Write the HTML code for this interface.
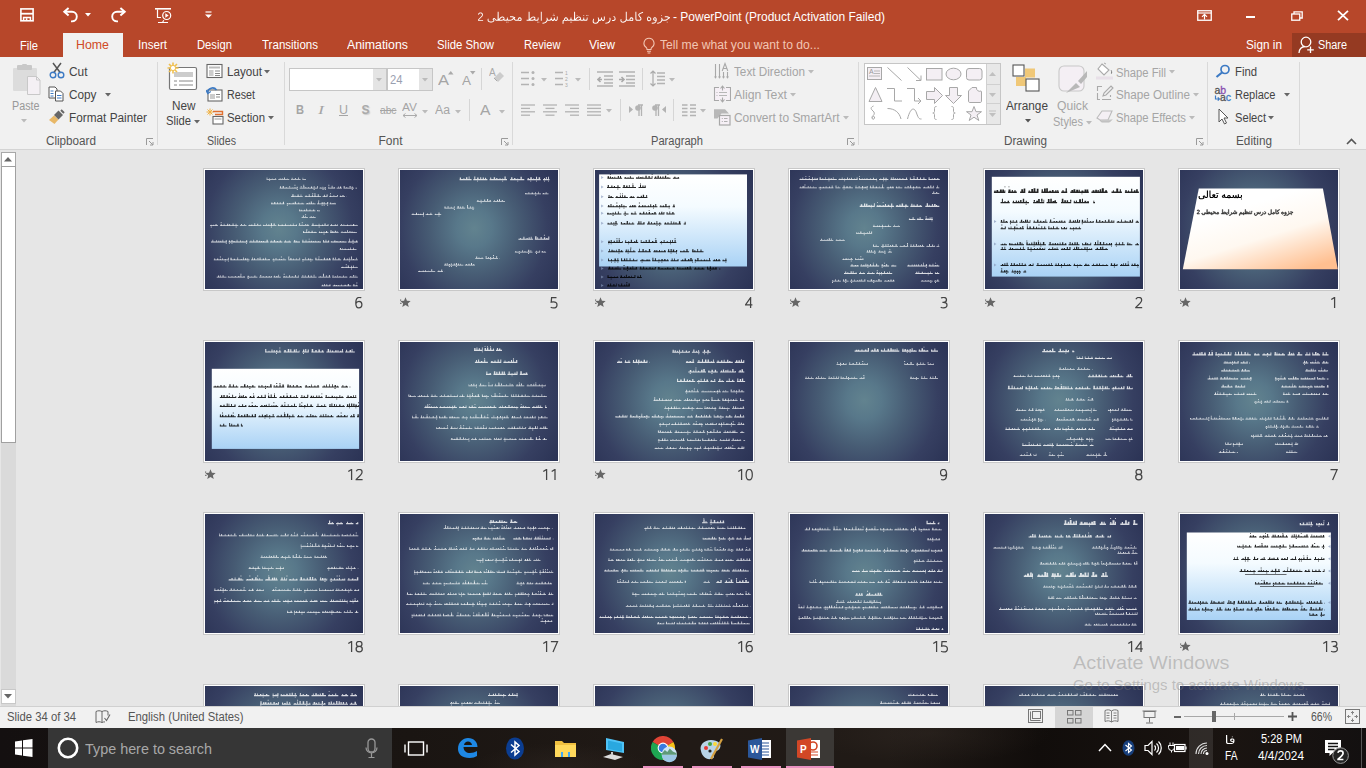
<!DOCTYPE html>
<html><head><meta charset="utf-8"><style>
html,body{margin:0;padding:0;width:1366px;height:768px;overflow:hidden;background:#e6e6e6;font-family:"Liberation Sans", sans-serif;position:relative}
svg{display:block}
</style></head><body>
<div style="position:absolute;left:0px;top:0px;width:1366px;height:57px;background:#b7472a"></div>
<div style="position:absolute;left:1292px;top:33px;width:74px;height:24px;background:#953a22"></div>
<div style="position:absolute;left:63px;top:33px;width:60px;height:24px;background:#f1f1f1"></div>
<svg style="position:absolute;left:19px;top:7px;" width="17" height="17" viewBox="0 0 17 17"><rect x="1.9" y="1.9" width="12.2" height="11.9" fill="none" stroke="#fff" stroke-width="1.6"/><path d="M1.9 6.7h12.2" stroke="#fff" stroke-width="1.8"/><path d="M4.6 14v-3.6h6.8V14" fill="none" stroke="#fff" stroke-width="1.5"/><rect x="6.8" y="11.2" width="1.6" height="2.8" fill="#fff"/></svg>
<svg style="position:absolute;left:62px;top:7px;" width="18" height="16" viewBox="0 0 18 16"><path d="M3 4.8h7a4.8 4.8 0 0 1 0 9.6H9" fill="none" stroke="#fff" stroke-width="1.9"/><path d="M6.6 1.1L2.3 4.8 6.6 8.5" fill="none" stroke="#fff" stroke-width="2"/></svg>
<svg style="position:absolute;left:85px;top:13px;" width="7" height="5" viewBox="0 0 7 5"><path d="M0 0h6L3 3.5z" fill="#fff"/></svg>
<svg style="position:absolute;left:109px;top:7px;" width="18" height="16" viewBox="0 0 18 16"><path d="M15 4.8H8a4.8 4.8 0 0 0 0 9.6H9" fill="none" stroke="#fff" stroke-width="1.9"/><path d="M11.4 1.1L15.7 4.8 11.4 8.5" fill="none" stroke="#fff" stroke-width="2"/></svg>
<svg style="position:absolute;left:155px;top:8px;" width="18" height="16" viewBox="0 0 18 16"><path d="M0 0.8h16" stroke="#fff" stroke-width="1.6"/><path d="M2.5 1.5v8h3.5" fill="none" stroke="#fff" stroke-width="1.2"/><circle cx="11.7" cy="7.5" r="4" fill="none" stroke="#fff" stroke-width="1.2"/><path d="M10.3 5.3l3.4 2.2-3.4 2.2z" fill="#fff"/><path d="M3 14.5h10M7.6 14.3l1.2-2" stroke="#fff" stroke-width="1.1"/></svg>
<svg style="position:absolute;left:205px;top:11px;" width="8" height="8" viewBox="0 0 8 8"><path d="M0.5 1h6" stroke="#fff" stroke-width="1.2"/><path d="M0 3.5h7L3.5 7z" fill="#fff"/></svg>
<svg style="position:absolute;left:0;top:0" width="700" height="30"><path transform="translate(478 11.8) scale(0.9481 1)" d="M199.12 10 199.12 10.75 200 10.75 200 10zM98.38 10 98.38 10.75 99.25 10.75 99.25 10zM97 10 97 10.75 97.75 10.75 97.75 10zM63.75 10 63.75 10.75 64.62 10.75 64.62 10zM62.38 10 62.38 10.75 63.12 10.75 63.12 10zM31.25 10 31.25 10.75 32.12 10.75 32.12 10zM29.88 10 29.88 10.75 30.62 10.75 30.62 10zM139.50 5.88 138.62 5.88 138.88 8 138.38 9.25 137.62 10 136.50 10.62 134.38 11 134.38 12 137.25 11.38 138.25 10.88 139.25 9.88 139.88 7.88 139.75 6.38zM187.12 5.38 186 5.38 185.50 5.62 184.75 6.62 184.75 7.62 185.12 8.38 186.50 9 187.25 9 187.25 9.50 186.38 10.38 185.62 10.75 183.25 11 183.25 12 185.75 11.75 186.88 11.25 187.75 10.50 188.50 8.88 188.50 7.12 188.12 6.12zM185.88 6.75 186.38 6.38 187 6.50 187.38 6.88 187.50 7.88 186.25 7.88 185.75 7.25zM179.12 5 178.38 6.12 178.25 7 178.38 8.25 178.75 8.88 179.88 9.38 180.62 9.38 182.25 8.75 182.88 7.38 182.62 6.38 181.62 5.38 180.62 4.88 179.75 4.75zM179.88 5.75 180.38 5.75 181.25 6.25 181.88 7.12 181.62 8 180.75 8.50 179.62 8.25 179.25 7.62 179.38 6.25zM133.75 4.75 132.75 4.75 132.75 7.38 132.12 8.12 131.38 7.88 130.75 6.75 130.75 5.62 129.75 5.62 129.62 7.12 129 8 128.38 8 127.75 7.38 127.25 5.62 126.25 5.62 126.75 7.50 126.62 8.88 126.12 9.88 124.75 10.88 123 10.88 122.12 10.25 122 8.62 122.50 7 121.62 7 121 8.62 121 10.12 121.25 10.88 122.25 11.75 124.25 12 125.62 11.62 126.38 11.12 127.25 10.12 127.75 8.88 128.12 9.12 129.50 9 130.25 8 131 9 132.50 9.12 133.38 8.38 133.75 7.50zM84.12 4.75 83.12 4.75 83.12 6.88 82.75 7.88 82.38 8.12 81.88 8 81.25 7.38 81 5.62 80 5.62 80 6.88 79.25 8 78.50 8 78 7.50 77.75 6.88 77.75 5.62 76.75 5.62 76.75 7 75.88 8 74 7.88 73.50 7.25 73.25 6 72.25 5.88 72.50 8 72 9.25 71.25 10 70.12 10.62 68 11 68 12 69.75 11.75 71.62 11 72.75 10 73.38 8.62 73.88 9 76.12 9 77.38 8.25 78.38 9.12 79.38 9.12 80 8.88 80.50 8 81.25 9 82.75 9.12 83.75 8.25 84 7.62zM202.50 5.38 199.75 4.50 197 4.38 197 5.38 199 5.38 201 5.88 198.88 7.50 197.50 8 195.25 8 194.62 7.50 194.25 6 193.25 5.88 193.50 8 193 9.25 192.25 10 191.12 10.62 189 11 189 12 190.75 11.75 192.62 11 193.75 10 194.38 8.62 194.88 9 197.38 9 198.88 8.62 201.62 6.62 202.38 6.38zM143.62 4.12 142.50 4.12 143.88 5.75 144.12 7.25 143.50 8 142.88 8.25 141.38 8.12 141.50 9.12 143 9.25 143.88 9 144.75 8.38 145.12 7.62 145 5.88zM193.12 3.50 193.12 4.25 193.88 4.25 193.88 3.50zM80.38 3.50 80.38 4.25 81.12 4.25 81.12 3.50zM78.88 3.50 78.88 4.25 79.75 4.25 79.75 3.50zM115.50 3.25 115.50 4 116.38 4 116.38 3.25zM114.12 3.25 114.12 4 114.88 4 114.88 3.25zM111.12 3.25 111.12 4 112 4 112 3.25zM104.12 3.25 104.12 4 104.88 4 104.88 3.25zM79.62 2 79.62 2.75 80.38 2.75 80.38 2zM1.25 1 0.38 1.75 0 2.75 1 2.88 1.12 2.38 1.75 1.75 3 1.50 4 2.12 4.25 3.12 3.75 4.25 0.38 7.50 0 8.12 0 9 5.38 9 5.38 8.25 1.12 8.12 1.50 7.38 4.75 4.38 5.25 3 4.88 1.62 4.12 1 3.38 0.75 2 0.75zM166 0 166 7.50 166.38 8.38 167.25 9 170.88 9 171.50 8.75 172.25 7.88 172.38 6.38 172 5.62 170.25 3.62 170 3 171 2.25 174.12 1 174.12 0 170.38 1.50 169.12 2.38 169.12 3.75 171.38 6.62 171.25 7.50 170.62 8 167.62 8 167.12 7.62 167 0zM150.25 7.88 150.25 9.25 150.62 10 151.50 10.62 153.25 10.88 155.50 10.12 156.62 8.75 157.25 9 159.75 9 160.25 8.75 161.12 9.25 163 9.12 163.75 8.38 163.88 7 163.25 5.88 162.38 5.50 161.38 5.50 160.75 5.75 160.12 6.38 159.88 7.50 159.50 7.88 157.38 7.88 156.88 7.12 156.88 0 155.88 0 155.88 7.62 155.50 8.62 154 9.75 152.38 9.88 151.75 9.62 151.12 8.62 151.50 7.38 150.50 7.38zM161.38 6.62 162.38 6.62 162.75 7 162.88 7.62 162.50 8.25 161.62 8.38 160.75 7.88 160.88 7.25zM115.62 5.62 114.75 5.62 114.62 7.38 114 8 112.75 8 112.25 7.62 112 6.88 112 5.62 111.12 5.62 111.12 6.88 110.62 7.88 109 8 108.50 7.62 108.62 6.12 107.88 5.12 106.75 4.75 106 4.75 104.62 5.25 103.75 5.88 102.50 7.38 102.38 0 101.38 0 101.25 8 99 7.88 98.50 6.88 98.50 5.62 97.62 5.62 97.62 6.88 97.12 7.88 95.50 8 95 7.62 94.50 6.38 93.88 5.75 92.75 5.38 92.12 5.50 91 6.50 90.75 7.88 90 8.12 89.25 9 89.12 11.88 90.25 11.88 90.25 9.38 91 8.75 92.12 9.25 93.50 9.25 94.38 8.75 95 9 97.25 9 97.88 8.62 98.88 9 105.75 9 107.62 8.38 108.62 9 110.75 9 111.38 8.62 112.38 9 114.38 9 115.12 8.62 115.50 8zM92.62 6.50 93.38 6.62 93.75 7.12 93.75 7.75 93.25 8.38 92.50 8.38 91.75 7.88 91.88 7.12zM107.62 6.38 107.62 6.88 106.12 7.88 103.38 7.88 104.75 6.38 105.88 5.75 107 5.75zM66.25 0 66.25 9 67.25 9 67.25 0zM53.38 0 53.38 7.88 51.25 8 51.25 9 57.75 9 59.38 8.38 60.62 9 62.62 9 63.38 8.62 63.88 7.62 63.88 5.62 63 5.62 63 6.88 62.50 7.88 61 8 60.38 7.62 60.50 6 60.25 5.50 59.62 5 58.62 4.75 57.38 4.88 56.38 5.38 54.50 7.25 54.38 0zM59.50 6.25 59.50 6.88 58.38 7.75 57.50 8 55.25 7.88 56.38 6.62 57.75 5.75 58.88 5.75zM10.12 8.75 10.38 9.38 11.38 10.25 12.88 10.62 14.50 10.62 16 10.25 17.25 9.25 17.25 8.25 16.50 7.50 17 7 18.88 9 25.12 9 26.75 8.38 28 9 30.12 9 30.75 8.62 31.75 9 34.12 9 36.12 8.38 37.62 7.12 38.25 8.12 39.50 9 41.88 9 42.38 8.75 43.25 9.25 44.75 9.25 45.75 8.62 46 8 46 7 45.38 5.88 44.50 5.50 43.50 5.50 42.88 5.75 42.25 6.38 42 7.50 41.62 7.88 39.88 8 39.25 7.62 38.50 6.62 39.25 6.25 39.25 5.38 36.50 4.50 33.75 4.38 33.75 5.38 35.75 5.38 37.75 5.88 34.88 7.88 31.88 7.88 31.38 6.88 31.38 5.62 30.50 5.62 30.50 6.88 30.25 7.62 29.75 8 28.38 8 27.88 7.62 28 6.12 27.25 5.12 26.12 4.75 25.38 4.75 24 5.25 23.12 5.88 21.88 7.38 21.75 0 20.75 0 20.62 8 19.12 8 17.88 6.38 17.38 6.12 16.50 6.12 15.50 7.12 15.50 7.88 16.38 8.75 15.62 9.38 14.62 9.62 12.62 9.62 11.88 9.38 11.12 8.62 11.12 7.50 11.38 6.88 10.38 7 10.12 7.62zM43.50 6.62 44.50 6.62 44.88 7 45 7.62 44.62 8.25 43.75 8.38 42.88 7.88 43 7.25zM27 6.38 27 6.88 25.50 7.88 22.75 7.88 24.12 6.38 25.25 5.75 26.38 5.75z" fill="#fff" fill-rule="evenodd"/></svg>
<span id="t0" style="position:absolute;left:673px;top:10.64px;font-size:12px;line-height:12px;color:#ffffff;white-space:nowrap;">- PowerPoint (Product Activation Failed)</span>
<svg style="position:absolute;left:1197px;top:10px;" width="15" height="11" viewBox="0 0 15 11"><rect x="0.75" y="0.75" width="13.5" height="9.5" fill="none" stroke="#fff" stroke-width="1.3"/><path d="M0.75 3h13.5" stroke="#fff" stroke-width="1.2"/><path d="M7.5 9.5V4.5M5 6.8l2.5-2.5 2.5 2.5" fill="none" stroke="#fff" stroke-width="1.2"/></svg>
<div style="position:absolute;left:1246px;top:16px;width:9px;height:2px;background:#fff"></div>
<svg style="position:absolute;left:1291px;top:11px;" width="12" height="10" viewBox="0 0 12 10"><rect x="0.75" y="3" width="8" height="6.2" fill="none" stroke="#fff" stroke-width="1.3"/><path d="M3 3V0.8h8.2v6.2H9" fill="none" stroke="#fff" stroke-width="1.3"/></svg>
<svg style="position:absolute;left:1337px;top:10px;" width="12" height="11" viewBox="0 0 12 11"><path d="M1 0.8l10 9.4M11 0.8l-10 9.4" stroke="#fff" stroke-width="1.8"/></svg>
<span id="t1" style="position:absolute;left:20px;top:40.34px;font-size:12px;line-height:12px;color:#ffffff;white-space:nowrap;transform:scaleX(0.9305);transform-origin:0 0;">File</span>
<span id="t2" style="position:absolute;left:76px;top:39.34px;font-size:12px;line-height:12px;color:#d04a26;white-space:nowrap;transform:scaleX(1.0307);transform-origin:0 0;">Home</span>
<span id="t3" style="position:absolute;left:138px;top:39.34px;font-size:12px;line-height:12px;color:#ffffff;white-space:nowrap;transform:scaleX(0.9662);transform-origin:0 0;">Insert</span>
<span id="t4" style="position:absolute;left:196.5px;top:39.34px;font-size:12px;line-height:12px;color:#ffffff;white-space:nowrap;transform:scaleX(0.9368);transform-origin:0 0;">Design</span>
<span id="t5" style="position:absolute;left:261.5px;top:39.34px;font-size:12px;line-height:12px;color:#ffffff;white-space:nowrap;transform:scaleX(0.9614);transform-origin:0 0;">Transitions</span>
<span id="t6" style="position:absolute;left:347px;top:39.34px;font-size:12px;line-height:12px;color:#ffffff;white-space:nowrap;transform:scaleX(1.0274);transform-origin:0 0;">Animations</span>
<span id="t7" style="position:absolute;left:436.5px;top:39.34px;font-size:12px;line-height:12px;color:#ffffff;white-space:nowrap;transform:scaleX(0.9493);transform-origin:0 0;">Slide Show</span>
<span id="t8" style="position:absolute;left:523.5px;top:39.34px;font-size:12px;line-height:12px;color:#ffffff;white-space:nowrap;transform:scaleX(0.9274);transform-origin:0 0;">Review</span>
<span id="t9" style="position:absolute;left:588.5px;top:39.34px;font-size:12px;line-height:12px;color:#ffffff;white-space:nowrap;transform:scaleX(1.0079);transform-origin:0 0;">View</span>
<svg style="position:absolute;left:642px;top:37px;" width="14" height="17" viewBox="0 0 14 17"><path d="M7 1.2a5 5 0 0 0-3 9c.8.7 1 1.4 1 2.3h4c0-.9.2-1.6 1-2.3a5 5 0 0 0-3-9z" fill="none" stroke="#f3c7b5" stroke-width="1.1"/><path d="M5 14.3h4M5.6 16h2.8" stroke="#f3c7b5" stroke-width="1.1"/></svg>
<span id="t10" style="position:absolute;left:660px;top:39.34px;font-size:12px;line-height:12px;color:#f2c6b4;white-space:nowrap;transform:scaleX(1.0121);transform-origin:0 0;">Tell me what you want to do...</span>
<span id="t11" style="position:absolute;left:1246px;top:39.34px;font-size:12px;line-height:12px;color:#ffffff;white-space:nowrap;transform:scaleX(0.9808);transform-origin:0 0;">Sign in</span>
<svg style="position:absolute;left:1298px;top:36px;" width="17" height="18" viewBox="0 0 17 18"><circle cx="8" cy="6" r="4.8" fill="none" stroke="#fff" stroke-width="1.3"/><path d="M1 17c0-4 2.8-6.5 6-6.5" fill="none" stroke="#fff" stroke-width="1.3"/><path d="M12.5 10.5v6.5M9.2 13.8h6.6" stroke="#fff" stroke-width="1.3"/></svg>
<span id="t12" style="position:absolute;left:1318px;top:39.34px;font-size:12px;line-height:12px;color:#ffffff;white-space:nowrap;transform:scaleX(0.9054);transform-origin:0 0;">Share</span>
<div style="position:absolute;left:0px;top:57px;width:1366px;height:92px;background:#f1f1f1"></div>
<div style="position:absolute;left:0px;top:149px;width:1366px;height:1px;background:#d4d4d4"></div>
<div style="position:absolute;left:157px;top:62px;width:1px;height:83px;background:#d9d9d9"></div>
<div style="position:absolute;left:284px;top:62px;width:1px;height:83px;background:#d9d9d9"></div>
<div style="position:absolute;left:512px;top:62px;width:1px;height:83px;background:#d9d9d9"></div>
<div style="position:absolute;left:858px;top:62px;width:1px;height:83px;background:#d9d9d9"></div>
<div style="position:absolute;left:1207px;top:62px;width:1px;height:83px;background:#d9d9d9"></div>
<div style="position:absolute;left:1299px;top:62px;width:1px;height:83px;background:#d9d9d9"></div>
<span id="t13" style="position:absolute;left:46px;top:134.54px;font-size:12px;line-height:12px;color:#555;white-space:nowrap;transform:scaleX(0.9732);transform-origin:0 0;">Clipboard</span>
<span id="t14" style="position:absolute;left:206.5px;top:134.54px;font-size:12px;line-height:12px;color:#555;white-space:nowrap;transform:scaleX(0.8872);transform-origin:0 0;">Slides</span>
<span id="t15" style="position:absolute;left:378.5px;top:134.54px;font-size:12px;line-height:12px;color:#555;white-space:nowrap;">Font</span>
<span id="t16" style="position:absolute;left:651px;top:134.54px;font-size:12px;line-height:12px;color:#555;white-space:nowrap;transform:scaleX(0.9278);transform-origin:0 0;">Paragraph</span>
<span id="t17" style="position:absolute;left:1003.5px;top:134.54px;font-size:12px;line-height:12px;color:#555;white-space:nowrap;transform:scaleX(0.9769);transform-origin:0 0;">Drawing</span>
<span id="t18" style="position:absolute;left:1235.5px;top:134.54px;font-size:12px;line-height:12px;color:#555;white-space:nowrap;transform:scaleX(0.9808);transform-origin:0 0;">Editing</span>
<svg style="position:absolute;left:146px;top:138px;" width="8" height="8" viewBox="0 0 8 8"><path d="M0.5 7V0.5H7" fill="none" stroke="#9a9a9a" stroke-width="1"/><path d="M3 3l4 4M7 4v3H4" fill="none" stroke="#9a9a9a" stroke-width="1"/></svg>
<svg style="position:absolute;left:501px;top:138px;" width="8" height="8" viewBox="0 0 8 8"><path d="M0.5 7V0.5H7" fill="none" stroke="#9a9a9a" stroke-width="1"/><path d="M3 3l4 4M7 4v3H4" fill="none" stroke="#9a9a9a" stroke-width="1"/></svg>
<svg style="position:absolute;left:847px;top:138px;" width="8" height="8" viewBox="0 0 8 8"><path d="M0.5 7V0.5H7" fill="none" stroke="#9a9a9a" stroke-width="1"/><path d="M3 3l4 4M7 4v3H4" fill="none" stroke="#9a9a9a" stroke-width="1"/></svg>
<svg style="position:absolute;left:1196px;top:138px;" width="8" height="8" viewBox="0 0 8 8"><path d="M0.5 7V0.5H7" fill="none" stroke="#9a9a9a" stroke-width="1"/><path d="M3 3l4 4M7 4v3H4" fill="none" stroke="#9a9a9a" stroke-width="1"/></svg>
<svg style="position:absolute;left:1346px;top:138px;" width="11" height="7" viewBox="0 0 11 7"><path d="M1 6l4.5-4.5L10 6" fill="none" stroke="#555" stroke-width="1.6"/></svg>
<svg style="position:absolute;left:12px;top:64px;" width="31" height="32" viewBox="0 0 31 32"><rect x="1" y="4" width="24" height="23" rx="1" fill="#dcdcdc"/><rect x="5" y="1" width="15" height="5" rx="1" fill="#c8c8c8"/><rect x="10" y="0" width="5" height="3" rx="1" fill="#c8c8c8"/><path d="M15.5 12.5h9l3.5 3.5v14.5h-12.5z" fill="#f4f0f4" stroke="#c8c8c8" stroke-width="1"/><path d="M24.5 12.5v3.5h3.5" fill="none" stroke="#c8c8c8"/></svg>
<span id="t19" style="position:absolute;left:11.5px;top:100.34px;font-size:12px;line-height:12px;color:#999;white-space:nowrap;transform:scaleX(0.8961);transform-origin:0 0;">Paste</span>
<svg style="position:absolute;left:21px;top:119px;" width="7" height="4" viewBox="0 0 7 4"><path d="M0 0h6L3 3.5z" fill="#bbb"/></svg>
<svg style="position:absolute;left:49px;top:62px;" width="16" height="17" viewBox="0 0 16 17"><path d="M4 1l7.5 10M12 1L4.5 11" stroke="#555" stroke-width="1.5"/><circle cx="4" cy="13" r="2.8" fill="none" stroke="#3c7ac4" stroke-width="1.4"/><circle cx="12" cy="13" r="2.8" fill="none" stroke="#3c7ac4" stroke-width="1.4"/></svg>
<span id="t20" style="position:absolute;left:68.5px;top:66.24px;font-size:12px;line-height:12px;color:#444444;white-space:nowrap;transform:scaleX(0.9900);transform-origin:0 0;">Cut</span>
<svg style="position:absolute;left:48px;top:86px;" width="17" height="16" viewBox="0 0 17 16"><path d="M1 1h6l2 2v9H1z" fill="#fff" stroke="#555" stroke-width="1"/><path d="M7.5 5h5l2.5 2.5V15H7.5z" fill="#fff" stroke="#555" stroke-width="1"/><path d="M2.5 5h3M2.5 7.5h3M2.5 10h3" stroke="#3c7ac4"/><path d="M9 9.5h4.5M9 12h4.5" stroke="#3c7ac4"/></svg>
<span id="t21" style="position:absolute;left:68.5px;top:89.34px;font-size:12px;line-height:12px;color:#444444;white-space:nowrap;transform:scaleX(0.9816);transform-origin:0 0;">Copy</span>
<svg style="position:absolute;left:105px;top:93px;" width="7" height="4" viewBox="0 0 7 4"><path d="M0 0h6L3 3.5z" fill="#666"/></svg>
<svg style="position:absolute;left:48px;top:109px;" width="18" height="16" viewBox="0 0 18 16"><path d="M1 11l5-4.5 4.5 4-4 4.5z" fill="#e8b868"/><path d="M6 6l4.5-4.5 4.5 4.5-4.5 4.5z" fill="#666"/><path d="M13 1l3 3" stroke="#666" stroke-width="2"/></svg>
<span id="t22" style="position:absolute;left:68.5px;top:111.64px;font-size:12px;line-height:12px;color:#444444;white-space:nowrap;transform:scaleX(0.9829);transform-origin:0 0;">Format Painter</span>
<svg style="position:absolute;left:166px;top:62px;" width="33" height="29" viewBox="0 0 33 29"><rect x="3.5" y="5.5" width="27" height="22" rx="1.5" fill="#fff" stroke="#777" stroke-width="1.2"/><rect x="8" y="10" width="19" height="5" fill="#ccc"/><path d="M8 19h3M13 19h14M8 23h3M13 23h14" stroke="#888" stroke-width="1"/><g stroke="#f0c050" stroke-width="1.6"><path d="M7 0.5v11M1.5 6h11M3 2l8 8M11 2l-8 8"/></g><circle cx="7" cy="6" r="2.6" fill="#fff" stroke="#f0c050" stroke-width="1"/></svg>
<span id="t23" style="position:absolute;left:171.5px;top:100.24px;font-size:12px;line-height:12px;color:#444444;white-space:nowrap;transform:scaleX(0.9785);transform-origin:0 0;">New</span>
<span id="t24" style="position:absolute;left:166px;top:115.34px;font-size:12px;line-height:12px;color:#444444;white-space:nowrap;transform:scaleX(0.9368);transform-origin:0 0;">Slide</span>
<svg style="position:absolute;left:194px;top:120px;" width="7" height="4" viewBox="0 0 7 4"><path d="M0 0h6L3 3.5z" fill="#666"/></svg>
<svg style="position:absolute;left:206px;top:63px;" width="17" height="16" viewBox="0 0 17 16"><rect x="1" y="1.5" width="15" height="13" fill="#fff" stroke="#666" stroke-width="1.1"/><rect x="3" y="3.5" width="11" height="2" fill="#bbb"/><rect x="3" y="7" width="4.5" height="6" fill="#ccc"/><path d="M9 8h5M9 10.5h5M9 12.5h5" stroke="#888"/></svg>
<span id="t25" style="position:absolute;left:226.5px;top:66.24px;font-size:12px;line-height:12px;color:#444444;white-space:nowrap;transform:scaleX(0.9714);transform-origin:0 0;">Layout</span>
<svg style="position:absolute;left:264px;top:70px;" width="7" height="4" viewBox="0 0 7 4"><path d="M0 0h6L3 3.5z" fill="#666"/></svg>
<svg style="position:absolute;left:206px;top:86px;" width="17" height="16" viewBox="0 0 17 16"><rect x="2" y="4" width="14" height="11" fill="#fff" stroke="#666" stroke-width="1.1"/><rect x="4" y="8" width="5" height="5" fill="#ccc"/><path d="M10 8.5h4M10 11h4" stroke="#888"/><path d="M1.5 6.5a5 5 0 0 1 9-2.5" fill="none" stroke="#3c7ac4" stroke-width="1.6"/><path d="M0 4l1.8 3.5 3-2" fill="none" stroke="#3c7ac4" stroke-width="1.4"/></svg>
<span id="t26" style="position:absolute;left:226.5px;top:89.34px;font-size:12px;line-height:12px;color:#444444;white-space:nowrap;transform:scaleX(0.8929);transform-origin:0 0;">Reset</span>
<svg style="position:absolute;left:206px;top:108px;" width="18" height="17" viewBox="0 0 18 17"><g stroke="#f0b040" stroke-width="1"><path d="M4 0.5v7M0.5 4h7M1.5 1.5l5 5M6.5 1.5l-5 5"/></g><path d="M7 3.5h9.5v3H9" fill="none" stroke="#e07030" stroke-width="1.4"/><rect x="7" y="8.5" width="10" height="7.5" fill="#fff" stroke="#666" stroke-width="1.1"/><path d="M8.5 11h7" stroke="#aaa" stroke-width="1.2"/></svg>
<span id="t27" style="position:absolute;left:226.5px;top:111.64px;font-size:12px;line-height:12px;color:#444444;white-space:nowrap;transform:scaleX(0.9493);transform-origin:0 0;">Section</span>
<svg style="position:absolute;left:268px;top:116px;" width="7" height="4" viewBox="0 0 7 4"><path d="M0 0h6L3 3.5z" fill="#666"/></svg>
<div style="position:absolute;left:289px;top:68px;width:98px;height:23px;background:#fff;border:1px solid #c6c6c6;box-sizing:border-box"></div>
<div style="position:absolute;left:373px;top:69px;width:13px;height:21px;background:#e4e4e4"></div>
<svg style="position:absolute;left:376px;top:78px;" width="7" height="4" viewBox="0 0 7 4"><path d="M0 0h6L3 3.5z" fill="#bbb"/></svg>
<div style="position:absolute;left:387px;top:68px;width:46px;height:23px;background:#fff;border:1px solid #c6c6c6;box-sizing:border-box"></div>
<div style="position:absolute;left:419px;top:69px;width:13px;height:21px;background:#e4e4e4"></div>
<svg style="position:absolute;left:422px;top:78px;" width="7" height="4" viewBox="0 0 7 4"><path d="M0 0h6L3 3.5z" fill="#bbb"/></svg>
<span id="t28" style="position:absolute;left:390px;top:74.04px;font-size:12px;line-height:12px;color:#9aa0b0;white-space:nowrap;transform:scaleX(0.9357);transform-origin:0 0;">24</span>
<span id="t29" style="position:absolute;left:438px;top:72.30px;font-size:15px;line-height:15px;color:#a5a5a5;white-space:nowrap;transform:scaleX(1.0983);transform-origin:0 0;">A</span>
<svg style="position:absolute;left:448px;top:71px;" width="6" height="4" viewBox="0 0 6 4"><path d="M0 3.5h5.5L2.75 0z" fill="#aaa"/></svg>
<span id="t30" style="position:absolute;left:462px;top:74.84px;font-size:12px;line-height:12px;color:#a5a5a5;white-space:nowrap;transform:scaleX(1.1228);transform-origin:0 0;">A</span>
<svg style="position:absolute;left:470px;top:71px;" width="6" height="4" viewBox="0 0 6 4"><path d="M0 0h5.5L2.75 3.5z" fill="#aaa"/></svg>
<div style="position:absolute;left:481px;top:68px;width:1px;height:22px;background:#d6d6d6"></div>
<svg style="position:absolute;left:489px;top:67px;" width="17" height="16" viewBox="0 0 17 16"><text x="0" y="9" font-size="10" fill="#aaa" font-family="Liberation Sans">A</text><path d="M5 11l6-6 4 4-6 6z" fill="#ccc"/><path d="M5 11l3 3" stroke="#aaa"/></svg>
<span id="t31" style="position:absolute;left:295.5px;top:103.84px;font-size:12px;line-height:12px;color:#a5a5a5;white-space:nowrap;transform:scaleX(0.9225);transform-origin:0 0;font-weight:bold">B</span>
<span id="t32" style="position:absolute;left:317.5px;top:103.84px;font-size:12px;line-height:12px;color:#a5a5a5;white-space:nowrap;transform:scaleX(1.5000);transform-origin:0 0;font-style:italic;font-family:Liberation Serif">I</span>
<span id="t33" style="position:absolute;left:339px;top:103.84px;font-size:12px;line-height:12px;color:#a5a5a5;white-space:nowrap;transform:scaleX(1.0378);transform-origin:0 0;text-decoration:underline">U</span>
<span id="t34" style="position:absolute;left:361.5px;top:103.84px;font-size:12px;line-height:12px;color:#aaa;white-space:nowrap;font-weight:bold;text-shadow:1px 1px 1px #ccc">S</span>
<span id="t35" style="position:absolute;left:379.5px;top:104.69px;font-size:11px;line-height:11px;color:#a5a5a5;white-space:nowrap;transform:scaleX(0.9296);transform-origin:0 0;text-decoration:line-through">abc</span>
<span id="t36" style="position:absolute;left:402px;top:101.69px;font-size:11px;line-height:11px;color:#a5a5a5;white-space:nowrap;transform:scaleX(1.0823);transform-origin:0 0;">AV</span>
<svg style="position:absolute;left:402px;top:113px;" width="16" height="5" viewBox="0 0 16 5"><path d="M1 2.5h14M3.5 0.5l-2.5 2 2.5 2M12.5 0.5l2.5 2-2.5 2" fill="none" stroke="#aaa" stroke-width="1"/></svg>
<svg style="position:absolute;left:422px;top:110px;" width="7" height="4" viewBox="0 0 7 4"><path d="M0 0h6L3 3.5z" fill="#bbb"/></svg>
<span id="t37" style="position:absolute;left:435px;top:103.84px;font-size:12px;line-height:12px;color:#a5a5a5;white-space:nowrap;transform:scaleX(1.0213);transform-origin:0 0;">Aa</span>
<svg style="position:absolute;left:455px;top:110px;" width="7" height="4" viewBox="0 0 7 4"><path d="M0 0h6L3 3.5z" fill="#bbb"/></svg>
<div style="position:absolute;left:469px;top:99px;width:1px;height:22px;background:#d6d6d6"></div>
<span id="t38" style="position:absolute;left:480px;top:102.30px;font-size:15px;line-height:15px;color:#a5a5a5;white-space:nowrap;transform:scaleX(1.0484);transform-origin:0 0;">A</span>
<svg style="position:absolute;left:499px;top:110px;" width="7" height="4" viewBox="0 0 7 4"><path d="M0 0h6L3 3.5z" fill="#bbb"/></svg>
<svg style="position:absolute;left:521px;top:70px;" width="14" height="17" viewBox="0 0 14 17"><path d="M0 2.5h8M0 8.5h8M0 14.5h8" stroke="#b3b3b3" stroke-width="1.3"/><circle cx="12" cy="2.5" r="1.5" fill="#b3b3b3"/><circle cx="12" cy="8.5" r="1.5" fill="#b3b3b3"/><circle cx="12" cy="14.5" r="1.5" fill="#b3b3b3"/></svg>
<svg style="position:absolute;left:541px;top:78px;" width="7" height="4" viewBox="0 0 7 4"><path d="M0 0h6L3 3.5z" fill="#bbb"/></svg>
<svg style="position:absolute;left:555px;top:70px;" width="15" height="17" viewBox="0 0 15 17"><path d="M0 2.5h8M0 8.5h8M0 14.5h8" stroke="#b3b3b3" stroke-width="1.3"/><text x="10" y="5" font-size="5" fill="#aaa">1</text><text x="10" y="11" font-size="5" fill="#aaa">2</text><text x="10" y="17" font-size="5" fill="#aaa">3</text></svg>
<svg style="position:absolute;left:575px;top:78px;" width="7" height="4" viewBox="0 0 7 4"><path d="M0 0h6L3 3.5z" fill="#bbb"/></svg>
<div style="position:absolute;left:589px;top:68px;width:1px;height:22px;background:#d6d6d6"></div>
<svg style="position:absolute;left:597px;top:71px;" width="17" height="16" viewBox="0 0 17 16"><path d="M0 1h16M7 5h9M7 8.5h9M7 12h9M0 15h16" stroke="#b3b3b3" stroke-width="1.3"/><path d="M5 8.5H1M3.5 6l-2.5 2.5 2.5 2.5" fill="none" stroke="#aaa" stroke-width="1.6"/></svg>
<svg style="position:absolute;left:619px;top:71px;" width="17" height="16" viewBox="0 0 17 16"><path d="M0 1h16M7 5h9M7 8.5h9M7 12h9M0 15h16" stroke="#b3b3b3" stroke-width="1.3"/><path d="M0 8.5h4.5M2.5 6l2.5 2.5-2.5 2.5" fill="none" stroke="#aaa" stroke-width="1.6"/></svg>
<div style="position:absolute;left:642px;top:68px;width:1px;height:22px;background:#d6d6d6"></div>
<svg style="position:absolute;left:650px;top:70px;" width="16" height="17" viewBox="0 0 16 17"><path d="M3 1v15M0.5 3.5L3 1l2.5 2.5M0.5 13.5L3 16l2.5-2.5" fill="none" stroke="#aaa" stroke-width="1.2"/><path d="M7 3h8M7 6.5h8M7 10h8M7 13.5h8" stroke="#b3b3b3" stroke-width="1.3"/></svg>
<svg style="position:absolute;left:669px;top:78px;" width="7" height="4" viewBox="0 0 7 4"><path d="M0 0h6L3 3.5z" fill="#bbb"/></svg>
<svg style="position:absolute;left:521px;top:104px;" width="14" height="13" viewBox="0 0 14 13"><path d="M0 1.0h14" stroke="#b3b3b3" stroke-width="1.3"/><path d="M0 4.4h9" stroke="#b3b3b3" stroke-width="1.3"/><path d="M0 7.8h14" stroke="#b3b3b3" stroke-width="1.3"/><path d="M0 11.2h9" stroke="#b3b3b3" stroke-width="1.3"/></svg>
<svg style="position:absolute;left:543px;top:104px;" width="14" height="13" viewBox="0 0 14 13"><path d="M0.0 1.0h14" stroke="#b3b3b3" stroke-width="1.3"/><path d="M2.5 4.4h9" stroke="#b3b3b3" stroke-width="1.3"/><path d="M0.0 7.8h14" stroke="#b3b3b3" stroke-width="1.3"/><path d="M2.5 11.2h9" stroke="#b3b3b3" stroke-width="1.3"/></svg>
<svg style="position:absolute;left:565px;top:104px;" width="14" height="13" viewBox="0 0 14 13"><path d="M0 1.0h14" stroke="#b3b3b3" stroke-width="1.3"/><path d="M5 4.4h9" stroke="#b3b3b3" stroke-width="1.3"/><path d="M0 7.8h14" stroke="#b3b3b3" stroke-width="1.3"/><path d="M5 11.2h9" stroke="#b3b3b3" stroke-width="1.3"/></svg>
<svg style="position:absolute;left:587px;top:104px;" width="14" height="13" viewBox="0 0 14 13"><path d="M0 1.0h14" stroke="#b3b3b3" stroke-width="1.3"/><path d="M0 4.4h14" stroke="#b3b3b3" stroke-width="1.3"/><path d="M0 7.8h14" stroke="#b3b3b3" stroke-width="1.3"/><path d="M0 11.2h14" stroke="#b3b3b3" stroke-width="1.3"/></svg>
<svg style="position:absolute;left:606px;top:109px;" width="7" height="4" viewBox="0 0 7 4"><path d="M0 0h6L3 3.5z" fill="#bbb"/></svg>
<div style="position:absolute;left:620px;top:99px;width:1px;height:22px;background:#d6d6d6"></div>
<svg style="position:absolute;left:629px;top:104px;" width="14" height="13" viewBox="0 0 14 13"><path d="M0 2l4 3.5-4 3.5z" fill="#b3b3b3"/><path d="M9 1h5M10 1v11M12.5 1v11" stroke="#b3b3b3" stroke-width="1.3"/><circle cx="9" cy="4" r="2.8" fill="#b3b3b3"/></svg>
<svg style="position:absolute;left:652px;top:104px;" width="14" height="13" viewBox="0 0 14 13"><path d="M14 2l-4 3.5 4 3.5z" fill="#b3b3b3"/><path d="M3 1h5M4 1v11M6.5 1v11" stroke="#b3b3b3" stroke-width="1.3"/><circle cx="3" cy="4" r="2.8" fill="#b3b3b3"/></svg>
<div style="position:absolute;left:673px;top:99px;width:1px;height:22px;background:#d6d6d6"></div>
<svg style="position:absolute;left:682px;top:104px;" width="14" height="13" viewBox="0 0 14 13"><path d="M0 1h5.5M0 4.5h5.5M0 8h5.5M0 11.5h5.5M8 1h6M8 4.5h6M8 8h6M8 11.5h6" stroke="#b3b3b3" stroke-width="1.3"/></svg>
<svg style="position:absolute;left:700px;top:109px;" width="7" height="4" viewBox="0 0 7 4"><path d="M0 0h6L3 3.5z" fill="#bbb"/></svg>
<svg style="position:absolute;left:713px;top:62px;" width="17" height="18" viewBox="0 0 17 18"><g fill="none" stroke="#a8a8a8" stroke-width="1.1"><path d="M2.5 2v13M6.5 2v13M10.5 10v5M14.5 10v5"/><path d="M9.2 9l2.8-7.5 2.8 7.5M10.3 6.5h3.4"/></g><path d="M1 14.5h3l-1.5 2.2zM5 14.5h3l-1.5 2.2zM9 14.5h3l-1.5 2.2zM13 14.5h3l-1.5 2.2z" fill="#a8a8a8"/></svg>
<span id="t39" style="position:absolute;left:733.5px;top:66.34px;font-size:12px;line-height:12px;color:#a5a5a5;white-space:nowrap;transform:scaleX(0.9766);transform-origin:0 0;">Text Direction</span>
<svg style="position:absolute;left:808px;top:70px;" width="7" height="4" viewBox="0 0 7 4"><path d="M0 0h6L3 3.5z" fill="#bbb"/></svg>
<svg style="position:absolute;left:713px;top:85px;" width="18" height="18" viewBox="0 0 18 18"><rect x="2" y="2.5" width="15" height="13" fill="#f6f0f6"/><path d="M6 2.5H1.5v13H6M13 2.5h4.5v13H13" fill="none" stroke="#a8a8a8" stroke-width="1.1"/><path d="M9.5 1.5v4M9.5 12.5v4.5" stroke="#a8a8a8" stroke-width="1.1"/><path d="M7.5 3.5l2-2.3 2 2.3M7.5 14.5l2 2.3 2-2.3" fill="none" stroke="#a8a8a8" stroke-width="1.1"/><path d="M3.5 7.5h1M6 7.5h8M3.5 10.5h1M6 10.5h8" stroke="#b0b0b0" stroke-width="0.9"/></svg>
<span id="t40" style="position:absolute;left:733.5px;top:89.34px;font-size:12px;line-height:12px;color:#a5a5a5;white-space:nowrap;transform:scaleX(1.0229);transform-origin:0 0;">Align Text</span>
<svg style="position:absolute;left:790px;top:93px;" width="7" height="4" viewBox="0 0 7 4"><path d="M0 0h6L3 3.5z" fill="#bbb"/></svg>
<svg style="position:absolute;left:713px;top:108px;" width="18" height="18" viewBox="0 0 18 18"><path d="M1 1.2h11l4 4.3H8.5l-4 5H1z" fill="#b8b8b8"/><rect x="6.5" y="7.5" width="10.5" height="9.5" fill="#f6f0f6" stroke="#a8a8a8" stroke-width="1.2"/><path d="M8.8 10.5h1M11 10.5h3.5M8.8 13.5h1M11 13.5h3.5" stroke="#a8a8a8" stroke-width="0.9"/></svg>
<span id="t41" style="position:absolute;left:733.5px;top:111.64px;font-size:12px;line-height:12px;color:#a5a5a5;white-space:nowrap;transform:scaleX(0.9950);transform-origin:0 0;">Convert to SmartArt</span>
<svg style="position:absolute;left:843px;top:116px;" width="7" height="4" viewBox="0 0 7 4"><path d="M0 0h6L3 3.5z" fill="#bbb"/></svg>
<div style="position:absolute;left:864px;top:63px;width:137px;height:62px;background:#fff;border:1px solid #c6c6c6;box-sizing:border-box"></div>
<div style="position:absolute;left:986px;top:64px;width:14px;height:60px;background:#e8e8e8;border-left:1px solid #d0d0d0;box-sizing:border-box"></div>
<div style="position:absolute;left:986px;top:84px;width:14px;height:1px;background:#d0d0d0"></div>
<div style="position:absolute;left:986px;top:103px;width:14px;height:1px;background:#d0d0d0"></div>
<svg style="position:absolute;left:989px;top:72px;" width="8" height="5" viewBox="0 0 8 5"><path d="M0 4h7L3.5 0z" fill="#c0c0c0"/></svg>
<svg style="position:absolute;left:989px;top:93px;" width="8" height="5" viewBox="0 0 8 5"><path d="M0 0h7L3.5 4z" fill="#c0c0c0"/></svg>
<svg style="position:absolute;left:989px;top:110px;" width="8" height="8" viewBox="0 0 8 8"><path d="M0 1h7" stroke="#c0c0c0"/><path d="M0 3h7L3.5 7z" fill="#c0c0c0"/></svg>
<svg style="position:absolute;left:864px;top:64px;" width="120" height="58" viewBox="0 0 120 58"><rect x="3.5" y="3.5" width="14" height="12" stroke="#a8a8a8" stroke-width="1" fill="#f4eff4"/><text x="5" y="10" font-size="7" fill="#999" font-family="Liberation Sans">A</text><path d="M10 7h6M10 9.5h6M5 12h11" stroke="#aaa" stroke-width="0.8"/><path d="M23.5 3.5l14 13" stroke="#a8a8a8" stroke-width="1" fill="none"/><path d="M43.5 3.5l13.5 13M57 11.5v5h-5" stroke="#a8a8a8" stroke-width="1" fill="none"/><rect x="62.5" y="4.5" width="15.5" height="11.5" stroke="#a8a8a8" stroke-width="1" fill="#f4eff4"/><ellipse cx="89.5" cy="10" rx="7.5" ry="5.8" stroke="#a8a8a8" stroke-width="1" fill="#f4eff4"/><rect x="102.5" y="4.5" width="15.5" height="11.5" rx="2.5" stroke="#a8a8a8" stroke-width="1" fill="#f4eff4"/><path d="M5 37.5l6.5-14 6.5 14z" stroke="#a8a8a8" stroke-width="1" fill="#f4eff4"/><path d="M23 24.5h7.5v12.5H38" stroke="#a8a8a8" stroke-width="1" fill="none"/><path d="M43 24.5h7.5V37H57M54 34l3 3-3 3" stroke="#a8a8a8" stroke-width="1" fill="none"/><path d="M62.5 27.5h8v-4l8 8-8 8v-4h-8z" stroke="#a8a8a8" stroke-width="1" fill="#f4eff4"/><path d="M85.5 23.5h8v8h4l-8 8-8-8h4z" stroke="#a8a8a8" stroke-width="1" fill="#f4eff4"/><path d="M104.5 27l3.5-3.5h4.5a3.2 3.2 0 0 0 4.5 3.5 1 1 0 0 1 .5 .5v9.5c0 1-.5 1.5-1.5 1.5h-10c-1 0-1.5-.5-1.5-1.5z" stroke="#a8a8a8" stroke-width="1" fill="#f4eff4"/><path d="M9.5 42c-2.5 1-3 2.5-1.5 4s3 2.5 2 4.5-2.5 1.5-2 3.5 2 1.5 2.5 0-1-2.5-2-.5" stroke="#a8a8a8" stroke-width="1" fill="none"/><path d="M23.5 44.5c7 0 12 4 13.5 10.5" stroke="#a8a8a8" stroke-width="1" fill="none"/><path d="M43.5 55c3-12 7-12 9-6s3 6 5 6" stroke="#a8a8a8" stroke-width="1" fill="none"/><path d="M72.5 42.5c-1.5 0-2 .5-2 2v3c0 1-.7 1.5-1.7 1.5 1 0 1.7.5 1.7 1.5v3c0 1.5.5 2 2 2" stroke="#a8a8a8" stroke-width="1" fill="none"/><path d="M87.5 42.5c1.5 0 2 .5 2 2v3c0 1 .7 1.5 1.7 1.5-1 0-1.7.5-1.7 1.5v3c0 1.5-.5 2-2 2" stroke="#a8a8a8" stroke-width="1" fill="none"/><path d="M110 42.5l2 5.2h5.5l-4.5 3.3 1.8 5.5-4.8-3.3-4.8 3.3 1.8-5.5-4.5-3.3h5.5z" stroke="#a8a8a8" stroke-width="1" fill="#f4eff4"/></svg>
<svg style="position:absolute;left:1012px;top:64px;" width="29" height="29" viewBox="0 0 29 29"><rect x="1" y="1" width="11" height="11" fill="#fff" stroke="#555" stroke-width="1.1"/><rect x="4" y="4" width="9" height="9" fill="none"/><rect x="13" y="4.5" width="10" height="9" fill="#f0c878"/><rect x="4" y="13" width="10" height="9" fill="#f0c878"/><rect x="14" y="15" width="13" height="12" fill="#fff" stroke="#555" stroke-width="1.1"/></svg>
<span id="t42" style="position:absolute;left:1006px;top:100.44px;font-size:12px;line-height:12px;color:#444444;white-space:nowrap;transform:scaleX(0.9835);transform-origin:0 0;">Arrange</span>
<svg style="position:absolute;left:1025px;top:119px;" width="7" height="4" viewBox="0 0 7 4"><path d="M0 0h6L3 3.5z" fill="#555"/></svg>
<svg style="position:absolute;left:1058px;top:65px;" width="31" height="30" viewBox="0 0 31 30"><rect x="1" y="1" width="25" height="25" rx="5" fill="#f4eff4" stroke="#c8c8c8" stroke-width="1.1"/><path d="M8 28l10-10 4 4z" fill="#b8b8b8"/><path d="M20 16l9-10v6l-6 7z" fill="#b8b8b8"/></svg>
<span id="t43" style="position:absolute;left:1057px;top:100.44px;font-size:12px;line-height:12px;color:#a5a5a5;white-space:nowrap;transform:scaleX(1.0102);transform-origin:0 0;">Quick</span>
<span id="t44" style="position:absolute;left:1053px;top:115.64px;font-size:12px;line-height:12px;color:#a5a5a5;white-space:nowrap;transform:scaleX(0.9178);transform-origin:0 0;">Styles</span>
<svg style="position:absolute;left:1086px;top:121px;" width="7" height="4" viewBox="0 0 7 4"><path d="M0 0h6L3 3.5z" fill="#bbb"/></svg>
<svg style="position:absolute;left:1096px;top:62px;" width="18" height="18" viewBox="0 0 18 18"><path d="M6 2l7 6-5 5-6-6z" fill="#fff" stroke="#aaa" stroke-width="1.1"/><path d="M8 1l2 1" stroke="#aaa"/><path d="M15 8c1 2 1 3 0 4" stroke="#aaa"/><rect x="0" y="14.5" width="17" height="3" fill="#e8e0e8"/></svg>
<span id="t45" style="position:absolute;left:1116px;top:66.64px;font-size:12px;line-height:12px;color:#a5a5a5;white-space:nowrap;transform:scaleX(0.9368);transform-origin:0 0;">Shape Fill</span>
<svg style="position:absolute;left:1169px;top:70px;" width="7" height="4" viewBox="0 0 7 4"><path d="M0 0h6L3 3.5z" fill="#bbb"/></svg>
<svg style="position:absolute;left:1096px;top:85px;" width="18" height="16" viewBox="0 0 18 16"><path d="M6 1.5H1.5v13h13V10" fill="none" stroke="#aaa" stroke-width="1.1" stroke-dasharray="9 2"/><path d="M7 11l1-3 7-7 2 2-7 7z" fill="none" stroke="#aaa" stroke-width="1.1"/></svg>
<span id="t46" style="position:absolute;left:1116px;top:89.34px;font-size:12px;line-height:12px;color:#a5a5a5;white-space:nowrap;transform:scaleX(0.9729);transform-origin:0 0;">Shape Outline</span>
<svg style="position:absolute;left:1193px;top:93px;" width="7" height="4" viewBox="0 0 7 4"><path d="M0 0h6L3 3.5z" fill="#bbb"/></svg>
<svg style="position:absolute;left:1096px;top:110px;" width="17" height="13" viewBox="0 0 17 13"><path d="M1 8l5-7h10l-4 9H4z" fill="#f4eff4" stroke="#bbb" stroke-width="1.1"/><path d="M4 10l1.5 2h8l2.5-2.5" fill="#c8c8c8" stroke="#bbb"/></svg>
<span id="t47" style="position:absolute;left:1116px;top:111.64px;font-size:12px;line-height:12px;color:#a5a5a5;white-space:nowrap;transform:scaleX(0.9396);transform-origin:0 0;">Shape Effects</span>
<svg style="position:absolute;left:1189px;top:116px;" width="7" height="4" viewBox="0 0 7 4"><path d="M0 0h6L3 3.5z" fill="#bbb"/></svg>
<svg style="position:absolute;left:1215px;top:64px;" width="16" height="14" viewBox="0 0 16 14"><circle cx="10" cy="5.5" r="4" fill="none" stroke="#3c7ac4" stroke-width="1.7"/><path d="M7 8.5l-5.5 4.5" stroke="#3c7ac4" stroke-width="2.2"/></svg>
<span id="t48" style="position:absolute;left:1234.5px;top:66.34px;font-size:12px;line-height:12px;color:#444444;white-space:nowrap;transform:scaleX(0.9424);transform-origin:0 0;">Find</span>
<svg style="position:absolute;left:1214px;top:85px;" width="19" height="18" viewBox="0 0 19 18"><g font-family="Liberation Sans" font-size="10.5" stroke-width="0.3"><text x="0.5" y="8.5" fill="#555" stroke="#555">a</text><text x="6.3" y="8.5" fill="#8a4fb0" stroke="#8a4fb0">b</text><text x="6" y="15.8" fill="#555" stroke="#555">a</text><text x="11.8" y="15.8" fill="#3c7ac4" stroke="#3c7ac4">c</text></g><path d="M1.5 10.5v3.5H5M3.8 12.3l1.6 1.7-1.6 1.7" fill="none" stroke="#3c7ac4" stroke-width="1.2"/></svg>
<span id="t49" style="position:absolute;left:1234.5px;top:89.34px;font-size:12px;line-height:12px;color:#444444;white-space:nowrap;transform:scaleX(0.9198);transform-origin:0 0;">Replace</span>
<svg style="position:absolute;left:1284px;top:93px;" width="7" height="4" viewBox="0 0 7 4"><path d="M0 0h6L3 3.5z" fill="#666"/></svg>
<svg style="position:absolute;left:1218px;top:108px;" width="11" height="17" viewBox="0 0 11 17"><path d="M1 1v13l3-3 2.5 5 2-1-2.5-5h4z" fill="#fff" stroke="#555" stroke-width="1"/></svg>
<span id="t50" style="position:absolute;left:1234.5px;top:111.64px;font-size:12px;line-height:12px;color:#444444;white-space:nowrap;transform:scaleX(0.9293);transform-origin:0 0;">Select</span>
<svg style="position:absolute;left:1268px;top:116px;" width="7" height="4" viewBox="0 0 7 4"><path d="M0 0h6L3 3.5z" fill="#666"/></svg>
<div style="position:absolute;left:0px;top:150px;width:1366px;height:557px;background:#e6e6e6"></div>
<div style="position:absolute;left:1px;top:152px;width:15px;height:554px;background:#dadada"></div>
<div style="position:absolute;left:1px;top:152px;width:15px;height:15px;background:#fff;border:1px solid #a8a8a8;box-sizing:border-box"></div>
<svg style="position:absolute;left:4px;top:157px;" width="9" height="5" viewBox="0 0 9 5"><path d="M0 4.5h8L4 0z" fill="#666"/></svg>
<div style="position:absolute;left:1px;top:166px;width:15px;height:277px;background:#fff;border:1px solid #a0a0a0;box-sizing:border-box"></div>
<div style="position:absolute;left:1px;top:689px;width:15px;height:15px;background:#fff;border:1px solid #c8c8c8;box-sizing:border-box"></div>
<svg style="position:absolute;left:4px;top:694px;" width="9" height="5" viewBox="0 0 9 5"><path d="M0 0h8L4 4.5z" fill="#666"/></svg>
<svg width="0" height="0" style="position:absolute"><defs><linearGradient id="gbox" x1="0" y1="0" x2="0" y2="1"><stop offset="0" stop-color="#ffffff"/><stop offset="0.35" stop-color="#f4fbff"/><stop offset="1" stop-color="#a9d2f5"/></linearGradient><linearGradient id="gtrap" x1="0.35" y1="0.25" x2="0.8" y2="1"><stop offset="0" stop-color="#ffffff"/><stop offset="0.45" stop-color="#fff8f0"/><stop offset="1" stop-color="#ffbf90"/></linearGradient></defs></svg><div style="position:absolute;left:203px;top:168px;width:162px;height:123px;overflow:hidden"><div style="position:absolute;left:0;top:0;width:162px;height:123px;box-sizing:border-box;border:1px solid #c8c8c8;background:#fff"></div><div style="position:absolute;left:2px;top:2px;width:158px;height:119px;background:radial-gradient(ellipse 62% 88% at 47% 49%, #62838f 0%, #58788a 18%, #475c74 45%, #363f61 75%, #2c3456 100%)"></div>
<svg style="position:absolute;left:2px;top:2px;" width="158" height="119" viewBox="0 0 158 119"><path d="M61.5 8.9h9.9v0.8h-9.9zM61.7 7.5h0.6v1.4h-0.6zM64.2 8.4h0.8v0.5h-0.8zM64.2 10.2h.9v.9h-.9zM66.9 8.4h0.6v0.5h-0.6zM70.2 8.3h0.7v0.6h-0.7zM73.3 8.9h11v0.8h-11zM74.7 8.4h1v0.5h-1zM76.9 8.3h0.7v0.6h-0.7zM79.1 7.6h0.9v1.3h-0.9zM81.9 8.4h0.6v0.5h-0.6zM85.9 8.9h9.7v0.8h-9.7zM86.8 7.8h0.7v1.1h-0.7zM89.9 8.1h0.9v0.8h-0.9zM93.3 7.4h0.7v1.5h-0.7zM97.3 8.9h3.7v0.8h-3.7zM97.6 7.7h0.6v1.1h-0.6zM74.6 17.7h18.1v0.8h-18.1zM75.1 16.2h0.9v1.5h-0.9zM77.7 16h1.1v1.7h-1.1zM80.8 17.2h1v0.5h-1zM84.4 16h0.7v1.6h-0.7zM87.4 17.2h0.8v0.4h-0.8zM89.5 17.2h1v0.5h-1zM89.5 14.8h.9v.9h-.9zM91.8 16.7h0.9v1h-0.9zM91.8 19h.9v.9h-.9zM94.6 17.7h18.3v0.8h-18.3zM95.8 15.9h0.7v1.7h-0.7zM98.3 15.9h1.1v1.7h-1.1zM98.3 14.8h.9v.9h-.9zM100.5 16.9h0.7v0.8h-0.7zM103.4 16.9h0.6v0.8h-0.6zM106 16.4h1.1v1.3h-1.1zM108.7 16.3h0.9v1.3h-0.9zM108.7 19h.9v.9h-.9zM112.2 16.1h0.7v1.6h-0.7zM114.5 17.7h6.6v0.8h-6.6zM115.5 17.2h0.6v0.5h-0.6zM117.6 16.7h0.6v0.9h-0.6zM117.6 19h.9v.9h-.9zM119.8 17.1h0.8v0.6h-0.8zM119.8 19h.9v.9h-.9zM123 17.7h7.2v0.8h-7.2zM123.4 16.7h0.8v0.9h-0.8zM123.4 14.8h.9v.9h-.9zM126.7 15.8h0.8v1.9h-0.8zM128.8 17.1h0.8v0.6h-0.8zM131.6 17.7h5.3v0.8h-5.3zM133.1 16.5h0.6v1.2h-0.6zM135 16.5h1.1v1.2h-1.1zM138.5 17.7h10.5v0.8h-10.5zM138.7 16.1h0.9v1.6h-0.9zM141.2 16.9h1v0.7h-1zM144.6 16h1v1.6h-1zM146.8 16.5h0.8v1.2h-0.8zM146.8 19h.9v.9h-.9zM150.5 17.7h1.5v0.8h-1.5zM86 26.2h11.7v0.8h-11.7zM87.4 24.3h1.1v1.9h-1.1zM89.7 25.4h0.7v0.7h-0.7zM92.6 24.4h1v1.8h-1zM95.7 24.5h0.6v1.6h-0.6zM99.8 26.2h16.3v0.8h-16.3zM100.6 25.5h1v0.7h-1zM103.8 24.3h0.8v1.9h-0.8zM107.3 24.7h0.7v1.5h-0.7zM107.3 23.3h.9v.9h-.9zM109.5 24.4h1v1.8h-1zM109.5 23.3h.9v.9h-.9zM112.8 24.3h0.9v1.9h-0.9zM117.5 26.2h5.2v0.8h-5.2zM118.9 24.8h0.9v1.4h-0.9zM121.6 24.4h1v1.7h-1zM124.2 26.2h8.6v0.8h-8.6zM125.1 25.4h0.8v0.8h-0.8zM125.1 23.3h.9v.9h-.9zM128.5 25.2h0.8v0.9h-0.8zM132 25.1h0.8v1h-0.8zM134.7 26.2h5.3v0.8h-5.3zM135.3 25.5h0.6v0.7h-0.6zM137.5 25h1v1.1h-1zM141.8 26.2h0.2v0.8h-0.2zM66 33.5h13.4v0.8h-13.4zM66.4 32.6h1v0.8h-1zM69.2 31.9h1.1v1.6h-1.1zM72.2 32.3h0.8v1.2h-0.8zM74.8 32.2h0.8v1.2h-0.8zM77.9 31.7h1.1v1.7h-1.1zM81.7 33.5h17.6v0.8h-17.6zM81.9 32.9h0.8v0.6h-0.8zM81.9 34.8h.9v.9h-.9zM84.3 32.9h0.9v0.5h-0.9zM87.7 32.8h1v0.6h-1zM89.8 31.7h1.1v1.7h-1.1zM93.3 32.5h0.8v1h-0.8zM96.7 32.8h0.8v0.6h-0.8zM100.8 33.5h9.8v0.8h-9.8zM101.9 33h0.9v0.4h-0.9zM103.8 32.6h0.9v0.9h-0.9zM105.8 31.6h1v1.9h-1zM107.9 32.7h0.6v0.8h-0.6zM111.9 33.5h11.3v0.8h-11.3zM113.3 31.8h0.7v1.6h-0.7zM113.3 30.6h.9v.9h-.9zM116.7 32.2h1v1.3h-1zM116.7 34.8h.9v.9h-.9zM118.7 32h0.8v1.4h-0.8zM118.7 34.8h.9v.9h-.9zM122.2 32.1h1v1.4h-1zM122.2 34.8h.9v.9h-.9zM124.5 33.5h6.5v0.8h-6.5zM125.2 32.5h0.9v0.9h-0.9zM127.6 32.9h0.9v0.6h-0.9zM129.6 32.8h0.6v0.6h-0.6zM94 40.5h16.4v0.8h-16.4zM94.4 39.3h0.7v1.2h-0.7zM96.4 39.7h0.6v0.8h-0.6zM99.2 39.8h0.8v0.7h-0.8zM101.3 38.8h0.8v1.6h-0.8zM104.6 39.5h0.8v1h-0.8zM108.2 39.5h1v0.9h-1zM112.1 40.5h2.9v0.8h-2.9zM112.2 39.9h0.6v0.6h-0.6zM96.6 47.2h6.3v0.8h-6.3zM97.9 45.4h0.9v1.7h-0.9zM100.2 46.3h0.8v0.8h-0.8zM100.2 44.3h.9v.9h-.9zM104.4 47.2h6.3v0.8h-6.3zM105.8 45.9h0.7v1.2h-0.7zM108.3 46.2h0.6v0.9h-0.6zM5 55.2h8v0.8h-8zM5.8 54.8h0.7v0.4h-0.7zM5.8 56.5h.9v.9h-.9zM8.3 54.7h0.6v0.5h-0.6zM10.6 53.9h0.9v1.3h-0.9zM15.1 55.2h18.2v0.8h-18.2zM15.7 54.3h1.1v0.9h-1.1zM15.7 52.3h.9v.9h-.9zM18.8 53.8h0.6v1.4h-0.6zM22.2 53.8h1v1.4h-1zM24.3 54h0.8v1.2h-0.8zM27.6 53.5h0.9v1.7h-0.9zM30.7 53.7h0.7v1.5h-0.7zM30.7 56.5h.9v.9h-.9zM34.9 55.2h6.6v0.8h-6.6zM36.1 53.9h0.9v1.2h-0.9zM39.2 54h0.6v1.1h-0.6zM43.3 55.2h13v0.8h-13zM44.3 54.7h1v0.5h-1zM46.3 54.4h1v0.8h-1zM49.4 53.3h0.8v1.9h-0.8zM52.2 53.7h1v1.4h-1zM55.2 54.6h0.6v0.5h-0.6zM57.9 55.2h13.5v0.8h-13.5zM57.9 54.7h0.7v0.5h-0.7zM61 53.7h0.7v1.4h-0.7zM63.6 54.1h0.6v1.1h-0.6zM65.9 53.3h1.1v1.9h-1.1zM65.9 56.5h.9v.9h-.9zM68.6 53.5h1.1v1.6h-1.1zM72.8 55.2h19.2v0.8h-19.2zM73.1 53.9h0.6v1.3h-0.6zM76.7 54.6h1v0.6h-1zM80.1 53.7h0.7v1.5h-0.7zM82.8 54.7h0.6v0.4h-0.6zM85.5 54.3h0.6v0.9h-0.6zM87.9 53.5h0.6v1.7h-0.6zM91.2 54.6h0.8v0.6h-0.8zM93.6 55.2h10.6v0.8h-10.6zM94.2 53.2h0.9v1.9h-0.9zM96.8 54.3h0.6v0.8h-0.6zM96.8 52.3h.9v.9h-.9zM100.1 54.3h1.1v0.8h-1.1zM102.5 54h0.7v1.2h-0.7zM106.4 55.2h17.2v0.8h-17.2zM107.4 53.4h1.1v1.8h-1.1zM110.5 54.7h1v0.5h-1zM113.7 53.8h0.7v1.4h-0.7zM113.7 56.5h.9v.9h-.9zM117.1 54.6h0.8v0.6h-0.8zM119.5 53.6h1.1v1.5h-1.1zM122.6 54.3h0.9v0.9h-0.9zM125 55.2h8.1v0.8h-8.1zM126.3 54h0.7v1.2h-0.7zM129.9 54.1h0.6v1.1h-0.6zM132 54.2h0.6v0.9h-0.6zM135 55.2h17.8v0.8h-17.8zM136.1 54.1h0.8v1h-0.8zM138.6 54.2h0.6v0.9h-0.6zM142.2 54.6h0.8v0.6h-0.8zM145.6 54.4h0.7v0.7h-0.7zM148.1 54.1h1.1v1.1h-1.1zM151.5 54.7h0.6v0.4h-0.6zM98 62.2h13.8v0.8h-13.8zM98 61.2h1.1v1h-1.1zM101.4 60.3h0.7v1.9h-0.7zM101.4 59.3h.9v.9h-.9zM103.5 61h0.9v1.2h-0.9zM106.6 60.8h1v1.4h-1zM109.5 61.7h1v0.5h-1zM113.8 62.2h9.6v0.8h-9.6zM114 61.4h0.9v0.8h-0.9zM116.1 61.7h0.9v0.5h-0.9zM118.6 61.4h0.9v0.7h-0.9zM118.6 63.5h.9v.9h-.9zM121 61.1h1.1v1.1h-1.1zM125.1 62.2h8.5v0.8h-8.5zM125.5 60.3h1v1.9h-1zM127.4 61h0.9v1.2h-0.9zM129.8 60.7h1.1v1.4h-1.1zM131.7 61.2h0.8v0.9h-0.8zM135.8 62.2h16.1v0.8h-16.1zM136.5 61.4h1.1v0.7h-1.1zM139.8 61.4h0.7v0.8h-0.7zM142.2 60.3h0.8v1.8h-0.8zM144.5 61.1h0.9v1h-0.9zM146.7 61.2h0.7v1h-0.7zM148.8 61.7h0.6v0.5h-0.6zM6 71.6h16v0.8h-16zM7.5 69.7h0.7v1.8h-0.7zM11 70h0.6v1.5h-0.6zM13.5 70.6h0.7v1h-0.7zM15.4 70.7h0.8v0.8h-0.8zM17.5 69.7h0.7v1.9h-0.7zM20.8 69.9h0.8v1.6h-0.8zM20.8 72.9h.9v.9h-.9zM23.6 71.6h18.8v0.8h-18.8zM23.9 70.6h1.1v1h-1.1zM23.9 72.9h.9v.9h-.9zM26.5 69.9h1v1.6h-1zM26.5 72.9h.9v.9h-.9zM28.5 71.1h1.1v0.5h-1.1zM31.7 69.8h0.7v1.8h-0.7zM35.2 70.2h0.7v1.3h-0.7zM37.6 70.7h0.6v0.8h-0.6zM41.1 70.2h1.1v1.4h-1.1zM41.1 72.9h.9v.9h-.9zM44.2 71.6h19.4v0.8h-19.4zM45.6 70.6h0.7v1h-0.7zM48.4 69.7h0.7v1.8h-0.7zM51.5 69.9h1v1.7h-1zM54 70.7h0.8v0.9h-0.8zM56 70.9h1v0.7h-1zM58 71.1h0.9v0.5h-0.9zM61.6 69.8h1.1v1.7h-1.1zM64.9 71.6h12.5v0.8h-12.5zM65.9 70.5h0.7v1.1h-0.7zM68.9 70.1h1v1.4h-1zM71.9 71h1v0.6h-1zM74.8 70.6h1v1h-1zM78.8 71.6h7.3v0.8h-7.3zM80.2 70.3h0.7v1.3h-0.7zM83.8 70.4h0.7v1.2h-0.7zM88.5 71.6h6.5v0.8h-6.5zM89.2 69.9h1v1.6h-1zM91.2 70.7h0.6v0.8h-0.6zM97 71.6h19v0.8h-19zM97.5 69.8h0.8v1.7h-0.8zM100.7 69.7h0.6v1.8h-0.6zM103.7 70.8h0.8v0.7h-0.8zM103.7 68.7h.9v.9h-.9zM105.9 70.8h0.9v0.8h-0.9zM108.2 71.1h0.7v0.4h-0.7zM110.4 70.7h0.7v0.9h-0.7zM113.2 71.1h0.6v0.5h-0.6zM117.9 71.6h6.4v0.8h-6.4zM118.1 70.1h0.8v1.5h-0.8zM120.6 69.7h0.7v1.8h-0.7zM123.1 70.5h1v1h-1zM125.7 71.6h15.9v0.8h-15.9zM126 71.2h1.1v0.4h-1.1zM129.3 70.5h1.1v1h-1.1zM131.5 71.1h0.9v0.4h-0.9zM134.9 71h0.9v0.5h-0.9zM137.7 70.9h0.7v0.6h-0.7zM142.9 71.6h9.9v0.8h-9.9zM144.1 69.7h0.7v1.9h-0.7zM144.1 68.7h.9v.9h-.9zM147.6 69.7h0.8v1.9h-0.8zM147.6 72.9h.9v.9h-.9zM151.1 70.6h1.1v1h-1.1zM134.7 79.2h16.8v0.8h-16.8zM135 78.1h1v1h-1zM137.2 78.4h0.8v0.7h-0.8zM139.8 78.6h0.7v0.6h-0.7zM143.2 78.7h0.9v0.5h-0.9zM145.2 77.5h0.6v1.7h-0.6zM148 77.8h0.7v1.4h-0.7zM8.8 89.4h14.9v0.8h-14.9zM9.5 88.3h0.6v1.1h-0.6zM12.2 88.6h1v0.8h-1zM14.9 88.7h0.8v0.7h-0.8zM14.9 86.5h.9v.9h-.9zM17 88.3h0.6v1.1h-0.6zM19.8 88.9h0.9v0.5h-0.9zM19.8 90.7h.9v.9h-.9zM22.9 87.8h0.8v1.6h-0.8zM22.9 90.7h.9v.9h-.9zM25.3 89.4h19.3v0.8h-19.3zM25.5 87.7h1.1v1.7h-1.1zM28.8 88.7h1.1v0.7h-1.1zM32.4 87.6h0.7v1.8h-0.7zM35.8 88.9h0.8v0.5h-0.8zM38 87.6h0.7v1.8h-0.7zM40.1 88.2h1.1v1.2h-1.1zM42.5 88.2h0.7v1.2h-0.7zM42.5 90.7h.9v.9h-.9zM46 89.4h19v0.8h-19zM47 87.6h0.7v1.8h-0.7zM49.1 88.2h0.9v1.2h-0.9zM52.5 88.1h0.9v1.2h-0.9zM54.6 87.5h0.9v1.9h-0.9zM57.8 88.6h1.1v0.8h-1.1zM60.3 87.8h0.8v1.6h-0.8zM63.5 88.9h1v0.5h-1zM67.4 89.4h13.8v0.8h-13.8zM68.4 88.5h0.6v0.9h-0.6zM68.4 90.7h.9v.9h-.9zM70.6 88h0.8v1.3h-0.8zM74 88.8h0.7v0.6h-0.7zM75.9 89h0.8v0.4h-0.8zM75.9 86.5h.9v.9h-.9zM78.4 88.6h0.9v0.7h-0.9zM83.2 89.4h12.1v0.8h-12.1zM83.4 87.5h0.7v1.8h-0.7zM83.4 86.5h.9v.9h-.9zM85.4 88h1v1.4h-1zM88 88.6h0.6v0.8h-0.6zM90.9 88.4h0.9v0.9h-0.9zM94.4 87.8h0.7v1.5h-0.7zM97.1 89.4h11.1v0.8h-11.1zM97.5 88.9h1v0.5h-1zM97.5 90.7h.9v.9h-.9zM100.3 87.5h0.6v1.8h-0.6zM103.2 88.2h0.9v1.2h-0.9zM105.4 88.5h0.7v0.9h-0.7zM105.4 90.7h.9v.9h-.9zM110.3 89.4h15.7v0.8h-15.7zM110.4 87.7h1v1.7h-1zM113.5 88.3h0.7v1.1h-0.7zM113.5 86.5h.9v.9h-.9zM115.8 88.9h0.7v0.5h-0.7zM118.9 87.7h1v1.7h-1zM121.7 88.3h1v1.1h-1zM124.1 88h1.1v1.4h-1.1zM127.3 89.4h8.9v0.8h-8.9zM127.7 87.8h1.1v1.5h-1.1zM130.1 87.6h0.7v1.7h-0.7zM133.5 88h0.9v1.4h-0.9zM138 89.4h14.8v0.8h-14.8zM139 87.7h0.8v1.7h-0.8zM141.9 88.5h0.7v0.9h-0.7zM143.9 87.6h0.6v1.8h-0.6zM143.9 90.7h.9v.9h-.9zM146 87.5h0.8v1.8h-0.8zM146 86.5h.9v.9h-.9zM147.9 88.9h0.9v0.5h-0.9zM151 87.8h0.6v1.5h-0.6zM136 97.2h16.8v0.8h-16.8zM137.3 96.7h1v0.5h-1zM140.8 96.6h0.7v0.6h-0.7zM140.8 94.3h.9v.9h-.9zM142.8 95.5h1v1.7h-1zM146.1 95.8h0.7v1.4h-0.7zM146.1 98.5h.9v.9h-.9zM148.2 95.6h0.7v1.6h-0.7zM150.8 96.7h0.7v0.4h-0.7zM11.7 106.7h9.8v0.8h-9.8zM13.1 105.5h1v1.2h-1zM15.1 105.6h0.8v1h-0.8zM17.6 105.2h0.9v1.5h-0.9zM22.8 106.7h17.3v0.8h-17.3zM23.1 106.3h0.7v0.4h-0.7zM26.6 106.3h0.8v0.4h-0.8zM29.9 106h0.8v0.7h-0.8zM33.2 105.9h1.1v0.8h-1.1zM35.5 105.2h0.8v1.5h-0.8zM35.5 103.8h.9v.9h-.9zM38.5 106.1h1v0.5h-1zM42.1 106.7h10.3v0.8h-10.3zM42.7 105.7h1.1v1h-1.1zM42.7 108h.9v.9h-.9zM46.1 106.2h0.7v0.4h-0.7zM49.5 105.5h0.8v1.2h-0.8zM54.2 106.7h13v0.8h-13zM55.3 105.1h0.9v1.5h-0.9zM57.7 106h1v0.6h-1zM60.9 106h0.8v0.7h-0.8zM63.8 106.1h0.8v0.6h-0.8zM66.1 106h0.7v0.7h-0.7zM68.5 106.7h7.3v0.8h-7.3zM68.9 105.8h0.9v0.9h-0.9zM71.3 106h1.1v0.7h-1.1zM73.4 104.8h0.6v1.9h-0.6zM78 106.7h16v0.8h-16zM78.7 106h0.9v0.7h-0.9zM78.7 103.8h.9v.9h-.9zM80.9 105.7h0.6v1h-0.6zM84.2 105.2h0.8v1.5h-0.8zM86.8 106h0.9v0.6h-0.9zM90 104.9h0.8v1.8h-0.8zM93.2 105.6h0.7v1h-0.7zM96.1 106.7h15.5v0.8h-15.5zM97.4 105.2h0.9v1.4h-0.9zM99.9 105.3h0.6v1.4h-0.6zM103.1 105.2h0.9v1.5h-0.9zM105.7 105.6h0.9v1.1h-0.9zM108.7 104.8h0.7v1.8h-0.7zM113.3 106.7h12.3v0.8h-12.3zM114.8 106.2h0.9v0.5h-0.9zM118 104.8h0.9v1.8h-0.9zM118 103.8h.9v.9h-.9zM120.9 105.4h1v1.2h-1zM123.9 105h0.9v1.7h-0.9zM127.1 106.7h15.3v0.8h-15.3zM127.7 105.1h0.6v1.6h-0.6zM130.2 106.2h0.7v0.5h-0.7zM132.1 105.6h0.8v1h-0.8zM134.6 105.9h0.7v0.8h-0.7zM138.1 105.5h0.7v1.2h-0.7zM140.7 105.9h0.6v0.7h-0.6zM144.3 106.7h8.5v0.8h-8.5zM145.2 105.9h1.1v0.7h-1.1zM148.2 105h1v1.6h-1zM150.6 105.4h0.6v1.2h-0.6zM116.5 115.5h9v0.8h-9zM117.1 114.7h0.8v0.8h-0.8zM119 114h0.7v1.5h-0.7zM121.4 114.3h0.8v1.1h-0.8zM124.4 114.5h1.1v1h-1.1zM127.7 115.5h18.6v0.8h-18.6zM128.9 114.8h1v0.6h-1zM130.8 115h1.1v0.4h-1.1zM133.1 114.9h0.6v0.6h-0.6zM136.4 114.5h0.6v0.9h-0.6zM139.6 114.8h1.1v0.7h-1.1zM142.8 114h1.1v1.4h-1.1zM147.7 115.5h5.1v0.8h-5.1zM148.5 113.9h0.8v1.5h-0.8zM151.4 114.7h0.7v0.8h-0.7zM151.4 112.6h.9v.9h-.9z" fill="#fff" opacity=".8"/></svg>
</div>
<svg style="position:absolute;left:355.1px;top:296.6px" width="9.4" height="12" viewBox="0 0 9.4 12"><g fill="none" stroke="#444" stroke-width="1.25"><path transform="translate(0.0 0)" d="M6.3 0.8C5.7 0.5 5 0.4 4.3 0.4C2 0.4 0.8 2.6 0.8 6C0.8 9.2 1.9 10.9 3.8 10.9C5.6 10.9 6.9 9.5 6.9 7.5C6.9 5.5 5.7 4.3 4 4.3C2.5 4.3 1.3 5.3 0.9 6.5"/></g></svg>
<div style="position:absolute;left:398px;top:168px;width:162px;height:123px;overflow:hidden"><div style="position:absolute;left:0;top:0;width:162px;height:123px;box-sizing:border-box;border:1px solid #c8c8c8;background:#fff"></div><div style="position:absolute;left:2px;top:2px;width:158px;height:119px;background:radial-gradient(ellipse 62% 88% at 47% 49%, #62838f 0%, #58788a 18%, #475c74 45%, #363f61 75%, #2c3456 100%)"></div>
<svg style="position:absolute;left:2px;top:2px;" width="158" height="119" viewBox="0 0 158 119"><path d="M59.6 9.1h12v1.1h-12zM59.8 7.5h1.2v1.6h-1.2zM63.2 8.6h1.4v0.6h-1.4zM66 7.2h1.4v1.9h-1.4zM68.7 6.6h0.8v2.6h-0.8zM73.3 9.1h14.1v1.1h-14.1zM74.3 6.6h1v2.5h-1zM77.1 7.6h1.5v1.6h-1.5zM77.1 10.7h.9v.9h-.9zM80.2 7.3h1v1.9h-1zM82.7 7.6h1.2v1.5h-1.2zM85 7.7h1.1v1.5h-1.1zM89.6 9.1h17.4v1.1h-17.4zM90.2 7.5h1v1.6h-1zM93.7 7.2h1.4v1.9h-1.4zM96.2 7.9h1.2v1.2h-1.2zM99.4 8.5h1.3v0.6h-1.3zM102.2 8.5h1v0.7h-1zM102.2 10.7h.9v.9h-.9zM104.5 6.6h1.2v2.5h-1.2zM110.1 9.1h14.2v1.1h-14.2zM111.1 7.3h1.3v1.9h-1.3zM114.1 8.1h1.3v1h-1.3zM117.3 8.4h0.9v0.8h-0.9zM117.3 10.7h.9v.9h-.9zM120.5 6.7h1.3v2.5h-1.3zM127.3 9.1h13.4v1.1h-13.4zM127.7 7.9h1.1v1.2h-1.1zM130.3 7.2h1.5v1.9h-1.5zM130.3 10.7h.9v.9h-.9zM133.2 8.5h0.9v0.6h-0.9zM136 6.7h1.1v2.5h-1.1zM136 10.7h.9v.9h-.9zM138.6 7.3h1.5v1.8h-1.5zM143 9.1h6.5v1.1h-6.5zM144 8.1h0.9v1h-0.9zM144 10.7h.9v.9h-.9zM145.9 7.1h0.9v2h-0.9zM148 6.8h0.9v2.4h-0.9zM148 10.7h.9v.9h-.9zM125 23.5h16v0.8h-16zM125.3 23h1v0.5h-1zM128.6 22h0.6v1.5h-0.6zM131.7 22.4h1.1v1.1h-1.1zM135.3 22h0.6v1.5h-0.6zM135.3 24.8h.9v.9h-.9zM138.3 21.8h0.6v1.6h-0.6zM142.4 23.5h6.1v0.8h-6.1zM143.1 23h0.8v0.5h-0.8zM145.8 22h0.6v1.4h-0.6zM76.8 31h14.4v0.8h-14.4zM77.4 30h1v1h-1zM80.7 29.7h0.7v1.3h-0.7zM80.7 32.3h.9v.9h-.9zM84.2 29.5h1v1.5h-1zM87.1 29.1h1v1.9h-1zM89.6 29.9h1.1v1.1h-1.1zM93.2 31h11.8v0.8h-11.8zM94.4 30.1h0.6v0.8h-0.6zM97 29.7h1v1.3h-1zM99 29.3h1v1.7h-1zM101.8 30.1h1v0.8h-1zM44.4 37.8h10.2v0.8h-10.2zM44.5 36.5h1v1.2h-1zM47.7 35.9h0.7v1.8h-0.7zM50.8 36.7h0.7v1.1h-0.7zM53.9 36.2h0.7v1.6h-0.7zM53.9 39.1h.9v.9h-.9zM56.7 37.8h8.5v0.8h-8.5zM57.6 36h1.1v1.8h-1.1zM60.3 36.5h0.7v1.3h-0.7zM62.5 36.3h0.8v1.5h-0.8zM67 37.8h7.2v0.8h-7.2zM67.1 35.8h0.8v1.9h-0.8zM67.1 34.9h.9v.9h-.9zM70.1 36.2h0.6v1.6h-0.6zM72.6 36.6h0.6v1.2h-0.6zM72.6 39.1h.9v.9h-.9zM11.6 44.3h12.3v0.8h-12.3zM12.5 43.5h1v0.8h-1zM16 42.7h1v1.6h-1zM18.3 43.8h0.7v0.5h-0.7zM20.3 43.8h0.9v0.5h-0.9zM23 42.4h0.9v1.8h-0.9zM23 45.6h.9v.9h-.9zM25.6 44.3h6.8v0.8h-6.8zM27 43.5h0.9v0.8h-0.9zM30.5 42.8h0.8v1.4h-0.8zM34.7 44.3h6.5v0.8h-6.5zM35.1 43.8h0.7v0.5h-0.7zM38.5 42.5h1v1.8h-1zM38.5 45.6h.9v.9h-.9zM118.4 68.7h14.7v1.1h-14.7zM119.9 68.1h0.9v0.7h-0.9zM123.4 66.8h1v2h-1zM126.6 67.9h1v0.8h-1zM128.7 67.2h0.9v1.6h-0.9zM130.8 66.8h0.8v2h-0.8zM134.8 68.7h14.5v1.1h-14.5zM135.1 66.2h1.4v2.5h-1.4zM137.3 67.2h0.8v1.5h-0.8zM140.6 66.9h1.1v1.9h-1.1zM143.9 67.2h1.3v1.5h-1.3zM143.9 64.8h.9v.9h-.9zM146.2 68.1h1.3v0.7h-1.3zM148.3 66.4h1v2.4h-1zM114.9 81.8h17.6v0.8h-17.6zM115.4 81.1h0.8v0.7h-0.8zM118.8 81.2h1.1v0.6h-1.1zM118.8 83.1h.9v.9h-.9zM122.3 80.3h0.7v1.4h-0.7zM124.6 81h0.7v0.8h-0.7zM128.2 79.8h1.1v1.9h-1.1zM128.2 83.1h.9v.9h-.9zM130.6 80h0.6v1.8h-0.6zM134.9 81.8h5.2v0.8h-5.2zM136.1 80.8h0.6v0.9h-0.6zM136.1 83.1h.9v.9h-.9zM139.4 80.6h0.7v1.2h-0.7zM141.6 81.8h4.5v0.8h-4.5zM141.8 81.1h1v0.7h-1zM144 81.2h0.6v0.5h-0.6zM75.3 87.9h8.1v0.8h-8.1zM76.2 86.4h1v1.5h-1zM78.5 87.4h1v0.5h-1zM81.6 87.4h1v0.5h-1zM85.6 87.9h12.4v0.8h-12.4zM85.7 86.1h0.8v1.8h-0.8zM88 87.2h1v0.7h-1zM90.2 86.9h0.9v1h-0.9zM90.2 89.2h.9v.9h-.9zM93 86.8h0.8v1.1h-0.8zM93 85h.9v.9h-.9zM96.1 86.2h1v1.6h-1zM99.7 87.9h0.3v0.8h-0.3zM44.1 94.8h19.3v0.8h-19.3zM44.8 93.6h0.9v1.2h-0.9zM46.8 92.9h0.7v1.9h-0.7zM48.9 94h1v0.8h-1zM48.9 96.1h.9v.9h-.9zM50.9 93.3h0.7v1.5h-0.7zM50.9 96.1h.9v.9h-.9zM53.8 93.5h0.9v1.3h-0.9zM55.9 93h1v1.7h-1zM55.9 96.1h.9v.9h-.9zM58 93.6h0.8v1.2h-0.8zM60.1 93.7h0.6v1h-0.6zM64.8 94.8h10.1v0.8h-10.1zM65.9 94.1h1v0.6h-1zM68.5 93.7h1v1h-1zM71 92.9h1v1.8h-1zM73.3 93.9h0.8v0.9h-0.8zM18 101.2h17.2v0.8h-17.2zM19.3 100.7h0.8v0.5h-0.8zM22.8 100.4h0.8v0.8h-0.8zM25.3 100h0.6v1.2h-0.6zM28 100.7h0.6v0.4h-0.6zM31.3 99.3h0.9v1.8h-0.9zM37.5 101.2h5.5v0.8h-5.5zM38.4 100.4h0.9v0.8h-0.9zM41.3 99.4h0.9v1.8h-0.9zM44.7 101.2h0.1v0.8h-0.1z" fill="#fff" opacity=".8"/></svg>
</div>
<svg style="position:absolute;left:550.1px;top:296.6px" width="9.4" height="12" viewBox="0 0 9.4 12"><g fill="none" stroke="#444" stroke-width="1.25"><path transform="translate(0.0 0)" d="M6.5 0.7H1.6L1.2 5.2C1.9 5 2.6 4.9 3.3 4.9C5.5 4.9 7 6 7 7.9C7 9.8 5.5 10.9 3.3 10.9C2.3 10.9 1.4 10.7 0.7 10.3"/></g></svg>
<svg style="position:absolute;left:400px;top:297px;" width="11" height="10" viewBox="0 0 11 10"><path d="M5.5 0.3l1.45 3.4 3.7.3-2.8 2.4.9 3.6-3.25-1.95-3.25 1.95.9-3.6L0.35 4l3.7-.3z" fill="#666"/><rect x="0" y="2.5" width="1.2" height="1.2" fill="#666"/><rect x="0" y="5.8" width="1.6" height="1" fill="#666"/></svg>
<div style="position:absolute;left:593px;top:168px;width:162px;height:123px;overflow:hidden"><div style="position:absolute;left:0;top:0;width:162px;height:123px;box-sizing:border-box;border:1px solid #c8c8c8;background:#fff"></div><div style="position:absolute;left:2px;top:2px;width:158px;height:119px;background:radial-gradient(ellipse 62% 88% at 47% 49%, #62838f 0%, #58788a 18%, #475c74 45%, #363f61 75%, #2c3456 100%)"></div>
<svg style="position:absolute;left:2px;top:2px;" width="158" height="119" viewBox="0 0 158 119"><rect x="4.1" y="4.4" width="147.9" height="92.1" fill="url(#gbox)"/><path d="M12.4 7.8h14.7v1h-14.7zM12.6 6.2h1.4v1.6h-1.4zM14.9 6.4h1.1v1.4h-1.1zM14.9 4.2h.9v.9h-.9zM17 7.1h0.9v0.7h-0.9zM19.4 6.8h0.8v1h-0.8zM22.8 6.1h1.1v1.7h-1.1zM25 6h1v1.8h-1zM29.3 7.8h9.7v1h-9.7zM29.7 6.9h1.1v0.9h-1.1zM32.6 7.3h0.9v0.5h-0.9zM34.9 6.2h1v1.6h-1zM40.9 7.8h16.6v1h-16.6zM41.2 7.2h1.3v0.6h-1.3zM43.2 6.6h1v1.2h-1zM45.2 6.9h1.4v0.9h-1.4zM47.4 6.7h0.9v1.1h-0.9zM50.4 5.7h1.3v2.1h-1.3zM53.5 5.9h1.2v1.9h-1.2zM56.7 6h0.8v1.8h-0.8zM56.7 4.2h.9v.9h-.9zM59 7.8h16.5v1h-16.5zM59.9 6.4h1.4v1.4h-1.4zM62.5 5.8h1.3v2h-1.3zM65 6.4h1v1.4h-1zM67.4 6.6h1.1v1.2h-1.1zM69.9 5.8h1.3v2h-1.3zM72.5 6.9h0.9v0.9h-0.9zM72.5 4.2h.9v.9h-.9zM77.9 7.8h6.3v1h-6.3zM79.2 6.7h1.3v1.1h-1.3zM82.8 6.9h1v0.9h-1zM12 17.1h13.5v1h-13.5zM12.7 14.9h1.2v2.2h-1.2zM16.3 15.6h1.1v1.5h-1.1zM18.9 15.9h1.1v1.2h-1.1zM22.4 15.3h1.1v1.8h-1.1zM22.4 18.6h.9v.9h-.9zM27.6 17.1h13.4v1h-13.4zM28.4 14.9h1.4v2.2h-1.4zM31.1 15.4h1.4v1.7h-1.4zM33.9 15h0.8v2.1h-0.8zM37.4 15h1.1v2.1h-1.1zM37.4 13.5h.9v.9h-.9zM43.5 17.1h7.3v1h-7.3zM45 14.9h1v2.2h-1zM45 13.5h.9v.9h-.9zM47.4 15.6h1.1v1.5h-1.1zM49.6 15.4h1.1v1.7h-1.1zM13 27h5.6v1h-5.6zM13.6 25h0.9v2h-0.9zM15.5 25.9h1.3v1.1h-1.3zM20.4 27h12.5v1h-12.5zM21.3 26h1.2v1h-1.2zM24.9 25.4h1v1.6h-1zM24.9 23.4h.9v.9h-.9zM27 25.1h0.8v1.9h-0.8zM27 23.4h.9v.9h-.9zM29.2 25.5h1.3v1.5h-1.3zM34.5 27h5.2v1h-5.2zM35.6 25.9h1.2v1.1h-1.2zM37.8 26h0.8v1h-0.8zM41.7 27h10.7v1h-10.7zM42.3 26.4h1.3v0.6h-1.3zM45.8 25.7h1.1v1.3h-1.1zM47.8 24.7h1.3v2.3h-1.3zM51.2 24.9h0.9v2.1h-0.9zM12.7 36.2h19.2v1h-19.2zM13.1 35h1.2v1.2h-1.2zM15.5 34h1v2.2h-1zM17.8 35.4h1v0.8h-1zM21.4 35.1h1.1v1.1h-1.1zM21.4 32.6h.9v.9h-.9zM24.2 35h1v1.2h-1zM24.2 37.7h.9v.9h-.9zM26.3 34.1h0.9v2.1h-0.9zM28.5 35.2h0.9v1h-0.9zM28.5 37.7h.9v.9h-.9zM34 36.2h7.3v1h-7.3zM35 35.5h0.9v0.7h-0.9zM37.1 34.9h1.3v1.3h-1.3zM39.3 35h1.2v1.2h-1.2zM43.1 36.2h19.3v1h-19.3zM43.9 35.3h1v0.9h-1zM43.9 32.6h.9v.9h-.9zM47 35.2h1.3v1h-1.3zM49.5 35.2h1.1v1h-1.1zM52.9 35.5h1.1v0.7h-1.1zM55.2 34.2h1v2h-1zM58.1 35.1h1v1.1h-1zM58.1 37.7h.9v.9h-.9zM60.3 34.1h0.9v2.1h-0.9zM64.7 36.2h10.4v1h-10.4zM65.5 35.1h0.7v1.1h-0.7zM67.8 35.5h1.2v0.7h-1.2zM70.3 34h1.2v2.2h-1.2zM73.7 35.4h0.9v0.8h-0.9zM73.7 37.7h.9v.9h-.9zM77.6 36.2h2.4v1h-2.4zM78.3 34.4h1.2v1.8h-1.2zM12 43.5h14.4v1h-14.4zM12.3 42.8h1.3v0.7h-1.3zM15.4 42.9h0.7v0.6h-0.7zM17.6 42.4h1v1.1h-1zM17.6 45h.9v.9h-.9zM20 41.8h0.8v1.7h-0.8zM22.9 41.6h0.9v1.9h-0.9zM28.5 43.5h5v1h-5zM29.7 41.5h0.9v2h-0.9zM29.7 45h.9v.9h-.9zM35.9 43.5h5.7v1h-5.7zM36.2 42.8h1.3v0.7h-1.3zM39.7 41.6h0.8v1.9h-0.8zM44.2 43.5h17.4v1h-17.4zM44.6 42.8h1.4v0.7h-1.4zM48.1 41.7h1.2v1.8h-1.2zM51.1 42.1h0.7v1.4h-0.7zM53.7 42h1.3v1.5h-1.3zM53.7 39.9h.9v.9h-.9zM56.9 42.9h1.2v0.6h-1.2zM59.3 42h1.4v1.5h-1.4zM63.5 43.5h5.9v1h-5.9zM64.1 42.2h0.8v1.3h-0.8zM66.2 41.7h1.2v1.8h-1.2zM68.5 42h0.9v1.5h-0.9zM71.4 43.5h8.3v1h-8.3zM71.6 41.9h0.9v1.6h-0.9zM74.4 41.6h0.8v1.9h-0.8zM77.3 42.1h1.2v1.4h-1.2zM12.4 53.4h10.4v1h-10.4zM12.7 52.8h0.9v0.6h-0.9zM15.8 52h0.8v1.4h-0.8zM18.5 52.2h0.8v1.2h-0.8zM18.5 54.9h.9v.9h-.9zM20.4 51h1.2v2.4h-1.2zM20.4 54.9h.9v.9h-.9zM25.8 53.4h13.5v1h-13.5zM25.9 52h1v1.4h-1zM28.8 52.9h1.3v0.5h-1.3zM31.7 51.1h1.2v2.3h-1.2zM34 52.6h0.7v0.8h-0.7zM37.4 52.3h0.8v1.1h-0.8zM42.1 53.4h7.5v1h-7.5zM43.3 51.3h1.2v2.1h-1.2zM45.5 51.3h0.9v2.1h-0.9zM48.3 52.2h1.3v1.2h-1.3zM52 53.4h14.4v1h-14.4zM53.2 51.6h1.3v1.8h-1.3zM56 52h0.8v1.4h-0.8zM58.9 52.7h1.2v0.7h-1.2zM61.5 51.1h0.8v2.3h-0.8zM61.5 54.9h.9v.9h-.9zM64.2 52.5h1.2v0.9h-1.2zM64.2 54.9h.9v.9h-.9zM69.2 53.4h16.8v1h-16.8zM69.8 52.4h1.2v1h-1.2zM72.5 52.3h1v1.1h-1zM75.8 51.2h0.8v2.2h-0.8zM78.4 51.8h0.9v1.6h-0.9zM80.5 52.3h1v1.1h-1zM83.9 51.3h1.4v2.1h-1.4zM88.7 53.4h2.2v1h-2.2zM89.7 51.7h0.9v1.7h-0.9zM13 71.9h14.7v1h-14.7zM13.4 70.7h1.3v1.2h-1.3zM13.4 73.4h.9v.9h-.9zM15.7 70.1h1v1.8h-1zM15.7 73.4h.9v.9h-.9zM18.7 70.7h1.1v1.2h-1.1zM21.5 70.3h1v1.6h-1zM21.5 68.3h.9v.9h-.9zM23.7 69.7h1.1v2.2h-1.1zM23.7 68.3h.9v.9h-.9zM27.1 70.9h0.6v1h-0.6zM29.9 71.9h13.3v1h-13.3zM30.3 70.3h0.8v1.6h-0.8zM33.2 71.2h1v0.7h-1zM33.2 73.4h.9v.9h-.9zM35.8 69.8h1.1v2.1h-1.1zM39 71.2h1.4v0.7h-1.4zM41.1 69.8h1v2.1h-1zM45.6 71.9h16.6v1h-16.6zM45.8 69.9h0.7v2h-0.7zM48.3 71.4h1.1v0.5h-1.1zM50.7 70.1h1v1.8h-1zM53.7 69.7h1.1v2.2h-1.1zM57.1 71.1h1.2v0.8h-1.2zM60.3 70.1h1.3v1.8h-1.3zM60.3 68.3h.9v.9h-.9zM64.8 71.9h16.5v1h-16.5zM65.9 71.3h1.1v0.6h-1.1zM65.9 73.4h.9v.9h-.9zM68.7 69.9h0.8v2h-0.8zM71.8 70.9h0.8v1h-0.8zM75.1 70.3h0.8v1.6h-0.8zM75.1 73.4h.9v.9h-.9zM77.2 69.9h0.8v2h-0.8zM79.6 70.1h1v1.8h-1zM79.6 68.3h.9v.9h-.9zM13 81.2h15.3v1h-15.3zM14.2 78.9h0.7v2.3h-0.7zM16.4 79.7h1.3v1.5h-1.3zM18.3 80.4h1.3v0.8h-1.3zM20.9 79.8h0.8v1.4h-0.8zM23.5 79h1.1v2.2h-1.1zM23.5 82.7h.9v.9h-.9zM25.9 80.3h1.3v0.9h-1.3zM30.1 81.2h10.4v1h-10.4zM30.8 79.6h1v1.6h-1zM32.7 79.6h0.9v1.6h-0.9zM32.7 82.7h.9v.9h-.9zM35.4 78.8h0.7v2.4h-0.7zM35.4 77.6h.9v.9h-.9zM38.4 80.2h0.9v1h-0.9zM42.9 81.2h12.9v1h-12.9zM44.3 78.8h0.7v2.4h-0.7zM47.5 79h1.2v2.2h-1.2zM50.5 80h0.9v1.2h-0.9zM53.9 78.9h1.2v2.3h-1.2zM58.4 81.2h12.6v1h-12.6zM59.3 80h1.1v1.2h-1.1zM61.4 80.1h0.9v1.1h-0.9zM64.1 80h0.9v1.2h-0.9zM66.6 80.4h0.7v0.8h-0.7zM69.2 79.9h1.1v1.3h-1.1zM72.6 81.2h9.5v1h-9.5zM73.1 79.3h1.1v1.9h-1.1zM75.6 78.9h1.1v2.3h-1.1zM75.6 82.7h.9v.9h-.9zM77.8 79.6h1.4v1.6h-1.4zM81 79.9h1.2v1.3h-1.2zM81 82.7h.9v.9h-.9zM85 81.2h9.1v1h-9.1zM85.4 80.7h0.8v0.5h-0.8zM88.5 80.3h1v0.9h-1zM91.4 79.1h1.2v2.1h-1.2zM97.1 81.2h11.4v1h-11.4zM97.2 79.2h1.3v2h-1.3zM99.3 80.3h1.1v0.9h-1.1zM102.3 78.9h0.8v2.3h-0.8zM105.5 79.5h1v1.7h-1zM13 90.2h11.2v1h-11.2zM13.1 88.5h0.9v1.7h-0.9zM16 89.2h1v1h-1zM16 91.7h.9v.9h-.9zM19.5 88.6h1.4v1.6h-1.4zM19.5 91.7h.9v.9h-.9zM22.4 88.3h0.9v1.9h-0.9zM22.4 91.7h.9v.9h-.9zM25.9 90.2h16.5v1h-16.5zM26.1 88.2h1v2h-1zM29 88.6h1.2v1.6h-1.2zM31.4 88.3h0.9v1.9h-0.9zM34.6 88.2h0.9v2h-0.9zM38.2 88.8h0.9v1.4h-0.9zM41.7 89.4h0.7v0.8h-0.7zM45.1 90.2h10.4v1h-10.4zM46.6 89.3h1.2v0.9h-1.2zM46.6 91.7h.9v.9h-.9zM48.5 89.4h0.7v0.8h-0.7zM51.4 89.4h1.4v0.8h-1.4zM53.5 89.4h1.2v0.8h-1.2zM57.1 90.2h16.7v1h-16.7zM57.4 87.8h1v2.4h-1zM59.9 88.2h1v2h-1zM63.4 89.5h1.2v0.7h-1.2zM63.4 91.7h.9v.9h-.9zM66.4 88.9h1.3v1.3h-1.3zM66.4 91.7h.9v.9h-.9zM69.2 88.9h1.3v1.3h-1.3zM72.2 89.3h0.9v0.9h-0.9zM75.6 90.2h8v1h-8zM76.7 88.5h0.9v1.7h-0.9zM79 88.6h0.8v1.6h-0.8zM82.4 89.2h1.2v1h-1.2zM85.6 90.2h12.3v1h-12.3zM87 89.4h1.2v0.8h-1.2zM89.6 88.6h1.3v1.6h-1.3zM93.1 89h1.2v1.2h-1.2zM95.3 88.1h1.4v2.1h-1.4zM97.2 89.5h0.7v0.7h-0.7zM97.2 91.7h.9v.9h-.9zM99.7 90.2h16v1h-16zM99.8 89.4h1.2v0.8h-1.2zM99.8 91.7h.9v.9h-.9zM102.3 88h1.2v2.2h-1.2zM105.8 89.6h0.9v0.6h-0.9zM108.9 89.6h1.1v0.6h-1.1zM111.5 89.5h0.7v0.7h-0.7zM114 88h0.8v2.2h-0.8zM117.8 90.2h7.7v1h-7.7zM118.9 89.4h1.2v0.8h-1.2zM121 89h1v1.2h-1zM123.4 89.3h1.4v0.9h-1.4zM127.4 90.2h4.3v1h-4.3zM127.8 89.6h0.7v0.6h-0.7zM130.4 88.6h1v1.6h-1zM130.4 91.7h.9v.9h-.9zM13 98.6h13.2v1h-13.2zM13.8 96.8h1.4v1.8h-1.4zM16.9 97.3h0.9v1.3h-0.9zM20.5 97.4h1v1.2h-1zM22.6 96.2h0.7v2.4h-0.7zM28 98.6h14.2v1h-14.2zM28.6 97.6h0.8v1h-0.8zM28.6 95h.9v.9h-.9zM31.9 96.6h1.3v2h-1.3zM31.9 100.1h.9v.9h-.9zM35 97.5h1.2v1.1h-1.2zM37.5 96.3h0.7v2.3h-0.7zM40.8 97.1h1.1v1.5h-1.1zM44.6 98.6h16.1v1h-16.1zM45.2 96.7h1v1.9h-1zM48.2 96.8h0.9v1.8h-0.9zM51 97.7h1.1v0.9h-1.1zM54.4 97.2h1.2v1.4h-1.2zM57.1 97.7h0.8v0.9h-0.8zM59.9 97.1h0.9v1.5h-0.9zM62.6 98.6h17.3v1h-17.3zM63.2 96.9h1.3v1.7h-1.3zM66.6 98h1v0.6h-1zM69.9 97.9h0.8v0.7h-0.8zM72 97.4h1.3v1.2h-1.3zM74.7 97.9h1v0.7h-1zM77.7 97.2h1v1.4h-1zM81.6 98.6h15.2v1h-15.2zM82.2 97.1h0.9v1.5h-0.9zM84.6 97.4h0.7v1.2h-0.7zM87.5 98h0.8v0.6h-0.8zM89.9 97.5h0.9v1.1h-0.9zM91.9 96.9h1.3v1.7h-1.3zM94.6 96.6h1.1v2h-1.1zM99 98.6h10.5v1h-10.5zM100 97.5h1v1.1h-1zM103.3 97.4h1v1.2h-1zM106.8 97.7h1.4v0.9h-1.4zM112 98.6h9.9v1h-9.9zM112.1 96.7h1v1.9h-1zM114.8 96.4h1.2v2.2h-1.2zM114.8 100.1h.9v.9h-.9zM117.7 97.2h1v1.4h-1zM120.3 97.2h1.3v1.4h-1.3zM124.2 98.6h1.1v1h-1.1zM12.4 107.1h11v1h-11zM12.5 105.3h1.1v1.8h-1.1zM15.7 106.4h0.9v0.7h-0.9zM15.7 108.6h.9v.9h-.9zM19 106.4h0.8v0.7h-0.8zM21.8 106.5h1.2v0.6h-1.2zM25 107.1h15.4v1h-15.4zM25.6 105.5h1.4v1.6h-1.4zM29 106.3h0.9v0.8h-0.9zM30.9 104.7h0.9v2.4h-0.9zM33.4 106.1h1.3v1h-1.3zM36.1 105.8h0.7v1.3h-0.7zM39.5 105.1h0.9v2h-0.9zM42 107.1h4.8v1h-4.8zM42.5 105.7h1v1.4h-1zM45 105.1h0.8v2h-0.8zM12 115.6h9.7v1h-9.7zM12.8 114.3h1.1v1.3h-1.1zM15.2 113.6h0.9v2h-0.9zM18.4 114h1v1.6h-1zM21.1 113.4h0.6v2.2h-0.6zM23.3 115.6h11.5v1h-11.5zM23.4 114h0.8v1.6h-0.8zM26.2 113.6h1v2h-1zM29.3 114.5h0.8v1.1h-0.8zM31.4 113.4h0.8v2.2h-0.8zM31.4 112h.9v.9h-.9zM33.5 113.6h1.3v2h-1.3z" fill="#000" opacity=".85"/><path d="M6.1 6.1l2.5 1.5-2.5 1.5z" fill="#8899bb" opacity="0.7"/><path d="M6.1 15.399999999999999l2.5 1.5-2.5 1.5z" fill="#8899bb" opacity="0.7"/><path d="M6.1 25.3l2.5 1.5-2.5 1.5z" fill="#8899bb" opacity="0.7"/><path d="M6.1 34.5l2.5 1.5-2.5 1.5z" fill="#8899bb" opacity="0.7"/><path d="M6.1 41.8l2.5 1.5-2.5 1.5z" fill="#8899bb" opacity="0.7"/><path d="M6.1 51.7l2.5 1.5-2.5 1.5z" fill="#8899bb" opacity="0.7"/><path d="M6.1 70.2l2.5 1.5-2.5 1.5z" fill="#8899bb" opacity="0.7"/><path d="M6.1 79.5l2.5 1.5-2.5 1.5z" fill="#8899bb" opacity="0.7"/><path d="M6.1 88.5l2.5 1.5-2.5 1.5z" fill="#8899bb" opacity="0.7"/><path d="M6.1 96.9l2.5 1.5-2.5 1.5z" fill="#8899bb" opacity="0.7"/><path d="M6.1 105.4l2.5 1.5-2.5 1.5z" fill="#8899bb" opacity="0.7"/><path d="M6.1 113.9l2.5 1.5-2.5 1.5z" fill="#8899bb" opacity="0.7"/></svg>
</div>
<svg style="position:absolute;left:745.1px;top:296.6px" width="9.4" height="12" viewBox="0 0 9.4 12"><g fill="none" stroke="#444" stroke-width="1.25"><path transform="translate(0.0 0)" d="M5.6 11V0.6L0.4 7.9H7.4"/></g></svg>
<svg style="position:absolute;left:595px;top:297px;" width="11" height="10" viewBox="0 0 11 10"><path d="M5.5 0.3l1.45 3.4 3.7.3-2.8 2.4.9 3.6-3.25-1.95-3.25 1.95.9-3.6L0.35 4l3.7-.3z" fill="#666"/><rect x="0" y="2.5" width="1.2" height="1.2" fill="#666"/><rect x="0" y="5.8" width="1.6" height="1" fill="#666"/></svg>
<div style="position:absolute;left:788px;top:168px;width:162px;height:123px;overflow:hidden"><div style="position:absolute;left:0;top:0;width:162px;height:123px;box-sizing:border-box;border:1px solid #c8c8c8;background:#fff"></div><div style="position:absolute;left:2px;top:2px;width:158px;height:119px;background:radial-gradient(ellipse 62% 88% at 47% 49%, #62838f 0%, #58788a 18%, #475c74 45%, #363f61 75%, #2c3456 100%)"></div>
<svg style="position:absolute;left:2px;top:2px;" width="158" height="119" viewBox="0 0 158 119"><path d="M9.5 9.1h18.6v0.8h-18.6zM10.5 8.4h0.6v0.6h-0.6zM12.5 7.4h0.7v1.7h-0.7zM15.4 8.2h0.9v0.9h-0.9zM15.4 6.2h.9v.9h-.9zM18.8 8.2h1v0.9h-1zM18.8 6.2h.9v.9h-.9zM22.1 7.2h0.8v1.9h-0.8zM22.1 10.4h.9v.9h-.9zM24.6 7.7h0.7v1.4h-0.7zM26.7 8h1v1.1h-1zM29.4 9.1h17.4v0.8h-17.4zM29.6 7.3h1.1v1.8h-1.1zM32.4 8.2h0.8v0.8h-0.8zM35.1 7.2h0.6v1.8h-0.6zM38.5 7.8h0.9v1.3h-0.9zM38.5 10.4h.9v.9h-.9zM40.7 8.2h1.1v0.8h-1.1zM42.9 7.3h0.6v1.8h-0.6zM48.5 9.1h19.2v0.8h-19.2zM49.5 8.6h0.7v0.5h-0.7zM51.8 7.5h0.7v1.5h-0.7zM54.2 8.6h0.9v0.5h-0.9zM54.2 10.4h.9v.9h-.9zM57 7.5h0.9v1.6h-0.9zM59 7.9h0.6v1.2h-0.6zM61.1 7.8h0.8v1.3h-0.8zM64.1 8.4h0.7v0.6h-0.7zM66.6 7.4h1v1.7h-1zM68.9 9.1h18.2v0.8h-18.2zM69.1 7.9h0.9v1.2h-0.9zM69.1 6.2h.9v.9h-.9zM71.8 8.4h0.9v0.6h-0.9zM74.3 8.4h0.8v0.7h-0.8zM76.5 8.3h1v0.8h-1zM79.9 8.6h1.1v0.4h-1.1zM83.1 7.8h0.9v1.3h-0.9zM86.3 8.4h0.7v0.6h-0.7zM86.3 10.4h.9v.9h-.9zM89 9.1h9.4v0.8h-9.4zM90.3 8.5h0.9v0.5h-0.9zM93.2 7.5h1v1.6h-1zM93.2 10.4h.9v.9h-.9zM95.5 7.7h1.1v1.3h-1.1zM95.5 10.4h.9v.9h-.9zM100.4 9.1h17.2v0.8h-17.2zM100.9 7.4h0.8v1.6h-0.8zM102.8 7.2h0.8v1.8h-0.8zM104.8 8.3h1v0.8h-1zM107 8.1h0.6v0.9h-0.6zM109.3 8.2h1.1v0.9h-1.1zM112.5 7.9h0.8v1.1h-0.8zM116 7.5h0.9v1.5h-0.9zM119.8 9.1h16.8v0.8h-16.8zM119.9 7.6h0.8v1.5h-0.8zM123.5 7.6h1v1.4h-1zM123.5 6.2h.9v.9h-.9zM126.8 7.2h1.1v1.8h-1.1zM130.1 7.4h0.9v1.6h-0.9zM133.4 7.5h1v1.6h-1zM138.4 9.1h11.4v0.8h-11.4zM138.6 7.2h1v1.9h-1zM141.9 8.3h0.7v0.8h-0.7zM144.2 7.9h1.1v1.1h-1.1zM147.3 8.1h1v1h-1zM9.5 17.4h17.4v0.8h-17.4zM10.1 16.8h0.9v0.5h-0.9zM12.6 16.1h1v1.3h-1zM14.5 16.2h0.6v1.1h-0.6zM14.5 14.5h.9v.9h-.9zM17.8 16.3h0.9v1h-0.9zM20.2 16.6h0.8v0.7h-0.8zM23.2 16.5h0.6v0.8h-0.6zM28.6 17.4h14.9v0.8h-14.9zM29.8 16.8h0.9v0.6h-0.9zM29.8 18.7h.9v.9h-.9zM33.1 16.7h0.7v0.7h-0.7zM35.6 16.6h1.1v0.7h-1.1zM39.1 16.4h0.8v1h-0.8zM41.8 15.5h0.7v1.9h-0.7zM45.4 17.4h5v0.8h-5zM45.6 15.5h0.8v1.8h-0.8zM48 16.4h0.6v0.9h-0.6zM52.2 17.4h10.7v0.8h-10.7zM53.6 15.6h0.9v1.8h-0.9zM53.6 18.7h.9v.9h-.9zM56.5 16.3h1.1v1.1h-1.1zM59.6 16h0.8v1.4h-0.8zM65.1 17.4h12.5v0.8h-12.5zM65.7 15.5h0.6v1.9h-0.6zM68.7 16.1h0.8v1.2h-0.8zM72.1 15.9h1v1.5h-1zM72.1 18.7h.9v.9h-.9zM74.6 16.8h1.1v0.6h-1.1zM76.7 16.1h0.9v1.3h-0.9zM76.7 18.7h.9v.9h-.9zM79.7 17.4h14.6v0.8h-14.6zM80.1 15.8h0.7v1.6h-0.7zM82.7 15.5h0.9v1.9h-0.9zM85.8 16.4h1.1v1h-1.1zM88.9 16.5h0.7v0.8h-0.7zM92.2 15.8h0.8v1.6h-0.8zM92.2 14.5h.9v.9h-.9zM96.6 17.4h7.4v0.8h-7.4zM97.7 16.7h0.7v0.7h-0.7zM97.7 18.7h.9v.9h-.9zM100.1 16.4h1.1v1h-1.1zM102.3 16.5h1.1v0.9h-1.1zM105.7 17.4h6.6v0.8h-6.6zM106.1 16.4h0.8v1h-0.8zM108.5 16.6h1.1v0.7h-1.1zM114.3 17.4h16.7v0.8h-16.7zM114.8 16.7h1v0.6h-1zM117.6 15.9h1v1.4h-1zM120.2 15.6h0.9v1.8h-0.9zM123.1 16.6h1v0.8h-1zM123.1 18.7h.9v.9h-.9zM126.4 16.1h0.8v1.3h-0.8zM128.8 16.6h0.6v0.8h-0.6zM133 17.4h11.2v0.8h-11.2zM134.2 16.8h0.7v0.6h-0.7zM137.8 16h0.9v1.4h-0.9zM140.3 15.5h1v1.8h-1zM142.9 15.7h0.8v1.6h-0.8zM146 17.4h3.3v0.8h-3.3zM147 15.6h0.6v1.8h-0.6zM142 23h7.3v0.8h-7.3zM143.3 21.5h0.9v1.4h-0.9zM146.2 22.1h1v0.8h-1zM69.7 35.8h15.1v1.1h-15.1zM70.8 34.2h1.5v1.6h-1.5zM74 33.6h1.3v2.3h-1.3zM76.1 33.8h1.3v2h-1.3zM78.5 35.1h1.2v0.7h-1.2zM80.8 34.8h0.9v1h-0.9zM80.8 37.4h.9v.9h-.9zM83.9 33.2h0.9v2.6h-0.9zM86.5 35.8h17.6v1.1h-17.6zM87 35.3h1.3v0.6h-1.3zM87 31.9h.9v.9h-.9zM89.4 35.1h1.1v0.7h-1.1zM92.7 35.2h1.4v0.6h-1.4zM92.7 31.9h.9v.9h-.9zM95 34h1v1.9h-1zM97.8 34.8h1.4v1h-1.4zM101.1 33.6h1.2v2.2h-1.2zM101.1 37.4h.9v.9h-.9zM105.8 35.8h12.6v1.1h-12.6zM106.5 35.1h1.3v0.7h-1.3zM109.3 34.4h1.2v1.4h-1.2zM111.6 33.5h1.5v2.4h-1.5zM115.2 34.6h1.5v1.2h-1.5zM115.2 37.4h.9v.9h-.9zM120.3 35.8h11.8v1.1h-11.8zM121.3 33.8h1.1v2h-1.1zM123.5 34.4h1v1.4h-1zM126.7 34.2h1.1v1.6h-1.1zM129.8 34.9h1v1h-1zM135.3 35.8h14v1.1h-14zM136.7 33.3h1.3v2.5h-1.3zM138.8 34.8h0.8v1h-0.8zM141.9 34h1v1.9h-1zM144.1 33.9h1.5v1.9h-1.5zM146 34.9h1v0.9h-1zM118.9 49.1h6.5v0.8h-6.5zM119.1 48.4h1v0.6h-1zM122.6 47.3h1v1.8h-1zM126.8 49.1h6.6v0.8h-6.6zM127.6 47.9h0.7v1.2h-0.7zM129.6 47.3h1v1.8h-1zM135.1 49.1h7.8v0.8h-7.8zM135.7 47.4h1v1.6h-1zM135.7 46.2h.9v.9h-.9zM137.6 48.3h0.9v0.7h-0.9zM139.6 47.4h1v1.7h-1zM141.5 47.3h0.9v1.8h-0.9zM141.5 50.4h.9v.9h-.9zM82.9 56.2h18.3v0.8h-18.3zM83.6 54.8h0.7v1.4h-0.7zM87.1 55.2h0.6v1h-0.6zM89.2 55.5h0.8v0.7h-0.8zM92.2 54.7h0.8v1.5h-0.8zM92.2 57.5h.9v.9h-.9zM95.3 55.7h0.8v0.5h-0.8zM98.3 54.7h0.7v1.5h-0.7zM102.9 56.2h7.1v0.8h-7.1zM104.3 54.8h0.6v1.3h-0.6zM107.9 55.4h0.8v0.7h-0.8zM66 63h16.1v0.8h-16.1zM66.1 62.4h1.1v0.5h-1.1zM68 62.5h0.7v0.5h-0.7zM70.3 61.5h1.1v1.4h-1.1zM73.8 62.2h0.6v0.8h-0.6zM73.8 64.3h.9v.9h-.9zM76.9 62.4h1.1v0.6h-1.1zM79.2 61.3h0.7v1.6h-0.7zM81.2 61.4h0.9v1.6h-0.9zM30 69.9h13.3v0.8h-13.3zM31.2 68.7h0.9v1.2h-0.9zM34.5 69.3h0.6v0.5h-0.6zM36.9 68.9h0.6v1h-0.6zM38.8 68.2h1v1.7h-1zM40.9 68.5h0.7v1.4h-0.7zM45.7 69.9h9.1v0.8h-9.1zM46.2 69.3h1v0.5h-1zM49.6 69.3h0.8v0.6h-0.8zM52.8 69.2h0.9v0.6h-0.9zM82.9 75.9h6.1v0.8h-6.1zM83.1 74.4h0.9v1.5h-0.9zM85.7 74.8h0.9v1h-0.9zM91.1 75.9h16.9v0.8h-16.9zM92.5 74.2h1v1.7h-1zM92.5 77.2h.9v.9h-.9zM95.5 74.2h0.8v1.7h-0.8zM97.7 74h0.8v1.8h-0.8zM100.1 75h0.8v0.9h-0.8zM102.1 74.8h1.1v1.1h-1.1zM105.6 74.3h1v1.6h-1zM109.6 75.9h8.7v0.8h-8.7zM110.2 75.4h0.7v0.4h-0.7zM113.7 75h1v0.9h-1zM117.1 74.3h0.9v1.6h-0.9zM117.1 73h.9v.9h-.9zM119.9 75.9h14.4v0.8h-14.4zM120.5 74.6h1.1v1.2h-1.1zM123.3 74.5h0.9v1.4h-0.9zM125.9 74.1h0.9v1.8h-0.9zM127.9 75.1h0.7v0.7h-0.7zM129.8 75.1h1v0.8h-1zM132 74.8h0.9v1.1h-0.9zM136.4 75.9h8.7v0.8h-8.7zM136.8 75.4h0.9v0.4h-0.9zM139.1 74h0.9v1.9h-0.9zM142.2 74.6h0.9v1.3h-0.9zM144.2 75.4h0.6v0.5h-0.6zM146.5 75.9h2.8v0.8h-2.8zM147.9 74.4h0.7v1.4h-0.7zM76.5 81.8h9.5v0.8h-9.5zM77.1 80.3h0.8v1.4h-0.8zM79.2 79.9h0.8v1.8h-0.8zM81.1 80.1h0.7v1.7h-0.7zM84.4 80.3h0.7v1.4h-0.7zM84.4 83.1h.9v.9h-.9zM88.3 81.8h7.4v0.8h-7.4zM89.3 80.5h0.9v1.3h-0.9zM91.5 81.2h1.1v0.5h-1.1zM94.5 80.5h0.7v1.3h-0.7zM94.5 83.1h.9v.9h-.9zM97.9 81.8h4.1v0.8h-4.1zM99.4 80.8h1v1h-1zM99.4 78.9h.9v.9h-.9zM52.4 89.2h10.5v0.8h-10.5zM53.2 88.6h0.7v0.6h-0.7zM55.6 88.2h1v1h-1zM57.8 88.4h0.8v0.7h-0.8zM60.8 88h1v1.1h-1zM60.8 90.5h.9v.9h-.9zM65.1 89.2h8.5v0.8h-8.5zM65.1 88.1h0.6v1.1h-0.6zM68.3 88.6h0.6v0.5h-0.6zM70.4 88.4h0.8v0.8h-0.8zM70.4 86.3h.9v.9h-.9zM72.5 88.2h0.8v0.9h-0.8zM60.4 95.6h8.3v0.8h-8.3zM61.5 94.3h1v1.3h-1zM64.9 95h1.1v0.6h-1.1zM67.2 94.9h1v0.7h-1zM70.3 95.6h18.9v0.8h-18.9zM70.9 94h0.6v1.5h-0.6zM73.4 94.8h0.9v0.7h-0.9zM75.5 93.7h0.8v1.9h-0.8zM77.4 94.2h0.8v1.4h-0.8zM77.4 96.9h.9v.9h-.9zM80.1 94h0.9v1.5h-0.9zM82.9 94.2h0.9v1.3h-0.9zM82.9 92.7h.9v.9h-.9zM86.1 93.7h1v1.8h-1zM91.4 95.6h7.7v0.8h-7.7zM91.7 94.3h1.1v1.3h-1.1zM91.7 96.9h.9v.9h-.9zM94 95.1h0.8v0.5h-0.8zM94 92.7h.9v.9h-.9zM96.2 94h0.9v1.5h-0.9zM101.1 95.6h5.2v0.8h-5.2zM102.6 94.8h0.8v0.8h-0.8zM117.3 95.6h19.9v0.8h-19.9zM118.2 94.8h1v0.7h-1zM121.8 94.5h0.7v1.1h-0.7zM124.3 94.5h0.8v1h-0.8zM126.2 94.6h0.7v1h-0.7zM128.1 94.2h0.7v1.3h-0.7zM131 94.1h0.6v1.5h-0.6zM133.1 93.7h0.6v1.9h-0.6zM133.1 92.7h.9v.9h-.9zM135.9 94.3h1.1v1.3h-1.1zM135.9 96.9h.9v.9h-.9zM138.6 95.6h10.7v0.8h-10.7zM139.3 94.5h1.1v1h-1.1zM142.6 93.7h0.7v1.9h-0.7zM145.2 95.1h1.1v0.5h-1.1zM145.2 92.7h.9v.9h-.9zM147.1 94.7h0.7v0.8h-0.7zM54 103.1h12.9v0.8h-12.9zM55.3 101.4h0.9v1.6h-0.9zM57.4 102.3h0.9v0.8h-0.9zM60.6 101.3h1.1v1.8h-1.1zM62.7 101.3h0.9v1.8h-0.9zM65.7 102.3h0.7v0.8h-0.7zM69 103.1h6.1v0.8h-6.1zM70.1 101.7h0.8v1.3h-0.8zM73.3 102.6h0.8v0.4h-0.8zM77 103.1h7.7v0.8h-7.7zM78.5 101.5h0.7v1.6h-0.7zM82 102.3h0.8v0.7h-0.8zM86.2 103.1h16v0.8h-16zM86.8 101.7h1v1.4h-1zM86.8 100.2h.9v.9h-.9zM89 102.3h0.7v0.7h-0.7zM89 104.4h.9v.9h-.9zM91.2 102h0.8v1h-0.8zM91.2 104.4h.9v.9h-.9zM94.1 101.2h0.9v1.8h-0.9zM97.2 102h0.7v1.1h-0.7zM99.1 101.6h0.7v1.4h-0.7zM125.3 103.1h17.5v0.8h-17.5zM126.3 101.7h1v1.4h-1zM128.5 101.5h0.7v1.6h-0.7zM131.8 101.7h1v1.3h-1zM134.7 102.4h0.6v0.7h-0.6zM137.8 102.2h0.6v0.8h-0.6zM137.8 104.4h.9v.9h-.9zM140 101.6h0.6v1.5h-0.6zM144.9 103.1h4.4v0.8h-4.4zM144.9 102.5h1.1v0.6h-1.1zM147.1 102.2h0.9v0.9h-0.9zM42 110.8h8.9v0.8h-8.9zM42.1 110.2h0.7v0.5h-0.7zM42.1 112.1h.9v.9h-.9zM45 109.3h0.7v1.5h-0.7zM48.2 109.8h0.8v0.9h-0.8zM52.8 110.8h5.8v0.8h-5.8zM53 109.3h0.8v1.5h-0.8zM55.3 109.1h1v1.6h-1zM55.3 112.1h.9v.9h-.9zM59.9 110.8h15.6v0.8h-15.6zM61.2 109.2h0.7v1.6h-0.7zM61.2 112.1h.9v.9h-.9zM64.2 109.5h0.6v1.3h-0.6zM67.1 110.2h0.9v0.6h-0.9zM69.4 109.7h0.9v1h-0.9zM71.4 109.3h0.7v1.5h-0.7zM74.4 109.3h0.9v1.5h-0.9zM77.1 110.8h14.9v0.8h-14.9zM77.5 110.1h0.7v0.6h-0.7zM80.8 109.3h1.1v1.5h-1.1zM83.3 109.9h1v0.9h-1zM83.3 112.1h.9v.9h-.9zM86.2 110.2h0.6v0.5h-0.6zM88.4 108.9h1.1v1.8h-1.1zM90.6 110.2h0.8v0.6h-0.8zM94.1 110.8h10.4v0.8h-10.4zM95.3 110.2h0.6v0.6h-0.6zM98 110h0.9v0.8h-0.9zM100.5 109.6h1v1.1h-1zM103 109.7h1.1v1.1h-1.1zM130.9 110.8h11.8v0.8h-11.8zM131.9 109.9h0.6v0.8h-0.6zM135.3 110.2h0.8v0.6h-0.8zM137.7 110.3h1v0.5h-1zM140.4 110.2h0.8v0.5h-0.8zM140.4 112.1h.9v.9h-.9zM144 110.8h5.3v0.8h-5.3zM145.1 110.2h0.6v0.6h-0.6zM145.1 112.1h.9v.9h-.9zM147.3 109.6h1v1.2h-1z" fill="#fff" opacity=".8"/></svg>
</div>
<svg style="position:absolute;left:940.1px;top:296.6px" width="9.4" height="12" viewBox="0 0 9.4 12"><g fill="none" stroke="#444" stroke-width="1.25"><path transform="translate(0.0 0)" d="M1 1C1.8 0.6 2.8 0.4 3.8 0.4C5.5 0.4 6.5 1.3 6.5 2.8C6.5 4.4 5.3 5.4 3.2 5.4H2.4M3.2 5.4C5.6 5.4 7 6.5 7 8.1C7 9.9 5.6 10.9 3.5 10.9C2.4 10.9 1.4 10.7 0.7 10.2"/></g></svg>
<svg style="position:absolute;left:790px;top:297px;" width="11" height="10" viewBox="0 0 11 10"><path d="M5.5 0.3l1.45 3.4 3.7.3-2.8 2.4.9 3.6-3.25-1.95-3.25 1.95.9-3.6L0.35 4l3.7-.3z" fill="#666"/><rect x="0" y="2.5" width="1.2" height="1.2" fill="#666"/><rect x="0" y="5.8" width="1.6" height="1" fill="#666"/></svg>
<div style="position:absolute;left:983px;top:168px;width:162px;height:123px;overflow:hidden"><div style="position:absolute;left:0;top:0;width:162px;height:123px;box-sizing:border-box;border:1px solid #c8c8c8;background:#fff"></div><div style="position:absolute;left:2px;top:2px;width:158px;height:119px;background:radial-gradient(ellipse 62% 88% at 47% 49%, #62838f 0%, #58788a 18%, #475c74 45%, #363f61 75%, #2c3456 100%)"></div>
<svg style="position:absolute;left:2px;top:2px;" width="158" height="119" viewBox="0 0 158 119"><rect x="6.8" y="6.8" width="148.1" height="99.8" fill="url(#gbox)"/><path d="M8.9 21.5h11.4v1.4h-11.4zM9.4 20.5h1.2v1h-1.2zM11.5 20.1h1.7v1.4h-1.7zM14.9 19.5h1.9v2h-1.9zM17.3 19.5h1.7v1.9h-1.7zM19.5 20.3h0.8v1.2h-0.8zM19.5 16.4h.9v.9h-.9zM23.1 21.5h8.7v1.4h-8.7zM23.5 19.5h2v1.9h-2zM23.5 16.4h.9v.9h-.9zM26.8 19.9h1.1v1.6h-1.1zM29.3 20.3h1.4v1.2h-1.4zM35.1 21.5h5.2v1.4h-5.2zM36.3 19.2h1.9v2.3h-1.9zM38.7 18.5h1.6v3h-1.6zM43.2 21.5h10.3v1.4h-10.3zM43.7 20.5h1.2v1h-1.2zM46.3 19.1h1.8v2.4h-1.8zM48.6 18.3h1.8v3.1h-1.8zM51.8 18.8h1.7v2.7h-1.7zM56.4 21.5h17.6v1.4h-17.6zM56.6 19.3h1.3v2.1h-1.3zM59 18.5h1.8v2.9h-1.8zM61.2 18.3h1.7v3.2h-1.7zM64.2 20.7h1.8v0.8h-1.8zM66.9 19.9h1.7v1.6h-1.7zM70.2 20.2h1.3v1.3h-1.3zM72.3 19.9h1v1.6h-1zM76.2 21.5h6v1.4h-6zM77.3 20.3h1.4v1.2h-1.4zM80.6 18.2h1.3v3.2h-1.3zM85.3 21.5h18.5v1.4h-18.5zM86.4 20h1.8v1.5h-1.8zM88.5 19.2h1.8v2.3h-1.8zM91.2 19.7h1.8v1.8h-1.8zM93.5 19.8h1.3v1.7h-1.3zM96.5 20.4h1.9v1h-1.9zM96.5 23.4h.9v.9h-.9zM99.5 19.6h1.7v1.9h-1.7zM101.5 19.4h1.8v2.1h-1.8zM106.4 21.5h16.2v1.4h-16.2zM107.6 20.2h1.8v1.3h-1.8zM110.2 19.8h1.7v1.7h-1.7zM112.5 20h1.3v1.5h-1.3zM114.7 19.3h1.5v2.2h-1.5zM116.8 18.2h2v3.2h-2zM120.1 20.3h1.9v1.2h-1.9zM126.5 21.5h10.4v1.4h-10.4zM127.9 20.2h1v1.3h-1zM131.3 18.4h1.9v3.1h-1.9zM134.8 19.3h1.1v2.2h-1.1zM139.9 21.5h14v1.4h-14zM140.3 20h1.4v1.4h-1.4zM143 20.5h1v0.9h-1zM146.1 18.8h1.2v2.7h-1.2zM148.9 20.3h1.6v1.2h-1.6zM151.1 19.2h1.7v2.3h-1.7zM15.6 31.9h9.1v1.4h-9.1zM16.9 28.7h1v3.2h-1zM19.5 31h1v0.9h-1zM22.6 30.8h1.4v1.1h-1.4zM27.5 31.9h16.5v1.4h-16.5zM27.9 30.7h1.1v1.2h-1.1zM30.8 30.4h1.1v1.5h-1.1zM32.9 30.7h1.3v1.2h-1.3zM35.1 29.9h1.4v2h-1.4zM37.8 28.7h1.4v3.2h-1.4zM40.7 30.8h1.1v1.1h-1.1zM40.7 33.8h.9v.9h-.9zM48.1 31.9h11.1v1.4h-11.1zM48.7 30h1.3v1.8h-1.3zM51.2 30.8h1.8v1.1h-1.8zM53.1 28.9h1.7v3h-1.7zM56.1 28.7h1.4v3.1h-1.4zM58.5 29.7h0.7v2.2h-0.7zM61.6 31.9h10.5v1.4h-10.5zM62.9 29.1h1.6v2.8h-1.6zM65.3 28.7h1.5v3.2h-1.5zM67.5 30.9h1.9v1h-1.9zM69.5 30.3h1.5v1.6h-1.5zM76 31.9h10.2v1.4h-10.2zM76.8 28.7h1.6v3.2h-1.6zM79.3 30.2h1.6v1.7h-1.6zM81.7 30.2h1.4v1.7h-1.4zM85.1 29.7h1.2v2.1h-1.2zM88.7 31.9h15.3v1.4h-15.3zM88.8 30.7h1v1.2h-1zM90.9 30.6h1v1.3h-1zM94.1 29.3h1.9v2.6h-1.9zM96.9 28.7h1.1v3.2h-1.1zM99.5 30.7h1.7v1.2h-1.7zM102.1 30.9h1.8v0.9h-1.8zM108.2 31.9h1.8v1.4h-1.8zM108.3 30.8h1v1h-1zM15.6 51.8h7.4v1h-7.4zM15.9 50.1h1.2v1.7h-1.2zM18.4 49.4h1v2.4h-1zM20.7 50.9h1.4v0.9h-1.4zM24.8 51.8h7.7v1h-7.7zM25 50.6h1.2v1.2h-1.2zM25 53.3h.9v.9h-.9zM27.8 50h0.7v1.8h-0.7zM31.1 50.2h1v1.6h-1zM34.5 51.8h10.9v1h-10.9zM35.9 49.7h1.3v2.1h-1.3zM38.1 51h1v0.8h-1zM40 49.8h1.3v2h-1.3zM41.9 49.8h1v2h-1zM44.7 49.9h0.7v1.9h-0.7zM48.3 51.8h14.2v1h-14.2zM48.8 50.6h0.9v1.2h-0.9zM52.1 49.8h1.3v2h-1.3zM55.1 50.7h1.2v1.1h-1.2zM58.1 51h1.3v0.8h-1.3zM60.4 49.5h0.8v2.3h-0.8zM64.3 51.8h16.4v1h-16.4zM65.1 49.6h1.1v2.2h-1.1zM68.6 51.1h1.2v0.7h-1.2zM68.6 48.2h.9v.9h-.9zM71 51.1h1.3v0.7h-1.3zM74.1 50.8h1.2v1h-1.2zM76.2 50.4h1.2v1.4h-1.2zM79.2 50.8h1v1h-1zM83.7 51.8h11.4v1h-11.4zM84.6 49.8h1.2v2h-1.2zM87.9 50.5h1.4v1.3h-1.4zM90 49.9h0.8v1.9h-0.8zM92 49.4h1.1v2.4h-1.1zM94.1 50.1h1v1.7h-1zM96.6 51.8h12.2v1h-12.2zM96.8 49.7h1.3v2.1h-1.3zM96.8 53.3h.9v.9h-.9zM99.5 50.4h1.2v1.4h-1.2zM101.9 49.5h0.8v2.3h-0.8zM101.9 48.2h.9v.9h-.9zM105.2 51.1h0.8v0.7h-0.8zM107.7 51h1.1v0.8h-1.1zM110.7 51.8h18.7v1h-18.7zM111 49.6h1.1v2.2h-1.1zM114.2 50.1h1.1v1.7h-1.1zM116.9 51.1h1.3v0.7h-1.3zM119.9 49.9h0.9v1.9h-0.9zM123.2 49.5h1.3v2.3h-1.3zM126.3 50.2h1v1.6h-1zM128.4 50.4h0.9v1.4h-0.9zM131.7 51.8h16.4v1h-16.4zM132.6 51h1.3v0.8h-1.3zM136.1 49.4h0.8v2.4h-0.8zM139.7 50.6h1.1v1.2h-1.1zM141.6 50.9h0.8v0.9h-0.8zM144.6 50.2h1.4v1.6h-1.4zM147.1 49.5h1v2.3h-1zM150.6 51.8h3.4v1h-3.4zM151.5 50.7h1.4v1.1h-1.4zM15.6 58.2h5.1v1h-5.1zM16.4 57.3h1.1v0.9h-1.1zM16.4 54.6h.9v.9h-.9zM19.8 56.4h1v1.8h-1zM23.3 58.2h15.7v1h-15.7zM23.3 57.6h1v0.6h-1zM25.7 56.6h0.7v1.6h-0.7zM29.1 56.6h1.3v1.6h-1.3zM29.1 59.7h.9v.9h-.9zM31.4 57.4h1.3v0.8h-1.3zM31.4 54.6h.9v.9h-.9zM34.9 57.2h1.3v1h-1.3zM37.3 55.9h1v2.3h-1zM41.7 58.2h19.7v1h-19.7zM41.9 56.3h0.9v1.9h-0.9zM41.9 54.6h.9v.9h-.9zM44.4 56.4h1.4v1.8h-1.4zM48 56.5h1.2v1.7h-1.2zM51.1 56.7h1v1.5h-1zM53.5 57.4h0.8v0.8h-0.8zM53.5 54.6h.9v.9h-.9zM56.4 56.2h0.8v2h-0.8zM59.2 56.6h1v1.6h-1zM63 58.2h11.3v1h-11.3zM63.4 56.3h0.9v1.9h-0.9zM65.7 57.5h1v0.7h-1zM68.1 56.2h0.9v2h-0.9zM71.5 56.8h1.1v1.4h-1.1zM76.1 58.2h6v1h-6zM76.2 57.1h0.8v1.1h-0.8zM78.9 57.1h1.1v1.1h-1.1zM81.2 57.4h0.9v0.8h-0.9zM84.7 58.2h11.4v1h-11.4zM85 57.6h0.8v0.6h-0.8zM88 57.4h1.1v0.8h-1.1zM88 59.7h.9v.9h-.9zM90.7 57.1h0.8v1.1h-0.8zM93.9 56.7h0.8v1.5h-0.8zM15.6 74.2h6.4v1h-6.4zM17 73.7h0.9v0.5h-0.9zM19.2 73.5h1.2v0.7h-1.2zM23.9 74.2h15.1v1h-15.1zM24.2 72.9h1.2v1.3h-1.2zM26.4 73.6h1.1v0.6h-1.1zM29.8 73.5h1.1v0.7h-1.1zM32.1 72.4h1v1.8h-1zM34.5 71.9h1.3v2.3h-1.3zM36.6 72.8h0.8v1.4h-0.8zM41.3 74.2h19.6v1h-19.6zM41.4 72.3h1.3v1.9h-1.3zM41.4 70.6h.9v.9h-.9zM43.8 73.6h1.1v0.6h-1.1zM46.3 72.4h1v1.8h-1zM48.7 71.8h1v2.4h-1zM48.7 75.7h.9v.9h-.9zM50.7 72.3h1.3v1.9h-1.3zM52.9 72h1.2v2.2h-1.2zM52.9 70.6h.9v.9h-.9zM55.4 72.4h0.7v1.8h-0.7zM55.4 75.7h.9v.9h-.9zM57.9 72h1.4v2.2h-1.4zM63.6 74.2h18v1h-18zM64.5 71.9h1.2v2.3h-1.2zM67.4 73.3h1.1v0.9h-1.1zM69.8 73h1.1v1.2h-1.1zM72.1 73.2h1.1v1h-1.1zM74.7 72.4h0.8v1.8h-0.8zM77.1 72.2h1.2v2h-1.2zM79.9 73.2h1.3v1h-1.3zM83.5 74.2h11v1h-11zM84.6 72.1h1v2.1h-1zM86.9 72.8h1v1.4h-1zM89.4 72.3h1.2v1.9h-1.2zM91.7 72.2h1.2v2h-1.2zM97.1 74.2h9.1v1h-9.1zM97.2 73h0.7v1.2h-0.7zM100 72.4h1.4v1.8h-1.4zM102.3 73.1h0.8v1.1h-0.8zM105.4 72.8h0.8v1.4h-0.8zM108.8 74.2h18.4v1h-18.4zM110 72.1h1v2.1h-1zM112.5 71.8h0.8v2.4h-0.8zM112.5 70.6h.9v.9h-.9zM114.8 71.9h1.3v2.3h-1.3zM118.2 72h1v2.2h-1zM121.4 73h0.8v1.2h-0.8zM124.1 72.9h1.1v1.3h-1.1zM126 73h1v1.2h-1zM126 75.7h.9v.9h-.9zM129.8 74.2h10v1h-10zM130.9 72.5h0.8v1.7h-0.8zM130.9 75.7h.9v.9h-.9zM133.9 72.5h0.9v1.7h-0.9zM137.3 72h0.9v2.2h-0.9zM141.8 74.2h5.5v1h-5.5zM142.3 72.5h1.1v1.7h-1.1zM144.4 73.3h0.9v0.9h-0.9zM150.2 74.2h3.8v1h-3.8zM151.7 73.2h1.3v1h-1.3zM15.6 79.1h5.6v1h-5.6zM16.8 77.1h0.9v2h-0.9zM19.5 76.7h0.7v2.4h-0.7zM23.6 79.1h16.7v1h-16.7zM24.9 77.6h1v1.5h-1zM26.9 78.1h1.2v1h-1.2zM30.5 78.4h1v0.7h-1zM32.4 78.4h0.8v0.7h-0.8zM35.1 77.6h0.9v1.5h-0.9zM37.9 76.7h0.8v2.4h-0.8zM42.3 79.1h17.9v1h-17.9zM42.6 76.9h1v2.2h-1zM45.6 77.5h0.9v1.6h-0.9zM45.6 80.6h.9v.9h-.9zM49.1 77.9h0.8v1.2h-0.8zM51.9 78h0.9v1.1h-0.9zM54.4 77.8h1.4v1.3h-1.4zM57 78.3h1.2v0.8h-1.2zM59.6 77.8h0.6v1.3h-0.6zM63 79.1h10.6v1h-10.6zM64.1 78.5h0.9v0.6h-0.9zM67.2 77.3h1v1.8h-1zM69.4 78.3h1.2v0.8h-1.2zM71.7 77.4h0.8v1.7h-0.8zM75.9 79.1h9.7v1h-9.7zM76.7 78.3h1v0.8h-1zM78.8 78h1.2v1.1h-1.2zM81.8 77.1h1.1v2h-1.1zM84.4 77h1.1v2.1h-1.1zM87.8 79.1h19.5v1h-19.5zM89 77.4h0.8v1.7h-0.8zM91 76.8h1.4v2.3h-1.4zM93.3 77h0.8v2.1h-0.8zM96.1 78.6h1.3v0.5h-1.3zM99.4 77.3h1.1v1.8h-1.1zM101.7 76.9h0.9v2.2h-0.9zM101.7 80.6h.9v.9h-.9zM104.1 78.5h0.8v0.6h-0.8zM106.2 78.3h0.9v0.8h-0.9zM110.2 79.1h12.7v1h-12.7zM111.7 77.8h1.3v1.3h-1.3zM115.1 77.1h1.2v2h-1.2zM117.2 76.8h1.1v2.3h-1.1zM120.6 78.3h1.2v0.8h-1.2zM15.6 95.1h8v1h-8zM17 94.1h1.2v1h-1.2zM19.4 93.3h1v1.8h-1zM21.6 92.8h1v2.3h-1zM25.1 95.1h16.3v1h-16.3zM26.2 92.9h0.9v2.2h-0.9zM28.7 93.2h1.2v1.9h-1.2zM31.5 94.3h1.3v0.8h-1.3zM34.3 93.1h0.8v2h-0.8zM36.8 93.1h0.8v2h-0.8zM39.7 93.7h1v1.4h-1zM43.5 95.1h5v1h-5zM44.7 94.1h1.3v1h-1.3zM47.7 93.4h0.8v1.7h-0.8zM51.4 95.1h16.8v1h-16.8zM52.4 93.1h1v2h-1zM55.9 94.2h0.8v0.9h-0.8zM58.7 94.3h0.9v0.8h-0.9zM61.2 94.3h0.8v0.8h-0.8zM63.5 93.7h1.1v1.4h-1.1zM66.2 93h0.7v2.1h-0.7zM69.7 95.1h16.5v1h-16.5zM70.6 93.6h0.9v1.5h-0.9zM73 93.2h0.9v1.9h-0.9zM76 93.9h1v1.2h-1zM76 96.6h.9v.9h-.9zM79 93.3h0.8v1.8h-0.8zM82.1 94.4h1.3v0.7h-1.3zM84.1 94.1h0.8v1h-0.8zM88.5 95.1h8.8v1h-8.8zM88.9 93.7h1v1.4h-1zM92.1 94.4h0.9v0.7h-0.9zM92.1 96.6h.9v.9h-.9zM94.5 94.4h1.2v0.7h-1.2zM99 95.1h5.6v1h-5.6zM100.2 93.8h1.4v1.3h-1.4zM102.6 94.5h1.4v0.6h-1.4zM106.7 95.1h16.5v1h-16.5zM108 93.7h0.8v1.4h-0.8zM111.4 93.8h1.2v1.3h-1.2zM114.1 93.5h0.9v1.6h-0.9zM117.5 94.4h1v0.7h-1zM121 94.6h1.1v0.5h-1.1zM125.5 95.1h7v1h-7zM125.9 93.2h1.2v1.9h-1.2zM128.9 93.4h1.2v1.7h-1.2zM128.9 96.6h.9v.9h-.9zM131.6 94h0.9v1.1h-0.9zM135 95.1h9.3v1h-9.3zM136.1 94h1.1v1.1h-1.1zM138.2 93.2h0.7v1.9h-0.7zM140.2 93.2h1v1.9h-1zM142.7 93.6h1v1.5h-1zM142.7 91.5h.9v.9h-.9zM146.2 95.1h7.8v1h-7.8zM146.8 93.8h0.9v1.3h-0.9zM149.2 93.4h1.3v1.7h-1.3zM152.4 94.1h0.8v1h-0.8zM152.4 96.6h.9v.9h-.9zM15.6 101.5h8v1h-8zM16.3 99.6h0.9v1.9h-0.9zM16.3 97.9h.9v.9h-.9zM19 100.2h1.4v1.3h-1.4zM21.3 99.9h1v1.6h-1zM21.3 103h.9v.9h-.9zM26.5 101.5h9.5v1h-9.5zM27.4 99.7h0.7v1.8h-0.7zM29.5 100.4h1.2v1.1h-1.2zM29.5 103h.9v.9h-.9zM32 100.8h1v0.7h-1zM32 103h.9v.9h-.9zM34.2 100.6h0.8v0.9h-0.8zM34.2 103h.9v.9h-.9zM38.3 101.5h2.9v1h-2.9zM39.6 100.2h0.9v1.3h-0.9z" fill="#000" opacity=".85"/><path d="M9.0 50.1l2.5 1.5-2.5 1.5z" fill="#8899bb" opacity="0.7"/><path d="M9.0 72.5l2.5 1.5-2.5 1.5z" fill="#8899bb" opacity="0.7"/><path d="M9.0 93.4l2.5 1.5-2.5 1.5z" fill="#8899bb" opacity="0.7"/></svg>
</div>
<svg style="position:absolute;left:1135.1px;top:296.6px" width="9.4" height="12" viewBox="0 0 9.4 12"><g fill="none" stroke="#444" stroke-width="1.25"><path transform="translate(0.0 0)" d="M0.9 2.2C1.6 0.9 2.7 0.4 3.9 0.4C5.6 0.4 6.7 1.5 6.7 3C6.7 5 5.2 6.5 0.8 10.4V10.6H7.2"/></g></svg>
<svg style="position:absolute;left:985px;top:297px;" width="11" height="10" viewBox="0 0 11 10"><path d="M5.5 0.3l1.45 3.4 3.7.3-2.8 2.4.9 3.6-3.25-1.95-3.25 1.95.9-3.6L0.35 4l3.7-.3z" fill="#666"/><rect x="0" y="2.5" width="1.2" height="1.2" fill="#666"/><rect x="0" y="5.8" width="1.6" height="1" fill="#666"/></svg>
<div style="position:absolute;left:1178px;top:168px;width:162px;height:123px;overflow:hidden"><div style="position:absolute;left:0;top:0;width:162px;height:123px;box-sizing:border-box;border:1px solid #c8c8c8;background:#fff"></div><div style="position:absolute;left:2px;top:2px;width:158px;height:119px;background:radial-gradient(ellipse 62% 88% at 47% 49%, #62838f 0%, #58788a 18%, #475c74 45%, #363f61 75%, #2c3456 100%)"></div>
<svg style="position:absolute;left:2px;top:2px;" width="158" height="119" viewBox="0 0 158 119"><path d="M18.8 18.5H142.9L157.8 99.2H2.8z" fill="url(#gtrap)"/><path transform="translate(18.5 20.5) scale(0.3901 0.4000)" d="M109 20 109 22.50 111.25 22.50 111.25 20zM59.75 15.75 61 17.50 62.25 18 65.50 18 67 17.50 67.75 18.25 70 19 75 18.50 77.25 19.50 79.25 19.50 81.25 18.50 86.50 19 88.50 18.50 89.50 17.75 91.50 19 93.75 19.25 95.25 18.50 96 17.50 97.25 18.75 98.50 19.25 100.25 19.25 102.25 18 103.50 18.75 107.75 19 110 18.25 111.25 16.25 111.50 11.25 108.75 11.25 108.75 15 107.25 16.25 104.75 16 103.75 15 103.50 9.50 100.75 9.50 100.75 14.75 99.75 16.25 99 16.25 97.50 14.25 97.25 11.25 94.75 11.25 94.50 14.50 93.25 16.25 92.50 16.25 91.25 15.25 90.75 13.75 90.75 11.25 88 11.50 88 14.75 87 16 83.75 16.25 82.50 15.25 81.75 13 80.75 12 78.25 11 75.50 11.75 74.25 13 73.75 15 73 16 70 16.25 68.50 14.75 67.75 9.50 65.25 9.50 65 10.75 63.25 11 60.50 13zM76.50 14.75 77.50 14 78.75 14 79.50 15 79.25 16.50 76.50 16.50zM65.50 13.25 65.75 15.25 63.25 15.75 62.25 15 64 13.25zM48.75 6.50 48.75 9 51 9 51 6.50zM45.75 6.50 45.75 9 48 9 48 6.50zM28 0.25 28 14.50 28.50 16.75 30 18.50 31.75 19 34.75 19 36.75 18.50 39 17 41.50 18.50 43.50 19 47.25 18.75 48.75 17.75 49.75 15.25 49.75 11.25 47 11.25 46.75 15.50 45.50 16.25 43.50 16.25 41.50 15.25 43.25 13 43.25 11 42.75 10.25 40.75 9.25 37.50 9.25 35 11 35 12.75 37 15 36.25 15.75 35 16.25 31.75 16 30.75 14.50 30.75 0zM38.25 12.25 39.75 12 40 12.50 39 13.25zM24.25 0.25 21.50 0 21.50 15 20.75 16 18.75 16.25 16 12.75 14.50 12.25 13 12.50 10.75 14.75 11.25 17 12.50 18 10.50 19.25 7 19.50 5 19.25 3 17.75 2.75 16.25 3.75 14 1 14 0.25 15.25 0 17 0.75 19.50 2.25 21 4.75 22 10 22 12 21.50 14.50 20 15.25 18.75 15.25 17.25 13.75 15.50 14 15 14.50 15 16.25 17.50 18.25 19 21.75 18.75 23 18 24.25 15.25z" fill="#000" fill-rule="evenodd"/><path transform="translate(17 39.5) scale(0.4741 0.5000)" d="M199.12 10 199.12 10.75 200 10.75 200 10zM98.38 10 98.38 10.75 99.25 10.75 99.25 10zM97 10 97 10.75 97.75 10.75 97.75 10zM63.75 10 63.75 10.75 64.62 10.75 64.62 10zM62.38 10 62.38 10.75 63.12 10.75 63.12 10zM31.25 10 31.25 10.75 32.12 10.75 32.12 10zM29.88 10 29.88 10.75 30.62 10.75 30.62 10zM139.50 5.88 138.62 5.88 138.88 8 138.38 9.25 137.62 10 136.50 10.62 134.38 11 134.38 12 137.25 11.38 138.25 10.88 139.25 9.88 139.88 7.88 139.75 6.38zM187.12 5.38 186 5.38 185.50 5.62 184.75 6.62 184.75 7.62 185.12 8.38 186.50 9 187.25 9 187.25 9.50 186.38 10.38 185.62 10.75 183.25 11 183.25 12 185.75 11.75 186.88 11.25 187.75 10.50 188.50 8.88 188.50 7.12 188.12 6.12zM185.88 6.75 186.38 6.38 187 6.50 187.38 6.88 187.50 7.88 186.25 7.88 185.75 7.25zM179.12 5 178.38 6.12 178.25 7 178.38 8.25 178.75 8.88 179.88 9.38 180.62 9.38 182.25 8.75 182.88 7.38 182.62 6.38 181.62 5.38 180.62 4.88 179.75 4.75zM179.88 5.75 180.38 5.75 181.25 6.25 181.88 7.12 181.62 8 180.75 8.50 179.62 8.25 179.25 7.62 179.38 6.25zM133.75 4.75 132.75 4.75 132.75 7.38 132.12 8.12 131.38 7.88 130.75 6.75 130.75 5.62 129.75 5.62 129.62 7.12 129 8 128.38 8 127.75 7.38 127.25 5.62 126.25 5.62 126.75 7.50 126.62 8.88 126.12 9.88 124.75 10.88 123 10.88 122.12 10.25 122 8.62 122.50 7 121.62 7 121 8.62 121 10.12 121.25 10.88 122.25 11.75 124.25 12 125.62 11.62 126.38 11.12 127.25 10.12 127.75 8.88 128.12 9.12 129.50 9 130.25 8 131 9 132.50 9.12 133.38 8.38 133.75 7.50zM84.12 4.75 83.12 4.75 83.12 6.88 82.75 7.88 82.38 8.12 81.88 8 81.25 7.38 81 5.62 80 5.62 80 6.88 79.25 8 78.50 8 78 7.50 77.75 6.88 77.75 5.62 76.75 5.62 76.75 7 75.88 8 74 7.88 73.50 7.25 73.25 6 72.25 5.88 72.50 8 72 9.25 71.25 10 70.12 10.62 68 11 68 12 69.75 11.75 71.62 11 72.75 10 73.38 8.62 73.88 9 76.12 9 77.38 8.25 78.38 9.12 79.38 9.12 80 8.88 80.50 8 81.25 9 82.75 9.12 83.75 8.25 84 7.62zM202.50 5.38 199.75 4.50 197 4.38 197 5.38 199 5.38 201 5.88 198.88 7.50 197.50 8 195.25 8 194.62 7.50 194.25 6 193.25 5.88 193.50 8 193 9.25 192.25 10 191.12 10.62 189 11 189 12 190.75 11.75 192.62 11 193.75 10 194.38 8.62 194.88 9 197.38 9 198.88 8.62 201.62 6.62 202.38 6.38zM143.62 4.12 142.50 4.12 143.88 5.75 144.12 7.25 143.50 8 142.88 8.25 141.38 8.12 141.50 9.12 143 9.25 143.88 9 144.75 8.38 145.12 7.62 145 5.88zM193.12 3.50 193.12 4.25 193.88 4.25 193.88 3.50zM80.38 3.50 80.38 4.25 81.12 4.25 81.12 3.50zM78.88 3.50 78.88 4.25 79.75 4.25 79.75 3.50zM115.50 3.25 115.50 4 116.38 4 116.38 3.25zM114.12 3.25 114.12 4 114.88 4 114.88 3.25zM111.12 3.25 111.12 4 112 4 112 3.25zM104.12 3.25 104.12 4 104.88 4 104.88 3.25zM79.62 2 79.62 2.75 80.38 2.75 80.38 2zM1.25 1 0.38 1.75 0 2.75 1 2.88 1.12 2.38 1.75 1.75 3 1.50 4 2.12 4.25 3.12 3.75 4.25 0.38 7.50 0 8.12 0 9 5.38 9 5.38 8.25 1.12 8.12 1.50 7.38 4.75 4.38 5.25 3 4.88 1.62 4.12 1 3.38 0.75 2 0.75zM166 0 166 7.50 166.38 8.38 167.25 9 170.88 9 171.50 8.75 172.25 7.88 172.38 6.38 172 5.62 170.25 3.62 170 3 171 2.25 174.12 1 174.12 0 170.38 1.50 169.12 2.38 169.12 3.75 171.38 6.62 171.25 7.50 170.62 8 167.62 8 167.12 7.62 167 0zM150.25 7.88 150.25 9.25 150.62 10 151.50 10.62 153.25 10.88 155.50 10.12 156.62 8.75 157.25 9 159.75 9 160.25 8.75 161.12 9.25 163 9.12 163.75 8.38 163.88 7 163.25 5.88 162.38 5.50 161.38 5.50 160.75 5.75 160.12 6.38 159.88 7.50 159.50 7.88 157.38 7.88 156.88 7.12 156.88 0 155.88 0 155.88 7.62 155.50 8.62 154 9.75 152.38 9.88 151.75 9.62 151.12 8.62 151.50 7.38 150.50 7.38zM161.38 6.62 162.38 6.62 162.75 7 162.88 7.62 162.50 8.25 161.62 8.38 160.75 7.88 160.88 7.25zM115.62 5.62 114.75 5.62 114.62 7.38 114 8 112.75 8 112.25 7.62 112 6.88 112 5.62 111.12 5.62 111.12 6.88 110.62 7.88 109 8 108.50 7.62 108.62 6.12 107.88 5.12 106.75 4.75 106 4.75 104.62 5.25 103.75 5.88 102.50 7.38 102.38 0 101.38 0 101.25 8 99 7.88 98.50 6.88 98.50 5.62 97.62 5.62 97.62 6.88 97.12 7.88 95.50 8 95 7.62 94.50 6.38 93.88 5.75 92.75 5.38 92.12 5.50 91 6.50 90.75 7.88 90 8.12 89.25 9 89.12 11.88 90.25 11.88 90.25 9.38 91 8.75 92.12 9.25 93.50 9.25 94.38 8.75 95 9 97.25 9 97.88 8.62 98.88 9 105.75 9 107.62 8.38 108.62 9 110.75 9 111.38 8.62 112.38 9 114.38 9 115.12 8.62 115.50 8zM92.62 6.50 93.38 6.62 93.75 7.12 93.75 7.75 93.25 8.38 92.50 8.38 91.75 7.88 91.88 7.12zM107.62 6.38 107.62 6.88 106.12 7.88 103.38 7.88 104.75 6.38 105.88 5.75 107 5.75zM66.25 0 66.25 9 67.25 9 67.25 0zM53.38 0 53.38 7.88 51.25 8 51.25 9 57.75 9 59.38 8.38 60.62 9 62.62 9 63.38 8.62 63.88 7.62 63.88 5.62 63 5.62 63 6.88 62.50 7.88 61 8 60.38 7.62 60.50 6 60.25 5.50 59.62 5 58.62 4.75 57.38 4.88 56.38 5.38 54.50 7.25 54.38 0zM59.50 6.25 59.50 6.88 58.38 7.75 57.50 8 55.25 7.88 56.38 6.62 57.75 5.75 58.88 5.75zM10.12 8.75 10.38 9.38 11.38 10.25 12.88 10.62 14.50 10.62 16 10.25 17.25 9.25 17.25 8.25 16.50 7.50 17 7 18.88 9 25.12 9 26.75 8.38 28 9 30.12 9 30.75 8.62 31.75 9 34.12 9 36.12 8.38 37.62 7.12 38.25 8.12 39.50 9 41.88 9 42.38 8.75 43.25 9.25 44.75 9.25 45.75 8.62 46 8 46 7 45.38 5.88 44.50 5.50 43.50 5.50 42.88 5.75 42.25 6.38 42 7.50 41.62 7.88 39.88 8 39.25 7.62 38.50 6.62 39.25 6.25 39.25 5.38 36.50 4.50 33.75 4.38 33.75 5.38 35.75 5.38 37.75 5.88 34.88 7.88 31.88 7.88 31.38 6.88 31.38 5.62 30.50 5.62 30.50 6.88 30.25 7.62 29.75 8 28.38 8 27.88 7.62 28 6.12 27.25 5.12 26.12 4.75 25.38 4.75 24 5.25 23.12 5.88 21.88 7.38 21.75 0 20.75 0 20.62 8 19.12 8 17.88 6.38 17.38 6.12 16.50 6.12 15.50 7.12 15.50 7.88 16.38 8.75 15.62 9.38 14.62 9.62 12.62 9.62 11.88 9.38 11.12 8.62 11.12 7.50 11.38 6.88 10.38 7 10.12 7.62zM43.50 6.62 44.50 6.62 44.88 7 45 7.62 44.62 8.25 43.75 8.38 42.88 7.88 43 7.25zM27 6.38 27 6.88 25.50 7.88 22.75 7.88 24.12 6.38 25.25 5.75 26.38 5.75z" fill="#000" stroke="#000" stroke-width="0.9" fill-rule="evenodd" opacity=".85"/></svg>
</div>
<svg style="position:absolute;left:1330.1px;top:296.6px" width="9.4" height="12" viewBox="0 0 9.4 12"><g fill="none" stroke="#444" stroke-width="1.25"><path transform="translate(0.0 0)" d="M1.3 2.6L4.6 0.4V11"/></g></svg>
<svg style="position:absolute;left:1180px;top:297px;" width="11" height="10" viewBox="0 0 11 10"><path d="M5.5 0.3l1.45 3.4 3.7.3-2.8 2.4.9 3.6-3.25-1.95-3.25 1.95.9-3.6L0.35 4l3.7-.3z" fill="#666"/><rect x="0" y="2.5" width="1.2" height="1.2" fill="#666"/><rect x="0" y="5.8" width="1.6" height="1" fill="#666"/></svg>
<div style="position:absolute;left:203px;top:340px;width:162px;height:123px;overflow:hidden"><div style="position:absolute;left:0;top:0;width:162px;height:123px;box-sizing:border-box;border:1px solid #c8c8c8;background:#fff"></div><div style="position:absolute;left:2px;top:2px;width:158px;height:119px;background:radial-gradient(ellipse 62% 88% at 47% 49%, #62838f 0%, #58788a 18%, #475c74 45%, #363f61 75%, #2c3456 100%)"></div>
<svg style="position:absolute;left:2px;top:2px;" width="158" height="119" viewBox="0 0 158 119"><rect x="6.8" y="26.8" width="147.29999999999998" height="80.10000000000001" fill="url(#gbox)"/><path d="M60.1 9.4h16.1v1.1h-16.1zM60.2 6.9h1.1v2.5h-1.1zM63.6 8.7h0.8v0.8h-0.8zM66.5 7.4h1v2.1h-1zM68.7 8h1v1.5h-1zM71.1 8.3h1.3v1.1h-1.3zM71.1 11h.9v.9h-.9zM74.4 7.8h0.9v1.6h-0.9zM74.4 5.5h.9v.9h-.9zM78.7 9.4h15.8v1.1h-15.8zM79.3 8h1.5v1.4h-1.5zM82.8 7h1.5v2.4h-1.5zM85.2 7.2h1.2v2.3h-1.2zM88.8 7.5h1.4v1.9h-1.4zM90.8 7.1h0.9v2.4h-0.9zM93.8 8.5h0.7v1h-0.7zM97.2 9.4h6.6v1.1h-6.6zM98 7.5h1.3v1.9h-1.3zM98 11h.9v.9h-.9zM100.2 6.9h1.1v2.6h-1.1zM102.7 7.4h1.1v2h-1.1zM106.4 9.4h12.7v1.1h-12.7zM106.7 6.9h1.5v2.5h-1.5zM110.3 7.9h1.4v1.5h-1.4zM113.4 7.4h1.5v2h-1.5zM116.8 8.3h1.4v1.1h-1.4zM121.4 9.4h17v1.1h-17zM122.7 7.1h1.3v2.3h-1.3zM124.8 7.7h0.9v1.7h-0.9zM126.9 8.5h1.3v0.9h-1.3zM130.2 8.2h1.4v1.2h-1.4zM132.6 8h0.8v1.4h-0.8zM135.1 8.8h1.4v0.6h-1.4zM137 6.9h0.9v2.6h-0.9zM140.2 9.4h9.6v1.1h-9.6zM141.1 7.8h1v1.6h-1zM144.6 8.1h1.5v1.3h-1.5zM146.7 7.1h0.8v2.3h-0.8z" fill="#fff" opacity=".8"/><path d="M8.4 44.6h13.2v1h-13.2zM9.6 43.8h1.1v0.8h-1.1zM12.2 43.7h1.2v0.9h-1.2zM15.4 42.9h1.1v1.7h-1.1zM18.7 43h0.9v1.6h-0.9zM23.3 44.6h10v1h-10zM24.4 42.3h1.2v2.3h-1.2zM27.9 42.6h1v2h-1zM31 43.5h0.8v1.1h-0.8zM35.2 44.6h15.3v1h-15.3zM36.5 43.9h0.8v0.7h-0.8zM39 42.3h1.4v2.3h-1.4zM42.2 42.9h0.8v1.7h-0.8zM44.4 44h1v0.6h-1zM44.4 46.1h.9v.9h-.9zM47.1 43.3h1.4v1.3h-1.4zM53.1 44.6h13.8v1h-13.8zM53.5 43.5h1v1.1h-1zM56.5 43.1h0.9v1.5h-0.9zM60 43.7h0.9v0.9h-0.9zM60 46.1h.9v.9h-.9zM62.1 44h1v0.6h-1zM65.2 42.3h1.3v2.3h-1.3zM68.4 44.6h10.8v1h-10.8zM68.8 42.9h0.7v1.7h-0.7zM71.3 43.2h1v1.4h-1zM71.3 41h.9v.9h-.9zM74.5 42.6h1.1v2h-1.1zM74.5 41h.9v.9h-.9zM77.4 42.4h1.4v2.2h-1.4zM82 44.6h15v1h-15zM82.4 42.4h1.3v2.2h-1.3zM84.7 43h1v1.6h-1zM87.9 42.9h0.9v1.7h-0.9zM91.4 43h1.3v1.6h-1.3zM95 44h1v0.6h-1zM99.9 44.6h14.3v1h-14.3zM100.6 42.9h1.1v1.7h-1.1zM104.1 44.1h0.9v0.5h-0.9zM106.1 42.6h0.7v2h-0.7zM109.4 43.6h1v1h-1zM112.5 43.1h1.1v1.5h-1.1zM117.2 44.6h16.7v1h-16.7zM118.6 43.6h1.1v1h-1.1zM121.1 42.6h0.8v2h-0.8zM124.3 42.3h0.7v2.3h-0.7zM127.1 42.3h0.8v2.3h-0.8zM129.6 43.1h1.3v1.5h-1.3zM129.6 46.1h.9v.9h-.9zM132.1 43.8h0.8v0.8h-0.8zM136.2 44.6h6.8v1h-6.8zM137.5 43.1h0.8v1.5h-0.8zM140.7 43.7h1.4v0.9h-1.4zM144.6 44.6h0.7v1h-0.7zM14.8 55h16.5v1h-16.5zM16 53.3h1.3v1.7h-1.3zM18.4 52.9h1.3v2.1h-1.3zM21.5 53.2h1.3v1.8h-1.3zM23.8 54h1.1v1h-1.1zM23.8 51.4h.9v.9h-.9zM27.2 52.8h0.9v2.2h-0.9zM30.3 54.3h1v0.7h-1zM32.9 55h9.2v1h-9.2zM34.1 53.6h1.3v1.4h-1.3zM34.1 51.4h.9v.9h-.9zM36.2 53.8h1.3v1.2h-1.3zM38.2 53.1h0.8v1.9h-0.8zM40.2 54h1.2v1h-1.2zM44.3 55h5.5v1h-5.5zM44.9 54h1.3v1h-1.3zM48.1 53.5h1.2v1.5h-1.2zM48.1 51.4h.9v.9h-.9zM51.8 55h9.2v1h-9.2zM52.9 54.1h0.9v0.9h-0.9zM56.2 53.3h1v1.7h-1zM59.7 52.7h1v2.3h-1zM62.9 55h8.9v1h-8.9zM63 53.5h1.2v1.5h-1.2zM63 51.4h.9v.9h-.9zM65.7 52.6h1v2.4h-1zM69 52.8h1v2.2h-1zM69 51.4h.9v.9h-.9zM74.4 55h18.8v1h-18.8zM75.3 53.9h1.1v1.1h-1.1zM78 53.6h1.3v1.4h-1.3zM81.5 53.6h1.4v1.4h-1.4zM81.5 51.4h.9v.9h-.9zM84.9 53.3h1.3v1.7h-1.3zM88.5 54.5h1.3v0.5h-1.3zM91.1 52.9h0.8v2.1h-0.8zM95.3 55h7.9v1h-7.9zM96.5 53.1h0.8v1.9h-0.8zM98.8 53.8h1v1.2h-1zM102.2 52.7h1.1v2.3h-1.1zM104.9 55h12.8v1h-12.8zM105.8 53.7h1.4v1.3h-1.4zM108.2 53.7h0.8v1.3h-0.8zM111.2 53.5h1v1.5h-1zM113.6 53.6h1v1.4h-1zM116.4 54.1h0.7v0.9h-0.7zM116.4 51.4h.9v.9h-.9zM120.3 55h18.3v1h-18.3zM120.7 53h1v2h-1zM123.5 54.4h0.7v0.6h-0.7zM126.6 53.8h1.3v1.2h-1.3zM129 54.4h1.1v0.6h-1.1zM131.3 54.4h1v0.6h-1zM131.3 56.5h.9v.9h-.9zM134.4 53.3h0.9v1.7h-0.9zM136.7 54.1h0.8v0.9h-0.8zM141.2 55h10.2v1h-10.2zM142.5 53.4h1.2v1.6h-1.2zM145.3 54.1h1.4v0.9h-1.4zM148.1 53.3h0.8v1.7h-0.8zM150.4 52.9h0.7v2.1h-0.7zM14.8 63.9h15.8v1h-15.8zM15.3 63h1.2v0.9h-1.2zM18.4 62.7h1.2v1.2h-1.2zM21.7 61.5h1v2.4h-1zM23.6 61.7h0.7v2.2h-0.7zM26.1 61.9h0.9v2h-0.9zM29.4 62.4h1.2v1.5h-1.2zM33.2 63.9h8.3v1h-8.3zM33.9 63.4h0.9v0.5h-0.9zM37.1 62.2h1v1.7h-1zM40.2 63h1.1v0.9h-1.1zM43.3 63.9h9.7v1h-9.7zM43.8 63.2h0.9v0.7h-0.9zM46.7 63.1h1.2v0.8h-1.2zM46.7 60.3h.9v.9h-.9zM49.9 63.1h0.8v0.8h-0.8zM54.9 63.9h18.3v1h-18.3zM56.3 62.9h1.2v1h-1.2zM59.1 62.9h1.4v1h-1.4zM61.1 62.8h0.9v1.1h-0.9zM63.7 61.7h0.7v2.2h-0.7zM66.1 63.4h1.3v0.5h-1.3zM68.4 63.2h1v0.7h-1zM68.4 60.3h.9v.9h-.9zM70.6 62.9h1.1v1h-1.1zM75.4 63.9h16.6v1h-16.6zM76.5 62.7h1.3v1.2h-1.3zM79.4 62.5h0.9v1.4h-0.9zM79.4 60.3h.9v.9h-.9zM82.8 62.2h0.8v1.7h-0.8zM86.2 63.3h1.2v0.6h-1.2zM89 61.8h0.9v2.1h-0.9zM93.8 63.9h14.4v1h-14.4zM94.5 61.5h0.8v2.4h-0.8zM96.4 62.9h0.8v1h-0.8zM96.4 60.3h.9v.9h-.9zM99.2 63.1h1.3v0.8h-1.3zM99.2 65.4h.9v.9h-.9zM102.2 61.8h0.8v2.1h-0.8zM105.4 62.5h1.4v1.4h-1.4zM111.2 63.9h10.2v1h-10.2zM112.6 61.7h0.8v2.2h-0.8zM116.1 63.2h1.3v0.7h-1.3zM119.3 62.3h0.8v1.6h-0.8zM124 63.9h15.8v1h-15.8zM124.5 62.1h1v1.8h-1zM126.4 61.6h1v2.3h-1zM129.1 61.9h0.9v2h-0.9zM131.1 62.5h0.8v1.4h-0.8zM134.1 62.6h1.4v1.3h-1.4zM137.7 63.2h1.2v0.7h-1.2zM141.4 63.9h12.6v1h-12.6zM142 62.3h1.3v1.6h-1.3zM144 61.6h0.9v2.3h-0.9zM144 65.4h.9v.9h-.9zM146.1 61.5h1.2v2.4h-1.2zM148.3 61.7h1.2v2.2h-1.2zM150.4 62.6h1.4v1.3h-1.4zM150.4 65.4h.9v.9h-.9zM153 63.3h1v0.6h-1zM153 60.3h.9v.9h-.9zM14.8 74.2h16v1h-16zM14.9 72.4h1v1.8h-1zM17 72.7h1.3v1.5h-1.3zM17 70.6h.9v.9h-.9zM20.4 72.9h0.9v1.3h-0.9zM23.1 72.5h1.1v1.7h-1.1zM25.9 72.7h1.4v1.5h-1.4zM27.8 73.1h0.9v1.1h-0.9zM27.8 70.6h.9v.9h-.9zM32.3 74.2h18.8v1h-18.8zM33.1 72h1.2v2.2h-1.2zM36.2 73.1h1.2v1.1h-1.2zM39.1 72.6h1.2v1.6h-1.2zM41.6 72.1h1.3v2.1h-1.3zM43.7 73.3h0.8v0.9h-0.8zM46.8 72.5h1.2v1.7h-1.2zM49.7 72h1.2v2.2h-1.2zM53.4 74.2h16.4v1h-16.4zM54.2 73.5h1v0.7h-1zM56.9 72.6h1v1.6h-1zM59.5 73h1.4v1.2h-1.4zM59.5 75.7h.9v.9h-.9zM61.4 72.3h1v1.9h-1zM64.3 73h0.9v1.2h-0.9zM64.3 75.7h.9v.9h-.9zM67.7 71.9h0.9v2.3h-0.9zM71.3 74.2h18.4v1h-18.4zM72.6 73.2h0.9v1h-0.9zM75.8 72.8h1v1.4h-1zM79.1 72.1h1.3v2.1h-1.3zM79.1 70.6h.9v.9h-.9zM82 71.8h1.2v2.4h-1.2zM84.1 73.6h1.2v0.6h-1.2zM84.1 75.7h.9v.9h-.9zM87.4 72.4h1v1.8h-1zM92.1 74.2h6.5v1h-6.5zM93 72.9h0.9v1.3h-0.9zM96.2 73.5h0.9v0.7h-0.9zM100.6 74.2h11.6v1h-11.6zM101.8 73.4h1.2v0.8h-1.2zM105.3 71.9h0.9v2.3h-0.9zM107.4 72.9h1.1v1.3h-1.1zM109.9 73.6h0.8v0.6h-0.8zM114.2 74.2h14.3v1h-14.3zM115.5 72.7h0.9v1.5h-0.9zM117.9 72.2h0.8v2h-0.8zM120.5 72h0.8v2.2h-0.8zM122.7 73.3h0.9v0.9h-0.9zM125.9 72.9h1v1.3h-1zM131.3 74.2h11.4v1h-11.4zM132.7 73.2h1.4v1h-1.4zM135.7 73h0.9v1.2h-0.9zM135.7 70.6h.9v.9h-.9zM139.1 73h1.2v1.2h-1.2zM141.9 73.3h0.7v0.9h-0.7zM145 74.2h5v1h-5zM146.1 72.9h0.7v1.3h-0.7zM148.3 72.1h1.1v2.1h-1.1zM152 74.2h2v1h-2zM152.5 72.2h1.3v2h-1.3zM14.8 83.4h6.7v1h-6.7zM14.9 82.6h0.9v0.8h-0.9zM18.2 81.8h1v1.6h-1zM24.1 83.4h10.1v1h-10.1zM24.2 81h0.9v2.4h-0.9zM26.3 81.7h0.9v1.7h-0.9zM28.7 82.7h0.8v0.7h-0.8zM32.3 81.7h1.2v1.7h-1.2zM35.9 83.4h2.1v1h-2.1zM35.9 81.7h0.9v1.7h-0.9z" fill="#000" opacity=".85"/></svg>
</div>
<svg style="position:absolute;left:346.7px;top:468.6px" width="17.8" height="12" viewBox="0 0 17.8 12"><g fill="none" stroke="#444" stroke-width="1.25"><path transform="translate(0.0 0)" d="M1.3 2.6L4.6 0.4V11"/><path transform="translate(8.4 0)" d="M0.9 2.2C1.6 0.9 2.7 0.4 3.9 0.4C5.6 0.4 6.7 1.5 6.7 3C6.7 5 5.2 6.5 0.8 10.4V10.6H7.2"/></g></svg>
<svg style="position:absolute;left:205px;top:469px;" width="11" height="10" viewBox="0 0 11 10"><path d="M5.5 0.3l1.45 3.4 3.7.3-2.8 2.4.9 3.6-3.25-1.95-3.25 1.95.9-3.6L0.35 4l3.7-.3z" fill="#666"/><rect x="0" y="2.5" width="1.2" height="1.2" fill="#666"/><rect x="0" y="5.8" width="1.6" height="1" fill="#666"/></svg>
<div style="position:absolute;left:398px;top:340px;width:162px;height:123px;overflow:hidden"><div style="position:absolute;left:0;top:0;width:162px;height:123px;box-sizing:border-box;border:1px solid #c8c8c8;background:#fff"></div><div style="position:absolute;left:2px;top:2px;width:158px;height:119px;background:radial-gradient(ellipse 62% 88% at 47% 49%, #62838f 0%, #58788a 18%, #475c74 45%, #363f61 75%, #2c3456 100%)"></div>
<svg style="position:absolute;left:2px;top:2px;" width="158" height="119" viewBox="0 0 158 119"><path d="M74 7.8h8.7v1.1h-8.7zM74.2 6h1.3v1.9h-1.3zM76.5 5.4h0.9v2.4h-0.9zM78.8 6.2h1.1v1.6h-1.1zM81.9 5.4h0.8v2.4h-0.8zM81.9 9.4h.9v.9h-.9zM84.4 7.8h9.8v1.1h-9.8zM84.6 6h1.4v1.8h-1.4zM84.6 3.9h.9v.9h-.9zM87 5.5h1.3v2.3h-1.3zM87 3.9h.9v.9h-.9zM90.1 5.6h1.1v2.2h-1.1zM90.1 3.9h.9v.9h-.9zM93.1 6.6h0.9v1.2h-0.9zM96 7.8h6v1.1h-6zM96.9 6.1h1.1v1.7h-1.1zM98.9 6.6h1.5v1.2h-1.5zM74.9 19.8h13v1.1h-13zM76.1 18.1h0.9v1.7h-0.9zM78.1 17.4h1v2.4h-1zM81 19.1h1.3v0.8h-1.3zM84.2 17.4h1v2.4h-1zM84.2 15.9h.9v.9h-.9zM90.7 19.8h10.6v1.1h-10.6zM91.2 18.9h1.4v0.9h-1.4zM94.5 18.6h1v1.3h-1zM97.7 17.4h1v2.4h-1zM100.3 17.5h1v2.4h-1zM103.4 19.8h13.9v1.1h-13.9zM104.6 18.6h0.8v1.2h-0.8zM108.1 19.2h1.4v0.6h-1.4zM111 18.1h1.1v1.7h-1.1zM113 17.3h0.8v2.5h-0.8zM113 15.9h.9v.9h-.9zM116.1 17.9h1.2v1.9h-1.2zM86 31.8h5.2v1.1h-5.2zM86.4 29.6h0.9v2.2h-0.9zM89.6 30.9h1.2v0.9h-1.2zM93.5 31.8h12.2v1.1h-12.2zM93.9 29.3h1.4v2.6h-1.4zM96.3 29.7h1.1v2.1h-1.1zM98.8 29.4h1.3v2.4h-1.3zM101.7 29.6h1.2v2.2h-1.2zM103.6 29.4h1.3v2.4h-1.3zM107.5 31.8h10.1v1.1h-10.1zM108.6 29.5h1.1v2.3h-1.1zM111.6 31.2h0.9v0.6h-0.9zM111.6 33.4h.9v.9h-.9zM114.5 30.6h1v1.2h-1zM116.5 29.4h1.1v2.4h-1.1zM119.8 31.8h7.9v1.1h-7.9zM120.3 29.2h1.5v2.6h-1.5zM123.6 31.1h0.9v0.7h-0.9zM125.7 30.4h1.5v1.4h-1.5zM68.5 43.4h8.3v0.8h-8.3zM68.5 42.5h0.6v0.8h-0.6zM70.9 41.9h0.9v1.4h-0.9zM73.4 41.8h0.9v1.5h-0.9zM76.1 42.3h0.7v1.1h-0.7zM76.1 44.7h.9v.9h-.9zM78.8 43.4h7.8v0.8h-7.8zM80.1 41.6h1v1.7h-1zM82.8 42.7h0.7v0.7h-0.7zM87.9 43.4h5.1v0.8h-5.1zM88.4 42.4h0.9v0.9h-0.9zM88.4 40.5h.9v.9h-.9zM91.8 42.4h1.1v0.9h-1.1zM94.4 43.4h19.5v0.8h-19.5zM95.3 41.7h0.6v1.7h-0.6zM98.4 41.5h1.1v1.9h-1.1zM98.4 40.5h.9v.9h-.9zM101 41.4h0.9v1.9h-0.9zM103.3 42.9h1.1v0.4h-1.1zM106.1 42.4h0.9v0.9h-0.9zM109.7 41.6h0.7v1.7h-0.7zM111.6 42.3h1.1v1h-1.1zM115.8 43.4h8.5v0.8h-8.5zM116.8 42h0.6v1.4h-0.6zM118.9 41.9h0.8v1.5h-0.8zM118.9 40.5h.9v.9h-.9zM120.9 41.4h1v1.9h-1zM126.7 43.4h18.9v0.8h-18.9zM127.5 42.5h0.9v0.8h-0.9zM130.6 41.9h1v1.4h-1zM133.5 41.7h0.7v1.7h-0.7zM135.4 42.1h0.9v1.2h-0.9zM135.4 40.5h.9v.9h-.9zM138.9 42.3h0.7v1.1h-0.7zM141.8 42.3h0.6v1.1h-0.6zM141.8 44.7h.9v.9h-.9zM144.9 42.8h0.7v0.6h-0.7zM8.4 54.2h7.6v0.8h-7.6zM8.4 52.6h0.9v1.5h-0.9zM10.3 53.1h0.7v1.1h-0.7zM13.9 53.4h0.6v0.7h-0.6zM17.5 54.2h11.6v0.8h-11.6zM19 53.3h0.7v0.9h-0.7zM21.1 53.1h1v1h-1zM24.4 53.5h0.6v0.7h-0.6zM27.1 52.4h0.6v1.8h-0.6zM30.7 54.2h6.9v0.8h-6.9zM31.6 52.6h0.8v1.6h-0.8zM34.7 52.8h0.8v1.3h-0.8zM39.5 54.2h18.4v0.8h-18.4zM41 52.9h0.7v1.2h-0.7zM44 52.6h0.7v1.5h-0.7zM47.6 53.2h1.1v1h-1.1zM50.6 52.4h0.7v1.7h-0.7zM54.1 53.7h0.7v0.5h-0.7zM57.3 52.8h0.6v1.4h-0.6zM59.2 54.2h5.5v0.8h-5.5zM59.9 53.7h0.9v0.4h-0.9zM62.1 52.5h0.8v1.7h-0.8zM66.7 54.2h13.1v0.8h-13.1zM67.1 52.6h0.6v1.6h-0.6zM69.6 52.4h0.8v1.7h-0.8zM69.6 55.5h.9v.9h-.9zM72 52.8h1v1.3h-1zM72 51.3h.9v.9h-.9zM75.2 53.2h0.9v1h-0.9zM77.8 52.3h1.1v1.9h-1.1zM81.9 54.2h7.1v0.8h-7.1zM81.9 52.5h0.9v1.7h-0.9zM84.4 53.4h1.1v0.8h-1.1zM86.3 53.2h0.8v0.9h-0.8zM86.3 55.5h.9v.9h-.9zM91.3 54.2h17.2v0.8h-17.2zM91.3 53.1h0.6v1h-0.6zM94.6 52.6h1v1.6h-1zM94.6 51.3h.9v.9h-.9zM96.5 53.6h1v0.5h-1zM99.3 53.4h1v0.8h-1zM99.3 51.3h.9v.9h-.9zM101.7 53.8h1.1v0.4h-1.1zM104.9 52.5h0.9v1.6h-0.9zM110.8 54.2h19.5v0.8h-19.5zM111 52.6h0.7v1.5h-0.7zM113.4 52.3h0.6v1.9h-0.6zM115.6 52.2h0.8v1.9h-0.8zM118.3 52.6h0.7v1.6h-0.7zM121.5 52.7h1.1v1.5h-1.1zM124.8 52.6h0.9v1.5h-0.9zM127.7 53.6h0.6v0.5h-0.6zM131.5 54.2h15.4v0.8h-15.4zM132.6 52.8h0.7v1.3h-0.7zM135.9 52.8h0.7v1.3h-0.7zM138.5 53.4h0.6v0.8h-0.6zM141.5 52.3h0.7v1.8h-0.7zM144.3 53.7h0.7v0.5h-0.7zM24.4 65.1h13.7v0.8h-13.7zM25.4 63.8h1v1.3h-1zM27.3 63.2h1v1.9h-1zM27.3 62.2h.9v.9h-.9zM29.3 64.3h0.9v0.7h-0.9zM29.3 62.2h.9v.9h-.9zM31.3 63.9h0.6v1.2h-0.6zM33.8 64.3h0.6v0.7h-0.6zM36.1 64.2h0.8v0.9h-0.8zM39.3 65.1h17.6v0.8h-17.6zM40.4 63.9h0.6v1.1h-0.6zM43.8 64h0.7v1.1h-0.7zM47.2 64.5h0.8v0.6h-0.8zM49.3 64.2h0.9v0.9h-0.9zM52.3 63.7h0.8v1.3h-0.8zM52.3 66.4h.9v.9h-.9zM54.2 63.4h1v1.7h-1zM59 65.1h7.6v0.8h-7.6zM59.5 64.4h1v0.7h-1zM62.8 64.1h1.1v1h-1.1zM65.7 63.6h0.7v1.4h-0.7zM68.7 65.1h7.8v0.8h-7.8zM68.9 64.2h0.9v0.8h-0.9zM71.7 63.4h1v1.7h-1zM74.5 64.4h0.7v0.7h-0.7zM74.5 62.2h.9v.9h-.9zM78.1 65.1h18.3v0.8h-18.3zM79.1 64.5h0.7v0.5h-0.7zM81.9 64.6h0.6v0.4h-0.6zM84.8 64.5h1v0.5h-1zM87.7 63.9h0.8v1.2h-0.8zM90.3 64h0.9v1h-0.9zM93.8 63.5h0.9v1.6h-0.9zM98.7 65.1h19.6v0.8h-19.6zM99.9 64.3h0.9v0.7h-0.9zM102.2 63.5h0.7v1.6h-0.7zM104.9 64h1v1h-1zM108.5 63.1h1v1.9h-1zM111.5 63.9h1.1v1.2h-1.1zM114 64.6h0.8v0.4h-0.8zM116.4 64.5h0.8v0.6h-0.8zM116.4 66.4h.9v.9h-.9zM120 65.1h10.2v0.8h-10.2zM120.8 63.9h0.8v1.2h-0.8zM120.8 62.2h.9v.9h-.9zM122.7 63.8h1.1v1.3h-1.1zM125.2 64.2h1v0.9h-1zM128.5 64.7h0.6v0.4h-0.6zM131.9 65.1h10.8v0.8h-10.8zM133.4 64h0.9v1.1h-0.9zM136.4 63.8h1v1.3h-1zM138.3 63.2h0.9v1.9h-0.9zM140.3 63.5h0.8v1.5h-0.8zM145 65.1h1.9v0.8h-1.9zM145.4 63.3h0.7v1.8h-0.7zM12 75.4h6.7v0.8h-6.7zM12.3 73.8h0.6v1.6h-0.6zM15.5 73.9h1v1.5h-1zM15.5 72.5h.9v.9h-.9zM20.4 75.4h17.2v0.8h-17.2zM21.1 73.6h0.8v1.8h-0.8zM23.2 74.2h0.6v1.2h-0.6zM26.6 74.1h1v1.3h-1zM26.6 72.5h.9v.9h-.9zM29.3 74.2h0.6v1.1h-0.6zM32.8 73.9h0.8v1.5h-0.8zM36.2 73.5h0.9v1.8h-0.9zM36.2 76.7h.9v.9h-.9zM39 75.4h8.6v0.8h-8.6zM39.2 74.2h0.9v1.2h-0.9zM41.9 74.7h1v0.6h-1zM44.3 73.7h1.1v1.7h-1.1zM48.9 75.4h10.8v0.8h-10.8zM49.5 74.6h1v0.8h-1zM51.7 74.2h1.1v1.2h-1.1zM54.3 74.8h0.8v0.6h-0.8zM57.6 74.7h0.7v0.7h-0.7zM61.6 75.4h6.4v0.8h-6.4zM62.7 74.3h1.1v1h-1.1zM66.1 74.6h0.6v0.7h-0.6zM66.1 76.7h.9v.9h-.9zM69.7 75.4h19.6v0.8h-19.6zM70.2 73.9h0.6v1.5h-0.6zM73.1 74.8h0.9v0.5h-0.9zM75.5 73.7h0.9v1.7h-0.9zM75.5 72.5h.9v.9h-.9zM77.6 74.9h0.7v0.5h-0.7zM81.1 73.5h1v1.9h-1zM81.1 72.5h.9v.9h-.9zM84.4 73.8h0.8v1.6h-0.8zM87.3 74.8h0.7v0.6h-0.7zM87.3 72.5h.9v.9h-.9zM91.2 75.4h17.9v0.8h-17.9zM91.3 74.9h1.1v0.4h-1.1zM93.6 73.6h0.6v1.7h-0.6zM97 74.1h0.9v1.3h-0.9zM97 76.7h.9v.9h-.9zM100 74h1v1.3h-1zM102.1 74.6h0.9v0.7h-0.9zM102.1 76.7h.9v.9h-.9zM104.1 74.6h1v0.8h-1zM106.6 73.5h0.9v1.9h-0.9zM111.3 75.4h10.5v0.8h-10.5zM112 74.1h1.1v1.3h-1.1zM114.2 74.1h0.7v1.3h-0.7zM117.3 74.9h0.8v0.4h-0.8zM120.2 73.7h0.8v1.6h-0.8zM123.4 75.4h12.7v0.8h-12.7zM124.2 74.6h1v0.7h-1zM126.7 74.6h1v0.8h-1zM130.2 74.6h0.6v0.8h-0.6zM132.1 73.7h0.9v1.7h-0.9zM134.8 73.9h0.6v1.4h-0.6zM138 75.4h9.7v0.8h-9.7zM138.2 74.6h0.7v0.7h-0.7zM138.2 76.7h.9v.9h-.9zM141.2 74.1h1.1v1.3h-1.1zM144.6 74.2h0.8v1.1h-0.8zM36 86.2h12.3v0.8h-12.3zM36 85.2h0.7v0.9h-0.7zM38.8 85h1.1v1.1h-1.1zM40.8 85.7h1v0.4h-1zM43.8 85h0.6v1.2h-0.6zM47.1 84.8h0.6v1.3h-0.6zM47.1 83.3h.9v.9h-.9zM50.2 86.2h7.5v0.8h-7.5zM51.2 84.4h1v1.8h-1zM54.5 85.6h0.8v0.5h-0.8zM57 85.5h0.7v0.6h-0.7zM58.9 86.2h13.4v0.8h-13.4zM60.3 84.8h1.1v1.3h-1.1zM60.3 83.3h.9v.9h-.9zM63.2 85.5h0.7v0.7h-0.7zM63.2 83.3h.9v.9h-.9zM65.9 85.7h0.9v0.5h-0.9zM69.4 84.6h0.6v1.6h-0.6zM74.6 86.2h12.4v0.8h-12.4zM74.7 84.7h0.7v1.5h-0.7zM77.5 84.4h0.8v1.8h-0.8zM80.6 84.7h0.8v1.5h-0.8zM83.2 84.7h0.7v1.5h-0.7zM83.2 83.3h.9v.9h-.9zM85.9 84.8h0.6v1.4h-0.6zM88.5 86.2h16.6v0.8h-16.6zM89 85.6h0.8v0.5h-0.8zM92.2 85.7h1v0.5h-1zM94.9 84.7h0.9v1.4h-0.9zM98 85.6h0.7v0.6h-0.7zM100.8 85h1v1.2h-1zM103.4 84.9h0.6v1.2h-0.6zM107.5 86.2h18.6v0.8h-18.6zM108.5 85.5h1v0.6h-1zM111.7 84.8h0.9v1.4h-0.9zM114.1 84.5h0.9v1.7h-0.9zM117.4 85.4h0.8v0.8h-0.8zM119.4 84.4h0.9v1.7h-0.9zM122.3 84.4h0.6v1.7h-0.6zM125.3 84.9h0.8v1.2h-0.8zM128.1 86.2h10.1v0.8h-10.1zM129.5 84.4h1.1v1.8h-1.1zM132.3 85.6h0.8v0.6h-0.8zM132.3 87.5h.9v.9h-.9zM135 84.3h1v1.9h-1zM137.4 84.3h0.6v1.8h-0.6zM139.5 86.2h8.2v0.8h-8.2zM140.5 85.2h0.8v1h-0.8zM143.3 84.4h1.1v1.7h-1.1zM145.2 84.6h0.9v1.6h-0.9zM50.8 97.2h18.5v0.8h-18.5zM51.3 96h1.1v1.1h-1.1zM54.3 96.7h0.9v0.5h-0.9zM56.5 95.6h1.1v1.6h-1.1zM59.7 95.3h1v1.8h-1zM63 95.5h0.9v1.6h-0.9zM65.2 96.2h0.7v0.9h-0.7zM68.5 96.3h0.8v0.8h-0.8zM68.5 98.5h.9v.9h-.9zM70.9 97.2h6.2v0.8h-6.2zM72.3 96.2h0.8v0.9h-0.8zM75.1 95.8h0.8v1.4h-0.8zM78.6 97.2h12.9v0.8h-12.9zM79.3 96.5h0.6v0.6h-0.6zM82.5 96.1h0.6v1.1h-0.6zM84.7 95.4h0.6v1.7h-0.6zM86.8 96.4h0.8v0.8h-0.8zM89.5 96.1h0.8v1h-0.8zM93.8 97.2h7.9v0.8h-7.9zM94 95.9h0.8v1.2h-0.8zM96 95.7h0.8v1.4h-0.8zM98.4 96.1h0.7v1.1h-0.7zM100.7 95.7h0.8v1.4h-0.8zM103.4 97.2h13.4v0.8h-13.4zM104.5 95.8h0.8v1.4h-0.8zM104.5 98.5h.9v.9h-.9zM106.6 96.5h0.7v0.6h-0.7zM109.6 96.2h1.1v0.9h-1.1zM111.9 96.5h0.6v0.7h-0.6zM114.8 96.4h1v0.8h-1zM118.7 97.2h14.8v0.8h-14.8zM119.3 96.6h0.8v0.5h-0.8zM121.9 95.8h0.6v1.4h-0.6zM125.2 96.2h0.8v1h-0.8zM127.6 96.4h0.6v0.7h-0.6zM130.3 95.3h1.1v1.9h-1.1zM135.7 97.2h5.4v0.8h-5.4zM135.9 95.3h1v1.9h-1zM138.9 96.1h0.8v1.1h-0.8zM138.9 94.3h.9v.9h-.9zM142.6 97.2h4.3v0.8h-4.3zM143.9 95.9h1.1v1.3h-1.1z" fill="#fff" opacity=".8"/></svg>
</div>
<svg style="position:absolute;left:541.7px;top:468.6px" width="17.8" height="12" viewBox="0 0 17.8 12"><g fill="none" stroke="#444" stroke-width="1.25"><path transform="translate(0.0 0)" d="M1.3 2.6L4.6 0.4V11"/><path transform="translate(8.4 0)" d="M1.3 2.6L4.6 0.4V11"/></g></svg>
<div style="position:absolute;left:593px;top:340px;width:162px;height:123px;overflow:hidden"><div style="position:absolute;left:0;top:0;width:162px;height:123px;box-sizing:border-box;border:1px solid #c8c8c8;background:#fff"></div><div style="position:absolute;left:2px;top:2px;width:158px;height:119px;background:radial-gradient(ellipse 62% 88% at 47% 49%, #62838f 0%, #58788a 18%, #475c74 45%, #363f61 75%, #2c3456 100%)"></div>
<svg style="position:absolute;left:2px;top:2px;" width="158" height="119" viewBox="0 0 158 119"><path d="M77.3 9.7h17.5v1.1h-17.5zM77.6 7.8h1.2v1.9h-1.2zM79.6 8.2h1.2v1.6h-1.2zM81.9 8.8h1v0.9h-1zM84.2 7.8h0.8v1.9h-0.8zM84.2 11.3h.9v.9h-.9zM87.3 8.1h0.9v1.6h-0.9zM90.8 8.4h1.2v1.4h-1.2zM93.6 9.1h1.2v0.6h-1.2zM96.9 9.7h7.8v1.1h-7.8zM98.3 7.4h1.1v2.3h-1.1zM101.1 8.8h0.8v1h-0.8zM103.3 8h0.8v1.7h-0.8zM103.3 11.3h.9v.9h-.9zM107.4 9.7h8.3v1.1h-8.3zM108.9 7.8h1.2v1.9h-1.2zM108.9 11.3h.9v.9h-.9zM112.4 8.1h1.4v1.6h-1.4zM112.4 11.3h.9v.9h-.9zM90.9 19.8h8.3v1.1h-8.3zM91.5 19.1h1.2v0.7h-1.2zM94.6 18.9h1.3v0.9h-1.3zM97.7 17.3h1v2.5h-1zM102.3 19.8h17.4v1.1h-17.4zM103.4 18h1v1.8h-1zM107 17.3h1v2.5h-1zM110 17.5h1.4v2.3h-1.4zM112.6 17.6h1.3v2.2h-1.3zM116 19.2h0.8v0.6h-0.8zM118 17.5h0.8v2.3h-0.8zM121.5 19.8h16.3v1.1h-16.3zM122.5 18.4h1.2v1.4h-1.2zM126.1 18.2h1.2v1.6h-1.2zM128.7 17.8h0.9v2h-0.9zM132.1 17.7h1.2v2.1h-1.2zM134.2 19.1h1.2v0.7h-1.2zM139.8 19.8h9.5v1.1h-9.5zM141 18.3h1.4v1.6h-1.4zM143.5 18.2h1.3v1.6h-1.3zM145.9 17.5h1.1v2.4h-1.1zM148.2 18.3h1.1v1.6h-1.1zM22 19.8h5.2v1.1h-5.2zM23.4 18.7h1.2v1.2h-1.2zM25.7 19.1h0.9v0.7h-0.9zM25.7 15.9h.9v.9h-.9zM29.7 19.8h5.6v1.1h-5.6zM30.1 18.2h0.9v1.6h-0.9zM33.5 18.3h0.9v1.5h-0.9zM37.8 19.8h14.7v1.1h-14.7zM38 18.1h1v1.7h-1zM40.9 17.4h1.2v2.5h-1.2zM43.1 17.8h1.4v2h-1.4zM43.1 21.4h.9v.9h-.9zM45.7 18.7h1.1v1.1h-1.1zM48.6 17.7h1.4v2.1h-1.4zM51.5 18.5h1v1.3h-1zM54.5 19.8h0.3v1.1h-0.3zM93.3 29.4h17.7v1.1h-17.7zM94.8 28.1h1.5v1.3h-1.5zM94.8 31h.9v.9h-.9zM98.3 28.4h0.8v1h-0.8zM100.5 27.3h0.8v2.1h-0.8zM100.5 25.5h.9v.9h-.9zM103 28.7h1.1v0.7h-1.1zM106.1 27.8h1.5v1.6h-1.5zM108.3 27h1.5v2.5h-1.5zM113 29.4h9.8v1.1h-9.8zM113.3 28.5h1.2v1h-1.2zM116.5 27.7h1.4v1.7h-1.4zM116.5 31h.9v.9h-.9zM119.8 27.8h1.3v1.6h-1.3zM125.1 29.4h15.8v1.1h-15.8zM126 28.6h1v0.8h-1zM127.9 27.5h1.2v1.9h-1.2zM130.4 27.9h1.1v1.5h-1.1zM132.4 27.8h1v1.6h-1zM134.7 28.4h0.9v1h-0.9zM137.2 27h1.3v2.4h-1.3zM140.1 28.9h0.8v0.6h-0.8zM143.4 29.4h5.9v1.1h-5.9zM144.4 28.3h1.5v1.2h-1.5zM146.5 27.2h1.5v2.3h-1.5zM82 39h18.2v1.1h-18.2zM82.1 36.7h1v2.3h-1zM85.2 37.5h1.5v1.5h-1.5zM88.8 36.5h1.2v2.6h-1.2zM91.8 37.6h1.2v1.4h-1.2zM94.1 37.9h1.4v1.1h-1.4zM97.2 37h1.2v2h-1.2zM101.9 39h11.7v1.1h-11.7zM103.3 38h1.1v1h-1.1zM103.3 40.6h.9v.9h-.9zM105.7 36.7h0.8v2.3h-0.8zM108.9 36.7h1v2.4h-1zM111.5 37.5h1.5v1.5h-1.5zM115.4 39h5.1v1.1h-5.1zM115.8 38.2h1.4v0.8h-1.4zM119.3 37.1h0.9v2h-0.9zM123 39h6.1v1.1h-6.1zM124.2 36.8h1.2v2.2h-1.2zM126.7 38.2h1v0.8h-1zM131 39h8.6v1.1h-8.6zM131.7 38.4h0.8v0.6h-0.8zM133.8 36.6h0.9v2.4h-0.9zM137.1 37.8h1.2v1.2h-1.2zM141.9 39h8.2v1.1h-8.2zM142.3 36.5h1v2.5h-1zM144.7 37.1h1.4v1.9h-1.4zM146.9 36.4h1.3v2.6h-1.3zM90 49.4h14v0.8h-14zM91.2 47.8h0.9v1.6h-0.9zM91.2 50.7h.9v.9h-.9zM93.9 48.6h0.9v0.8h-0.9zM96.6 48.1h0.9v1.2h-0.9zM98.9 48.5h0.7v0.8h-0.7zM98.9 46.5h.9v.9h-.9zM102.3 47.6h0.6v1.8h-0.6zM106.2 49.4h19.7v0.8h-19.7zM107.7 48.5h0.6v0.9h-0.6zM110.5 48.9h0.7v0.4h-0.7zM113.5 48.7h0.6v0.6h-0.6zM115.6 48.8h0.6v0.6h-0.6zM119 48.9h1v0.5h-1zM122 48.5h1v0.9h-1zM122 50.7h.9v.9h-.9zM123.9 47.5h0.7v1.9h-0.7zM127.1 49.4h6.4v0.8h-6.4zM128.1 48.7h0.9v0.6h-0.9zM130.4 48.2h0.7v1.1h-0.7zM135.6 49.4h13.7v0.8h-13.7zM135.7 47.6h1v1.7h-1zM138.6 48.2h1v1.1h-1zM141 48.2h0.7v1.2h-0.7zM141 50.7h.9v.9h-.9zM143.7 47.6h1v1.7h-1zM146.5 48.1h0.9v1.3h-0.9zM58.5 58.2h18.2v0.8h-18.2zM59.3 56.6h0.9v1.6h-0.9zM59.3 55.3h.9v.9h-.9zM61.6 57.3h0.8v0.9h-0.8zM64 56.2h1v1.9h-1zM67.1 56.4h0.6v1.8h-0.6zM70.6 57.2h1.1v1h-1.1zM73.1 57.5h1v0.6h-1zM75.6 57.1h1v1.1h-1zM78.8 58.2h7.6v0.8h-7.6zM79.4 57.7h0.7v0.4h-0.7zM81.6 57h0.6v1.1h-0.6zM84.2 57.4h0.9v0.8h-0.9zM88.7 58.2h16.3v0.8h-16.3zM90 57.3h0.7v0.8h-0.7zM92.1 56.3h0.9v1.9h-0.9zM94.1 57.3h0.8v0.8h-0.8zM96.3 56.9h0.6v1.3h-0.6zM99.5 56.5h1v1.6h-1zM101.8 57.7h0.9v0.5h-0.9zM101.8 59.5h.9v.9h-.9zM104 57.5h1v0.7h-1zM107.4 58.2h7.4v0.8h-7.4zM107.6 57.2h1v1h-1zM107.6 59.5h.9v.9h-.9zM110.8 56.9h1v1.2h-1zM112.8 57.6h1v0.6h-1zM116.2 58.2h9.2v0.8h-9.2zM116.5 56.5h1v1.7h-1zM116.5 55.3h.9v.9h-.9zM119.6 57.7h0.8v0.5h-0.8zM122.8 56.7h0.9v1.5h-0.9zM127.3 58.2h15.4v0.8h-15.4zM127.4 56.5h1.1v1.7h-1.1zM130.1 56.8h1.1v1.4h-1.1zM132.9 56.6h0.8v1.6h-0.8zM132.9 59.5h.9v.9h-.9zM135.7 57.1h0.7v1h-0.7zM138 57.3h1v0.9h-1zM140.7 56.5h0.6v1.7h-0.6zM144.9 58.2h4.4v0.8h-4.4zM145.2 56.3h0.9v1.9h-0.9zM147.6 57.6h0.9v0.6h-0.9zM69.3 66.2h16.3v0.8h-16.3zM70.2 64.6h0.6v1.5h-0.6zM73 64.9h0.7v1.3h-0.7zM73 67.5h.9v.9h-.9zM76.1 64.7h0.9v1.5h-0.9zM78.9 64.6h0.9v1.6h-0.9zM80.9 64.6h0.6v1.6h-0.6zM83.7 65.6h0.8v0.5h-0.8zM86.9 66.2h12.6v0.8h-12.6zM88.1 65.6h1.1v0.6h-1.1zM90.6 65.4h0.6v0.7h-0.6zM93.2 64.7h1.1v1.5h-1.1zM96.7 65.1h0.9v1h-0.9zM96.7 67.5h.9v.9h-.9zM100.8 66.2h7v0.8h-7zM102 65.6h0.7v0.6h-0.7zM104.8 65.7h0.6v0.4h-0.6zM109.1 66.2h12.2v0.8h-12.2zM109.7 64.2h0.6v1.9h-0.6zM111.7 64.9h1.1v1.2h-1.1zM113.8 64.9h0.8v1.2h-0.8zM116.9 64.8h0.7v1.3h-0.7zM119.7 65.2h0.9v1h-0.9zM119.7 67.5h.9v.9h-.9zM123.7 66.2h11v0.8h-11zM124.4 64.6h1v1.5h-1zM127 64.7h0.7v1.5h-0.7zM128.9 65.5h0.7v0.7h-0.7zM132 65.7h1.1v0.4h-1.1zM132 67.5h.9v.9h-.9zM137 66.2h12.3v0.8h-12.3zM138.2 64.3h0.8v1.8h-0.8zM140.2 64.6h0.9v1.6h-0.9zM142.4 65.6h0.9v0.5h-0.9zM145.4 65.5h0.9v0.7h-0.9zM147.8 64.5h1.1v1.6h-1.1zM20.4 74.6h12v0.8h-12zM20.6 74h0.7v0.5h-0.7zM24 73.6h1.1v1h-1.1zM27.4 72.8h1v1.8h-1zM29.8 73.3h0.7v1.3h-0.7zM31.7 73.2h0.7v1.4h-0.7zM34.8 74.6h19.9v0.8h-19.9zM35.3 72.7h1.1v1.9h-1.1zM38.2 73.9h1v0.7h-1zM41.4 72.8h0.9v1.8h-0.9zM44.2 74h0.8v0.6h-0.8zM44.2 75.9h.9v.9h-.9zM46.4 72.7h0.8v1.9h-0.8zM46.4 71.7h.9v.9h-.9zM49.1 74.1h0.9v0.5h-0.9zM51.3 73.2h1.1v1.4h-1.1zM51.3 75.9h.9v.9h-.9zM56.6 74.6h12.3v0.8h-12.3zM57.2 74.1h0.8v0.4h-0.8zM59.7 72.6h0.8v1.9h-0.8zM63 73h0.8v1.6h-0.8zM66.3 74h0.7v0.6h-0.7zM66.3 75.9h.9v.9h-.9zM70.6 74.6h19.3v0.8h-19.3zM72 73.5h0.8v1h-0.8zM72 71.7h.9v.9h-.9zM75.2 73.4h0.7v1.2h-0.7zM77.2 73.9h0.8v0.7h-0.8zM79.3 73.8h1v0.8h-1zM82.8 74.1h0.7v0.4h-0.7zM86.1 74h0.9v0.6h-0.9zM92.1 74.6h5.8v0.8h-5.8zM92.9 73.8h0.6v0.7h-0.6zM96 73.3h0.6v1.3h-0.6zM100.2 74.6h16.3v0.8h-16.3zM100.9 72.7h1.1v1.9h-1.1zM103.3 73.9h0.9v0.7h-0.9zM106 73h0.9v1.6h-0.9zM109.1 72.7h0.6v1.8h-0.6zM111.2 73h0.8v1.5h-0.8zM114.2 72.7h0.9v1.9h-0.9zM118.7 74.6h10.1v0.8h-10.1zM118.8 72.8h0.6v1.8h-0.6zM122.3 73.2h1.1v1.4h-1.1zM125.5 73.3h0.7v1.3h-0.7zM125.5 75.9h.9v.9h-.9zM130.5 74.6h6.9v0.8h-6.9zM131.3 73.8h0.7v0.8h-0.7zM134.3 73h1v1.5h-1zM139.1 74.6h10.2v0.8h-10.2zM140.3 72.8h0.7v1.7h-0.7zM142.5 74.1h0.9v0.4h-0.9zM145 72.6h1v1.9h-1zM148.2 72.9h0.6v1.7h-0.6zM64 82.2h10.7v0.8h-10.7zM64.8 81h0.7v1.2h-0.7zM64.8 83.5h.9v.9h-.9zM67.8 80.7h0.9v1.5h-0.9zM71.1 81.7h0.6v0.4h-0.6zM71.1 83.5h.9v.9h-.9zM74 81h0.7v1.2h-0.7zM75.9 82.2h19.4v0.8h-19.4zM77.2 81.7h0.9v0.5h-0.9zM80.1 80.5h0.9v1.7h-0.9zM83.1 80.4h0.6v1.8h-0.6zM85.6 80.4h1v1.8h-1zM88.7 81.2h0.9v1h-0.9zM90.7 80.9h0.9v1.2h-0.9zM93.2 80.8h1v1.3h-1zM97.6 82.2h10.5v0.8h-10.5zM98.4 81h1v1.1h-1zM100.8 81.2h0.9v1h-0.9zM100.8 79.3h.9v.9h-.9zM104.4 81h1v1.2h-1zM106.3 81.2h0.9v1h-0.9zM106.3 83.5h.9v.9h-.9zM110.1 82.2h11.9v0.8h-11.9zM110.1 81.4h0.7v0.8h-0.7zM112.3 81h0.7v1.1h-0.7zM115.4 81h1v1.2h-1zM117.4 80.8h0.8v1.4h-0.8zM120.9 81.2h1v0.9h-1zM123.2 82.2h17.4v0.8h-17.4zM123.8 81.1h0.8v1.1h-0.8zM126.1 80.7h0.9v1.5h-0.9zM126.1 83.5h.9v.9h-.9zM128.5 80.3h0.7v1.8h-0.7zM131.4 81.2h1.1v1h-1.1zM133.5 81.4h0.7v0.7h-0.7zM135.9 80.7h1.1v1.4h-1.1zM135.9 83.5h.9v.9h-.9zM137.8 81.6h0.7v0.6h-0.7zM137.8 79.3h.9v.9h-.9zM142.2 82.2h7.1v0.8h-7.1zM143.6 80.3h0.8v1.9h-0.8zM145.8 80.8h1.1v1.3h-1.1zM147.9 81.5h1.1v0.7h-1.1zM62.9 90.2h14.3v0.8h-14.3zM62.9 88.6h1v1.5h-1zM64.8 88.6h1.1v1.5h-1.1zM67.4 89.3h1v0.9h-1zM69.9 89.4h1.1v0.7h-1.1zM72.5 89.3h1v0.9h-1zM75.2 88.5h0.8v1.7h-0.8zM79.5 90.2h16.3v0.8h-16.3zM80.6 88.5h1.1v1.7h-1.1zM83.4 89.2h0.6v1h-0.6zM85.9 89.8h1.1v0.4h-1.1zM89.4 89.7h0.8v0.4h-0.8zM92.4 88.7h0.8v1.4h-0.8zM92.4 91.5h.9v.9h-.9zM98 90.2h12.2v0.8h-12.2zM98.8 88.5h0.8v1.6h-0.8zM101.5 88.6h1v1.5h-1zM104.8 89.2h0.9v1h-0.9zM108.2 88.3h1v1.8h-1zM111.9 90.2h14.1v0.8h-14.1zM111.9 88.9h1.1v1.2h-1.1zM111.9 91.5h.9v.9h-.9zM115.3 88.9h1.1v1.3h-1.1zM118.5 88.6h0.8v1.5h-0.8zM118.5 87.3h.9v.9h-.9zM121.8 88.4h1v1.7h-1zM124.6 89h0.8v1.2h-0.8zM128.3 90.2h14.4v0.8h-14.4zM129.8 88.4h0.7v1.8h-0.7zM132.3 88.9h0.9v1.3h-0.9zM134.7 88.7h0.8v1.4h-0.8zM137.5 88.8h1.1v1.4h-1.1zM139.4 88.4h0.9v1.8h-0.9zM145 90.2h4.3v0.8h-4.3zM146.5 89.2h1v1h-1zM62.9 98.2h10.5v0.8h-10.5zM63.4 97.1h1v1h-1zM63.4 99.5h.9v.9h-.9zM67 96.6h0.9v1.6h-0.9zM69.4 96.6h1v1.6h-1zM72.2 97.4h0.7v0.7h-0.7zM75.1 98.2h14.6v0.8h-14.6zM75.4 97.8h0.8v0.4h-0.8zM77.6 96.9h0.7v1.2h-0.7zM80.8 97.2h1v0.9h-1zM83.3 97.7h1v0.4h-1zM86.2 96.7h0.9v1.4h-0.9zM88.1 96.3h0.9v1.9h-0.9zM92 98.2h13.9v0.8h-13.9zM92 96.8h0.8v1.3h-0.8zM95.3 97.6h1v0.6h-1zM97.7 97.7h0.6v0.5h-0.6zM100.5 96.3h0.7v1.8h-0.7zM103 96.8h0.8v1.4h-0.8zM105.2 97.7h0.8v0.5h-0.8zM107.2 98.2h15v0.8h-15zM107.3 96.4h0.9v1.8h-0.9zM109.9 97.7h0.6v0.5h-0.6zM113.3 96.4h1v1.8h-1zM116.2 97h0.9v1.2h-0.9zM118.8 96.5h0.7v1.7h-0.7zM124.6 98.2h10.2v0.8h-10.2zM125.3 97.1h0.7v1h-0.7zM128.5 97.5h0.8v0.7h-0.8zM131.4 96.6h0.6v1.6h-0.6zM133.6 96.8h0.9v1.4h-0.9zM136.3 98.2h9.9v0.8h-9.9zM137.7 96.4h1v1.7h-1zM140.4 97.5h0.8v0.7h-0.8zM142.4 97.2h0.7v1h-0.7zM144.8 97h0.6v1.1h-0.6zM148.4 98.2h1.7v0.8h-1.7zM59.6 106.2h8.8v0.8h-8.8zM60.5 105.7h1.1v0.5h-1.1zM63.2 105.2h0.6v0.9h-0.6zM66.4 105.6h0.6v0.6h-0.6zM70.5 106.2h11.2v0.8h-11.2zM72 104.4h0.7v1.7h-0.7zM74.9 105.1h1v1.1h-1zM78.2 105.4h0.8v0.8h-0.8zM81.1 105.7h0.6v0.4h-0.6zM83.9 106.2h13.3v0.8h-13.3zM85 104.6h0.9v1.5h-0.9zM87 105.3h0.7v0.9h-0.7zM89.3 105.7h0.6v0.4h-0.6zM92.1 105.1h0.8v1.1h-0.8zM92.1 107.5h.9v.9h-.9zM94.9 105.4h0.6v0.8h-0.6zM94.9 107.5h.9v.9h-.9zM98.9 106.2h7.5v0.8h-7.5zM99.6 105.5h1v0.6h-1zM102.1 105.7h1.1v0.5h-1.1zM102.1 107.5h.9v.9h-.9zM105.1 104.6h0.8v1.5h-0.8zM108.5 106.2h18.6v0.8h-18.6zM109.9 104.5h0.8v1.7h-0.8zM113.2 105.2h0.7v1h-0.7zM113.2 107.5h.9v.9h-.9zM115.4 105.5h1.1v0.6h-1.1zM117.9 104.3h0.9v1.9h-0.9zM120 105.2h0.7v1h-0.7zM122.6 104.3h0.7v1.9h-0.7zM122.6 107.5h.9v.9h-.9zM126.1 105.6h1v0.5h-1zM129.3 106.2h11.4v0.8h-11.4zM130.8 104.9h1.1v1.2h-1.1zM133.3 104.7h1v1.5h-1zM135.3 104.7h1v1.4h-1zM137.3 105.7h0.9v0.5h-0.9zM137.3 103.3h.9v.9h-.9zM142.4 106.2h6.9v0.8h-6.9zM143.5 105.1h0.7v1.1h-0.7zM146.5 104.5h1.1v1.7h-1.1zM148.4 104.7h0.9v1.4h-0.9z" fill="#fff" opacity=".8"/></svg>
</div>
<svg style="position:absolute;left:736.7px;top:468.6px" width="17.8" height="12" viewBox="0 0 17.8 12"><g fill="none" stroke="#444" stroke-width="1.25"><path transform="translate(0.0 0)" d="M1.3 2.6L4.6 0.4V11"/><path transform="translate(8.4 0)" d="M3.8 0.4C1.9 0.4 0.7 2.4 0.7 5.7C0.7 9 1.9 10.9 3.8 10.9C5.7 10.9 6.9 9 6.9 5.7C6.9 2.4 5.7 0.4 3.8 0.4Z"/></g></svg>
<svg style="position:absolute;left:595px;top:469px;" width="11" height="10" viewBox="0 0 11 10"><path d="M5.5 0.3l1.45 3.4 3.7.3-2.8 2.4.9 3.6-3.25-1.95-3.25 1.95.9-3.6L0.35 4l3.7-.3z" fill="#666"/><rect x="0" y="2.5" width="1.2" height="1.2" fill="#666"/><rect x="0" y="5.8" width="1.6" height="1" fill="#666"/></svg>
<div style="position:absolute;left:788px;top:340px;width:162px;height:123px;overflow:hidden"><div style="position:absolute;left:0;top:0;width:162px;height:123px;box-sizing:border-box;border:1px solid #c8c8c8;background:#fff"></div><div style="position:absolute;left:2px;top:2px;width:158px;height:119px;background:radial-gradient(ellipse 62% 88% at 47% 49%, #62838f 0%, #58788a 18%, #475c74 45%, #363f61 75%, #2c3456 100%)"></div>
<svg style="position:absolute;left:2px;top:2px;" width="158" height="119" viewBox="0 0 158 119"><path d="M64.6 8.6h14.4v1.1h-14.4zM65.8 7.8h1.5v0.8h-1.5zM67.9 7.7h1.3v0.9h-1.3zM71.4 7.5h1.1v1.1h-1.1zM74.9 7.4h1.5v1.2h-1.5zM77.8 6.1h1.2v2.5h-1.2zM80.7 8.6h8.3v1.1h-8.3zM81.7 7.8h1.3v0.8h-1.3zM84.2 6.4h1.4v2.3h-1.4zM86.9 6.9h1.5v1.7h-1.5zM90.8 8.6h18.5v1.1h-18.5zM90.9 7.8h1.3v0.8h-1.3zM94 6.6h0.9v2h-0.9zM97.6 6.7h1.5v1.9h-1.5zM100.3 6.3h1.5v2.3h-1.5zM102.4 7.3h1.3v1.3h-1.3zM104.6 7.1h0.9v1.5h-0.9zM106.6 6.6h0.9v2.1h-0.9zM112 8.6h14.7v1.1h-14.7zM112.3 6.8h1.2v1.9h-1.2zM114.5 7.1h1.4v1.5h-1.4zM116.8 7.4h1.4v1.2h-1.4zM116.8 10.2h.9v.9h-.9zM119.6 7h1.1v1.6h-1.1zM119.6 10.2h.9v.9h-.9zM121.6 6.3h1.1v2.3h-1.1zM124.3 8h0.8v0.7h-0.8zM128.6 8.6h9.8v1.1h-9.8zM128.8 7.4h1.2v1.2h-1.2zM131.5 6.3h1.5v2.3h-1.5zM133.5 7.8h1.3v0.8h-1.3zM133.5 4.7h.9v.9h-.9zM136.9 8h0.8v0.7h-0.8zM141 8.6h7v1.1h-7zM141.1 7.4h1.1v1.3h-1.1zM144.4 6.6h0.9v2h-0.9zM46.5 21.9h10.2v0.8h-10.2zM47.4 19.9h0.6v1.9h-0.6zM50.1 20.7h1v1.2h-1zM50.1 23.2h.9v.9h-.9zM53 21h1v0.9h-1zM55.6 21.2h1v0.6h-1zM58.8 21.9h19.2v0.8h-19.2zM59.2 20.4h1v1.4h-1zM62.6 21h1.1v0.9h-1.1zM66.2 20.1h1v1.7h-1zM68.9 20.6h1v1.3h-1zM72.3 21.1h0.9v0.7h-0.9zM72.3 19h.9v.9h-.9zM74.5 21h0.6v0.8h-0.6zM77.4 20.9h0.6v1h-0.6zM114.2 21.9h9.9v0.8h-9.9zM114.2 21.2h1v0.6h-1zM114.2 19h.9v.9h-.9zM117.1 20.9h0.9v1h-0.9zM120.5 20h1.1v1.9h-1.1zM126.3 21.9h9.2v0.8h-9.2zM126.8 20.7h1v1.2h-1zM126.8 23.2h.9v.9h-.9zM130.2 20.4h0.9v1.4h-0.9zM132.7 20.8h1v1h-1zM137.7 21.9h6.3v0.8h-6.3zM137.7 20h0.7v1.8h-0.7zM140.3 21.1h0.6v0.7h-0.6zM143.2 21.4h0.6v0.5h-0.6zM15 35.9h8.8v0.8h-8.8zM15.6 34.8h1v1h-1zM18.1 34.7h0.7v1.2h-0.7zM21.3 34.7h0.6v1.2h-0.6zM25.3 35.9h10.8v0.8h-10.8zM26.2 34.9h0.7v1h-0.7zM28.2 34.1h0.6v1.8h-0.6zM31 34.8h0.9v1h-0.9zM33.4 35.4h0.7v0.5h-0.7zM38.2 35.9h10.8v0.8h-10.8zM38.7 34.4h0.9v1.4h-0.9zM40.9 34.9h0.9v0.9h-0.9zM43.6 34.3h0.6v1.6h-0.6zM46.1 34.4h0.7v1.5h-0.7zM48.4 34.4h0.7v1.5h-0.7zM50.4 35.9h17.1v0.8h-17.1zM50.7 34.4h0.8v1.5h-0.8zM52.7 35.1h1v0.7h-1zM56.1 34.2h0.9v1.6h-0.9zM58 34.9h0.9v1h-0.9zM58 37.2h.9v.9h-.9zM61.4 35.2h0.9v0.6h-0.9zM63.9 34.8h0.7v1.1h-0.7zM69.4 35.9h5.2v0.8h-5.2zM70.9 35.3h0.7v0.6h-0.7zM73.4 34.7h1.1v1.1h-1.1zM73.4 33h.9v.9h-.9zM120 35.9h8.9v0.8h-8.9zM120.5 34.8h1.1v1.1h-1.1zM123.2 35.4h0.8v0.5h-0.8zM125.9 34.9h0.9v1h-0.9zM125.9 37.2h.9v.9h-.9zM130.9 35.9h6.7v0.8h-6.7zM131.5 34.2h0.7v1.7h-0.7zM134 34.6h0.8v1.2h-0.8zM139.6 35.9h8.4v0.8h-8.4zM140.1 34.8h0.8v1.1h-0.8zM142.6 34.4h0.7v1.4h-0.7zM145 34.1h0.8v1.8h-0.8z" fill="#fff" opacity=".8"/></svg>
</div>
<svg style="position:absolute;left:940.1px;top:468.6px" width="9.4" height="12" viewBox="0 0 9.4 12"><g fill="none" stroke="#444" stroke-width="1.25"><path transform="translate(0.0 0)" d="M1.1 10.5C1.7 10.8 2.4 10.9 3.1 10.9C5.4 10.9 6.6 8.7 6.6 5.3C6.6 2.1 5.5 0.4 3.6 0.4C1.8 0.4 0.5 1.8 0.5 3.8C0.5 5.8 1.7 7 3.4 7C4.9 7 6.1 6 6.5 4.8"/></g></svg>
<div style="position:absolute;left:983px;top:340px;width:162px;height:123px;overflow:hidden"><div style="position:absolute;left:0;top:0;width:162px;height:123px;box-sizing:border-box;border:1px solid #c8c8c8;background:#fff"></div><div style="position:absolute;left:2px;top:2px;width:158px;height:119px;background:radial-gradient(ellipse 62% 88% at 47% 49%, #62838f 0%, #58788a 18%, #475c74 45%, #363f61 75%, #2c3456 100%)"></div>
<svg style="position:absolute;left:2px;top:2px;" width="158" height="119" viewBox="0 0 158 119"><path d="M57.2 9.1h13.3v1.1h-13.3zM58.6 7.1h1.4v2h-1.4zM61.5 8.3h1.4v0.8h-1.4zM64.5 7.9h1.4v1.2h-1.4zM67 6.5h1.4v2.6h-1.4zM73.3 9.1h10.8v1.1h-10.8zM74.7 6.7h1.3v2.4h-1.3zM77.4 8.5h1.5v0.6h-1.5zM80.4 7.6h1.4v1.5h-1.4zM80.4 10.7h.9v.9h-.9zM82.9 8h1.1v1.1h-1.1zM87.2 9.1h2.1v1.1h-2.1zM87.3 8.5h1.4v0.6h-1.4zM91.7 16.1h6.5v0.8h-6.5zM91.7 14.3h0.6v1.8h-0.6zM94.4 14.8h0.7v1.3h-0.7zM97.4 14.2h0.6v1.9h-0.6zM99.8 16.1h8.2v0.8h-8.2zM99.8 14.4h0.7v1.6h-0.7zM103.1 14.4h0.6v1.6h-0.6zM106.5 14.7h0.9v1.4h-0.9zM109.8 16.1h10.3v0.8h-10.3zM110.6 14.9h0.7v1.1h-0.7zM113.9 14.7h0.6v1.4h-0.6zM117.1 15.5h0.8v0.6h-0.8zM121.7 16.1h5.2v0.8h-5.2zM122.8 15.4h0.9v0.7h-0.9zM125.9 15.5h1v0.6h-1zM74 27h15.8v0.8h-15.8zM74.6 25.5h1v1.5h-1zM78.1 25.9h0.8v1.1h-0.8zM80.2 25.2h0.7v1.8h-0.7zM82.4 26.4h0.9v0.6h-0.9zM85 26.3h1v0.7h-1zM88.1 26.4h0.6v0.6h-0.6zM91.9 27h13.2v0.8h-13.2zM93.3 25.3h0.9v1.6h-0.9zM96 26.1h0.6v0.8h-0.6zM99.1 25.6h0.8v1.4h-0.8zM102.5 26h0.6v1h-0.6zM107.3 27h0.4v0.8h-0.4zM28.4 34.2h12.4v0.8h-12.4zM29.1 33.2h1v1h-1zM32.7 33.4h0.7v0.7h-0.7zM35 32.7h0.7v1.5h-0.7zM37.7 33.4h1v0.8h-1zM42.2 34.2h5.4v0.8h-5.4zM42.8 32.6h0.9v1.5h-0.9zM46.4 32.7h0.7v1.4h-0.7zM49.2 34.2h16.3v0.8h-16.3zM49.7 33.5h0.9v0.7h-0.9zM52.7 33.6h0.8v0.6h-0.8zM56 33.1h0.8v1h-0.8zM58.4 33.1h1.1v1.1h-1.1zM61.2 32.8h0.7v1.4h-0.7zM63.8 32.5h0.9v1.7h-0.9zM67.5 34.2h7.4v0.8h-7.4zM67.8 33.2h0.7v1h-0.7zM67.8 35.5h.9v.9h-.9zM71 33h0.8v1.2h-0.8zM73 33.6h1v0.6h-1zM73 35.5h.9v.9h-.9zM102.9 34.2h19.5v1.1h-19.5zM104.2 32.8h1v1.4h-1zM107.4 32.7h1.3v1.5h-1.3zM110.6 32.6h1.3v1.6h-1.3zM113.5 32.8h1.5v1.4h-1.5zM116.3 32.5h0.8v1.7h-0.8zM119.8 33.2h1.4v1.1h-1.4zM124.5 34.2h13.9v1.1h-13.9zM125.7 33.6h1.4v0.6h-1.4zM128 33h1.2v1.2h-1.2zM130.2 33.5h0.9v0.7h-0.9zM132.8 32.1h1.3v2.1h-1.3zM135.7 33.4h1.2v0.9h-1.2zM141.2 34.2h6.5v1.1h-6.5zM142.7 32.5h1.5v1.7h-1.5zM144.9 32.1h1.2v2.1h-1.2zM22.8 46.2h15.2v1.1h-15.2zM23.1 43.7h1.5v2.6h-1.5zM26.6 43.6h1v2.6h-1zM28.9 44.6h0.9v1.6h-0.9zM32.1 45.6h1.2v0.6h-1.2zM35.2 45.1h1.1v1.1h-1.1zM37.1 43.9h0.9v2.4h-0.9zM40.3 46.2h13.1v1.1h-13.1zM40.5 44.8h1.4v1.4h-1.4zM43.8 43.8h0.9v2.5h-0.9zM43.8 47.8h.9v.9h-.9zM45.9 44.3h1.2v1.9h-1.2zM49 45.2h1.2v1h-1.2zM51.1 44h0.9v2.2h-0.9zM55.7 46.2h11.8v1.1h-11.8zM56.1 45.4h1.3v0.8h-1.3zM58.9 44.9h1v1.3h-1zM62.1 44.8h0.9v1.5h-0.9zM64.3 45.2h0.9v1h-0.9zM69.2 46.2h18.9v1.1h-18.9zM70.3 43.9h1.1v2.3h-1.1zM72.4 45.1h1.4v1.1h-1.4zM75.8 43.9h1.5v2.3h-1.5zM75.8 42.3h.9v.9h-.9zM78.4 43.9h1v2.3h-1zM80.3 44.6h1.2v1.7h-1.2zM82.7 44.3h0.9v1.9h-0.9zM86.1 44.8h0.9v1.4h-0.9zM89.9 46.2h15.6v1.1h-15.6zM90.8 45.1h1v1.1h-1zM94.2 44.9h1.2v1.3h-1.2zM96.9 44.5h1v1.8h-1zM99.8 45.6h0.9v0.6h-0.9zM101.9 44.5h1.2v1.7h-1.2zM108.2 46.2h16.6v1.1h-16.6zM108.4 43.8h1.5v2.4h-1.5zM111.7 44.5h1.1v1.7h-1.1zM114.4 44.2h1.4v2h-1.4zM117.2 43.7h1.1v2.5h-1.1zM117.2 47.8h.9v.9h-.9zM119.8 44.5h1.4v1.7h-1.4zM121.8 44.2h0.9v2.1h-0.9zM126.7 46.2h12.8v1.1h-12.8zM127.8 45.2h1.5v1h-1.5zM127.8 47.8h.9v.9h-.9zM130 44.4h1.3v1.8h-1.3zM133.5 45.2h0.8v1h-0.8zM136 44.8h1.1v1.4h-1.1zM138.3 44.2h1.2v2h-1.2zM141.6 46.2h6.1v1.1h-6.1zM141.9 44.2h1.3v2h-1.3zM144 44.4h1v1.8h-1zM147 45.7h0.7v0.6h-0.7zM80.5 57.8h8.3v0.8h-8.3zM81.1 56.1h0.7v1.7h-0.7zM83.2 56h0.6v1.8h-0.6zM86.7 56.3h1.1v1.5h-1.1zM91.1 57.8h9.1v0.8h-9.1zM92.3 56h0.7v1.8h-0.7zM95.5 56.5h1.1v1.3h-1.1zM98.2 57.1h0.7v0.7h-0.7zM102.5 57.8h6v0.8h-6zM103.4 56.9h0.6v0.9h-0.6zM103.4 54.9h.9v.9h-.9zM106.7 55.9h1.1v1.9h-1.1zM30.8 68.2h10.5v0.8h-10.5zM32.2 66.5h0.9v1.6h-0.9zM34.2 67.5h0.7v0.7h-0.7zM37.1 67.3h0.7v0.9h-0.7zM39.6 67.8h0.6v0.4h-0.6zM43.2 68.2h5.4v0.8h-5.4zM43.9 66.8h0.9v1.3h-0.9zM47.2 66.3h1v1.9h-1zM50.2 68.2h9.4v0.8h-9.4zM50.8 66.6h0.7v1.6h-0.7zM53.5 66.9h1.1v1.2h-1.1zM55.4 67.2h1.1v1h-1.1zM55.4 69.5h.9v.9h-.9zM58.2 66.8h1v1.3h-1zM69.3 68.2h19.6v0.8h-19.6zM70.1 67.2h0.9v0.9h-0.9zM73.2 66.7h0.8v1.4h-0.8zM75.7 67.4h0.6v0.8h-0.6zM77.9 67.3h0.7v0.8h-0.7zM80.5 66.3h0.9v1.9h-0.9zM83.1 66.9h1v1.2h-1zM85.9 67.2h0.7v0.9h-0.7zM87.9 67.3h0.6v0.8h-0.6zM90.2 68.2h16.3v0.8h-16.3zM90.9 66.8h0.8v1.3h-0.8zM94 67.6h0.9v0.6h-0.9zM97.1 67.2h0.7v1h-0.7zM97.1 69.5h.9v.9h-.9zM100.7 67.6h0.7v0.6h-0.7zM102.7 67.1h0.8v1h-0.8zM105.9 66.3h0.6v1.9h-0.6zM105.9 69.5h.9v.9h-.9zM107.8 68.2h3.9v0.8h-3.9zM108.7 66.4h0.6v1.8h-0.6zM122.9 68.2h11v0.8h-11zM123 67.7h0.7v0.5h-0.7zM125 67h1v1.2h-1zM125 69.5h.9v.9h-.9zM127.4 67.1h0.9v1h-0.9zM130.4 67.1h0.7v1.1h-0.7zM133.1 66.3h0.8v1.8h-0.8zM135.7 68.2h11.2v0.8h-11.2zM136.7 66.8h1.1v1.3h-1.1zM139.4 66.3h1v1.9h-1zM141.8 67.5h0.8v0.7h-0.8zM144.5 67.4h0.8v0.8h-0.8zM35.6 77.8h15.7v0.8h-15.7zM35.9 77h0.6v0.8h-0.6zM38.9 76.7h0.9v1h-0.9zM40.9 77.3h0.8v0.5h-0.8zM44 76.7h0.7v1.1h-0.7zM44 74.9h.9v.9h-.9zM47 76.2h0.8v1.6h-0.8zM47 79.1h.9v.9h-.9zM49.4 76.3h1v1.5h-1zM52.9 77.8h5.4v0.8h-5.4zM53.2 76h1v1.8h-1zM53.2 79.1h.9v.9h-.9zM55.6 76.8h0.8v1h-0.8zM55.6 79.1h.9v.9h-.9zM60.1 77.8h0.3v0.8h-0.3zM70.9 77.8h19v0.8h-19zM72 76.1h1v1.7h-1zM74 76.9h0.9v0.9h-0.9zM76.2 77.3h1v0.5h-1zM78.7 76.6h1v1.1h-1zM78.7 74.9h.9v.9h-.9zM81.6 77h1.1v0.8h-1.1zM85.1 76.8h0.8v1h-0.8zM87.6 75.9h1.1v1.8h-1.1zM91.7 77.8h14.9v0.8h-14.9zM93 76.7h1.1v1.1h-1.1zM95.4 76.8h0.9v0.9h-0.9zM97.8 77.1h0.6v0.7h-0.6zM101.4 76.1h0.8v1.6h-0.8zM104.4 76.7h0.9v1.1h-0.9zM104.4 74.9h.9v.9h-.9zM108.2 77.8h5.8v0.8h-5.8zM109.2 77h0.7v0.8h-0.7zM112.4 75.9h1v1.8h-1zM126.9 77.8h17.1v0.8h-17.1zM127.2 76.6h0.9v1.1h-0.9zM127.2 79.1h.9v.9h-.9zM129.6 76.2h0.9v1.5h-0.9zM132.4 76.6h0.8v1.2h-0.8zM132.4 79.1h.9v.9h-.9zM135.6 76.2h0.8v1.6h-0.8zM138.9 76.3h1v1.5h-1zM140.9 75.9h0.8v1.8h-0.8zM145.3 77.8h2.4v0.8h-2.4zM145.4 76.2h0.7v1.5h-0.7zM20.4 87.1h14.6v0.8h-14.6zM20.8 85.5h0.7v1.5h-0.7zM23.8 85.5h0.9v1.6h-0.9zM26.9 86h0.9v1.1h-0.9zM29.2 86.2h1v0.9h-1zM32.8 85.6h0.8v1.4h-0.8zM37 87.1h19.1v0.8h-19.1zM38.1 86.1h0.7v1h-0.7zM38.1 88.4h.9v.9h-.9zM41.3 86h0.8v1.1h-0.8zM41.3 88.4h.9v.9h-.9zM44.1 85.3h0.7v1.8h-0.7zM47.3 85.7h0.9v1.4h-0.9zM50.3 85.8h1.1v1.3h-1.1zM52.8 85.3h0.9v1.8h-0.9zM57.5 87.1h7.8v0.8h-7.8zM58.8 86h1v1.1h-1zM61.5 86.3h1v0.8h-1zM64.1 86.1h0.7v1h-0.7zM69.3 87.1h6.6v0.8h-6.6zM69.9 86h1.1v1.1h-1.1zM72.5 85.2h1v1.9h-1zM75 86.3h0.6v0.7h-0.6zM77.2 87.1h12.1v0.8h-12.1zM77.5 85.7h0.8v1.3h-0.8zM80.7 86h0.8v1h-0.8zM80.7 88.4h.9v.9h-.9zM82.9 85.7h1v1.3h-1zM82.9 84.2h.9v.9h-.9zM86.5 85.3h0.8v1.8h-0.8zM90.9 87.1h10.5v0.8h-10.5zM92 85.9h0.8v1.1h-0.8zM94.1 85.9h0.7v1.1h-0.7zM96.9 85.6h0.9v1.5h-0.9zM99.9 86h1.1v1h-1.1zM103.3 87.1h6.7v0.8h-6.7zM103.9 86.1h0.8v1h-0.8zM107.1 85.3h0.7v1.7h-0.7zM124.5 87.1h16v0.8h-16zM125.3 85.2h1.1v1.9h-1.1zM127.6 86.5h1v0.6h-1zM127.6 84.2h.9v.9h-.9zM130.7 86.4h1v0.7h-1zM130.7 88.4h.9v.9h-.9zM132.8 85.3h0.8v1.7h-0.8zM136.3 85.5h0.7v1.6h-0.7zM138.9 86h0.7v1.1h-0.7zM142 87.1h5.7v0.8h-5.7zM143.3 86.1h0.9v1h-0.9zM146.4 86.4h1.1v0.6h-1.1zM81.3 97.2h17.5v0.8h-17.5zM82.3 96.7h0.8v0.4h-0.8zM85.1 95.3h1v1.8h-1zM88.7 96.2h1.1v0.9h-1.1zM88.7 98.5h.9v.9h-.9zM91.9 96.6h0.8v0.5h-0.8zM93.9 95.8h1v1.4h-1zM96.3 95.6h0.9v1.6h-0.9zM96.3 98.5h.9v.9h-.9zM101.1 97.2h7.4v0.8h-7.4zM101.5 96.1h1.1v1.1h-1.1zM104.1 95.7h0.6v1.4h-0.6zM104.1 98.5h.9v.9h-.9zM106.6 95.8h0.6v1.4h-0.6zM106.6 98.5h.9v.9h-.9zM120.5 97.2h5.8v0.8h-5.8zM120.6 96.6h0.7v0.5h-0.7zM123.6 96.3h0.8v0.8h-0.8zM127.7 97.2h14.4v0.8h-14.4zM127.7 95.4h0.7v1.8h-0.7zM129.9 96.1h0.7v1.1h-0.7zM133.1 95.5h1.1v1.7h-1.1zM135.9 96.2h0.7v0.9h-0.7zM139.5 96.7h1v0.5h-1zM143.5 97.2h4.2v0.8h-4.2zM144.3 96.3h0.8v0.9h-0.8zM144.3 98.5h.9v.9h-.9zM146.3 95.4h0.6v1.8h-0.6zM37.2 103.1h19v0.8h-19zM37.5 101.2h0.8v1.9h-0.8zM40.4 102.5h0.8v0.5h-0.8zM43.7 101.5h0.9v1.5h-0.9zM43.7 100.2h.9v.9h-.9zM46.3 101.9h0.6v1.2h-0.6zM48.3 101.8h0.7v1.3h-0.7zM51.9 101.7h1v1.3h-1zM54.7 101.3h0.6v1.7h-0.6zM58.1 103.1h10.9v0.8h-10.9zM59.5 102.3h0.7v0.8h-0.7zM62.6 102h0.8v1.1h-0.8zM64.7 101.6h0.7v1.5h-0.7zM66.8 101.3h1v1.8h-1zM66.8 104.4h.9v.9h-.9zM71.3 103.1h17.3v0.8h-17.3zM71.7 101.4h0.9v1.6h-0.9zM74.8 102h0.6v1h-0.6zM77.9 102.3h0.8v0.8h-0.8zM80.5 102.3h0.9v0.8h-0.9zM82.5 102.3h0.8v0.8h-0.8zM86.1 102.6h0.9v0.4h-0.9zM86.1 100.2h.9v.9h-.9zM89.9 103.1h12.5v0.8h-12.5zM91.4 101.2h0.8v1.9h-0.8zM94.5 102.5h1.1v0.5h-1.1zM98.1 102.5h1.1v0.6h-1.1zM100.8 102.4h0.8v0.7h-0.8zM104.8 103.1h3.7v0.8h-3.7zM106.2 102.5h1v0.6h-1zM34.8 113.2h11.9v0.8h-11.9zM36 112.4h0.8v0.8h-0.8zM39 112h0.6v1.1h-0.6zM41.6 112.4h0.8v0.8h-0.8zM41.6 110.3h.9v.9h-.9zM45 111.5h1.1v1.6h-1.1zM48.5 113.2h3.1v0.8h-3.1zM48.5 112.2h0.6v0.9h-0.6zM50.8 111.8h0.6v1.3h-0.6zM63.7 113.2h6.5v0.8h-6.5zM64.5 112.2h0.8v0.9h-0.8zM64.5 110.3h.9v.9h-.9zM67 112h0.6v1.2h-0.6zM72.1 113.2h6.9v0.8h-6.9zM73.1 112.6h0.6v0.5h-0.6zM73.1 114.5h.9v.9h-.9zM75.9 112.5h0.7v0.7h-0.7zM75.9 110.3h.9v.9h-.9zM101.3 113.2h15.1v0.8h-15.1zM102.5 112.1h0.9v1.1h-0.9zM105.8 111.7h0.6v1.4h-0.6zM107.9 112h0.7v1.1h-0.7zM111 111.6h0.7v1.5h-0.7zM111 114.5h.9v.9h-.9zM113.6 111.4h0.9v1.8h-0.9zM118.4 113.2h3.7v0.8h-3.7zM119.8 111.6h1v1.5h-1zM119.8 110.3h.9v.9h-.9z" fill="#fff" opacity=".8"/></svg>
</div>
<svg style="position:absolute;left:1135.1px;top:468.6px" width="9.4" height="12" viewBox="0 0 9.4 12"><g fill="none" stroke="#444" stroke-width="1.25"><path transform="translate(0.0 0)" d="M3.8 5.4C2 5.4 1 4.4 1 2.9C1 1.4 2.2 0.4 3.8 0.4C5.4 0.4 6.6 1.4 6.6 2.9C6.6 4.4 5.6 5.4 3.8 5.4C1.9 5.4 0.7 6.5 0.7 8.1C0.7 9.8 2 10.9 3.8 10.9C5.6 10.9 6.9 9.8 6.9 8.1C6.9 6.5 5.7 5.4 3.8 5.4Z"/></g></svg>
<div style="position:absolute;left:1178px;top:340px;width:162px;height:123px;overflow:hidden"><div style="position:absolute;left:0;top:0;width:162px;height:123px;box-sizing:border-box;border:1px solid #c8c8c8;background:#fff"></div><div style="position:absolute;left:2px;top:2px;width:158px;height:119px;background:radial-gradient(ellipse 62% 88% at 47% 49%, #62838f 0%, #58788a 18%, #475c74 45%, #363f61 75%, #2c3456 100%)"></div>
<svg style="position:absolute;left:2px;top:2px;" width="158" height="119" viewBox="0 0 158 119"><path d="M12.4 12.3h13.7v1.1h-13.7zM13.7 10.2h1v2.2h-1zM16.7 11.5h1.2v0.8h-1.2zM19.3 10.4h1.3v1.9h-1.3zM21.3 9.9h1.3v2.4h-1.3zM24.2 10.4h1.5v1.9h-1.5zM27.8 12.3h5.4v1.1h-5.4zM28.9 10h1.1v2.3h-1.1zM31.5 10h1.4v2.3h-1.4zM31.5 8.4h.9v.9h-.9zM35.2 12.3h16.2v1.1h-16.2zM35.6 9.9h1.1v2.4h-1.1zM38.2 11.5h1.4v0.8h-1.4zM38.2 13.9h.9v.9h-.9zM40.8 11h0.8v1.3h-0.8zM44.3 10h1.1v2.3h-1.1zM47.8 10h1.3v2.3h-1.3zM50.6 10.3h0.8v2h-0.8zM54.5 12.3h16.3v1.1h-16.3zM55.2 10h1v2.3h-1zM58 9.7h1v2.6h-1zM61.1 9.8h1v2.5h-1zM64.5 9.9h1.3v2.4h-1.3zM67.4 10.6h0.9v1.7h-0.9zM74 12.3h5.6v1.1h-5.6zM74.5 11.3h1.4v1.1h-1.4zM77.7 11.4h1v1h-1zM82.3 12.3h9.1v1.1h-9.1zM83.4 11.6h1.3v0.7h-1.3zM86.9 11.1h1.3v1.2h-1.3zM86.9 13.9h.9v.9h-.9zM90.4 10.4h1v1.9h-1zM94.3 12.3h10.7v1.1h-10.7zM94.6 9.9h1.3v2.4h-1.3zM96.6 10.4h0.8v1.9h-0.8zM98.6 11.4h1.3v0.9h-1.3zM102.1 11.2h1.4v1.1h-1.4zM107.6 12.3h7.1v1.1h-7.1zM108.9 9.8h1.2v2.5h-1.2zM110.9 11.2h1.5v1.1h-1.5zM113.3 10.7h0.8v1.6h-0.8zM116.9 12.3h5.4v1.1h-5.4zM118.2 10.1h1.4v2.2h-1.4zM125 12.3h5.5v1.1h-5.5zM126.5 10.3h0.9v2h-0.9zM129.4 10.4h0.8v1.9h-0.8zM132.2 12.3h7.9v1.1h-7.9zM132.3 10.6h0.9v1.8h-0.9zM135 10.1h1.5v2.2h-1.5zM137.2 11h1.4v1.3h-1.4zM142.3 12.3h6.2v1.1h-6.2zM142.7 10.3h1v2.1h-1zM145.8 10h0.9v2.3h-0.9zM43.6 20.6h15.1v0.8h-15.1zM44.7 18.9h0.7v1.6h-0.7zM46.6 19.6h0.9v0.9h-0.9zM49.8 19.8h0.8v0.7h-0.8zM52.1 19.2h0.8v1.4h-0.8zM52.1 21.9h.9v.9h-.9zM54.2 19.2h1v1.4h-1zM57.6 19.1h1v1.4h-1zM60.5 20.6h7.4v0.8h-7.4zM60.9 20h0.6v0.5h-0.6zM63.3 19.3h1v1.3h-1zM66.7 18.9h0.7v1.7h-0.7zM69.2 20.6h0.8v0.8h-0.8zM122.9 20.6h5.4v0.8h-5.4zM124.1 18.8h1v1.7h-1zM124.1 21.9h.9v.9h-.9zM126.1 18.9h0.8v1.7h-0.8zM130.1 20.6h9.9v0.8h-9.9zM130.3 20h1v0.6h-1zM132.3 19.8h0.9v0.7h-0.9zM135 19.4h0.7v1.2h-0.7zM135 17.7h.9v.9h-.9zM137.7 18.9h0.6v1.6h-0.6zM141.9 20.6h6.6v0.8h-6.6zM143.3 19h1.1v1.6h-1.1zM146.1 19.5h1v1.1h-1zM41.2 28.6h18.4v0.8h-18.4zM41.7 28h0.7v0.6h-0.7zM43.8 26.7h0.9v1.9h-0.9zM46.5 27.4h0.7v1.2h-0.7zM49.1 27.5h1v1h-1zM52.7 27.4h0.8v1.1h-0.8zM55.3 27.9h0.8v0.7h-0.8zM57.6 27h0.8v1.6h-0.8zM60.9 28.6h9.1v0.8h-9.1zM62.1 27.1h0.9v1.5h-0.9zM64.8 26.9h1v1.7h-1zM67.8 27.9h0.6v0.7h-0.6zM125.3 28.6h11v0.8h-11zM126.4 27.1h1v1.5h-1zM128.7 27.8h0.6v0.8h-0.6zM130.8 26.7h0.9v1.9h-0.9zM132.8 26.8h0.7v1.8h-0.7zM135 27.7h0.6v0.8h-0.6zM138.2 28.6h9.5v0.8h-9.5zM138.5 28h0.8v0.6h-0.8zM141.2 27.6h0.7v1h-0.7zM141.2 25.7h.9v.9h-.9zM144.3 27.2h0.9v1.4h-0.9zM147.1 27.9h0.6v0.7h-0.6zM27.6 36.6h10.7v0.8h-10.7zM29.1 35.5h1v1h-1zM29.1 33.7h.9v.9h-.9zM32 35.7h0.7v0.8h-0.7zM34.6 35.2h0.8v1.4h-0.8zM36.7 34.9h0.8v1.7h-0.8zM39.8 36.6h18.4v0.8h-18.4zM40.7 35.1h0.9v1.5h-0.9zM44.2 35h1.1v1.5h-1.1zM46.7 34.8h1v1.7h-1zM49.3 35.5h1.1v1h-1.1zM51.5 35.9h0.7v0.7h-0.7zM54 35.5h0.6v1.1h-0.6zM56.8 36.1h0.8v0.5h-0.8zM60.5 36.6h11.2v0.8h-11.2zM61.3 36.1h0.6v0.4h-0.6zM64.6 35.7h0.6v0.9h-0.6zM67.4 35.4h0.6v1.1h-0.6zM70.3 35.1h1.1v1.5h-1.1zM70.3 37.9h.9v.9h-.9zM94.9 36.6h11.2v0.8h-11.2zM95.4 34.9h0.8v1.6h-0.8zM95.4 37.9h.9v.9h-.9zM98.1 35.9h0.6v0.6h-0.6zM98.1 37.9h.9v.9h-.9zM100.7 35.5h0.6v1.1h-0.6zM100.7 33.7h.9v.9h-.9zM104.1 35.3h1.1v1.2h-1.1zM108.2 36.6h10.8v0.8h-10.8zM108.2 35.9h1v0.6h-1zM110.6 35.9h0.9v0.6h-0.9zM113 34.6h0.9v1.9h-0.9zM115.2 35.1h1.1v1.5h-1.1zM117.5 35.9h0.7v0.6h-0.7zM120.5 36.6h14.9v0.8h-14.9zM120.8 35.8h0.8v0.8h-0.8zM122.8 36h0.6v0.5h-0.6zM124.8 35.4h1.1v1.1h-1.1zM127.2 35.5h0.8v1h-0.8zM129.2 35.9h0.6v0.6h-0.6zM131.7 36h0.9v0.6h-0.9zM134.4 35.1h0.8v1.5h-0.8zM137.1 36.6h8.2v0.8h-8.2zM137.2 35.1h0.8v1.5h-0.8zM139.2 35.9h1.1v0.7h-1.1zM142.6 34.9h0.7v1.7h-0.7zM146.8 36.6h1.7v0.8h-1.7zM41.2 44.6h11.4v0.8h-11.4zM42.6 42.8h1.1v1.7h-1.1zM44.9 44.1h0.6v0.5h-0.6zM47.7 42.8h1.1v1.7h-1.1zM51.3 43.7h0.7v0.8h-0.7zM54.9 44.6h10.3v0.8h-10.3zM55.6 42.9h1v1.7h-1zM58.1 43.8h0.8v0.8h-0.8zM61.1 42.8h0.7v1.7h-0.7zM64.5 43.3h0.6v1.3h-0.6zM101.3 44.6h15.4v0.8h-15.4zM102 43.4h1v1.2h-1zM105.5 43.6h0.9v1h-0.9zM108.9 43.8h0.8v0.8h-0.8zM112.2 43.1h0.6v1.5h-0.6zM112.2 41.7h.9v.9h-.9zM114.3 43.3h1v1.3h-1zM118.6 44.6h14.2v0.8h-14.2zM119.2 43.7h0.8v0.8h-0.8zM122.5 43.6h1v1h-1zM124.8 43.7h0.9v0.8h-0.9zM128.3 43.9h0.7v0.6h-0.7zM128.3 45.9h.9v.9h-.9zM130.5 43.6h1v1h-1zM134.2 44.6h10.6v0.8h-10.6zM134.4 43.7h0.9v0.8h-0.9zM136.6 43.7h1.1v0.8h-1.1zM139.5 43.7h0.7v0.9h-0.7zM141.4 43.2h1.1v1.4h-1.1zM143.4 44.1h1v0.5h-1zM146.8 44.6h1.7v0.8h-1.7zM147.2 43.1h1.1v1.4h-1.1zM34 52.3h18.1v0.8h-18.1zM35 50.5h1v1.8h-1zM37.4 50.8h0.7v1.4h-0.7zM37.4 49.4h.9v.9h-.9zM39.8 50.4h0.7v1.8h-0.7zM43.3 50.4h1v1.9h-1zM46.6 51.8h0.6v0.5h-0.6zM46.6 53.6h.9v.9h-.9zM49.1 51.5h1v0.8h-1zM53.9 52.3h10.6v0.8h-10.6zM54.4 51.8h0.8v0.5h-0.8zM57.9 50.4h0.6v1.8h-0.6zM61.3 51.6h0.6v0.6h-0.6zM63.3 50.7h1v1.5h-1zM66.5 52.3h10v0.8h-10zM66.8 51.7h1.1v0.5h-1.1zM68.8 51.6h0.9v0.7h-0.9zM71.4 51.6h0.6v0.6h-0.6zM74.3 50.6h0.6v1.7h-0.6zM102.9 52.3h7.5v0.8h-7.5zM103.4 50.4h0.9v1.9h-0.9zM106.3 51.6h0.9v0.7h-0.9zM108.4 50.6h0.8v1.7h-0.8zM112.6 52.3h7.5v0.8h-7.5zM112.9 51.1h0.7v1.2h-0.7zM116.5 51.8h0.8v0.4h-0.8zM118.7 51h1.1v1.3h-1.1zM122.1 52.3h17.9v0.8h-17.9zM123.6 51.4h0.7v0.9h-0.7zM126.5 50.5h0.6v1.7h-0.6zM128.6 51.7h0.6v0.6h-0.6zM131.2 50.9h1.1v1.4h-1.1zM134.1 51.2h0.8v1h-0.8zM136 51.5h1v0.8h-1zM139.1 51.2h0.8v1.1h-0.8zM142.4 52.3h6.1v0.8h-6.1zM143 51h0.8v1.2h-0.8zM145.6 51.2h1.1v1.1h-1.1zM74 59.8h8.3v0.8h-8.3zM75.4 59.2h0.8v0.6h-0.8zM75.4 61.1h.9v.9h-.9zM78.1 58.7h0.6v1.1h-0.6zM78.1 56.9h.9v.9h-.9zM80.9 58.6h0.7v1.1h-0.7zM80.9 61.1h.9v.9h-.9zM83.9 59.8h6.6v0.8h-6.6zM84.8 59h0.9v0.7h-0.9zM86.8 58.6h0.9v1.2h-0.9zM89.8 58.1h0.7v1.7h-0.7zM92.6 59.8h12.3v0.8h-12.3zM94 59.3h1.1v0.5h-1.1zM96.8 58.1h0.7v1.6h-0.7zM98.7 59.3h1.1v0.5h-1.1zM101.4 59.2h1.1v0.6h-1.1zM106.4 59.8h2.1v0.8h-2.1zM106.8 58.5h1v1.3h-1zM10 76.7h19.3v0.8h-19.3zM10 76h0.9v0.7h-0.9zM13.4 75.9h1.1v0.8h-1.1zM16.2 75.3h0.9v1.4h-0.9zM19.7 75.8h1.1v0.9h-1.1zM22.7 76h0.9v0.6h-0.9zM26.3 75.2h0.8v1.4h-0.8zM28.4 75.1h0.9v1.5h-0.9zM28.4 78h.9v.9h-.9zM30.6 76.7h20v0.8h-20zM30.8 75.3h0.9v1.4h-0.9zM30.8 73.8h.9v.9h-.9zM34.3 75.4h0.9v1.3h-0.9zM36.4 75.8h0.6v0.9h-0.6zM39.2 75.7h1v1h-1zM39.2 73.8h.9v.9h-.9zM41.4 75.5h0.9v1.2h-0.9zM43.7 76.1h0.8v0.6h-0.8zM46.9 75.9h0.8v0.8h-0.8zM49.2 76.2h1.1v0.5h-1.1zM52.2 76.7h11.9v0.8h-11.9zM52.5 75.1h1.1v1.6h-1.1zM55.1 75h1.1v1.7h-1.1zM58.1 76h1.1v0.7h-1.1zM60.7 75.1h0.7v1.5h-0.7zM60.7 78h.9v.9h-.9zM65.4 76.7h11.9v0.8h-11.9zM66.6 75.4h0.7v1.3h-0.7zM69.5 75.5h1.1v1.2h-1.1zM72.2 75.6h0.8v1.1h-0.8zM74.7 75.4h0.7v1.2h-0.7zM79.5 76.7h12.2v0.8h-12.2zM80.1 76.2h0.9v0.5h-0.9zM82.1 75.5h0.9v1.1h-0.9zM85.3 75.3h0.6v1.4h-0.6zM85.3 78h.9v.9h-.9zM88.1 75.3h0.9v1.3h-0.9zM90.6 75.2h0.8v1.5h-0.8zM93.7 76.7h12.2v0.8h-12.2zM93.7 75.1h1v1.5h-1zM97.2 75.2h0.8v1.5h-0.8zM100.3 75.6h0.7v1h-0.7zM100.3 73.8h.9v.9h-.9zM103.3 75.2h1v1.5h-1zM103.3 73.8h.9v.9h-.9zM107.9 76.7h6.9v0.8h-6.9zM109.2 74.9h0.9v1.8h-0.9zM112.1 75.1h0.8v1.6h-0.8zM117.1 76.7h16.6v0.8h-16.6zM118.1 75.4h1.1v1.2h-1.1zM121.2 75.8h0.6v0.9h-0.6zM123.5 74.8h0.7v1.9h-0.7zM125.9 76h0.9v0.7h-0.9zM129.5 75.3h0.6v1.3h-0.6zM131.6 75.5h0.9v1.2h-0.9zM135.5 76.7h13v0.8h-13zM136.5 75.9h1v0.8h-1zM136.5 78h.9v.9h-.9zM138.8 76.2h1.1v0.4h-1.1zM142.1 74.8h0.6v1.9h-0.6zM144.1 75.2h1v1.5h-1zM147.5 75.1h0.8v1.6h-0.8zM85.3 84.7h13.1v0.8h-13.1zM86.1 84h0.9v0.7h-0.9zM86.1 86h.9v.9h-.9zM88.5 83.2h0.6v1.4h-0.6zM90.6 82.9h0.7v1.7h-0.7zM94.1 82.8h0.7v1.9h-0.7zM96.1 82.8h0.9v1.9h-0.9zM96.1 86h.9v.9h-.9zM99.7 84.7h10.2v0.8h-10.2zM101.2 83.1h0.7v1.6h-0.7zM103.1 83.4h0.8v1.2h-0.8zM103.1 86h.9v.9h-.9zM106.5 83.3h1.1v1.4h-1.1zM111.3 84.7h12.1v0.8h-12.1zM112.7 83.4h0.9v1.2h-0.9zM115.2 84.2h0.7v0.4h-0.7zM117.2 84.2h1v0.5h-1zM120.3 83h0.7v1.7h-0.7zM125.7 84.7h8.6v0.8h-8.6zM126.1 83.5h0.7v1.2h-0.7zM129.3 83.1h1.1v1.6h-1.1zM131.8 83.5h0.9v1.1h-0.9zM136.1 84.7h2.8v0.8h-2.8zM136.9 83.6h0.6v1.1h-0.6zM70.9 94h11.6v0.8h-11.6zM71.1 93.2h1.1v0.8h-1.1zM73.2 92.7h0.8v1.3h-0.8zM73.2 95.3h.9v.9h-.9zM75.6 92.7h0.8v1.2h-0.8zM77.6 92.6h0.9v1.3h-0.9zM80.5 92.1h1.1v1.8h-1.1zM84.6 94h11.8v0.8h-11.8zM85.7 93h0.9v1h-0.9zM88.5 92.6h0.8v1.3h-0.8zM91.6 92.9h0.8v1.1h-0.8zM94 92.6h1.1v1.4h-1.1zM98.2 94h14.6v0.8h-14.6zM99.2 93h0.6v1h-0.6zM102 92.6h1.1v1.4h-1.1zM105 93h1v0.9h-1zM105 91.1h.9v.9h-.9zM108.4 92.8h0.8v1.1h-0.8zM111.3 92h0.6v1.9h-0.6zM111.3 95.3h.9v.9h-.9zM114.3 94h8.4v0.8h-8.4zM115.8 92.8h0.7v1.2h-0.7zM118 93.2h0.6v0.8h-0.6zM121.2 93h0.6v0.9h-0.6zM124 94h18v0.8h-18zM124.8 92.1h0.8v1.9h-0.8zM126.7 92.7h0.7v1.3h-0.7zM129 92.2h0.7v1.7h-0.7zM132.1 92.1h0.9v1.8h-0.9zM134.5 93.2h0.6v0.8h-0.6zM136.9 92.3h0.6v1.7h-0.6zM139.7 93.3h0.9v0.6h-0.9zM143.4 94h4.3v0.8h-4.3zM143.9 93.4h0.6v0.5h-0.6zM146 93.1h1.1v0.9h-1.1zM45.2 102.2h6.1v0.8h-6.1zM45.3 100.4h0.7v1.7h-0.7zM47.5 100.6h1.1v1.5h-1.1zM50.7 101.1h0.7v1.1h-0.7zM52.8 102.2h10.1v0.8h-10.1zM52.9 101.2h1v1h-1zM52.9 103.5h.9v.9h-.9zM56.5 100.8h0.9v1.3h-0.9zM58.7 100.5h1.1v1.7h-1.1zM58.7 103.5h.9v.9h-.9zM62 101.5h0.6v0.7h-0.6zM94.9 102.2h17.7v0.8h-17.7zM95.3 101.5h0.8v0.6h-0.8zM97.3 100.7h0.6v1.5h-0.6zM99.5 101.6h0.9v0.5h-0.9zM102.9 100.4h1v1.8h-1zM105.9 101.3h0.8v0.9h-0.8zM108.5 101.1h1v1.1h-1zM111.7 100.5h0.7v1.7h-0.7zM111.7 103.5h.9v.9h-.9zM114.4 102.2h3.7v0.8h-3.7zM115.5 100.4h1v1.8h-1zM117.5 101h0.6v1.1h-0.6zM38.8 110.2h16.6v0.8h-16.6zM39.9 109h0.8v1.2h-0.8zM43.1 108.9h1.1v1.3h-1.1zM43.1 107.3h.9v.9h-.9zM46.4 108.9h0.7v1.2h-0.7zM46.4 107.3h.9v.9h-.9zM49.2 108.4h0.7v1.7h-0.7zM52.8 109.5h0.9v0.7h-0.9zM56.8 110.2h1.2v0.8h-1.2zM106 110.2h11.3v0.8h-11.3zM106.7 109h0.6v1.2h-0.6zM109.6 108.3h0.6v1.9h-0.6zM111.6 108.3h0.7v1.9h-0.7zM114.6 109.4h0.8v0.7h-0.8z" fill="#fff" opacity=".8"/></svg>
</div>
<svg style="position:absolute;left:1330.1px;top:468.6px" width="9.4" height="12" viewBox="0 0 9.4 12"><g fill="none" stroke="#444" stroke-width="1.25"><path transform="translate(0.0 0)" d="M0.5 0.7H7.1L2.6 11"/></g></svg>
<div style="position:absolute;left:203px;top:512px;width:162px;height:123px;overflow:hidden"><div style="position:absolute;left:0;top:0;width:162px;height:123px;box-sizing:border-box;border:1px solid #c8c8c8;background:#fff"></div><div style="position:absolute;left:2px;top:2px;width:158px;height:119px;background:radial-gradient(ellipse 62% 88% at 47% 49%, #62838f 0%, #58788a 18%, #475c74 45%, #363f61 75%, #2c3456 100%)"></div>
<svg style="position:absolute;left:2px;top:2px;" width="158" height="119" viewBox="0 0 158 119"><path d="M122.9 9.1h6v1.1h-6zM124 6.5h1.2v2.6h-1.2zM126.7 8.3h1.3v0.9h-1.3zM131.1 9.1h6.8v1.1h-6.8zM132.2 8.5h1.4v0.6h-1.4zM132.2 10.7h.9v.9h-.9zM135.5 8.2h1.2v1h-1.2zM141.1 9.1h7.3v1.1h-7.3zM142.1 7.7h0.9v1.4h-0.9zM145.6 8.5h1.3v0.6h-1.3zM150.8 9.1h2.5v1.1h-2.5zM152.1 8.3h1.2v0.8h-1.2zM14 21.4h17.8v0.8h-17.8zM14.2 19.6h0.6v1.8h-0.6zM16.2 20h0.9v1.4h-0.9zM19.7 20.6h1.1v0.7h-1.1zM23 20.6h1.1v0.8h-1.1zM25.7 20.6h1.1v0.7h-1.1zM29.3 19.6h1v1.7h-1zM33.9 21.4h15.7v0.8h-15.7zM34.1 20.9h0.6v0.5h-0.6zM37.3 19.8h0.9v1.6h-0.9zM40.8 20.7h0.7v0.6h-0.7zM43.1 19.8h1v1.5h-1zM45.6 20.1h0.7v1.3h-0.7zM48.4 20.7h1v0.6h-1zM51 21.4h8.5v0.8h-8.5zM52.1 19.7h0.9v1.6h-0.9zM54.7 20.6h0.8v0.7h-0.8zM57.3 19.8h0.7v1.6h-0.7zM60.7 21.4h12.7v0.8h-12.7zM62 20h1v1.4h-1zM65.6 20.9h0.8v0.5h-0.8zM68.8 20.5h0.9v0.8h-0.9zM70.7 20h0.7v1.3h-0.7zM75.3 21.4h8.2v0.8h-8.2zM76.4 20.8h0.6v0.5h-0.6zM79.9 19.5h1.1v1.8h-1.1zM82.7 20.2h0.8v1.2h-0.8zM85.3 21.4h8v0.8h-8zM86.1 20.3h1v1h-1zM89 20.8h0.9v0.5h-0.9zM89 18.5h.9v.9h-.9zM91.8 19.7h0.9v1.6h-0.9zM95.6 21.4h18.1v0.8h-18.1zM96.3 20.9h0.9v0.5h-0.9zM98.9 20.4h0.7v1h-0.7zM98.9 18.5h.9v.9h-.9zM101.9 20.2h0.8v1.2h-0.8zM104.7 20.7h0.7v0.6h-0.7zM107.7 20h1v1.4h-1zM110.9 20.1h0.7v1.3h-0.7zM110.9 18.5h.9v.9h-.9zM115.9 21.4h19.3v0.8h-19.3zM117.1 19.7h0.9v1.7h-0.9zM119.5 19.7h0.7v1.7h-0.7zM122.3 20.9h0.6v0.4h-0.6zM125.6 19.8h0.6v1.6h-0.6zM129.2 20.7h1v0.7h-1zM132.6 19.8h0.6v1.5h-0.6zM136.4 21.4h16.9v0.8h-16.9zM136.8 20.3h0.9v1.1h-0.9zM139.7 20.9h1v0.5h-1zM141.8 20.2h0.7v1.2h-0.7zM144.9 19.8h0.7v1.5h-0.7zM148.4 20h0.7v1.4h-0.7zM150.8 20.8h0.9v0.5h-0.9zM150.8 18.5h.9v.9h-.9zM95.7 32.2h19.5v0.8h-19.5zM95.8 30.6h0.6v1.5h-0.6zM95.8 33.5h.9v.9h-.9zM97.7 31.7h1v0.4h-1zM99.7 31.5h0.6v0.6h-0.6zM102.1 31.5h1v0.7h-1zM102.1 29.3h.9v.9h-.9zM105.1 31.5h0.9v0.6h-0.9zM105.1 29.3h.9v.9h-.9zM107.3 30.3h0.7v1.9h-0.7zM110.3 30.2h0.9v1.9h-0.9zM110.3 29.3h.9v.9h-.9zM113.4 30.7h0.9v1.4h-0.9zM116.5 32.2h13.2v0.8h-13.2zM117.3 30.4h1v1.8h-1zM119.8 30.9h0.8v1.3h-0.8zM119.8 33.5h.9v.9h-.9zM123.4 31.1h0.6v1.1h-0.6zM123.4 29.3h.9v.9h-.9zM125.4 30.4h0.6v1.8h-0.6zM128.9 30.6h0.8v1.6h-0.8zM131.8 32.2h8.1v0.8h-8.1zM132.2 31.1h0.9v1h-0.9zM135.1 31.4h1v0.8h-1zM135.1 29.3h.9v.9h-.9zM137.2 31.7h0.9v0.4h-0.9zM141.8 32.2h7.8v0.8h-7.8zM142.1 30.9h0.8v1.3h-0.8zM145.6 31h1v1.1h-1zM145.6 33.5h.9v.9h-.9zM148.3 31.7h0.7v0.5h-0.7zM151 32.2h2.3v0.8h-2.3zM151.5 31.3h0.6v0.9h-0.6zM55.6 43h18.4v0.8h-18.4zM56.5 41.6h0.8v1.4h-0.8zM59.2 42.3h0.7v0.6h-0.7zM61.2 42.3h0.9v0.7h-0.9zM63.9 41.6h0.8v1.4h-0.8zM65.8 41.9h1.1v1h-1.1zM68.3 41.6h1.1v1.3h-1.1zM70.9 41.3h1v1.6h-1zM75.6 43h10.3v0.8h-10.3zM76.8 42h1.1v1h-1.1zM80.1 42.4h0.8v0.6h-0.8zM80.1 44.3h.9v.9h-.9zM83.5 41.2h0.8v1.8h-0.8zM87.5 43h9.6v0.8h-9.6zM87.7 41.2h1v1.8h-1zM90.9 41.3h0.9v1.7h-0.9zM90.9 40.1h.9v.9h-.9zM93.9 41.2h0.8v1.7h-0.8zM98.5 43h8.4v0.8h-8.4zM99.6 41.1h0.6v1.9h-0.6zM102.3 42.5h0.7v0.5h-0.7zM105.4 42.4h0.8v0.6h-0.8zM109.3 43h12.8v0.8h-12.8zM109.6 41.7h0.9v1.3h-0.9zM112.5 42h0.7v1h-0.7zM115.9 41.5h0.9v1.4h-0.9zM118.2 41.7h1v1.3h-1zM120.1 41.8h1v1.2h-1zM43.6 54.2h11.8v0.8h-11.8zM44.4 52.9h1v1.3h-1zM47.8 52.7h0.8v1.5h-0.8zM50.3 53.7h0.8v0.5h-0.8zM50.3 55.5h.9v.9h-.9zM52.7 52.5h1.1v1.7h-1.1zM57 54.2h11.8v0.8h-11.8zM57.2 52.5h0.6v1.6h-0.6zM59.6 52.8h0.6v1.4h-0.6zM63 53.7h0.7v0.4h-0.7zM63 55.5h.9v.9h-.9zM66.3 52.7h0.7v1.4h-0.7zM70.6 54.2h8.3v0.8h-8.3zM71.5 53.7h0.6v0.5h-0.6zM75 52.4h0.7v1.8h-0.7zM75 55.5h.9v.9h-.9zM78 53.5h0.9v0.7h-0.9zM122.1 54.2h16.7v0.8h-16.7zM123.3 53.2h1v1h-1zM123.3 55.5h.9v.9h-.9zM126.4 53.1h1.1v1.1h-1.1zM129.1 52.7h0.9v1.5h-0.9zM131 53.4h0.7v0.7h-0.7zM134.5 52.8h1v1.4h-1zM136.6 53.4h0.9v0.8h-0.9zM140.8 54.2h10v0.8h-10zM141.3 53.5h0.8v0.7h-0.8zM143.4 52.3h0.6v1.8h-0.6zM145.9 52.3h0.7v1.8h-0.7zM145.9 55.5h.9v.9h-.9zM148.9 53.2h1v1h-1zM152.8 54.2h0.5v0.8h-0.5zM23.6 65.5h14.8v1.1h-14.8zM24.5 64.9h0.9v0.6h-0.9zM26.5 63.9h1.1v1.6h-1.1zM29.7 63.4h0.8v2.1h-0.8zM33.3 63.7h1.5v1.8h-1.5zM35.5 64.3h1v1.2h-1zM35.5 61.6h.9v.9h-.9zM40.9 65.5h17.2v1.1h-17.2zM42 64.9h1.4v0.6h-1.4zM44.4 65h1.4v0.6h-1.4zM44.4 61.6h.9v.9h-.9zM46.7 64.3h1.4v1.2h-1.4zM50.2 63.2h1.4v2.3h-1.4zM52.2 64.5h0.9v1h-0.9zM52.2 61.6h.9v.9h-.9zM54.3 64.3h0.8v1.2h-0.8zM60.1 65.5h12.6v1.1h-12.6zM61.4 64.9h1.3v0.6h-1.3zM63.3 63.1h1.4v2.4h-1.4zM63.3 61.6h.9v.9h-.9zM66.9 63.8h1.3v1.8h-1.3zM68.8 63.5h1.3v2h-1.3zM70.8 63.8h1v1.8h-1zM75.3 65.5h6.8v1.1h-6.8zM76.4 63.5h1.2v2.1h-1.2zM79.1 63.6h0.8v1.9h-0.8zM81.5 64.1h0.6v1.4h-0.6zM81.5 61.6h.9v.9h-.9zM83.8 65.5h8.8v1.1h-8.8zM84.7 64.9h1v0.6h-1zM87.8 64.2h0.9v1.3h-0.9zM91.2 64.8h1.1v0.7h-1.1zM94.6 65.5h17.3v1.1h-17.3zM95.5 63.3h1.5v2.2h-1.5zM98.5 64.3h1v1.2h-1zM101.8 63.7h1v1.8h-1zM104.6 62.9h1.3v2.6h-1.3zM107.1 62.9h1.1v2.6h-1.1zM109.7 63.9h0.9v1.6h-0.9zM114.8 65.5h7.4v1.1h-7.4zM115.1 63.6h1.1v1.9h-1.1zM117 64h1.4v1.5h-1.4zM119.5 63.9h1.1v1.6h-1.1zM119.5 67.1h.9v.9h-.9zM121.6 64.5h0.6v1h-0.6zM124.8 65.5h15.5v1.1h-15.5zM125.7 64.3h1v1.2h-1zM125.7 67.1h.9v.9h-.9zM129 64.2h1v1.3h-1zM131.7 64.7h1v0.9h-1zM131.7 61.6h.9v.9h-.9zM133.9 63.9h1v1.7h-1zM133.9 61.6h.9v.9h-.9zM137.3 64.8h1.1v0.7h-1.1zM139.3 64.4h0.9v1.2h-0.9zM142.5 65.5h10.8v1.1h-10.8zM143.4 64h0.9v1.5h-0.9zM146.9 64.5h1.4v1.1h-1.4zM149.6 64.9h1v0.6h-1zM151.9 63.2h1.4v2.3h-1.4zM9.2 76.2h13.7v0.8h-13.7zM9.5 74.4h0.8v1.8h-0.8zM12.7 75h0.8v1.2h-0.8zM15.4 74.9h0.7v1.3h-0.7zM15.4 73.3h.9v.9h-.9zM17.7 74.3h0.9v1.9h-0.9zM17.7 77.5h.9v.9h-.9zM19.9 74.9h0.8v1.3h-0.8zM24.2 76.2h17.1v0.8h-17.1zM25.7 74.6h1.1v1.5h-1.1zM28.6 74.7h1v1.4h-1zM31.9 75.2h1v0.9h-1zM35.5 75.3h0.9v0.9h-0.9zM38.7 74.7h0.6v1.5h-0.6zM38.7 73.3h.9v.9h-.9zM43.3 76.2h5.5v0.8h-5.5zM44.3 75.6h0.7v0.6h-0.7zM47.1 74.7h1.1v1.5h-1.1zM51 76.2h7.8v0.8h-7.8zM52.4 74.7h0.6v1.5h-0.6zM54.6 75.1h0.7v1.1h-0.7zM58.1 75.5h0.7v0.7h-0.7zM66.9 76.2h19.2v0.8h-19.2zM68 75.2h0.9v1h-0.9zM70.5 75h0.6v1.1h-0.6zM70.5 73.3h.9v.9h-.9zM73.7 75.3h1v0.9h-1zM76.8 75.3h0.6v0.8h-0.6zM79.2 75.4h0.8v0.7h-0.8zM82.6 74.7h0.8v1.5h-0.8zM87.4 76.2h9.5v0.8h-9.5zM88.4 74.3h0.9v1.8h-0.9zM91.9 74.5h0.7v1.6h-0.7zM93.9 74.6h0.7v1.6h-0.7zM99 76.2h13.5v0.8h-13.5zM99.4 75.7h0.9v0.5h-0.9zM99.4 77.5h.9v.9h-.9zM102.2 74.6h0.6v1.6h-0.6zM105 75.5h0.7v0.6h-0.7zM107.2 75.5h0.7v0.6h-0.7zM110.6 75.6h0.9v0.6h-0.9zM114 76.2h14.8v0.8h-14.8zM114 74.3h0.7v1.9h-0.7zM117.6 75.5h0.6v0.6h-0.6zM120 75.3h0.9v0.9h-0.9zM122.6 75.7h0.8v0.5h-0.8zM125.2 75.7h0.7v0.5h-0.7zM127.7 75.3h0.9v0.9h-0.9zM130.2 76.2h17.3v0.8h-17.3zM131.5 74.6h0.7v1.6h-0.7zM133.5 74.7h0.7v1.4h-0.7zM136.8 75h1v1.1h-1zM140.2 74.8h0.9v1.4h-0.9zM143.3 75.5h0.8v0.6h-0.8zM143.3 77.5h.9v.9h-.9zM145.4 74.7h0.8v1.4h-0.8zM149 76.2h5.1v0.8h-5.1zM149.8 75.5h1.1v0.7h-1.1zM153.2 75.3h0.9v0.9h-0.9zM9.2 87.1h7.3v0.8h-7.3zM9.3 86.5h1v0.5h-1zM9.3 88.4h.9v.9h-.9zM12 86.1h1v0.9h-1zM12 88.4h.9v.9h-.9zM15.1 85.2h0.7v1.9h-0.7zM18.1 87.1h17.7v0.8h-17.7zM19.6 86.3h0.8v0.7h-0.8zM19.6 84.2h.9v.9h-.9zM22.4 86.1h1.1v1h-1.1zM26 85.4h1v1.6h-1zM29.1 86.5h0.8v0.6h-0.8zM32.6 86.4h0.8v0.7h-0.8zM37.7 87.1h8.9v0.8h-8.9zM39 86h1v1.1h-1zM42.6 85.9h0.9v1.2h-0.9zM44.9 86.6h1v0.5h-1zM48.8 87.1h8v0.8h-8zM50.1 85.7h1.1v1.4h-1.1zM53.5 86.6h0.7v0.5h-0.7zM58.5 87.1h6.1v0.8h-6.1zM59.8 86.6h1.1v0.5h-1.1zM62.9 85.8h0.7v1.3h-0.7zM66.4 87.1h9.2v0.8h-9.2zM67.2 86.2h0.6v0.8h-0.6zM69.5 85.2h0.8v1.8h-0.8zM72.7 85.3h0.8v1.8h-0.8zM77.9 87.1h9.5v0.8h-9.5zM78 86.7h0.9v0.4h-0.9zM80.4 86h0.8v1h-0.8zM82.6 85.8h0.9v1.2h-0.9zM82.6 88.4h.9v.9h-.9zM86 86.3h0.8v0.8h-0.8zM89.1 87.1h13.7v0.8h-13.7zM89.7 85.9h0.6v1.2h-0.6zM92.4 86.2h1v0.9h-1zM95.6 86h0.6v1h-0.6zM98 86.4h1.1v0.7h-1.1zM100.7 85.4h0.9v1.6h-0.9zM104.7 87.1h7.9v0.8h-7.9zM105.9 85.8h0.7v1.3h-0.7zM109.4 85.9h1.1v1.1h-1.1zM111.4 86h0.8v1.1h-0.8zM115 87.1h7.4v0.8h-7.4zM115.5 86.6h0.6v0.4h-0.6zM117.5 86.3h0.8v0.7h-0.8zM119.8 86.7h1v0.4h-1zM124.7 87.1h18v0.8h-18zM126.1 85.4h0.9v1.7h-0.9zM128.2 85.7h0.8v1.4h-0.8zM130.7 86.5h1v0.5h-1zM132.6 85.9h0.6v1.2h-0.6zM134.8 85.2h0.7v1.9h-0.7zM137.1 85.3h0.6v1.8h-0.6zM139.4 85.5h0.8v1.5h-0.8zM141.8 86.5h0.8v0.6h-0.8zM141.8 88.4h.9v.9h-.9zM144.5 87.1h8.8v0.8h-8.8zM144.8 86.4h0.9v0.7h-0.9zM147.6 85.6h0.6v1.4h-0.6zM147.6 88.4h.9v.9h-.9zM149.6 85.5h1v1.6h-1zM149.6 84.2h.9v.9h-.9zM152 86.2h1.1v0.9h-1.1zM82 98.2h5.6v0.8h-5.6zM82.3 96.8h0.8v1.4h-0.8zM85.6 96.8h1.1v1.4h-1.1zM88.9 98.2h11v0.8h-11zM89.1 96.8h0.8v1.3h-0.8zM89.1 99.5h.9v.9h-.9zM91.2 97.1h0.9v1.1h-0.9zM93.9 96.8h1v1.4h-1zM96.5 97.5h1v0.7h-1zM96.5 99.5h.9v.9h-.9zM98.7 97.5h0.9v0.7h-0.9zM101.7 98.2h13.6v0.8h-13.6zM102.8 97.6h1v0.5h-1zM105.3 97.6h1v0.6h-1zM108.6 97h0.6v1.2h-0.6zM110.6 97.6h1v0.6h-1zM110.6 99.5h.9v.9h-.9zM113.2 97.7h1v0.5h-1zM117 98.2h19.6v0.8h-19.6zM117.4 97.3h1.1v0.9h-1.1zM119.9 96.7h1v1.4h-1zM121.8 97.2h0.9v1h-0.9zM124.5 97.1h0.8v1h-0.8zM126.4 96.4h1.1v1.8h-1.1zM126.4 99.5h.9v.9h-.9zM128.3 97.3h0.6v0.9h-0.6zM131.7 96.9h1.1v1.2h-1.1zM133.9 97.2h0.8v1h-0.8zM138.7 98.2h9.3v0.8h-9.3zM139.1 97.3h0.8v0.8h-0.8zM142.3 96.3h0.6v1.8h-0.6zM144.8 96.3h0.8v1.8h-0.8zM149.8 98.2h3.5v0.8h-3.5zM151 96.8h1.1v1.4h-1.1z" fill="#fff" opacity=".8"/></svg>
</div>
<svg style="position:absolute;left:346.7px;top:640.6px" width="17.8" height="12" viewBox="0 0 17.8 12"><g fill="none" stroke="#444" stroke-width="1.25"><path transform="translate(0.0 0)" d="M1.3 2.6L4.6 0.4V11"/><path transform="translate(8.4 0)" d="M3.8 5.4C2 5.4 1 4.4 1 2.9C1 1.4 2.2 0.4 3.8 0.4C5.4 0.4 6.6 1.4 6.6 2.9C6.6 4.4 5.6 5.4 3.8 5.4C1.9 5.4 0.7 6.5 0.7 8.1C0.7 9.8 2 10.9 3.8 10.9C5.6 10.9 6.9 9.8 6.9 8.1C6.9 6.5 5.7 5.4 3.8 5.4Z"/></g></svg>
<div style="position:absolute;left:398px;top:512px;width:162px;height:123px;overflow:hidden"><div style="position:absolute;left:0;top:0;width:162px;height:123px;box-sizing:border-box;border:1px solid #c8c8c8;background:#fff"></div><div style="position:absolute;left:2px;top:2px;width:158px;height:119px;background:radial-gradient(ellipse 62% 88% at 47% 49%, #62838f 0%, #58788a 18%, #475c74 45%, #363f61 75%, #2c3456 100%)"></div>
<svg style="position:absolute;left:2px;top:2px;" width="158" height="119" viewBox="0 0 158 119"><path d="M89.3 7.8h18v1.1h-18zM90.3 6.1h1.4v1.7h-1.4zM90.3 9.4h.9v.9h-.9zM92.6 6.3h1.4v1.6h-1.4zM95.9 7.1h1v0.7h-1zM99 6.2h1.4v1.6h-1.4zM101.5 6.2h1.1v1.6h-1.1zM103.9 6.9h1v0.9h-1zM110.1 7.8h7.2v1.1h-7.2zM110.7 5.4h1.5v2.4h-1.5zM114.3 7.1h1.5v0.7h-1.5zM43.6 14.2h15.3v0.8h-15.3zM45 12.5h0.9v1.6h-0.9zM45 11.3h.9v.9h-.9zM47.3 12.3h1v1.8h-1zM49.8 12.8h0.7v1.3h-0.7zM53.2 13.6h0.9v0.6h-0.9zM55.9 12.4h1v1.7h-1zM57.8 12.5h1v1.6h-1zM57.8 15.5h.9v.9h-.9zM61 14.2h18v0.8h-18zM61.8 12.4h0.6v1.8h-0.6zM65.1 12.6h0.7v1.6h-0.7zM67.8 12.6h0.8v1.5h-0.8zM70.9 12.7h0.8v1.5h-0.8zM73.3 13h0.7v1.2h-0.7zM75.9 13.6h0.7v0.5h-0.7zM78.4 13h0.7v1.2h-0.7zM80.4 14.2h6.3v0.8h-6.3zM81.7 12.6h1v1.6h-1zM84.3 13.5h0.6v0.7h-0.6zM88 14.2h11.6v0.8h-11.6zM88.1 13.4h0.9v0.7h-0.9zM91.6 13.3h0.7v0.9h-0.7zM91.6 15.5h.9v.9h-.9zM93.9 13.7h0.6v0.5h-0.6zM93.9 11.3h.9v.9h-.9zM96.7 13.1h1.1v1.1h-1.1zM98.7 13.5h0.9v0.6h-0.9zM101.1 14.2h10.2v0.8h-10.2zM101.7 13.1h0.7v1.1h-0.7zM101.7 11.3h.9v.9h-.9zM103.7 12.4h1.1v1.7h-1.1zM106.2 12.7h0.7v1.4h-0.7zM106.2 11.3h.9v.9h-.9zM108.1 13.3h1v0.9h-1zM110.4 13h0.8v1.1h-0.8zM113.6 14.2h11.7v0.8h-11.7zM115.1 12.7h0.6v1.5h-0.6zM118.1 13.1h0.7v1.1h-0.7zM120.4 13.1h0.6v1.1h-0.6zM123.9 12.9h0.8v1.3h-0.8zM127.2 14.2h9.3v0.8h-9.3zM127.5 12.8h1.1v1.3h-1.1zM130.3 13.3h0.9v0.8h-0.9zM130.3 15.5h.9v.9h-.9zM133 12.6h1.1v1.6h-1.1zM133 15.5h.9v.9h-.9zM135.2 13h0.9v1.1h-0.9zM137.8 14.2h12.3v0.8h-12.3zM139 13.7h0.8v0.4h-0.8zM141.6 13.5h0.6v0.7h-0.6zM144.4 12.9h0.9v1.2h-0.9zM147 13.2h1.1v1h-1.1zM147 15.5h.9v.9h-.9zM151.9 14.2h0.6v0.8h-0.6zM72.5 24.6h9.6v0.8h-9.6zM73 24.1h1.1v0.5h-1.1zM75 23.9h0.7v0.6h-0.7zM75 25.9h.9v.9h-.9zM77.7 22.9h1v1.7h-1zM81.3 23.7h0.7v0.9h-0.7zM83.8 24.6h6.9v0.8h-6.9zM84.6 22.7h1.1v1.9h-1.1zM87.9 23.4h0.8v1.1h-0.8zM92.6 24.6h12.5v0.8h-12.5zM93 23.4h0.7v1.2h-0.7zM95.1 23.5h0.6v1.1h-0.6zM97.2 22.9h0.6v1.7h-0.6zM99.6 22.7h0.7v1.9h-0.7zM99.6 21.7h.9v.9h-.9zM102.7 23.8h1v0.8h-1zM113.3 24.6h8.3v0.8h-8.3zM113.7 24h0.7v0.5h-0.7zM115.9 23.5h0.8v1h-0.8zM118.7 23.1h0.9v1.4h-0.9zM123 24.6h9.1v0.8h-9.1zM123 22.8h1.1v1.8h-1.1zM126.4 23.3h1.1v1.3h-1.1zM128.8 23.7h0.8v0.8h-0.8zM131.5 23.6h0.6v1h-0.6zM133.8 24.6h16.9v0.8h-16.9zM135.2 22.7h1v1.8h-1zM137.6 22.7h1v1.8h-1zM139.6 23.2h0.9v1.4h-0.9zM139.6 21.7h.9v.9h-.9zM142 23.5h0.7v1.1h-0.7zM142 21.7h.9v.9h-.9zM144.2 23.5h0.6v1.1h-0.6zM146.8 23.7h0.7v0.8h-0.7zM149.7 23.1h0.8v1.5h-0.8zM152.9 24.6h0.4v0.8h-0.4zM9.2 35h10.3v0.8h-10.3zM9.4 33.3h0.7v1.7h-0.7zM11.9 34.3h1v0.6h-1zM14.4 33.9h0.9v1.1h-0.9zM17.4 33.4h1.1v1.6h-1.1zM21.3 35h10.2v0.8h-10.2zM22.5 33.7h1v1.2h-1zM25.6 33.2h0.8v1.7h-0.8zM29 33.8h1v1.1h-1zM33.7 35h13.3v0.8h-13.3zM35.1 33.7h0.7v1.3h-0.7zM35.1 32.1h.9v.9h-.9zM38.6 34.2h0.7v0.8h-0.7zM41.7 33.7h0.6v1.3h-0.6zM44.7 34.1h1.1v0.9h-1.1zM48.3 35h9.6v0.8h-9.6zM49.4 33.5h1v1.4h-1zM51.4 33.3h0.6v1.7h-0.6zM53.8 33.8h0.6v1.2h-0.6zM55.9 34.1h0.8v0.9h-0.8zM55.9 32.1h.9v.9h-.9zM59.1 35h8v0.8h-8zM60.5 33.9h1.1v1h-1.1zM63.2 33.8h0.8v1.2h-0.8zM65.8 33.3h0.8v1.6h-0.8zM69.5 35h5.2v0.8h-5.2zM70.3 33.4h0.8v1.5h-0.8zM73.5 34.3h0.8v0.6h-0.8zM76.8 35h10.9v0.8h-10.9zM78 33.7h0.9v1.2h-0.9zM81.2 33.6h1.1v1.4h-1.1zM83.8 33.4h0.7v1.6h-0.7zM87.1 34.3h0.6v0.7h-0.6zM89.4 35h16.7v0.8h-16.7zM90.4 34h0.9v1h-0.9zM92.6 33.2h0.9v1.7h-0.9zM95.9 34.2h0.8v0.7h-0.8zM97.9 34h0.9v1h-0.9zM100.6 33.3h0.6v1.7h-0.6zM103 34.4h0.8v0.5h-0.8zM103 32.1h.9v.9h-.9zM107.5 35h11.7v0.8h-11.7zM107.7 33h0.7v1.9h-0.7zM110.6 33.5h0.6v1.4h-0.6zM113.1 34.4h0.8v0.5h-0.8zM115.7 33.5h0.7v1.5h-0.7zM121.3 35h5.9v0.8h-5.9zM122 33.8h0.8v1.2h-0.8zM124.9 34.4h0.7v0.6h-0.7zM128.9 35h19.5v0.8h-19.5zM129.9 33.6h1.1v1.4h-1.1zM133.1 33.8h1v1.1h-1zM135 33.1h0.6v1.8h-0.6zM137 33.4h0.8v1.5h-0.8zM137 32.1h.9v.9h-.9zM140.3 34.2h1.1v0.8h-1.1zM143.2 33.9h1v1.1h-1zM146 34.2h0.7v0.7h-0.7zM146 32.1h.9v.9h-.9zM149.9 35h3.4v0.8h-3.4zM150.2 34.3h1.1v0.6h-1.1zM152.2 33.2h1v1.7h-1zM76.5 46.2h7.1v0.8h-7.1zM76.5 45.6h0.8v0.5h-0.8zM79.8 45.7h0.6v0.5h-0.6zM79.8 47.5h.9v.9h-.9zM82.4 44.3h1v1.8h-1zM82.4 47.5h.9v.9h-.9zM85 46.2h8.4v0.8h-8.4zM85.5 45.4h0.7v0.8h-0.7zM88 44.9h0.9v1.3h-0.9zM90.3 45.7h0.9v0.4h-0.9zM92.6 45.1h0.8v1h-0.8zM94.6 46.2h13.2v0.8h-13.2zM95.7 44.4h1v1.7h-1zM95.7 47.5h.9v.9h-.9zM99.3 45.7h1v0.4h-1zM102.7 44.3h1v1.8h-1zM102.7 47.5h.9v.9h-.9zM105.7 45.6h0.8v0.6h-0.8zM105.7 43.3h.9v.9h-.9zM109 46.2h13.1v0.8h-13.1zM109.2 45.4h1v0.8h-1zM112.1 44.4h0.9v1.7h-0.9zM115.6 45.4h0.7v0.8h-0.7zM119 45.3h1.1v0.9h-1.1zM119 47.5h.9v.9h-.9zM121.3 44.4h0.6v1.7h-0.6zM124.3 46.2h6.9v0.8h-6.9zM125 44.9h0.9v1.3h-0.9zM127 44.7h1v1.5h-1zM129.3 44.5h0.8v1.6h-0.8zM133.3 46.2h7.2v0.8h-7.2zM134 45.7h0.6v0.4h-0.6zM136 44.8h0.6v1.3h-0.6zM137.9 44.7h0.7v1.4h-0.7zM14 58.2h17.7v0.8h-17.7zM14.4 56.3h0.7v1.9h-0.7zM14.4 59.5h.9v.9h-.9zM16.8 57.2h0.9v1h-0.9zM16.8 59.5h.9v.9h-.9zM20.2 56.6h1v1.6h-1zM22.2 56.7h1v1.4h-1zM24.8 57.5h1.1v0.7h-1.1zM28.1 57.4h0.9v0.8h-0.9zM30.6 57.4h0.6v0.8h-0.6zM33.2 58.2h9.8v0.8h-9.8zM33.7 57.6h0.9v0.6h-0.9zM33.7 55.3h.9v.9h-.9zM35.9 57.2h1.1v0.9h-1.1zM38.2 56.5h1.1v1.7h-1.1zM41.4 56.8h0.9v1.4h-0.9zM45 58.2h19.1v0.8h-19.1zM45.6 57.6h0.6v0.6h-0.6zM48.3 56.4h1.1v1.7h-1.1zM50.6 56.9h0.6v1.3h-0.6zM50.6 55.3h.9v.9h-.9zM52.6 57.3h0.8v0.9h-0.8zM55.7 56.6h1v1.6h-1zM58.9 56.6h1v1.6h-1zM61.7 56.5h0.7v1.7h-0.7zM65.9 58.2h6.7v0.8h-6.7zM66.6 57.5h0.6v0.7h-0.6zM69.1 56.3h1v1.9h-1zM71.8 56.8h0.9v1.4h-0.9zM74.2 58.2h7.8v0.8h-7.8zM74.5 56.6h1.1v1.6h-1.1zM76.7 57.5h0.7v0.7h-0.7zM80.1 57h0.8v1.2h-0.8zM83.6 58.2h11.6v0.8h-11.6zM83.7 57.3h0.9v0.9h-0.9zM86.1 57.6h0.9v0.5h-0.9zM86.1 55.3h.9v.9h-.9zM88 56.3h1v1.9h-1zM90.4 56.6h1v1.6h-1zM92.4 57.3h0.8v0.8h-0.8zM96.7 58.2h8.3v0.8h-8.3zM96.7 57.1h0.6v1h-0.6zM98.6 56.5h0.7v1.7h-0.7zM101.5 57.7h0.9v0.5h-0.9zM103.8 56.8h1v1.4h-1zM106.8 58.2h15v0.8h-15zM107.5 56.6h1v1.5h-1zM110.1 57.5h0.7v0.6h-0.7zM112.9 57.7h0.7v0.5h-0.7zM112.9 55.3h.9v.9h-.9zM115.8 57.5h1v0.7h-1zM115.8 59.5h.9v.9h-.9zM118.3 56.6h1v1.5h-1zM124.1 58.2h13.4v0.8h-13.4zM124.6 57.5h0.9v0.7h-0.9zM124.6 59.5h.9v.9h-.9zM127.6 57.4h0.7v0.7h-0.7zM130.1 57.7h0.6v0.5h-0.6zM132.7 56.6h0.9v1.6h-0.9zM132.7 59.5h.9v.9h-.9zM135.2 56.8h0.7v1.3h-0.7zM135.2 55.3h.9v.9h-.9zM139.1 58.2h14.2v0.8h-14.2zM139.8 56.3h0.7v1.9h-0.7zM139.8 59.5h.9v.9h-.9zM142.8 56.7h1v1.5h-1zM142.8 55.3h.9v.9h-.9zM145 57h0.7v1.1h-0.7zM145 55.3h.9v.9h-.9zM147.1 57.7h0.8v0.5h-0.8zM147.1 55.3h.9v.9h-.9zM149 57.6h1v0.5h-1zM151.5 56.5h0.6v1.6h-0.6zM22.8 69.5h7.2v0.8h-7.2zM23.5 68.5h0.6v0.9h-0.6zM26.8 68.2h0.8v1.3h-0.8zM31.9 69.5h9.8v0.8h-9.8zM33.1 68.3h0.7v1.2h-0.7zM36.4 68.3h0.7v1.2h-0.7zM39.4 68.8h1.1v0.7h-1.1zM43.5 69.5h16.4v0.8h-16.4zM43.8 68.8h0.8v0.7h-0.8zM43.8 70.8h.9v.9h-.9zM46.4 68.9h0.7v0.6h-0.7zM49.9 68.1h0.7v1.3h-0.7zM52.6 69.1h0.8v0.4h-0.8zM55.9 67.6h0.6v1.9h-0.6zM58.5 68.4h1v1.1h-1zM62.1 69.5h18v0.8h-18zM62.9 68.3h0.6v1.2h-0.6zM65.2 67.9h0.9v1.6h-0.9zM65.2 66.6h.9v.9h-.9zM68 67.7h1v1.7h-1zM70.6 68.3h0.8v1.2h-0.8zM73.9 67.7h1.1v1.8h-1.1zM73.9 66.6h.9v.9h-.9zM77.4 68.5h0.7v0.9h-0.7zM81.5 69.5h6.2v0.8h-6.2zM81.8 68.9h0.8v0.5h-0.8zM85.1 68.4h0.8v1.1h-0.8zM85.1 66.6h.9v.9h-.9zM116.5 69.5h8.3v0.8h-8.3zM117.5 67.7h0.8v1.8h-0.8zM120.7 68.1h0.8v1.3h-0.8zM120.7 70.8h.9v.9h-.9zM123.1 68h0.7v1.5h-0.7zM126.4 69.5h6.9v0.8h-6.9zM127.4 68h0.9v1.4h-0.9zM129.9 68.3h0.8v1.2h-0.8zM132.4 68.7h0.8v0.8h-0.8zM134.7 69.5h17.3v0.8h-17.3zM136.2 68.5h1v0.9h-1zM139.1 68.7h0.6v0.8h-0.6zM141.6 67.8h1v1.7h-1zM144.7 68h1v1.5h-1zM148.2 67.7h0.7v1.7h-0.7zM150.2 68.8h1v0.7h-1zM6.8 80.2h6v0.8h-6zM7 78.4h1v1.7h-1zM10 79.7h1.1v0.5h-1.1zM14.6 80.2h12.2v0.8h-12.2zM15.3 78.7h0.7v1.5h-0.7zM17.8 79.2h1.1v1h-1.1zM20.9 78.6h0.8v1.6h-0.8zM23.7 78.5h0.7v1.7h-0.7zM29.1 80.2h15.6v0.8h-15.6zM30.5 79.1h0.8v1h-0.8zM32.7 79.3h0.7v0.9h-0.7zM35.6 78.6h1v1.5h-1zM38.4 78.8h0.9v1.3h-0.9zM40.9 79.3h0.7v0.9h-0.7zM43.5 78.9h0.9v1.2h-0.9zM47.1 80.2h9.7v0.8h-9.7zM48 78.9h0.8v1.3h-0.8zM50.3 78.3h0.6v1.9h-0.6zM53 79.2h0.7v0.9h-0.7zM55.5 78.9h0.8v1.3h-0.8zM58.7 80.2h6.6v0.8h-6.6zM58.7 78.8h0.6v1.4h-0.6zM61.1 78.6h0.7v1.5h-0.7zM61.1 81.5h.9v.9h-.9zM63.3 79.3h0.9v0.9h-0.9zM67.6 80.2h13.4v0.8h-13.4zM67.7 78.7h0.8v1.4h-0.8zM69.9 79.2h0.7v1h-0.7zM73.4 79.2h0.8v1h-0.8zM76.6 79.2h0.7v0.9h-0.7zM79 79h0.9v1.2h-0.9zM82.6 80.2h8.2v0.8h-8.2zM83.2 78.4h1v1.8h-1zM83.2 81.5h.9v.9h-.9zM85.4 79.4h1v0.8h-1zM87.6 78.6h1v1.6h-1zM90.1 78.5h0.7v1.6h-0.7zM92.5 80.2h9.6v0.8h-9.6zM93.7 78.6h0.9v1.6h-0.9zM96.1 78.9h0.6v1.3h-0.6zM99.6 79.1h0.8v1.1h-0.8zM104.4 80.2h8.2v0.8h-8.2zM105.1 78.7h1v1.5h-1zM107.2 78.7h0.6v1.4h-0.6zM109.1 78.4h1v1.7h-1zM114.7 80.2h15.1v0.8h-15.1zM115.1 79.6h0.6v0.5h-0.6zM115.1 81.5h.9v.9h-.9zM118.2 78.7h1.1v1.5h-1.1zM120.7 78.5h1v1.7h-1zM122.6 78.3h0.8v1.9h-0.8zM124.8 78.9h1v1.2h-1zM127.9 79.6h1.1v0.5h-1.1zM127.9 81.5h.9v.9h-.9zM131.7 80.2h14.3v0.8h-14.3zM132 78.6h1v1.6h-1zM135.5 79.1h1v1h-1zM138 79.4h0.6v0.7h-0.6zM138 77.3h.9v.9h-.9zM140.2 79h0.8v1.2h-0.8zM140.2 77.3h.9v.9h-.9zM143.7 78.8h0.9v1.4h-0.9zM148.3 80.2h5v0.8h-5zM149.1 78.4h0.8v1.8h-0.8zM151.1 78.7h0.6v1.5h-0.6zM6 90.2h18.4v0.8h-18.4zM7.2 89h0.6v1.2h-0.6zM10.6 88.7h0.6v1.5h-0.6zM14.1 88.9h0.6v1.3h-0.6zM17.1 89.8h0.8v0.4h-0.8zM17.1 91.5h.9v.9h-.9zM19.1 88.7h1v1.4h-1zM21.3 89.3h0.7v0.8h-0.7zM23.6 88.4h0.6v1.8h-0.6zM26.1 90.2h6.2v0.8h-6.2zM26.7 89.3h1v0.8h-1zM29.7 88.7h0.8v1.4h-0.8zM29.7 91.5h.9v.9h-.9zM33.7 90.2h8.6v0.8h-8.6zM35.1 89.5h1.1v0.7h-1.1zM35.1 87.3h.9v.9h-.9zM37.1 89.7h1v0.4h-1zM39.4 89.2h0.8v0.9h-0.8zM44.1 90.2h14.8v0.8h-14.8zM44.5 89.6h0.9v0.6h-0.9zM46.4 89.1h1v1.1h-1zM49.4 88.3h0.7v1.9h-0.7zM51.6 88.4h0.9v1.8h-0.9zM54.6 89.2h1v0.9h-1zM57.4 88.8h1v1.4h-1zM60.7 90.2h14.4v0.8h-14.4zM60.9 89h0.6v1.2h-0.6zM64.1 89.2h0.8v1h-0.8zM67 88.3h1v1.9h-1zM69.5 89.7h0.9v0.5h-0.9zM72.5 88.8h1v1.4h-1zM72.5 91.5h.9v.9h-.9zM76.7 90.2h10.1v0.8h-10.1zM77.1 88.5h0.8v1.7h-0.8zM79.2 88.9h0.9v1.2h-0.9zM79.2 87.3h.9v.9h-.9zM81.7 89.4h0.9v0.8h-0.9zM81.7 91.5h.9v.9h-.9zM85.3 89.2h1.1v1h-1.1zM85.3 91.5h.9v.9h-.9zM89.1 90.2h11.6v0.8h-11.6zM89.7 88.8h0.7v1.3h-0.7zM93.2 88.8h0.8v1.4h-0.8zM96.4 88.6h0.7v1.5h-0.7zM99 89.7h0.8v0.5h-0.8zM99 87.3h.9v.9h-.9zM102.3 90.2h9.9v0.8h-9.9zM102.7 89.4h0.7v0.8h-0.7zM105.3 88.9h0.7v1.2h-0.7zM108.3 89.5h0.9v0.7h-0.9zM108.3 91.5h.9v.9h-.9zM114.3 90.2h8.2v0.8h-8.2zM115 88.4h1v1.8h-1zM117.9 89.5h0.9v0.7h-0.9zM120 89.7h0.9v0.5h-0.9zM124.5 90.2h6.6v0.8h-6.6zM125.8 88.4h0.7v1.7h-0.7zM129 89.1h1.1v1.1h-1.1zM129 91.5h.9v.9h-.9zM132.4 90.2h17.4v0.8h-17.4zM133.5 89.4h0.9v0.7h-0.9zM136.4 89.1h0.9v1h-0.9zM138.8 89.2h0.7v1h-0.7zM142.1 89.4h0.9v0.7h-0.9zM144.3 89.7h0.6v0.5h-0.6zM146.4 89.3h0.8v0.8h-0.8zM151.6 90.2h1.7v0.8h-1.7zM152.6 88.8h0.7v1.4h-0.7zM11.6 101.5h13.6v0.8h-13.6zM11.7 100.6h0.8v0.9h-0.8zM11.7 102.8h.9v.9h-.9zM13.7 99.8h0.6v1.7h-0.6zM16 100.3h0.8v1.2h-0.8zM18.7 100.6h1.1v0.8h-1.1zM20.8 99.9h0.7v1.5h-0.7zM24 99.7h0.9v1.8h-0.9zM27.4 101.5h14.1v0.8h-14.1zM28.7 99.9h0.8v1.5h-0.8zM32 99.7h0.8v1.8h-0.8zM35.3 100h0.7v1.5h-0.7zM37.7 100h0.8v1.4h-0.8zM39.8 99.8h0.7v1.6h-0.7zM42.7 101.5h11.1v0.8h-11.1zM43 99.8h0.9v1.7h-0.9zM45.7 101h1v0.4h-1zM47.6 100.2h1v1.3h-1zM51.1 99.7h1.1v1.8h-1.1zM51.1 98.6h.9v.9h-.9zM56.1 101.5h14.7v0.8h-14.7zM57.5 100.7h0.8v0.8h-0.8zM57.5 98.6h.9v.9h-.9zM60.2 99.6h1v1.9h-1zM62.6 100.7h0.8v0.7h-0.8zM65.3 100.2h0.8v1.3h-0.8zM67.9 100.3h0.8v1.2h-0.8zM72.7 101.5h16.4v0.8h-16.4zM73.2 100.8h0.7v0.6h-0.7zM73.2 98.6h.9v.9h-.9zM76.4 99.7h0.9v1.8h-0.9zM78.5 99.9h0.9v1.6h-0.9zM78.5 98.6h.9v.9h-.9zM82.1 99.9h1.1v1.5h-1.1zM85.3 99.6h1.1v1.8h-1.1zM85.3 98.6h.9v.9h-.9zM87.8 100.2h0.9v1.2h-0.9zM87.8 98.6h.9v.9h-.9zM91.2 101.5h19.5v0.8h-19.5zM91.9 99.6h1.1v1.8h-1.1zM94.1 100.5h0.9v1h-0.9zM97.5 100.9h0.9v0.6h-0.9zM97.5 102.8h.9v.9h-.9zM99.9 101h0.8v0.5h-0.8zM99.9 98.6h.9v.9h-.9zM102.9 100.4h1v1h-1zM106.5 100.9h0.6v0.6h-0.6zM109.2 99.8h0.6v1.7h-0.6zM112.4 101.5h17.3v0.8h-17.3zM113.4 100.7h0.8v0.8h-0.8zM116.3 100.9h0.8v0.6h-0.8zM116.3 102.8h.9v.9h-.9zM118.9 100.7h0.7v0.8h-0.7zM122.3 100.9h0.6v0.5h-0.6zM122.3 98.6h.9v.9h-.9zM124.9 100.4h1.1v1.1h-1.1zM127.3 100.9h0.9v0.6h-0.9zM131.9 101.5h10.5v0.8h-10.5zM133.3 99.6h0.7v1.9h-0.7zM136.2 100.5h0.9v1h-0.9zM138.9 100.2h0.8v1.3h-0.8zM138.9 102.8h.9v.9h-.9zM143.7 101.5h9.6v0.8h-9.6zM143.7 100.2h0.7v1.3h-0.7zM146.6 99.9h1v1.5h-1zM148.7 100.7h0.8v0.7h-0.8zM151.3 100.7h0.9v0.7h-0.9zM140.5 107.2h11.8v0.8h-11.8zM141.8 106.6h0.7v0.6h-0.7zM141.8 104.3h.9v.9h-.9zM145.1 106.1h0.9v1.1h-0.9zM145.1 108.5h.9v.9h-.9zM147.8 106.2h1v1h-1zM151.3 106.3h0.8v0.9h-0.8z" fill="#fff" opacity=".8"/></svg>
</div>
<svg style="position:absolute;left:541.7px;top:640.6px" width="17.8" height="12" viewBox="0 0 17.8 12"><g fill="none" stroke="#444" stroke-width="1.25"><path transform="translate(0.0 0)" d="M1.3 2.6L4.6 0.4V11"/><path transform="translate(8.4 0)" d="M0.5 0.7H7.1L2.6 11"/></g></svg>
<div style="position:absolute;left:593px;top:512px;width:162px;height:123px;overflow:hidden"><div style="position:absolute;left:0;top:0;width:162px;height:123px;box-sizing:border-box;border:1px solid #c8c8c8;background:#fff"></div><div style="position:absolute;left:2px;top:2px;width:158px;height:119px;background:radial-gradient(ellipse 62% 88% at 47% 49%, #62838f 0%, #58788a 18%, #475c74 45%, #363f61 75%, #2c3456 100%)"></div>
<svg style="position:absolute;left:2px;top:2px;" width="158" height="119" viewBox="0 0 158 119"><path d="M107 8.2h5.6v1.1h-5.6zM108.4 5.6h1.2v2.6h-1.2zM108.4 4.3h.9v.9h-.9zM110.6 7h0.8v1.2h-0.8zM114.8 8.2h14.5v1.1h-14.5zM115.6 5.6h1v2.6h-1zM115.6 9.8h.9v.9h-.9zM118.8 6.1h1.4v2.1h-1.4zM122.1 7.5h1.3v0.8h-1.3zM125 6.4h1.1v1.8h-1.1zM127.7 6.4h1.4v1.8h-1.4zM49.2 14.2h7.6v0.8h-7.6zM50.3 13.8h1.1v0.4h-1.1zM50.3 15.5h.9v.9h-.9zM52.4 12.6h0.8v1.5h-0.8zM55.2 12.3h0.9v1.8h-0.9zM58.3 14.2h6.4v0.8h-6.4zM59.4 12.5h1v1.6h-1zM62.4 13.4h0.7v0.7h-0.7zM67 14.2h13.3v0.8h-13.3zM68.1 13.2h0.8v1h-0.8zM71.2 12.3h0.6v1.8h-0.6zM74.7 12.4h1v1.8h-1zM77.1 12.7h0.6v1.5h-0.6zM79 13.1h0.7v1.1h-0.7zM82.3 14.2h18.2v0.8h-18.2zM83.7 13.3h0.7v0.9h-0.7zM86 12.5h1v1.7h-1zM89 13.3h0.7v0.8h-0.7zM91.1 12.3h0.6v1.9h-0.6zM94.3 12.4h0.6v1.8h-0.6zM97.1 13.6h0.9v0.6h-0.9zM102.5 14.2h17.5v0.8h-17.5zM103.9 12.4h0.9v1.7h-0.9zM107.3 12.5h0.8v1.7h-0.8zM110.8 13.5h0.7v0.7h-0.7zM113.6 13.1h0.8v1h-0.8zM116.2 12.9h1v1.3h-1zM118.3 13.4h0.8v0.7h-0.8zM122.1 14.2h8.4v0.8h-8.4zM122.6 12.5h0.7v1.7h-0.7zM125.4 13.7h0.8v0.4h-0.8zM127.5 13.2h0.8v1h-0.8zM132.2 14.2h18.4v0.8h-18.4zM132.6 12.6h0.6v1.5h-0.6zM135.8 12.5h0.6v1.7h-0.6zM138 12.3h0.7v1.9h-0.7zM140.2 12.3h0.9v1.9h-0.9zM143.6 12.6h1v1.6h-1zM145.9 12.8h1v1.4h-1zM149 13.7h0.8v0.5h-0.8zM107.7 24.6h14v0.8h-14zM107.7 23.7h0.7v0.9h-0.7zM110.1 23.9h0.7v0.7h-0.7zM113.5 23.8h1.1v0.7h-1.1zM116.9 22.8h1v1.7h-1zM119.1 23.2h0.8v1.4h-0.8zM123.7 24.6h7v0.8h-7zM123.8 22.9h1v1.7h-1zM123.8 25.9h.9v.9h-.9zM126.1 24.2h0.9v0.4h-0.9zM128.2 23.3h0.8v1.3h-0.8zM132.8 24.6h6.6v0.8h-6.6zM134.2 23h0.6v1.6h-0.6zM134.2 25.9h.9v.9h-.9zM137.5 23h0.8v1.6h-0.8zM141.2 24.6h5.6v0.8h-5.6zM141.9 23.6h0.8v1h-0.8zM145.2 23.6h0.6v1h-0.6zM148.6 24.6h7.1v0.8h-7.1zM149.9 22.7h0.8v1.9h-0.8zM149.9 21.7h.9v.9h-.9zM152.4 24h1v0.6h-1zM154.8 23.2h0.9v1.4h-0.9zM14.8 35.8h14.7v0.8h-14.7zM15.5 34.6h0.8v1.2h-0.8zM18.3 34.8h0.7v1h-0.7zM21.6 35.1h0.8v0.6h-0.8zM25 35.3h0.8v0.4h-0.8zM28.2 35h1v0.8h-1zM30.8 35.8h5.7v0.8h-5.7zM31.3 34.7h1.1v1h-1.1zM34.1 34.3h0.9v1.4h-0.9zM38.5 35.8h8.3v0.8h-8.3zM38.8 35h0.8v0.8h-0.8zM41.7 35.3h0.7v0.5h-0.7zM45 34.2h0.8v1.6h-0.8zM49 35.8h15v0.8h-15zM50.2 35.2h0.8v0.6h-0.8zM53.6 34.2h0.6v1.6h-0.6zM55.8 35.2h0.9v0.6h-0.9zM59.3 35.3h1.1v0.5h-1.1zM61.8 35.1h1v0.6h-1zM61.8 37.1h.9v.9h-.9zM65.3 35.8h10.2v0.8h-10.2zM66.8 34.1h0.9v1.7h-0.9zM69.8 34.2h1v1.6h-1zM73.3 34.8h1.1v0.9h-1.1zM77.5 35.8h5.7v0.8h-5.7zM78.9 33.9h1v1.9h-1zM81.7 35.3h0.8v0.5h-0.8zM84.6 35.8h10.3v0.8h-10.3zM85.2 34.9h0.7v0.9h-0.7zM85.2 37.1h.9v.9h-.9zM88.2 34.6h0.9v1.1h-0.9zM91.6 34.2h0.9v1.6h-0.9zM96.7 35.8h11.3v0.8h-11.3zM97.5 35.3h0.8v0.5h-0.8zM97.5 37.1h.9v.9h-.9zM101 34.2h0.6v1.6h-0.6zM104 34.5h0.8v1.2h-0.8zM106.3 34.7h0.6v1h-0.6zM106.3 37.1h.9v.9h-.9zM109.2 35.8h8.6v0.8h-8.6zM109.5 34.8h0.9v0.9h-0.9zM112.6 34.1h0.9v1.6h-0.9zM115.5 35.3h0.8v0.4h-0.8zM115.5 32.9h.9v.9h-.9zM119.4 35.8h11.5v0.8h-11.5zM119.6 33.9h0.7v1.9h-0.7zM119.6 32.9h.9v.9h-.9zM122.2 34.9h0.7v0.9h-0.7zM124.8 35.3h1.1v0.4h-1.1zM124.8 32.9h.9v.9h-.9zM128.2 33.9h0.9v1.9h-0.9zM130.1 35.1h0.8v0.7h-0.8zM132.4 35.8h6.1v0.8h-6.1zM133.6 34.4h0.8v1.4h-0.8zM136.4 35h0.9v0.8h-0.9zM136.4 37.1h.9v.9h-.9zM140.9 35.8h7.5v0.8h-7.5zM141.6 34.5h0.9v1.3h-0.9zM144 34.2h0.8v1.5h-0.8zM146.8 34.5h1.1v1.3h-1.1zM150 35.8h5.7v0.8h-5.7zM151.2 35.1h0.7v0.7h-0.7zM151.2 32.9h.9v.9h-.9zM154.4 34.3h0.7v1.5h-0.7zM13.2 46.2h5.6v0.8h-5.6zM13.6 44.3h0.7v1.9h-0.7zM16.6 45.1h0.9v1.1h-0.9zM20.9 46.2h9.5v0.8h-9.5zM21.3 45.1h1v1.1h-1zM23.2 45.1h1.1v1.1h-1.1zM26 45.3h0.9v0.8h-0.9zM28.5 45.5h0.8v0.7h-0.8zM32 46.2h8.3v0.8h-8.3zM32.7 44.6h0.9v1.6h-0.9zM35 45h1v1.2h-1zM36.9 44.3h0.8v1.9h-0.8zM41.9 46.2h7.7v0.8h-7.7zM43.3 44.6h0.9v1.6h-0.9zM43.3 47.5h.9v.9h-.9zM45.7 45.1h0.6v1h-0.6zM48.4 45.5h0.9v0.7h-0.9zM51.7 46.2h9.6v0.8h-9.6zM52.1 45h1.1v1.1h-1.1zM54.1 44.5h0.6v1.7h-0.6zM57.7 44.9h0.6v1.3h-0.6zM63.3 46.2h6.3v0.8h-6.3zM64 45h0.7v1.1h-0.7zM64 43.3h.9v.9h-.9zM66.4 45.2h1.1v1h-1.1zM70.8 46.2h12v0.8h-12zM71 45.7h0.7v0.5h-0.7zM74 45.3h1v0.8h-1zM77.3 44.7h0.6v1.4h-0.6zM80.9 44.4h0.9v1.7h-0.9zM80.9 43.3h.9v.9h-.9zM84.6 46.2h15.9v0.8h-15.9zM86 45.4h0.6v0.7h-0.6zM89.4 45.6h0.8v0.5h-0.8zM92.4 45h1.1v1.2h-1.1zM92.4 47.5h.9v.9h-.9zM94.9 45.5h1.1v0.6h-1.1zM97.2 44.4h1.1v1.7h-1.1zM102 46.2h15.4v0.8h-15.4zM103.5 45.4h1v0.8h-1zM106.9 45.4h0.8v0.8h-0.8zM106.9 43.3h.9v.9h-.9zM109.6 44.4h0.7v1.7h-0.7zM112 45h0.9v1.1h-0.9zM115.5 45.2h0.8v0.9h-0.8zM119.5 46.2h9v0.8h-9zM120.8 44.6h0.9v1.6h-0.9zM123.9 45.7h1v0.5h-1zM127.1 44.9h0.8v1.3h-0.8zM129.9 46.2h8.9v0.8h-8.9zM130.8 45.5h1.1v0.7h-1.1zM133.3 45.5h0.7v0.7h-0.7zM135.4 45.3h1.1v0.9h-1.1zM141.1 46.2h14.6v0.8h-14.6zM142.6 44.8h0.8v1.4h-0.8zM145.6 44.3h1.1v1.9h-1.1zM148.2 44.7h1.1v1.4h-1.1zM151.6 44.4h0.9v1.7h-0.9zM154.1 44.5h0.8v1.7h-0.8zM9.2 56.6h14.5v0.8h-14.5zM9.9 55.8h1v0.8h-1zM12.9 54.9h0.6v1.6h-0.6zM16.3 55.9h0.6v0.6h-0.6zM18.6 55.3h1.1v1.2h-1.1zM21.4 56.1h1v0.5h-1zM25.9 56.6h7.3v0.8h-7.3zM27.1 54.9h1v1.6h-1zM27.1 57.9h.9v.9h-.9zM29.5 55.2h1v1.4h-1zM34.9 56.6h13.7v0.8h-13.7zM35.3 55.9h1v0.7h-1zM37.8 55.7h0.7v0.8h-0.7zM39.9 55.5h0.8v1.1h-0.8zM42.5 56.1h1.1v0.5h-1.1zM45.6 54.7h0.8v1.8h-0.8zM51 56.6h13v0.8h-13zM51.9 56h0.7v0.6h-0.7zM55 55.6h1v1h-1zM57.3 55.4h0.6v1.2h-0.6zM60.2 54.9h0.7v1.7h-0.7zM63.2 54.9h0.6v1.7h-0.6zM66.1 56.6h15.2v0.8h-15.2zM66.4 54.7h1.1v1.9h-1.1zM68.7 55h0.7v1.6h-0.7zM71.1 54.9h0.8v1.7h-0.8zM73.5 55.2h0.6v1.3h-0.6zM76 55.3h1v1.3h-1zM79.5 55.9h1v0.6h-1zM82.9 56.6h10.6v0.8h-10.6zM83.6 55.4h1v1.1h-1zM86.2 55h0.9v1.6h-0.9zM86.2 57.9h.9v.9h-.9zM89.5 54.8h0.9v1.7h-0.9zM95.9 56.6h13.7v0.8h-13.7zM95.9 55.4h0.7v1.2h-0.7zM98.9 55.8h0.6v0.7h-0.6zM101.9 55.4h1v1.2h-1zM105.5 55.6h0.8v0.9h-0.8zM107.7 54.7h1v1.8h-1zM111.4 56.6h12.8v0.8h-12.8zM111.5 55.8h0.9v0.8h-0.9zM113.6 55.7h0.8v0.9h-0.8zM115.9 55.9h0.7v0.7h-0.7zM115.9 57.9h.9v.9h-.9zM118.3 56.1h1.1v0.5h-1.1zM121 55.7h0.9v0.9h-0.9zM126.4 56.6h8.5v0.8h-8.5zM127.2 55.6h1.1v1h-1.1zM129.2 55.8h1.1v0.7h-1.1zM132.3 55.4h1v1.1h-1zM136.9 56.6h16.9v0.8h-16.9zM138.3 55.2h1v1.4h-1zM140.6 54.8h0.6v1.8h-0.6zM142.9 55.3h0.7v1.2h-0.7zM145 54.9h1.1v1.7h-1.1zM148.2 55.2h0.7v1.3h-0.7zM150.3 55.7h0.6v0.9h-0.6zM155.6 56.6h0.1v0.8h-0.1zM22 67.9h12.3v0.8h-12.3zM22.5 66h0.6v1.9h-0.6zM24.8 66.7h0.8v1.2h-0.8zM24.8 65h.9v.9h-.9zM27.8 66.1h0.9v1.7h-0.9zM30.5 67.1h0.6v0.8h-0.6zM33.1 66.3h0.8v1.6h-0.8zM35.9 67.9h7.6v0.8h-7.6zM37.1 67.2h0.9v0.7h-0.9zM40.2 66.7h0.7v1.2h-0.7zM45 67.9h13.2v0.8h-13.2zM45.7 67.3h0.6v0.5h-0.6zM48.8 66.9h0.9v0.9h-0.9zM52 66.3h0.9v1.6h-0.9zM54.6 66.9h0.6v1h-0.6zM60.2 67.9h11.5v0.8h-11.5zM60.9 66.5h0.6v1.3h-0.6zM64.3 67.3h0.6v0.6h-0.6zM67.2 66.9h0.8v1h-0.8zM70.8 66h0.7v1.9h-0.7zM74 67.9h14.2v0.8h-14.2zM74.8 67.3h1v0.5h-1zM77.1 67h0.6v0.8h-0.6zM79.4 67.2h1v0.7h-1zM82.1 67.1h1.1v0.8h-1.1zM85.2 66.5h0.8v1.4h-0.8zM89.7 67.9h1.2v0.8h-1.2zM89.8 66.8h1.1v1.1h-1.1zM108.5 67.9h6.4v0.8h-6.4zM109.7 67h0.7v0.9h-0.7zM113 66.7h0.9v1.1h-0.9zM121.3 67.9h5.4v1.1h-5.4zM122.3 66.9h1.4v1.1h-1.4zM125.4 65.9h1.3v2h-1.3zM129.7 67.9h8.8v1.1h-8.8zM130.8 66.6h1.3v1.3h-1.3zM133.7 67.2h0.9v0.7h-0.9zM133.7 64h.9v.9h-.9zM135.7 65.6h1.5v2.4h-1.5zM141.1 67.9h13v1.1h-13zM141.2 65.3h0.8v2.6h-0.8zM141.2 64h.9v.9h-.9zM144.3 66.7h1.3v1.2h-1.3zM147.1 66.3h1.4v1.6h-1.4zM150.3 66.1h1.5v1.8h-1.5zM150.3 64h.9v.9h-.9zM152.7 67.3h0.8v0.6h-0.8zM37.2 80.2h7.3v0.8h-7.3zM37.5 78.4h0.9v1.8h-0.9zM40.4 79.1h0.8v1.1h-0.8zM40.4 81.5h.9v.9h-.9zM46.4 80.2h15.9v0.8h-15.9zM47.8 79.6h0.6v0.6h-0.6zM50 79.5h0.8v0.7h-0.8zM52.9 78.7h0.8v1.5h-0.8zM56.3 79.6h0.9v0.6h-0.9zM59.6 78.9h0.8v1.2h-0.8zM59.6 81.5h.9v.9h-.9zM63.6 80.2h6v0.8h-6zM64.8 79h0.8v1.2h-0.8zM67.2 78.4h0.7v1.8h-0.7zM72 80.2h18.3v0.8h-18.3zM72.3 78.3h0.6v1.8h-0.6zM75 79.4h0.9v0.7h-0.9zM77.8 78.6h0.8v1.5h-0.8zM81.2 79.5h0.7v0.7h-0.7zM81.2 81.5h.9v.9h-.9zM83.7 79.6h0.7v0.5h-0.7zM83.7 77.3h.9v.9h-.9zM86.4 79.4h1.1v0.8h-1.1zM88.9 78.9h0.6v1.2h-0.6zM88.9 81.5h.9v.9h-.9zM91.6 80.2h10.5v0.8h-10.5zM91.9 79.4h0.7v0.7h-0.7zM95.4 79.4h0.9v0.8h-0.9zM98.9 78.4h0.8v1.8h-0.8zM104.4 80.2h12.8v0.8h-12.8zM104.5 79.6h1v0.5h-1zM107.1 78.4h1.1v1.7h-1.1zM110.3 78.6h0.9v1.6h-0.9zM112.3 79.3h0.7v0.9h-0.7zM114.8 79.2h0.7v1h-0.7zM114.8 77.3h.9v.9h-.9zM119.2 80.2h9.2v0.8h-9.2zM120.5 78.4h0.8v1.7h-0.8zM123.6 78.4h1v1.8h-1zM125.8 79.7h1.1v0.5h-1.1zM130.5 80.2h9.4v0.8h-9.4zM131.6 79.7h0.8v0.4h-0.8zM131.6 81.5h.9v.9h-.9zM134.9 79.3h1v0.8h-1zM137 79.3h1v0.9h-1zM141.3 80.2h7.5v0.8h-7.5zM141.8 79h0.9v1.1h-0.9zM144.9 78.9h0.9v1.2h-0.9zM146.8 79.7h0.9v0.5h-0.9zM150.3 80.2h5.4v0.8h-5.4zM150.6 78.8h1v1.4h-1zM150.6 77.3h.9v.9h-.9zM153.2 78.7h1v1.4h-1zM30.8 91.9h11.8v0.8h-11.8zM32.1 91.2h1v0.7h-1zM35.1 91.2h0.8v0.7h-0.8zM38.5 91.2h0.8v0.7h-0.8zM41.3 90.4h0.6v1.5h-0.6zM44.4 91.9h14.7v0.8h-14.7zM45.5 90.4h0.7v1.5h-0.7zM47.5 91.2h0.9v0.7h-0.9zM50 90.4h0.8v1.4h-0.8zM52.5 90.8h0.6v1.1h-0.6zM54.6 90.6h1.1v1.3h-1.1zM57.9 91.2h1v0.7h-1zM57.9 93.2h.9v.9h-.9zM60.6 91.9h15.2v0.8h-15.2zM62.1 91.1h0.8v0.7h-0.8zM65.2 91.4h1.1v0.4h-1.1zM67.4 90.2h1v1.7h-1zM70.8 90.8h0.8v1.1h-0.8zM73.5 91.1h0.9v0.8h-0.9zM78 91.9h16.9v0.8h-16.9zM78.1 90.6h0.8v1.2h-0.8zM78.1 93.2h.9v.9h-.9zM80.5 91.4h1v0.4h-1zM82.7 90.1h0.7v1.7h-0.7zM85.7 90.5h0.6v1.4h-0.6zM89 90.9h0.7v1h-0.7zM91 90.4h1v1.5h-1zM93.4 90.4h1.1v1.4h-1.1zM97.2 91.9h13.1v0.8h-13.1zM98.1 90.6h0.7v1.3h-0.7zM100.9 90.3h0.9v1.6h-0.9zM104.4 91.3h0.7v0.5h-0.7zM108 90.8h0.8v1.1h-0.8zM112.6 91.9h6.1v0.8h-6.1zM113.4 90h0.9v1.8h-0.9zM115.7 90.2h0.7v1.6h-0.7zM120 91.9h15.9v0.8h-15.9zM121.1 90.4h0.6v1.4h-0.6zM123.9 90.1h0.6v1.8h-0.6zM126.3 90.5h0.8v1.4h-0.8zM129.1 90.6h0.6v1.2h-0.6zM131.4 91h0.8v0.8h-0.8zM133.9 90.4h0.7v1.4h-0.7zM137.5 91.9h15.9v0.8h-15.9zM138.5 91h0.7v0.9h-0.7zM141 90.2h1.1v1.6h-1.1zM141 89h.9v.9h-.9zM144.1 91.1h0.9v0.8h-0.9zM147 90.1h0.8v1.7h-0.8zM149.9 90.9h0.9v0.9h-0.9zM152.1 90.5h0.6v1.3h-0.6zM155.4 91.9h0.3v0.8h-0.3zM4.4 103.1h12.8v0.8h-12.8zM5.1 102.2h0.8v0.9h-0.8zM7.6 102.5h0.7v0.6h-0.7zM10.3 101.2h0.7v1.8h-0.7zM12.9 102.2h1v0.8h-1zM15.2 102h0.8v1.1h-0.8zM15.2 104.4h.9v.9h-.9zM18.9 103.1h10.4v0.8h-10.4zM19.1 102.4h0.7v0.6h-0.7zM19.1 104.4h.9v.9h-.9zM21.9 101.7h1v1.4h-1zM25.2 101.5h0.6v1.5h-0.6zM27.4 101.3h1v1.7h-1zM27.4 104.4h.9v.9h-.9zM30.7 103.1h14.4v0.8h-14.4zM31.4 101.2h1v1.8h-1zM33.7 101.9h0.8v1.2h-0.8zM36 101.3h0.9v1.7h-0.9zM39.5 102.1h1v0.9h-1zM42.9 101.2h0.8v1.9h-0.8zM46.7 103.1h11.8v0.8h-11.8zM48.1 101.5h0.7v1.6h-0.7zM50.2 102.1h0.9v1h-0.9zM52.1 101.8h0.9v1.3h-0.9zM54.3 102.6h0.6v0.5h-0.6zM56.2 102.3h0.8v0.7h-0.8zM59.9 103.1h12.7v0.8h-12.7zM60.5 102.4h1.1v0.7h-1.1zM64 102.3h0.6v0.8h-0.6zM67.5 102.1h0.7v0.9h-0.7zM70.3 101.8h1v1.3h-1zM74.5 103.1h16.1v0.8h-16.1zM74.5 101.9h1.1v1.1h-1.1zM77.6 101.9h1.1v1.2h-1.1zM77.6 104.4h.9v.9h-.9zM79.9 102.4h1v0.7h-1zM82.2 102.2h0.7v0.8h-0.7zM85.3 102.3h1v0.8h-1zM88 102.1h0.8v1h-0.8zM88 104.4h.9v.9h-.9zM92.9 103.1h9.3v0.8h-9.3zM93.4 101.2h0.7v1.9h-0.7zM93.4 104.4h.9v.9h-.9zM96.8 102.1h0.9v1h-0.9zM98.9 102.3h1v0.7h-1zM104.3 103.1h13.6v0.8h-13.6zM105.3 102.4h0.7v0.7h-0.7zM108.7 102.3h1v0.7h-1zM111.8 102.5h0.6v0.6h-0.6zM114.1 102.6h0.9v0.4h-0.9zM120 103.1h14v0.8h-14zM120.5 101.3h0.7v1.8h-0.7zM122.6 101.8h0.9v1.3h-0.9zM125.1 102.6h0.9v0.5h-0.9zM125.1 104.4h.9v.9h-.9zM128.3 101.7h1v1.3h-1zM131.5 102.2h1.1v0.8h-1.1zM135.6 103.1h17.7v0.8h-17.7zM136.5 101.8h0.9v1.2h-0.9zM140.1 102.4h1.1v0.7h-1.1zM142.7 101.5h1v1.5h-1zM145.2 101.9h0.8v1.2h-0.8zM147.6 102.6h1.1v0.4h-1.1zM151 101.7h0.6v1.4h-0.6zM154.7 103.1h1v0.8h-1zM62 109.5h7.3v0.8h-7.3zM62.8 108h1v1.4h-1zM65 109h0.9v0.5h-0.9zM68.6 108.7h0.6v0.8h-0.6zM70.8 109.5h9.1v0.8h-9.1zM71 107.8h0.9v1.7h-0.9zM73.6 108.7h0.6v0.8h-0.6zM76.8 108.6h0.8v0.9h-0.8zM79.1 108h0.8v1.5h-0.8zM81.5 109.5h19.7v0.8h-19.7zM81.7 108.8h0.9v0.7h-0.9zM84.4 107.8h0.6v1.7h-0.6zM87.3 108.7h0.8v0.8h-0.8zM90.3 108.1h0.6v1.4h-0.6zM93.8 108.6h1v0.9h-1zM97.2 107.6h1v1.9h-1zM99.7 108.8h1.1v0.7h-1.1zM103.5 109.5h10v0.8h-10zM103.6 108.3h1.1v1.1h-1.1zM106.9 108.1h0.8v1.4h-0.8zM109.2 108.5h1.1v1h-1.1zM112.2 108h0.7v1.5h-0.7zM114.8 109.5h19.6v0.8h-19.6zM115 109h0.6v0.5h-0.6zM118.2 108.7h1.1v0.8h-1.1zM120.3 107.9h0.7v1.6h-0.7zM122.3 107.8h0.8v1.6h-0.8zM124.3 108.3h0.8v1.2h-0.8zM124.3 106.6h.9v.9h-.9zM127 107.6h0.6v1.9h-0.6zM129.4 107.8h1v1.6h-1zM132.4 107.6h0.8v1.9h-0.8zM136 109.5h18.9v0.8h-18.9zM136.2 107.6h1v1.8h-1zM139.6 109h1v0.5h-1zM142.8 107.7h1v1.8h-1zM146.3 107.6h0.8v1.8h-0.8zM148.8 108.9h1.1v0.6h-1.1zM152.4 108.9h0.8v0.6h-0.8z" fill="#fff" opacity=".8"/></svg>
</div>
<svg style="position:absolute;left:736.7px;top:640.6px" width="17.8" height="12" viewBox="0 0 17.8 12"><g fill="none" stroke="#444" stroke-width="1.25"><path transform="translate(0.0 0)" d="M1.3 2.6L4.6 0.4V11"/><path transform="translate(8.4 0)" d="M6.3 0.8C5.7 0.5 5 0.4 4.3 0.4C2 0.4 0.8 2.6 0.8 6C0.8 9.2 1.9 10.9 3.8 10.9C5.6 10.9 6.9 9.5 6.9 7.5C6.9 5.5 5.7 4.3 4 4.3C2.5 4.3 1.3 5.3 0.9 6.5"/></g></svg>
<div style="position:absolute;left:788px;top:512px;width:162px;height:123px;overflow:hidden"><div style="position:absolute;left:0;top:0;width:162px;height:123px;box-sizing:border-box;border:1px solid #c8c8c8;background:#fff"></div><div style="position:absolute;left:2px;top:2px;width:158px;height:119px;background:radial-gradient(ellipse 62% 88% at 47% 49%, #62838f 0%, #58788a 18%, #475c74 45%, #363f61 75%, #2c3456 100%)"></div>
<svg style="position:absolute;left:2px;top:2px;" width="158" height="119" viewBox="0 0 158 119"><path d="M136.5 9.1h9v1.1h-9zM136.5 6.7h1.2v2.4h-1.2zM139.8 8.4h1v0.8h-1zM143.1 7.3h1.1v1.8h-1.1zM147.7 9.1h1.6v1.1h-1.6zM148.5 8.3h0.8v0.8h-0.8zM14.8 15.5h5v0.8h-5zM16.3 13.8h0.9v1.7h-0.9zM19 13.6h0.9v1.9h-0.9zM21.8 15.5h18.9v0.8h-18.9zM22.2 14.3h0.9v1.2h-0.9zM25.1 14.2h1.1v1.3h-1.1zM27.7 14.2h0.6v1.2h-0.6zM27.7 16.8h.9v.9h-.9zM29.6 13.7h1v1.7h-1zM31.9 14.1h0.6v1.3h-0.6zM34.7 14h0.6v1.4h-0.6zM37.6 13.5h0.6v1.9h-0.6zM43.1 15.5h8.5v0.8h-8.5zM43.6 13.7h1v1.8h-1zM43.6 12.6h.9v.9h-.9zM46.5 14.6h1v0.9h-1zM46.5 12.6h.9v.9h-.9zM49.6 14.5h0.6v1h-0.6zM54 15.5h19.5v0.8h-19.5zM54 13.7h0.9v1.7h-0.9zM56 14h0.9v1.5h-0.9zM58.8 14.9h1.1v0.5h-1.1zM62 13.6h0.7v1.9h-0.7zM65.5 13.7h0.9v1.8h-0.9zM65.5 12.6h.9v.9h-.9zM68.2 14.2h0.9v1.2h-0.9zM70.5 14.6h0.7v0.9h-0.7zM72.7 14.7h0.8v0.7h-0.8zM72.7 12.6h.9v.9h-.9zM75.1 15.5h13.3v0.8h-13.3zM76.1 13.7h1.1v1.7h-1.1zM76.1 16.8h.9v.9h-.9zM79.4 14.7h0.9v0.7h-0.9zM81.5 14.2h1.1v1.2h-1.1zM84.5 13.9h0.8v1.6h-0.8zM84.5 12.6h.9v.9h-.9zM87.6 15h0.9v0.4h-0.9zM89.9 15.5h13v0.8h-13zM90.5 14.1h0.6v1.4h-0.6zM93.3 13.9h0.9v1.6h-0.9zM93.3 16.8h.9v.9h-.9zM96.8 14.5h0.9v1h-0.9zM100.2 14.5h0.7v0.9h-0.7zM104.3 15.5h14.2v0.8h-14.2zM105.5 14.8h0.9v0.7h-0.9zM107.8 13.8h0.6v1.7h-0.6zM109.8 13.7h0.7v1.8h-0.7zM112.8 14h1v1.4h-1zM115.5 14.2h1v1.3h-1zM120.4 15.5h6.4v0.8h-6.4zM121.2 14.5h0.9v1h-0.9zM123.2 14h0.7v1.5h-0.7zM123.2 16.8h.9v.9h-.9zM125.1 13.6h0.8v1.8h-0.8zM125.1 12.6h.9v.9h-.9zM128.6 15.5h11.5v0.8h-11.5zM128.7 14.2h0.8v1.2h-0.8zM130.8 15.1h0.9v0.4h-0.9zM130.8 16.8h.9v.9h-.9zM133.5 14.5h1v1h-1zM135.7 14.8h1v0.6h-1zM138.6 14.5h0.7v0.9h-0.7zM141.8 15.5h10v0.8h-10zM142.3 13.8h1.1v1.7h-1.1zM145.5 14.5h1v1h-1zM149.1 14.7h0.6v0.8h-0.6zM137.3 25.4h12.8v0.8h-12.8zM137.6 24h1v1.4h-1zM140.2 23.9h0.6v1.5h-0.6zM142.3 23.8h0.9v1.6h-0.9zM142.3 26.7h.9v.9h-.9zM145.8 24.2h1v1.1h-1zM148.7 24.3h0.9v1.1h-0.9zM11.6 36.6h16.5v0.8h-16.5zM13 35.1h0.9v1.5h-0.9zM15.4 35.7h1v0.8h-1zM18.3 35.4h0.9v1.2h-0.9zM20.9 36.1h0.9v0.5h-0.9zM23.4 35.1h1v1.5h-1zM25.6 35.5h0.9v1.1h-0.9zM29.4 36.6h7.9v0.8h-7.9zM30.6 35.9h0.9v0.6h-0.9zM33.7 35.5h0.7v1h-0.7zM39.5 36.6h13v0.8h-13zM40.6 34.8h1v1.8h-1zM43.8 36h0.9v0.6h-0.9zM46.5 36h0.7v0.5h-0.7zM49.8 34.7h1.1v1.9h-1.1zM54.2 36.6h6.8v0.8h-6.8zM54.7 35.1h0.9v1.4h-0.9zM54.7 33.7h.9v.9h-.9zM56.9 35.1h1.1v1.4h-1.1zM59.7 34.8h1v1.8h-1zM63.2 36.6h9.9v0.8h-9.9zM63.3 34.9h0.9v1.6h-0.9zM63.3 37.9h.9v.9h-.9zM66.8 35.5h0.8v1.1h-0.8zM66.8 37.9h.9v.9h-.9zM68.9 34.9h1v1.6h-1zM71.7 35.6h1v0.9h-1zM74.6 36.6h16.6v0.8h-16.6zM75.6 35h0.6v1.6h-0.6zM78.3 36.1h0.9v0.4h-0.9zM81.1 35h0.6v1.6h-0.6zM84.2 35.6h0.6v1h-0.6zM86.9 34.6h0.8v1.9h-0.8zM89.4 35.9h0.8v0.6h-0.8zM92.7 36.6h15.9v0.8h-15.9zM94 35.1h0.7v1.4h-0.7zM94 37.9h.9v.9h-.9zM97.1 35.6h1.1v1h-1.1zM97.1 33.7h.9v.9h-.9zM100.1 34.9h0.7v1.7h-0.7zM102.4 36.1h1.1v0.4h-1.1zM105.7 36.2h1.1v0.4h-1.1zM110.1 36.6h8.5v0.8h-8.5zM110.8 35.5h0.7v1h-0.7zM112.8 36.1h0.6v0.4h-0.6zM116.1 35.1h0.9v1.4h-0.9zM116.1 37.9h.9v.9h-.9zM121 36.6h18.4v0.8h-18.4zM122.3 35.6h0.9v0.9h-0.9zM125.3 35.3h0.9v1.2h-0.9zM125.3 37.9h.9v.9h-.9zM127.6 35.7h0.9v0.8h-0.9zM130.1 35.4h0.9v1.2h-0.9zM132.6 35.3h0.9v1.3h-0.9zM135.6 36h0.8v0.6h-0.8zM138.7 34.8h0.7v1.8h-0.7zM140.9 36.6h11.6v0.8h-11.6zM141.4 35.7h0.7v0.9h-0.7zM145 35.7h0.8v0.9h-0.8zM145 37.9h.9v.9h-.9zM148.3 35.8h1v0.8h-1zM151.1 35.1h0.9v1.4h-0.9zM123.7 47h10.9v0.8h-10.9zM124.3 45.9h1v1.1h-1zM124.3 48.3h.9v.9h-.9zM126.7 45.5h0.6v1.5h-0.6zM129.2 45.2h0.7v1.7h-0.7zM132.6 46.1h0.9v0.9h-0.9zM136.4 47h16.1v0.8h-16.1zM137.8 45.1h0.7v1.9h-0.7zM140.7 45.6h0.6v1.3h-0.6zM144.2 45.7h0.7v1.2h-0.7zM147.6 45.9h0.6v1h-0.6zM150.5 46.3h0.8v0.6h-0.8zM62 57.1h7.8v0.8h-7.8zM62.7 56.4h0.9v0.7h-0.9zM66 56.4h0.9v0.7h-0.9zM68.2 56.5h0.9v0.6h-0.9zM71.8 57.1h6.1v0.8h-6.1zM73.3 55.2h0.7v1.8h-0.7zM76.5 56.5h0.9v0.5h-0.9zM79.3 57.1h12.4v0.8h-12.4zM79.5 56.5h1v0.6h-1zM81.7 55.2h0.6v1.9h-0.6zM84 56.3h0.9v0.8h-0.9zM84 58.4h.9v.9h-.9zM87.3 55.4h1.1v1.6h-1.1zM89.4 56.2h0.6v0.8h-0.6zM93.8 57.1h16.5v0.8h-16.5zM94.9 55.2h0.7v1.9h-0.7zM97.6 55.7h0.8v1.3h-0.8zM100 55.6h0.6v1.4h-0.6zM102.1 56h1v1h-1zM104.9 56.3h0.6v0.7h-0.6zM108.3 56h1.1v1h-1.1zM112.5 57.1h7.7v0.8h-7.7zM113.6 56.2h0.8v0.8h-0.8zM113.6 54.2h.9v.9h-.9zM117 56.2h0.8v0.8h-0.8zM122.1 57.1h13.8v0.8h-13.8zM123.3 56h1.1v1.1h-1.1zM126.8 56.6h1v0.4h-1zM130.2 56.4h0.6v0.6h-0.6zM132.8 56.2h1v0.8h-1zM135.1 55.8h0.8v1.3h-0.8zM135.1 58.4h.9v.9h-.9zM137.8 57.1h7.8v0.8h-7.8zM139.2 56.1h0.9v1h-0.9zM141.8 55.2h0.8v1.9h-0.8zM144.1 56h0.7v1h-0.7zM147 57.1h5.5v0.8h-5.5zM148.3 55.6h1.1v1.4h-1.1zM151.8 55.5h0.7v1.6h-0.7zM19.6 68.2h7.7v0.8h-7.7zM19.6 66.8h0.6v1.4h-0.6zM23 66.2h0.6v1.9h-0.6zM25 66.7h0.6v1.5h-0.6zM25 65.3h.9v.9h-.9zM28.7 68.2h18.1v0.8h-18.1zM30 66.7h1v1.5h-1zM32.3 67.5h0.6v0.7h-0.6zM32.3 69.5h.9v.9h-.9zM34.7 66.9h0.6v1.2h-0.6zM37.4 67.3h0.6v0.9h-0.6zM40.8 66.6h1v1.5h-1zM42.9 66.6h0.6v1.6h-0.6zM45.5 67.5h0.6v0.7h-0.6zM48.5 68.2h17.2v0.8h-17.2zM49.5 66.3h0.7v1.9h-0.7zM52 67.5h0.7v0.6h-0.7zM54.5 67.3h1v0.8h-1zM58 66.9h0.9v1.2h-0.9zM61.5 67.3h1v0.9h-1zM64.7 66.6h0.7v1.6h-0.7zM67.1 68.2h10.7v0.8h-10.7zM68.6 67.2h0.6v0.9h-0.6zM71.3 66.8h0.6v1.3h-0.6zM73.9 66.9h0.8v1.3h-0.8zM79.2 68.2h5.8v0.8h-5.8zM79.7 67.6h0.6v0.6h-0.6zM83.1 67.8h0.7v0.4h-0.7zM87.4 68.2h6.2v0.8h-6.2zM88 67h0.7v1.2h-0.7zM91.1 66.7h1v1.4h-1zM94.9 68.2h5.2v0.8h-5.2zM95.9 66.5h1v1.6h-1zM98.5 67.7h0.8v0.5h-0.8zM98.5 65.3h.9v.9h-.9zM102.3 68.2h13.8v0.8h-13.8zM103.6 66.5h1v1.7h-1zM105.8 66.6h0.9v1.5h-0.9zM107.9 67h1.1v1.2h-1.1zM111.4 66.6h0.6v1.6h-0.6zM114.7 66.7h0.8v1.5h-0.8zM117.7 68.2h10.3v0.8h-10.3zM118.4 66.9h0.6v1.3h-0.6zM121.4 66.9h0.8v1.3h-0.8zM123.9 66.2h0.7v1.9h-0.7zM126.3 66.8h0.7v1.3h-0.7zM129.7 68.2h11.8v0.8h-11.8zM130.6 66.6h0.6v1.6h-0.6zM132.9 67.1h1.1v1.1h-1.1zM136 66.3h0.8v1.8h-0.8zM138.2 66.7h0.7v1.5h-0.7zM140.5 67h0.8v1.2h-0.8zM143.6 68.2h8.9v0.8h-8.9zM144.3 67h0.7v1.2h-0.7zM146.3 67.5h0.7v0.6h-0.7zM149.2 66.7h0.6v1.5h-0.6zM65.3 80.7h7.6v1.1h-7.6zM66.1 79.2h1.4v1.5h-1.4zM69 79.2h1.1v1.5h-1.1zM71.1 79.2h1.4v1.6h-1.4zM75.9 80.7h16.6v1.1h-16.6zM77 79.8h1.5v0.9h-1.5zM77 76.8h.9v.9h-.9zM78.9 78.7h1.3v2h-1.3zM81.7 80h0.8v0.7h-0.8zM84.9 79.4h1.4v1.3h-1.4zM87.6 78.7h1.3v2h-1.3zM89.7 78.7h1.4v2h-1.4zM46 87.9h8.7v0.8h-8.7zM47.5 86h0.7v1.9h-0.7zM50.7 86.7h0.7v1.1h-0.7zM52.8 86.2h0.9v1.6h-0.9zM57 87.9h14.7v0.8h-14.7zM57.9 87.3h0.6v0.6h-0.6zM60 86.5h0.7v1.4h-0.7zM63 87.4h1v0.5h-1zM65.2 86.9h0.9v1h-0.9zM67.8 86.2h1.1v1.6h-1.1zM70.8 86.2h0.6v1.6h-0.6zM73.4 87.9h17.7v0.8h-17.7zM73.9 86.2h0.7v1.7h-0.7zM76.9 87.3h0.6v0.6h-0.6zM79.5 86.5h1.1v1.4h-1.1zM81.6 86.4h0.6v1.5h-0.6zM81.6 89.2h.9v.9h-.9zM83.7 86.1h1v1.8h-1zM86.6 86.5h0.6v1.4h-0.6zM90 87.4h1v0.4h-1zM90 89.2h.9v.9h-.9zM8.4 93.5h6.1v0.8h-6.1zM8.5 92.4h1.1v1h-1.1zM8.5 90.6h.9v.9h-.9zM11.1 92.6h0.8v0.9h-0.8zM13.7 91.6h0.6v1.9h-0.6zM16.3 93.5h15.4v0.8h-15.4zM17.1 91.6h0.6v1.9h-0.6zM20.4 92.1h1.1v1.4h-1.1zM20.4 94.8h.9v.9h-.9zM23.3 91.9h0.6v1.5h-0.6zM26.6 92h0.8v1.4h-0.8zM30.1 92.7h0.7v0.7h-0.7zM33.4 93.5h19.9v0.8h-19.9zM34.8 92.2h0.8v1.3h-0.8zM34.8 94.8h.9v.9h-.9zM36.7 92.5h0.8v1h-0.8zM36.7 94.8h.9v.9h-.9zM39 91.7h1v1.7h-1zM41.1 91.6h1.1v1.8h-1.1zM44.2 92h0.7v1.4h-0.7zM46.1 92.6h0.7v0.9h-0.7zM46.1 90.6h.9v.9h-.9zM49.2 92.4h0.7v1.1h-0.7zM52.2 92h1v1.4h-1zM54.5 93.5h16v0.8h-16zM55.6 93h0.8v0.4h-0.8zM55.6 94.8h.9v.9h-.9zM58.9 92.1h0.7v1.3h-0.7zM62.4 91.7h0.8v1.7h-0.8zM62.4 94.8h.9v.9h-.9zM64.9 92.7h1v0.8h-1zM68.3 92.6h1.1v0.8h-1.1zM71.8 93.5h16.8v0.8h-16.8zM73.1 92.9h1v0.6h-1zM73.1 94.8h.9v.9h-.9zM75.5 92.6h0.6v0.8h-0.6zM79.1 92.3h1.1v1.2h-1.1zM81.2 92.6h1v0.8h-1zM83.7 91.7h0.9v1.7h-0.9zM87.1 92.8h0.7v0.6h-0.7zM90.6 93.5h17.2v0.8h-17.2zM91.7 92.8h1v0.7h-1zM93.7 92.6h0.8v0.9h-0.8zM95.8 92.1h0.8v1.4h-0.8zM98.5 91.8h1v1.7h-1zM101.6 92.9h1.1v0.5h-1.1zM105 92.9h0.7v0.5h-0.7zM107.2 92.7h0.6v0.8h-0.6zM109.4 93.5h17.5v0.8h-17.5zM110.7 92.2h1v1.3h-1zM113.7 92.1h0.6v1.4h-0.6zM116 92.3h1v1.2h-1zM118.1 91.6h1v1.9h-1zM120.6 93.1h0.7v0.4h-0.7zM123.8 92.8h0.9v0.6h-0.9zM123.8 94.8h.9v.9h-.9zM129.3 93.5h5.4v0.8h-5.4zM130.1 91.6h0.6v1.9h-0.6zM133.3 91.8h0.9v1.7h-0.9zM136.7 93.5h15.8v0.8h-15.8zM137.7 92.7h0.7v0.7h-0.7zM140.7 91.9h0.7v1.6h-0.7zM142.8 91.9h0.6v1.6h-0.6zM142.8 94.8h.9v.9h-.9zM145.5 91.8h1.1v1.6h-1.1zM147.9 92.9h0.6v0.6h-0.6zM151.2 92h1v1.5h-1zM8.4 103.9h13v0.8h-13zM8.8 102.2h0.7v1.6h-0.7zM8.8 105.2h.9v.9h-.9zM12 103.3h1.1v0.6h-1.1zM14.5 102h0.9v1.9h-0.9zM16.8 102.1h0.9v1.8h-0.9zM19.3 103h0.7v0.9h-0.7zM23.3 103.9h16.2v0.8h-16.2zM23.4 102.5h1v1.3h-1zM23.4 105.2h.9v.9h-.9zM26.9 102.7h0.6v1.1h-0.6zM29.5 102.2h1.1v1.7h-1.1zM29.5 105.2h.9v.9h-.9zM31.9 102.7h0.7v1.1h-0.7zM34.4 102.7h0.8v1.1h-0.8zM37.2 102.9h1v1h-1zM40.8 103.9h6.4v0.8h-6.4zM41.9 102.1h0.6v1.8h-0.6zM45 102.4h0.9v1.5h-0.9zM49.1 103.9h10.7v0.8h-10.7zM49.4 103h1v0.9h-1zM52 103.1h1.1v0.8h-1.1zM52 105.2h.9v.9h-.9zM54.5 102.8h1v1h-1zM54.5 105.2h.9v.9h-.9zM57.6 103.4h0.7v0.5h-0.7zM61.2 103.9h14.8v0.8h-14.8zM61.3 103.2h0.7v0.6h-0.7zM61.3 105.2h.9v.9h-.9zM64.5 102.6h1v1.3h-1zM67.4 103.4h1.1v0.4h-1.1zM70.4 102.2h0.8v1.7h-0.8zM73.6 102.2h1.1v1.6h-1.1zM77.9 103.9h13.9v0.8h-13.9zM78.9 102.2h0.9v1.7h-0.9zM82.1 102.3h1v1.6h-1zM82.1 105.2h.9v.9h-.9zM84.7 102.2h0.8v1.7h-0.8zM86.6 102.4h0.6v1.5h-0.6zM89.3 103.2h0.8v0.7h-0.8zM93.4 103.9h15v0.8h-15zM94.3 102.6h0.7v1.3h-0.7zM97.8 102.7h0.7v1.1h-0.7zM99.9 102.6h1.1v1.3h-1.1zM101.8 102.2h0.7v1.7h-0.7zM101.8 105.2h.9v.9h-.9zM104.2 102.7h0.6v1.2h-0.6zM106.8 103.4h0.9v0.4h-0.9zM109.8 103.9h6.7v0.8h-6.7zM110.3 102.9h0.6v1h-0.6zM113.5 103h0.9v0.8h-0.9zM118 103.9h19.3v0.8h-19.3zM119.1 102.5h0.9v1.4h-0.9zM121 102.1h0.8v1.8h-0.8zM123.6 102.4h1v1.5h-1zM126.1 102h0.6v1.9h-0.6zM129.6 102.4h0.9v1.5h-0.9zM131.6 102.3h0.8v1.5h-0.8zM131.6 105.2h.9v.9h-.9zM135.2 103.3h0.8v0.5h-0.8zM139 103.9h13.5v0.8h-13.5zM139.4 102.4h0.8v1.5h-0.8zM142.7 103.1h1.1v0.7h-1.1zM145.2 103.2h0.7v0.6h-0.7zM145.2 105.2h.9v.9h-.9zM147.5 102.9h0.9v1h-0.9zM150.6 102h1.1v1.9h-1.1zM126 115.1h13.9v0.8h-13.9zM126.6 113.2h0.6v1.9h-0.6zM128.9 113.6h1v1.4h-1zM132.1 113.4h0.6v1.7h-0.6zM135.7 113.4h0.9v1.7h-0.9zM137.8 113.8h0.7v1.3h-0.7zM141.4 115.1h8v0.8h-8zM142.7 113.8h1.1v1.2h-1.1zM146.1 114h1.1v1h-1.1zM148.6 114.1h0.6v0.9h-0.6zM151.6 115.1h1.7v0.8h-1.7zM152.1 114.1h0.8v1h-0.8z" fill="#fff" opacity=".8"/></svg>
</div>
<svg style="position:absolute;left:931.7px;top:640.6px" width="17.8" height="12" viewBox="0 0 17.8 12"><g fill="none" stroke="#444" stroke-width="1.25"><path transform="translate(0.0 0)" d="M1.3 2.6L4.6 0.4V11"/><path transform="translate(8.4 0)" d="M6.5 0.7H1.6L1.2 5.2C1.9 5 2.6 4.9 3.3 4.9C5.5 4.9 7 6 7 7.9C7 9.8 5.5 10.9 3.3 10.9C2.3 10.9 1.4 10.7 0.7 10.3"/></g></svg>
<div style="position:absolute;left:983px;top:512px;width:162px;height:123px;overflow:hidden"><div style="position:absolute;left:0;top:0;width:162px;height:123px;box-sizing:border-box;border:1px solid #c8c8c8;background:#fff"></div><div style="position:absolute;left:2px;top:2px;width:158px;height:119px;background:radial-gradient(ellipse 62% 88% at 47% 49%, #62838f 0%, #58788a 18%, #475c74 45%, #363f61 75%, #2c3456 100%)"></div>
<svg style="position:absolute;left:2px;top:2px;" width="158" height="119" viewBox="0 0 158 119"><path d="M78.9 9.5h13.1v1.5h-13.1zM79.7 6.3h1.6v3.2h-1.6zM82.7 7.7h1.5v1.8h-1.5zM84.8 6h1.8v3.5h-1.8zM84.8 4.1h.9v.9h-.9zM88.1 7.6h1.5v1.9h-1.5zM90.5 6.8h1.5v2.7h-1.5zM94.5 9.5h16.3v1.5h-16.3zM95.5 7.7h2v1.8h-2zM99 8.2h1.9v1.3h-1.9zM101.2 8.2h1.5v1.3h-1.5zM104.1 8.4h1.1v1.1h-1.1zM104.1 11.5h.9v.9h-.9zM106.2 7.8h1.9v1.7h-1.9zM108.4 7.1h2.1v2.4h-2.1zM114.7 9.5h6.3v1.5h-6.3zM116 7.8h1.7v1.7h-1.7zM118.6 7.8h1.1v1.7h-1.1zM124.7 9.5h6.3v1.5h-6.3zM125.2 8h1.2v1.5h-1.2zM125.2 4.1h.9v.9h-.9zM127.5 6.3h2v3.2h-2zM130 7.8h1v1.7h-1zM130 4.1h.9v.9h-.9zM135.3 9.5h9.1v1.5h-9.1zM136.8 7.9h1.2v1.6h-1.2zM140.1 6.3h1.7v3.2h-1.7zM142.8 7.8h1.7v1.7h-1.7zM148 9.5h4.5v1.5h-4.5zM148.5 6.1h1.7v3.4h-1.7zM43.6 22.5h7.7v1.1h-7.7zM45.1 21.7h1.3v0.8h-1.3zM47.1 20h1.3v2.5h-1.3zM49.4 20.5h1.3v2h-1.3zM53.5 22.5h13.2v1.1h-13.2zM54 20.4h1.1v2.2h-1.1zM56.8 21.7h1.3v0.8h-1.3zM59.1 21.6h1.2v0.9h-1.2zM61.2 20.9h0.9v1.6h-0.9zM63.9 21.5h1.5v1h-1.5zM69.7 22.5h8.8v1.1h-8.8zM70 21.4h1.2v1.2h-1.2zM72.1 21.4h0.8v1.1h-0.8zM75.6 20.7h1.2v1.8h-1.2zM80.8 22.5h5v1.1h-5zM81.1 21h1v1.5h-1zM83.3 21.2h1.5v1.4h-1.5zM87.4 22.5h19.5v1.1h-19.5zM88.9 20.1h1.5v2.5h-1.5zM91.6 20.3h0.9v2.3h-0.9zM93.8 20.2h1.4v2.3h-1.4zM97.1 21.3h1.4v1.2h-1.4zM100 20.5h1v2h-1zM103.2 20.7h1.2v1.8h-1.2zM103.2 18.6h.9v.9h-.9zM105.1 21h1.4v1.6h-1.4zM110.2 22.5h9.2v1.1h-9.2zM111.7 21.1h1.4v1.4h-1.4zM114.7 21.8h0.9v0.7h-0.9zM116.7 20.7h1.5v1.8h-1.5zM122.3 22.5h3.8v1.1h-3.8zM122.7 21.7h1v0.8h-1zM125 21.2h1.1v1.3h-1.1zM8.4 33.7h13v0.8h-13zM9.6 32.9h1.1v0.8h-1.1zM11.7 33.2h0.8v0.4h-0.8zM13.6 33h1v0.6h-1zM16.6 32.5h0.6v1.2h-0.6zM20.1 32.6h1.1v1.1h-1.1zM22.8 33.7h16v0.8h-16zM22.8 32.6h0.7v1h-0.7zM25.4 33.2h0.8v0.5h-0.8zM25.4 35h.9v.9h-.9zM28.3 31.8h0.9v1.8h-0.9zM31.2 32.4h0.9v1.2h-0.9zM31.2 35h.9v.9h-.9zM33.6 32.6h0.9v1.1h-0.9zM36.7 32.7h1.1v0.9h-1.1zM46.8 33.7h9.4v0.8h-9.4zM47.4 32.3h1v1.3h-1zM50.9 32.4h0.6v1.3h-0.6zM54.3 32.8h1.1v0.9h-1.1zM54.3 35h.9v.9h-.9zM57.7 33.7h13.8v0.8h-13.8zM58 32.5h0.7v1.2h-0.7zM61.5 32.5h0.7v1.2h-0.7zM63.8 31.9h1v1.8h-1zM63.8 30.8h.9v.9h-.9zM65.9 32.3h0.7v1.4h-0.7zM65.9 30.8h.9v.9h-.9zM68.1 33.2h1v0.5h-1zM68.1 30.8h.9v.9h-.9zM70.1 32.8h0.6v0.8h-0.6zM73.3 33.7h4v0.8h-4zM74.7 32.4h0.6v1.3h-0.6zM76.6 31.8h0.7v1.9h-0.7zM106.9 33.7h16.8v0.8h-16.8zM108.3 32.6h0.8v1.1h-0.8zM110.9 32.2h1v1.4h-1zM113.8 32h1.1v1.6h-1.1zM116.3 32.6h0.7v1.1h-0.7zM116.3 35h.9v.9h-.9zM119.3 32.1h0.8v1.5h-0.8zM119.3 30.8h.9v.9h-.9zM121.9 33.1h0.9v0.6h-0.9zM121.9 35h.9v.9h-.9zM124.9 33.7h12.5v0.8h-12.5zM126.3 32.2h0.6v1.4h-0.6zM126.3 30.8h.9v.9h-.9zM129.4 33.1h0.9v0.5h-0.9zM129.4 35h.9v.9h-.9zM131.4 31.9h0.8v1.7h-0.8zM133.4 32.1h0.9v1.5h-0.9zM135.5 32.7h0.7v1h-0.7zM135.5 35h.9v.9h-.9zM139.3 33.7h12.4v0.8h-12.4zM140.4 32.6h0.8v1.1h-0.8zM143 32.9h0.8v0.8h-0.8zM145.7 32.9h1v0.7h-1zM145.7 30.8h.9v.9h-.9zM149 31.9h0.7v1.7h-0.7zM132.5 39h12.7v0.8h-12.7zM133.2 37.4h0.7v1.6h-0.7zM135.3 37.8h0.8v1.2h-0.8zM138 38h1v0.9h-1zM139.9 37.9h0.7v1h-0.7zM143.2 37.4h1.1v1.6h-1.1zM146.4 39h6.1v0.8h-6.1zM147.7 37.2h0.8v1.8h-0.8zM147.7 36.1h.9v.9h-.9zM150.5 38.3h0.7v0.6h-0.7zM54.8 49.8h17.4v0.8h-17.4zM55.7 48h1.1v1.7h-1.1zM58.2 48.9h0.7v0.9h-0.7zM60.7 48.7h1v1h-1zM62.6 48.4h0.6v1.3h-0.6zM65 48.2h0.9v1.6h-0.9zM68.1 48h0.8v1.8h-0.8zM70.3 47.9h0.6v1.8h-0.6zM73.5 49.8h6.9v0.8h-6.9zM74.1 49.1h0.9v0.6h-0.9zM77.3 48h0.8v1.7h-0.8zM79.3 48.5h0.8v1.3h-0.8zM82 49.8h14.6v0.8h-14.6zM83.3 48.7h1v1.1h-1zM83.3 51.1h.9v.9h-.9zM86.1 48h0.6v1.7h-0.6zM88.8 49.2h0.9v0.5h-0.9zM91.3 49.2h0.9v0.6h-0.9zM91.3 51.1h.9v.9h-.9zM94.8 48.4h0.8v1.4h-0.8zM94.8 51.1h.9v.9h-.9zM97.7 49.8h7v0.8h-7zM98.5 48.9h0.8v0.9h-0.8zM100.4 47.9h0.9v1.8h-0.9zM102.4 47.9h0.8v1.9h-0.8zM106.5 49.8h8.1v0.8h-8.1zM106.7 48h1v1.7h-1zM109.7 48.7h1.1v1.1h-1.1zM109.7 51.1h.9v.9h-.9zM112.4 48h0.9v1.7h-0.9zM116.2 49.8h19.4v0.8h-19.4zM116.2 48.2h0.6v1.6h-0.6zM116.2 46.9h.9v.9h-.9zM118.2 49.1h0.9v0.7h-0.9zM121 48h0.7v1.8h-0.7zM121 51.1h.9v.9h-.9zM124.5 47.9h1.1v1.9h-1.1zM127.3 49.2h1.1v0.6h-1.1zM129.8 49.1h0.6v0.7h-0.6zM132.1 48.8h0.8v0.9h-0.8zM134.7 49.1h0.8v0.7h-0.8zM137.3 49.8h9.4v0.8h-9.4zM137.7 48h1.1v1.8h-1.1zM141.1 48.7h1v1h-1zM143.5 48.9h1.1v0.9h-1.1zM149 49.8h3.5v0.8h-3.5zM149 48.3h0.9v1.4h-0.9zM151.3 48.3h1v1.5h-1zM151.3 46.9h.9v.9h-.9zM38.8 61.5h9.2v1.5h-9.2zM39.9 60.7h1.4v0.8h-1.4zM42 59.5h2.1v2h-2.1zM45.1 58.5h1.7v3h-1.7zM47 59.4h1v2.1h-1zM47 63.5h.9v.9h-.9zM52.3 61.5h11v1.5h-11zM53 60.4h1.7v1.1h-1.7zM56.6 60.6h1.3v0.9h-1.3zM59.3 58.1h1.8v3.4h-1.8zM61.5 58.8h1.6v2.7h-1.6zM66.3 61.5h9.9v1.5h-9.9zM66.9 59.3h1.9v2.2h-1.9zM69.2 59.4h1.6v2.1h-1.6zM69.2 63.5h.9v.9h-.9zM72.1 59.1h1.7v2.4h-1.7zM75.3 60.5h0.9v1h-0.9zM80.5 61.5h10.5v1.5h-10.5zM81.6 60.7h1.3v0.8h-1.3zM85.1 58.7h2v2.8h-2zM87.4 58.1h1.2v3.4h-1.2zM89.7 60.4h1.3v1.1h-1.3zM93.6 61.5h10.2v1.5h-10.2zM95 59.1h1.9v2.4h-1.9zM97.1 60.6h1.9v0.9h-1.9zM99.5 58.4h1.8v3.1h-1.8zM102.6 58.5h1.2v3h-1.2zM106.2 61.5h6v1.5h-6zM107.4 57.9h1.9v3.6h-1.9zM110.1 60.4h2v1.1h-2zM116 61.5h6.9v1.5h-6.9zM117.4 59.1h1.7v2.4h-1.7zM120.3 58h1.2v3.5h-1.2zM58 72.7h12.4v0.8h-12.4zM59.1 71.5h0.7v1.2h-0.7zM61.6 71.7h0.6v1h-0.6zM64 72h0.6v0.7h-0.6zM66.1 71.6h0.6v1.1h-0.6zM68.2 71.9h1.1v0.8h-1.1zM68.2 74h.9v.9h-.9zM72.6 72.7h16.4v0.8h-16.4zM72.8 71.8h0.9v0.9h-0.9zM76.2 71.4h0.6v1.2h-0.6zM76.2 74h.9v.9h-.9zM79.1 70.9h0.7v1.7h-0.7zM82.3 72.3h0.7v0.4h-0.7zM84.6 72.1h0.9v0.6h-0.9zM84.6 69.8h.9v.9h-.9zM87.5 70.7h0.6v1.9h-0.6zM90.8 72.7h16.7v0.8h-16.7zM91.9 71.8h0.7v0.9h-0.7zM94.7 72.1h1.1v0.5h-1.1zM97.9 72.1h0.9v0.5h-0.9zM97.9 69.8h.9v.9h-.9zM101.4 72h0.6v0.7h-0.6zM104.1 71.6h1v1.1h-1zM106.7 70.9h0.7v1.7h-0.7zM109.7 72.7h8v0.8h-8zM110.5 71.2h0.6v1.5h-0.6zM110.5 74h.9v.9h-.9zM113.3 71.3h0.7v1.3h-0.7zM116.8 71.3h0.7v1.4h-0.7zM118.9 72.7h5.1v0.8h-5.1zM120.1 70.8h0.7v1.9h-0.7zM123.3 72h0.7v0.6h-0.7zM125.6 72.7h15.9v0.8h-15.9zM126.1 72.1h0.6v0.6h-0.6zM129.6 71.6h1v1.1h-1zM133.2 71.8h0.8v0.9h-0.8zM136.7 70.9h1v1.8h-1zM139.2 70.8h1v1.9h-1zM143.2 72.7h8.5v0.8h-8.5zM143.9 70.9h0.8v1.7h-0.8zM146.6 70.9h1v1.8h-1zM150.2 71h1v1.7h-1zM62.9 83.9h6.5v0.8h-6.5zM63.4 82.5h1v1.4h-1zM66.5 82.6h1.1v1.3h-1.1zM68.4 82.3h0.7v1.5h-0.7zM71 83.9h5.6v0.8h-5.6zM72 83.4h0.6v0.5h-0.6zM74.1 83.4h1.1v0.4h-1.1zM78.8 83.9h13.8v0.8h-13.8zM80.1 83.3h0.6v0.6h-0.6zM82.5 82.6h1v1.3h-1zM84.9 82h0.8v1.8h-0.8zM87.7 83.4h0.9v0.5h-0.9zM89.9 82.4h0.8v1.5h-0.8zM93.9 83.9h18.8v0.8h-18.8zM94.4 82h0.9v1.9h-0.9zM97.1 82.2h1.1v1.6h-1.1zM97.1 81h.9v.9h-.9zM99.5 83.3h0.8v0.5h-0.8zM101.9 82.5h1.1v1.4h-1.1zM104.7 82.8h0.9v1h-0.9zM106.9 83h1.1v0.8h-1.1zM110.4 83.4h0.7v0.4h-0.7zM114.6 83.9h7.6v0.8h-7.6zM114.8 82.7h1v1.1h-1zM116.8 83.1h1.1v0.7h-1.1zM119.6 83h0.7v0.9h-0.7zM119.6 85.2h.9v.9h-.9zM124.5 83.9h10.5v0.8h-10.5zM125.8 82h0.9v1.9h-0.9zM128.4 83.3h0.7v0.6h-0.7zM130.4 82.2h0.8v1.7h-0.8zM133.3 82.8h0.7v1.1h-0.7zM136.5 83.9h10.5v0.8h-10.5zM137.2 82.2h1v1.7h-1zM139.9 82h0.6v1.8h-0.6zM143 83.4h1v0.4h-1zM145.9 83.4h0.9v0.5h-0.9zM148.7 83.9h3v0.8h-3zM150 83.5h0.7v0.4h-0.7zM14 95.1h13.5v0.8h-13.5zM15.3 93.4h0.8v1.6h-0.8zM18.8 94.4h0.7v0.6h-0.7zM20.9 94.3h1.1v0.8h-1.1zM23.1 94h1.1v1h-1.1zM26.4 94.3h0.8v0.8h-0.8zM29.2 95.1h19.4v0.8h-19.4zM30.5 93.2h0.9v1.8h-0.9zM30.5 92.2h.9v.9h-.9zM33 94.4h0.7v0.7h-0.7zM33 92.2h.9v.9h-.9zM36 93.5h0.6v1.6h-0.6zM39.3 93.9h1.1v1.2h-1.1zM39.3 92.2h.9v.9h-.9zM41.2 94.5h0.6v0.6h-0.6zM44.2 94.5h1v0.6h-1zM47.1 94.3h0.8v0.8h-0.8zM49.9 95.1h11.5v0.8h-11.5zM50.7 93.6h0.9v1.4h-0.9zM53.8 93.9h0.9v1.2h-0.9zM57.2 94.2h1v0.9h-1zM59.7 94.6h1v0.5h-1zM63.3 95.1h17.3v0.8h-17.3zM64.4 94.4h1v0.7h-1zM67 93.5h0.7v1.6h-0.7zM67 96.4h.9v.9h-.9zM69.8 94.6h0.8v0.5h-0.8zM73.1 93.5h0.8v1.5h-0.8zM73.1 92.2h.9v.9h-.9zM75.9 94.5h1v0.5h-1zM78 94.2h0.9v0.9h-0.9zM81.9 95.1h16.3v0.8h-16.3zM82.9 94.3h0.6v0.7h-0.6zM82.9 92.2h.9v.9h-.9zM85.1 94h0.6v1.1h-0.6zM85.1 96.4h.9v.9h-.9zM87.6 94.6h0.6v0.5h-0.6zM90.5 94.3h0.7v0.8h-0.7zM93.1 93.7h0.7v1.3h-0.7zM96.1 93.4h1v1.7h-1zM99.5 95.1h18.4v0.8h-18.4zM100.5 93.7h0.8v1.3h-0.8zM100.5 96.4h.9v.9h-.9zM102.6 93.3h0.8v1.8h-0.8zM106 93.9h0.7v1.1h-0.7zM108.7 93.7h1v1.3h-1zM108.7 96.4h.9v.9h-.9zM111.9 93.6h1.1v1.5h-1.1zM114 93.2h0.7v1.9h-0.7zM120 95.1h9.3v0.8h-9.3zM120.8 93.8h0.7v1.3h-0.7zM124.3 93.8h0.9v1.3h-0.9zM126.7 93.4h0.6v1.7h-0.6zM131.7 95.1h7.6v0.8h-7.6zM133.1 93.7h0.6v1.4h-0.6zM135.2 93.3h0.9v1.7h-0.9zM137.2 94h1v1.1h-1zM137.2 92.2h.9v.9h-.9zM141.2 95.1h10.5v0.8h-10.5zM141.5 94.3h0.6v0.7h-0.6zM144.5 94.6h0.6v0.5h-0.6zM147.5 94.6h1.1v0.5h-1.1zM150.4 93.7h0.8v1.4h-0.8zM110 99.9h12.7v0.8h-12.7zM110.1 98.9h0.6v1h-0.6zM112.1 98.8h1v1.1h-1zM114.1 99.2h0.8v0.7h-0.8zM117.4 99.1h1.1v0.7h-1.1zM119.6 98.8h0.9v1h-0.9zM124.1 99.9h15.2v0.8h-15.2zM124.8 98.2h0.6v1.7h-0.6zM124.8 97h.9v.9h-.9zM127.7 99.1h0.7v0.8h-0.7zM130.9 98.7h0.6v1.2h-0.6zM133.1 99.5h0.7v0.4h-0.7zM135.8 99.1h0.6v0.8h-0.6zM137.9 98.7h1v1.2h-1zM140.8 99.9h11.7v0.8h-11.7zM140.9 98h1.1v1.9h-1.1zM144 98.8h0.9v1.1h-0.9zM147.4 98.7h0.7v1.1h-0.7zM149.8 98.4h0.6v1.5h-0.6zM151.8 98.3h0.7v1.6h-0.7zM99.7 110.8h6.8v0.8h-6.8zM100.7 109.8h1.1v1h-1.1zM103.7 109.6h0.8v1.1h-0.8zM108.6 110.8h14.4v0.8h-14.4zM109 110h0.9v0.7h-0.9zM111.1 109.7h1.1v1.1h-1.1zM113.6 109.4h0.6v1.3h-0.6zM117 110.3h0.6v0.5h-0.6zM119.3 110.3h0.8v0.5h-0.8zM121.2 109.3h0.9v1.5h-0.9zM124.9 110.8h20v0.8h-20zM126.3 109.8h0.6v1h-0.6zM129.4 109.7h0.9v1h-0.9zM132.1 110h1v0.7h-1zM134.9 109.8h0.9v0.9h-0.9zM138.2 109.3h0.9v1.5h-0.9zM141.4 109.2h0.6v1.6h-0.6zM144.1 110h0.8v0.8h-0.8zM146.2 110.8h5.5v0.8h-5.5zM147.3 109.3h0.9v1.5h-0.9zM149.6 109.6h0.9v1.1h-0.9z" fill="#fff" opacity=".8"/></svg>
</div>
<svg style="position:absolute;left:1126.7px;top:640.6px" width="17.8" height="12" viewBox="0 0 17.8 12"><g fill="none" stroke="#444" stroke-width="1.25"><path transform="translate(0.0 0)" d="M1.3 2.6L4.6 0.4V11"/><path transform="translate(8.4 0)" d="M5.6 11V0.6L0.4 7.9H7.4"/></g></svg>
<div style="position:absolute;left:1178px;top:512px;width:162px;height:123px;overflow:hidden"><div style="position:absolute;left:0;top:0;width:162px;height:123px;box-sizing:border-box;border:1px solid #c8c8c8;background:#fff"></div><div style="position:absolute;left:2px;top:2px;width:158px;height:119px;background:radial-gradient(ellipse 62% 88% at 47% 49%, #62838f 0%, #58788a 18%, #475c74 45%, #363f61 75%, #2c3456 100%)"></div>
<svg style="position:absolute;left:2px;top:2px;" width="158" height="119" viewBox="0 0 158 119"><rect x="6.8" y="18.5" width="144.1" height="87.5" fill="url(#gbox)"/><path d="M119.7 10.2h13.4v1.1h-13.4zM119.7 9h1.3v1.2h-1.3zM122.8 8.5h1.4v1.7h-1.4zM126.4 8.6h1.3v1.6h-1.3zM128.7 7.7h0.8v2.5h-0.8zM130.7 7.8h1.3v2.4h-1.3zM130.7 11.8h.9v.9h-.9zM135.9 10.2h8.3v1.1h-8.3zM136.2 9h1.1v1.2h-1.1zM138.5 9.1h1.5v1.2h-1.5zM138.5 11.8h.9v.9h-.9zM140.8 9.2h1.2v1h-1.2zM143.5 7.7h0.7v2.5h-0.7zM143.5 6.3h.9v.9h-.9zM146.9 10.2h2.4v1.1h-2.4zM148 8.2h1v2h-1z" fill="#fff" opacity=".8"/><path d="M69.3 22.5h7.2v1h-7.2zM70 21.4h1.3v1.1h-1.3zM70 18.9h.9v.9h-.9zM72.7 21.2h1.3v1.3h-1.3zM74.8 22h1v0.5h-1zM79.1 22.5h10.2v1h-10.2zM79.9 21.8h0.7v0.7h-0.7zM82.9 21.4h1.4v1.1h-1.4zM82.9 24h.9v.9h-.9zM85 21.5h0.8v1h-0.8zM85 18.9h.9v.9h-.9zM87.2 20.1h0.9v2.4h-0.9zM91.4 22.5h16.6v1h-16.6zM92.6 20.8h1.1v1.7h-1.1zM94.6 20.8h1.1v1.7h-1.1zM97.8 21.1h1.1v1.4h-1.1zM100.1 21.7h1.1v0.8h-1.1zM102.4 20.6h1.3v1.9h-1.3zM102.4 18.9h.9v.9h-.9zM106 21.3h1v1.2h-1zM110.9 22.5h17.6v1h-17.6zM111.8 20.8h0.7v1.7h-0.7zM113.8 20.3h0.9v2.2h-0.9zM115.8 20.4h0.8v2.1h-0.8zM115.8 24h.9v.9h-.9zM118.2 20.7h1.1v1.8h-1.1zM120.8 22h0.8v0.5h-0.8zM120.8 18.9h.9v.9h-.9zM124.3 21.6h1.2v0.9h-1.2zM126.3 20.5h1.3v2h-1.3zM130.1 22.5h14.4v1h-14.4zM131.5 20.6h0.7v1.9h-0.7zM133.6 21.6h1v0.9h-1zM136.1 21.5h1.2v1h-1.2zM138.6 21.8h0.9v0.7h-0.9zM140.6 21h0.9v1.5h-0.9zM142.9 21.1h1.2v1.4h-1.2zM57.2 32.6h14.3v1h-14.3zM57.2 31.8h0.9v0.8h-0.9zM59.1 31.7h1v0.9h-1zM62.7 30.4h0.8v2.2h-0.8zM62.7 34.1h.9v.9h-.9zM65.5 31.1h0.8v1.5h-0.8zM69 31.2h1v1.4h-1zM74.4 32.6h13.8v1h-13.8zM74.9 30.8h1.1v1.8h-1.1zM77.5 31.9h1.2v0.7h-1.2zM79.5 31.4h0.9v1.2h-0.9zM81.5 30.5h1.1v2.1h-1.1zM81.5 29h.9v.9h-.9zM84.6 31.3h1.1v1.3h-1.1zM86.8 31.5h1.1v1.1h-1.1zM90.5 32.6h16.2v1h-16.2zM91.6 31.4h0.7v1.2h-0.7zM93.7 31.8h0.9v0.8h-0.9zM96.4 31.3h0.8v1.3h-0.8zM99.5 30.9h1.3v1.7h-1.3zM99.5 34.1h.9v.9h-.9zM102.8 30.6h1v2h-1zM109.4 32.6h19.2v1h-19.2zM109.4 30.7h0.9v1.9h-0.9zM109.4 34.1h.9v.9h-.9zM112.7 30.4h1.3v2.2h-1.3zM115.6 31.9h1.2v0.7h-1.2zM118.9 31.9h0.8v0.7h-0.8zM121.7 31.5h1v1.1h-1zM123.8 31.1h0.7v1.5h-0.7zM126.8 31.1h0.7v1.5h-0.7zM130.7 32.6h9v1h-9zM131.9 30.5h1.3v2.1h-1.3zM134.2 31.9h1.1v0.7h-1.1zM134.2 29h.9v.9h-.9zM137.2 31.8h1v0.8h-1zM141.7 32.6h2.8v1h-2.8zM143 30.7h1v1.9h-1zM143 34.1h.9v.9h-.9zM53.2 45h5.4v1h-5.4zM54.2 43.3h0.7v1.7h-0.7zM56.9 42.8h0.8v2.2h-0.8zM61.2 45h9.2v1h-9.2zM62.6 43.9h1v1.1h-1zM64.9 42.8h1v2.2h-1zM64.9 46.5h.9v.9h-.9zM67.4 43.1h1.3v1.9h-1.3zM67.4 46.5h.9v.9h-.9zM73.1 45h5v1h-5zM74 42.8h1.1v2.2h-1.1zM77.1 44h1.1v1h-1.1zM80.3 45h5.3v1h-5.3zM81.6 44.5h1.3v0.5h-1.3zM83.6 43.2h1.1v1.8h-1.1zM87.6 45h11.3v1h-11.3zM89 43.5h1.3v1.5h-1.3zM91.5 44.2h1.1v0.8h-1.1zM93.4 43.8h1.2v1.2h-1.2zM97 43.4h1.2v1.6h-1.2zM100.9 45h7v1h-7zM101.6 44.1h1v0.9h-1zM104.2 44.1h1.2v0.9h-1.2zM107.1 43h0.9v2h-0.9zM110.4 45h6.1v1h-6.1zM111.8 44.4h1.3v0.6h-1.3zM115 42.6h1v2.4h-1zM118 45h13.2v1h-13.2zM119 43.9h0.9v1.1h-0.9zM119 46.5h.9v.9h-.9zM120.9 44.2h0.7v0.8h-0.7zM120.9 46.5h.9v.9h-.9zM123.3 43.5h1.2v1.5h-1.2zM123.3 41.4h.9v.9h-.9zM126.8 42.9h1v2.1h-1zM126.8 41.4h.9v.9h-.9zM129.7 44.5h0.8v0.5h-0.8zM134 45h10.5v1h-10.5zM135 42.9h1v2.1h-1zM138 44.3h0.8v0.7h-0.8zM138 46.5h.9v.9h-.9zM141.3 43.3h0.8v1.7h-0.8zM143.4 44.1h0.9v0.9h-0.9zM59.6 57.1h16.1v1h-16.1zM60.8 55.2h1.2v1.9h-1.2zM64.3 55.2h1.1v1.9h-1.1zM67 55.9h1.2v1.2h-1.2zM70 56.5h1v0.6h-1zM73.6 56h0.9v1.1h-0.9zM73.6 58.6h.9v.9h-.9zM77.7 57.1h11.3v1h-11.3zM78.5 56.5h1.4v0.6h-1.4zM80.7 55.7h1.2v1.4h-1.2zM80.7 53.5h.9v.9h-.9zM83 56.2h1.1v0.9h-1.1zM86.3 55.9h0.7v1.2h-0.7zM86.3 58.6h.9v.9h-.9zM90.6 57.1h9.4v1h-9.4zM91.8 55.7h0.9v1.4h-0.9zM95.1 54.7h1.2v2.4h-1.2zM95.1 58.6h.9v.9h-.9zM98.4 54.9h1v2.2h-1zM102.7 57.1h19.7v1h-19.7zM103.9 56.2h0.8v0.9h-0.8zM107.3 55.3h0.7v1.8h-0.7zM107.3 53.5h.9v.9h-.9zM110.2 54.8h1.2v2.3h-1.2zM113.1 55.7h1.3v1.4h-1.3zM116.5 55.8h1v1.3h-1zM119.5 55.8h0.7v1.3h-0.7zM124.5 57.1h5.7v1h-5.7zM125.1 55.9h1.3v1.2h-1.3zM128.3 55.5h1.1v1.6h-1.1zM131.9 57.1h9.2v1h-9.2zM132 55.5h0.7v1.6h-0.7zM135.4 55.8h1v1.3h-1zM138.6 55.6h1v1.5h-1zM142.6 57.1h1.9v1h-1.9zM143.8 55.2h0.7v1.9h-0.7zM74.9 69.5h15.7v1h-15.7zM75.1 67.9h1v1.6h-1zM78.3 68.3h0.8v1.2h-0.8zM81.3 68.9h1v0.6h-1zM81.3 65.9h.9v.9h-.9zM83.7 67.6h1.3v1.9h-1.3zM83.7 65.9h.9v.9h-.9zM86.2 68h1.4v1.5h-1.4zM89.5 68.7h1.1v0.8h-1.1zM92.7 69.5h12.6v1h-12.6zM93 68.7h1v0.8h-1zM93 71h.9v.9h-.9zM95.4 68h0.9v1.5h-0.9zM98.8 68.1h1v1.4h-1zM102.2 68.8h1.3v0.7h-1.3zM107.1 69.5h18.4v1h-18.4zM107.6 68.3h0.9v1.2h-0.9zM110.6 68.7h0.9v0.8h-0.9zM113.9 67.8h1.2v1.7h-1.2zM117.2 67.8h1.1v1.7h-1.1zM120.1 68.4h1v1.1h-1zM122.8 68.6h1v0.9h-1zM127.4 69.5h15.6v1h-15.6zM128.1 68.2h1.1v1.3h-1.1zM131 68.6h0.9v0.9h-0.9zM131 65.9h.9v.9h-.9zM133.9 67.3h0.7v2.2h-0.7zM136 68h1.3v1.5h-1.3zM136 65.9h.9v.9h-.9zM139.3 68.2h1.1v1.3h-1.1zM8.4 88.7h19.7v1h-19.7zM9.3 86.4h1.3v2.3h-1.3zM12.2 87.6h0.8v1.1h-0.8zM14.5 88.2h1.4v0.5h-1.4zM18.1 87.2h0.9v1.5h-0.9zM20.1 87.1h0.9v1.6h-0.9zM20.1 90.2h.9v.9h-.9zM22.4 87.4h1.3v1.3h-1.3zM25.7 87.4h0.9v1.3h-0.9zM30.1 88.7h14.2v1h-14.2zM31.2 86.5h1v2.2h-1zM33.4 87.2h1.3v1.5h-1.3zM35.4 88.2h0.9v0.5h-0.9zM38.2 87.5h1.4v1.2h-1.4zM41.6 87.8h0.9v0.9h-0.9zM43.5 86.9h0.7v1.8h-0.7zM47 88.7h8v1h-8zM48.4 86.3h1v2.4h-1zM50.3 87.1h1v1.6h-1zM53.5 86.9h1.4v1.8h-1.4zM53.5 90.2h.9v.9h-.9zM57.5 88.7h18.7v1h-18.7zM57.9 86.7h1.3v2h-1.3zM61 86.8h1.2v1.9h-1.2zM63 86.6h0.7v2.1h-0.7zM65.5 87.2h1.3v1.5h-1.3zM68.3 86.8h1.1v1.9h-1.1zM71.2 86.3h0.8v2.4h-0.8zM74.5 88.1h1.2v0.6h-1.2zM78.8 88.7h15.3v1h-15.3zM79.9 86.8h1.2v1.9h-1.2zM83.2 88.1h0.8v0.6h-0.8zM85.7 87.6h1.3v1.1h-1.3zM88.3 86.4h1.2v2.3h-1.2zM90.5 86.7h1v2h-1zM93.1 87.5h1v1.2h-1zM96.5 88.7h5.6v1h-5.6zM96.7 87.6h1.2v1.1h-1.2zM99.2 87.4h0.7v1.3h-0.7zM105 88.7h18.6v1h-18.6zM105.9 87.1h1.2v1.6h-1.2zM105.9 90.2h.9v.9h-.9zM109.5 87.1h1.1v1.6h-1.1zM112.3 86.6h1.1v2.1h-1.1zM114.5 87.6h1v1.1h-1zM117.4 87h0.9v1.7h-0.9zM120.4 86.3h0.8v2.4h-0.8zM120.4 90.2h.9v.9h-.9zM126.3 88.7h16.2v1h-16.2zM126.8 88.1h1v0.6h-1zM129.1 86.9h0.9v1.8h-0.9zM131 87.1h0.9v1.6h-0.9zM133.8 87.4h1.4v1.3h-1.4zM136.8 87h0.9v1.7h-0.9zM140.3 86.3h1v2.4h-1zM144.1 88.7h0.4v1h-0.4zM8.4 95.4h11.5v1h-11.5zM9.6 93.8h1.3v1.6h-1.3zM12.1 94.2h0.7v1.2h-0.7zM14.9 93.2h0.8v2.2h-0.8zM18.2 94.5h1.1v0.9h-1.1zM21.7 95.4h11.6v1h-11.6zM22.3 94.1h0.8v1.3h-0.8zM25.1 93.3h1.2v2.1h-1.2zM25.1 96.9h.9v.9h-.9zM27.6 94.6h0.9v0.8h-0.9zM30.8 94.9h1.2v0.5h-1.2zM30.8 96.9h.9v.9h-.9zM36.1 95.4h6.4v1h-6.4zM37.1 93.4h0.7v2h-0.7zM39.5 93.3h1.3v2.1h-1.3zM44.6 95.4h6.4v1h-6.4zM45.5 93.7h0.7v1.7h-0.7zM47.9 94.2h1.1v1.2h-1.1zM50.3 94.8h0.7v0.6h-0.7zM53.2 95.4h10.9v1h-10.9zM53.8 93.7h1.1v1.7h-1.1zM53.8 96.9h.9v.9h-.9zM56.4 93.1h0.9v2.3h-0.9zM60 94.7h1.4v0.7h-1.4zM62.8 94.3h0.9v1.1h-0.9zM66.4 95.4h6.4v1h-6.4zM67.5 94h0.8v1.4h-0.8zM71 93.6h1.3v1.8h-1.3zM74.4 95.4h8.1v1h-8.1zM75.7 94.8h1.2v0.6h-1.2zM75.7 96.9h.9v.9h-.9zM77.6 93.1h1.2v2.3h-1.2zM80 94.6h1.3v0.8h-1.3zM85 95.4h14.3v1h-14.3zM85.1 93.1h0.8v2.3h-0.8zM87.5 94h1.3v1.4h-1.3zM87.5 91.8h.9v.9h-.9zM89.9 94.1h0.9v1.3h-0.9zM93.3 93.3h1.1v2.1h-1.1zM96.3 94.4h1.2v1h-1.2zM102 95.4h16.1v1h-16.1zM102.7 93.8h1v1.6h-1zM104.7 93.9h1v1.5h-1zM106.8 93.3h1.4v2.1h-1.4zM109.2 94.3h0.8v1.1h-0.8zM112.3 94.5h1.2v0.9h-1.2zM115.5 94.8h1.3v0.6h-1.3zM120.4 95.4h6.8v1h-6.8zM121.5 93.5h0.7v1.9h-0.7zM121.5 91.8h.9v.9h-.9zM123.7 94.1h1.1v1.3h-1.1zM129.5 95.4h13.1v1h-13.1zM130.5 93.1h1.3v2.3h-1.3zM133 94.7h0.8v0.7h-0.8zM135.7 93.8h0.8v1.6h-0.8zM139.1 93.2h1.3v2.2h-1.3zM141.8 94h0.7v1.4h-0.7zM144.1 95.4h0.4v1h-0.4zM129.3 100.7h8.3v1h-8.3zM129.4 99.1h0.8v1.6h-0.8zM132.5 99.5h1.3v1.2h-1.3zM136.1 100.1h1v0.6h-1zM140.2 100.7h4.3v1h-4.3zM140.9 98.3h1v2.4h-1zM140.9 102.2h.9v.9h-.9zM143.8 99.9h0.7v0.8h-0.7z" fill="#000" opacity=".85"/><path d="M65 59.9h41.5v.8h-41.5zM80 72h54v.8h-54z" fill="#000" opacity=".75"/><path d="M150.5 20.8l-2.5 1.5 2.5 1.5z" fill="#8899bb" opacity="0.7"/><path d="M150.5 30.9l-2.5 1.5 2.5 1.5z" fill="#8899bb" opacity="0.7"/><path d="M150.5 43.3l-2.5 1.5 2.5 1.5z" fill="#8899bb" opacity="0.7"/><path d="M150.5 55.4l-2.5 1.5 2.5 1.5z" fill="#8899bb" opacity="0.7"/><path d="M150.5 67.8l-2.5 1.5 2.5 1.5z" fill="#8899bb" opacity="0.7"/><path d="M150.5 87.0l-2.5 1.5 2.5 1.5z" fill="#8899bb" opacity="0.7"/></svg>
</div>
<svg style="position:absolute;left:1321.7px;top:640.6px" width="17.8" height="12" viewBox="0 0 17.8 12"><g fill="none" stroke="#444" stroke-width="1.25"><path transform="translate(0.0 0)" d="M1.3 2.6L4.6 0.4V11"/><path transform="translate(8.4 0)" d="M1 1C1.8 0.6 2.8 0.4 3.8 0.4C5.5 0.4 6.5 1.3 6.5 2.8C6.5 4.4 5.3 5.4 3.2 5.4H2.4M3.2 5.4C5.6 5.4 7 6.5 7 8.1C7 9.9 5.6 10.9 3.5 10.9C2.4 10.9 1.4 10.7 0.7 10.2"/></g></svg>
<svg style="position:absolute;left:1180px;top:641px;" width="11" height="10" viewBox="0 0 11 10"><path d="M5.5 0.3l1.45 3.4 3.7.3-2.8 2.4.9 3.6-3.25-1.95-3.25 1.95.9-3.6L0.35 4l3.7-.3z" fill="#666"/><rect x="0" y="2.5" width="1.2" height="1.2" fill="#666"/><rect x="0" y="5.8" width="1.6" height="1" fill="#666"/></svg>
<div style="position:absolute;left:203px;top:684px;width:162px;height:22px;overflow:hidden"><div style="position:absolute;left:0;top:0;width:162px;height:123px;box-sizing:border-box;border:1px solid #c8c8c8;background:#fff"></div><div style="position:absolute;left:2px;top:2px;width:158px;height:119px;background:radial-gradient(ellipse 62% 88% at 47% 49%, #62838f 0%, #58788a 18%, #475c74 45%, #363f61 75%, #2c3456 100%)"></div>
<svg style="position:absolute;left:2px;top:2px;" width="158" height="119" viewBox="0 0 158 119"><path d="M49 9.1h15.4v1.1h-15.4zM49.6 7.2h1.2v1.9h-1.2zM52.1 7.6h0.8v1.5h-0.8zM55 7.9h1.3v1.3h-1.3zM57.7 7.4h0.8v1.7h-0.8zM57.7 10.7h.9v.9h-.9zM61 8h1.3v1.1h-1.3zM67.5 9.1h6v1.1h-6zM67.7 7.6h0.8v1.5h-0.8zM67.7 10.7h.9v.9h-.9zM70.3 8.4h1.5v0.7h-1.5zM72.3 7.3h1.2v1.8h-1.2zM72.3 10.7h.9v.9h-.9zM75.5 9.1h16.4v1.1h-16.4zM75.7 8.3h1.3v0.9h-1.3zM78.5 8.3h0.9v0.8h-0.9zM81.3 7.7h1.4v1.4h-1.4zM84.4 7.2h1v1.9h-1zM86.7 6.7h1.1v2.4h-1.1zM89.8 7.1h0.9v2.1h-0.9zM89.8 10.7h.9v.9h-.9zM94.5 9.1h9.7v1.1h-9.7zM94.9 7h0.9v2.1h-0.9zM97.6 8.3h1.4v0.8h-1.4zM101 8h1.2v1.1h-1.2zM106.5 9.1h14.5v1.1h-14.5zM107.9 7.6h0.8v1.5h-0.8zM110.3 7.2h1.5v1.9h-1.5zM112.4 8.4h1.5v0.7h-1.5zM114.8 7.5h1v1.6h-1zM117.1 6.9h1.5v2.2h-1.5zM123.1 9.1h10.2v1.1h-10.2zM123.7 8.4h1.2v0.7h-1.2zM123.7 5.2h.9v.9h-.9zM127.1 8.2h1v0.9h-1zM130.2 7.5h1v1.6h-1zM136.4 9.1h6.8v1.1h-6.8zM137.2 8h0.9v1.1h-0.9zM140.4 8.1h1.4v1h-1.4zM145.3 9.1h6.7v1.1h-6.7zM146.6 7h1v2.1h-1zM149.6 8.3h1.5v0.9h-1.5zM55 17.7h19v1.1h-19zM55.4 15.3h1.2v2.4h-1.2zM55.4 19.3h.9v.9h-.9zM58 16.2h1.5v1.5h-1.5zM60 16.3h1.5v1.4h-1.5zM62.7 16.6h1.5v1.1h-1.5zM62.7 13.8h.9v.9h-.9zM65.2 16.2h1.2v1.5h-1.2zM68.4 15.9h1.4v1.8h-1.4zM70.8 17h1.5v0.8h-1.5zM73.1 16h0.9v1.7h-0.9zM76.9 17.7h8.9v1.1h-8.9zM77 16.4h1v1.4h-1zM79.2 17.1h1.5v0.6h-1.5zM81.6 15.4h1.1v2.3h-1.1zM84.3 15.9h0.8v1.8h-0.8zM88.5 17.7h17.1v1.1h-17.1zM89.4 17.1h1.3v0.6h-1.3zM92.2 15.5h0.8v2.2h-0.8zM92.2 13.8h.9v.9h-.9zM94.5 15.1h1.2v2.6h-1.2zM97.7 15.2h1.5v2.5h-1.5zM101.3 15.1h1.1v2.6h-1.1zM101.3 19.3h.9v.9h-.9zM104.4 16.7h0.8v1h-0.8zM107.4 17.7h13.1v1.1h-13.1zM108.6 16h1.5v1.7h-1.5zM110.7 16.7h1.3v1h-1.3zM113.5 15.9h0.8v1.9h-0.8zM116.8 15.1h1.2v2.6h-1.2zM116.8 19.3h.9v.9h-.9zM119 17h1.3v0.7h-1.3zM123.1 17.7h19.9v1.1h-19.9zM123.5 16.1h1.2v1.7h-1.2zM125.7 15.5h1.2v2.2h-1.2zM128.2 16.4h1.3v1.3h-1.3zM131.1 15.1h1.3v2.6h-1.3zM133.6 15.2h1.2v2.5h-1.2zM135.5 16.1h1.2v1.7h-1.2zM137.8 15.9h1.3v1.8h-1.3zM140.9 16.1h0.9v1.6h-0.9zM144.7 17.7h7.3v1.1h-7.3zM145.9 16.7h1.3v1h-1.3zM149.5 15.7h1.5v2h-1.5z" fill="#fff" opacity=".8"/></svg>
</div>
<div style="position:absolute;left:398px;top:684px;width:162px;height:22px;overflow:hidden"><div style="position:absolute;left:0;top:0;width:162px;height:123px;box-sizing:border-box;border:1px solid #c8c8c8;background:#fff"></div><div style="position:absolute;left:2px;top:2px;width:158px;height:119px;background:radial-gradient(ellipse 62% 88% at 47% 49%, #62838f 0%, #58788a 18%, #475c74 45%, #363f61 75%, #2c3456 100%)"></div>
<svg style="position:absolute;left:2px;top:2px;" width="158" height="119" viewBox="0 0 158 119"><path d="M88 9.1h18.2v0.8h-18.2zM89.3 7.2h0.7v1.8h-0.7zM92.9 7.8h1.1v1.3h-1.1zM95.1 7.6h1v1.5h-1zM98.3 7.2h1.1v1.9h-1.1zM100.7 7.9h0.6v1.1h-0.6zM103.2 8.1h1v0.9h-1zM103.2 10.4h.9v.9h-.9zM107.9 9.1h10v0.8h-10zM108.9 7.8h1.1v1.3h-1.1zM112.1 7.3h1.1v1.8h-1.1zM114.4 8.3h0.9v0.7h-0.9zM116.6 7.1h0.9v1.9h-0.9zM116.6 10.4h.9v.9h-.9zM50 17.2h9.2v0.8h-9.2zM50.9 15.9h1.1v1.2h-1.1zM50.9 18.5h.9v.9h-.9zM52.8 16.3h1v0.8h-1zM55.4 15.5h1.1v1.7h-1.1zM61 17.2h11.5v0.8h-11.5zM61.6 16.6h0.8v0.5h-0.8zM61.6 18.5h.9v.9h-.9zM64.3 16.1h0.6v1h-0.6zM66.9 15.9h1.1v1.3h-1.1zM69.4 15.9h1.1v1.3h-1.1zM71.8 16.3h0.7v0.8h-0.7zM74 17.2h18v0.8h-18zM75.4 16.3h0.9v0.8h-0.9zM78.7 15.3h1.1v1.8h-1.1zM80.7 16.4h0.9v0.7h-0.9zM83.4 15.4h0.8v1.7h-0.8zM86.1 15.5h0.9v1.7h-0.9zM88.7 15.3h0.8v1.9h-0.8zM88.7 18.5h.9v.9h-.9zM94.5 17.2h5.5v0.8h-5.5zM95 15.8h0.6v1.4h-0.6zM95 14.3h.9v.9h-.9zM97.5 16.4h0.8v0.8h-0.8z" fill="#fff" opacity=".8"/></svg>
</div>
<div style="position:absolute;left:593px;top:684px;width:162px;height:22px;overflow:hidden"><div style="position:absolute;left:0;top:0;width:162px;height:123px;box-sizing:border-box;border:1px solid #c8c8c8;background:#fff"></div><div style="position:absolute;left:2px;top:2px;width:158px;height:119px;background:radial-gradient(ellipse 62% 88% at 47% 49%, #62838f 0%, #58788a 18%, #475c74 45%, #363f61 75%, #2c3456 100%)"></div>
<svg style="position:absolute;left:2px;top:2px;" width="158" height="119" viewBox="0 0 158 119"></svg>
</div>
<div style="position:absolute;left:788px;top:684px;width:162px;height:22px;overflow:hidden"><div style="position:absolute;left:0;top:0;width:162px;height:123px;box-sizing:border-box;border:1px solid #c8c8c8;background:#fff"></div><div style="position:absolute;left:2px;top:2px;width:158px;height:119px;background:radial-gradient(ellipse 62% 88% at 47% 49%, #62838f 0%, #58788a 18%, #475c74 45%, #363f61 75%, #2c3456 100%)"></div>
<svg style="position:absolute;left:2px;top:2px;" width="158" height="119" viewBox="0 0 158 119"><path d="M118 9.2h17.7v0.8h-17.7zM118.5 8.5h1v0.7h-1zM120.6 7.7h0.6v1.4h-0.6zM123.2 7.9h1v1.3h-1zM126.7 8.2h0.7v0.9h-0.7zM130.2 7.8h0.6v1.3h-0.6zM132.5 8.1h1.1v1.1h-1.1zM137.7 9.2h10.3v0.8h-10.3zM137.9 8.1h1.1v1h-1.1zM141.4 7.6h1.1v1.6h-1.1zM143.7 8.6h0.6v0.6h-0.6zM146.3 8.5h0.7v0.7h-0.7zM90 17.2h19.5v0.8h-19.5zM90.8 15.3h1v1.9h-1zM93.6 16.5h0.9v0.6h-0.9zM95.5 16.2h0.6v1h-0.6zM98.2 16.6h1.1v0.6h-1.1zM100.7 15.8h0.6v1.4h-0.6zM103.5 16.5h0.6v0.6h-0.6zM103.5 14.3h.9v.9h-.9zM106.8 15.8h1v1.4h-1zM111.3 17.2h9.9v0.8h-9.9zM112 16.5h1.1v0.7h-1.1zM114.3 15.5h1.1v1.7h-1.1zM117.7 15.4h0.9v1.8h-0.9zM119.6 15.8h0.9v1.4h-0.9zM123.4 17.2h15.4v0.8h-15.4zM124.4 15.3h0.8v1.8h-0.8zM127.3 16.4h1v0.8h-1zM129.7 16h0.7v1.1h-0.7zM132.8 15.7h0.7v1.4h-0.7zM132.8 14.3h.9v.9h-.9zM135.6 16.1h0.7v1.1h-0.7zM140.5 17.2h9.5v0.8h-9.5zM140.8 15.6h0.6v1.6h-0.6zM143.8 16.2h1.1v1h-1.1zM146.7 16.5h0.7v0.7h-0.7zM149.3 16.2h0.7v1h-0.7z" fill="#fff" opacity=".8"/></svg>
</div>
<div style="position:absolute;left:983px;top:684px;width:162px;height:22px;overflow:hidden"><div style="position:absolute;left:0;top:0;width:162px;height:123px;box-sizing:border-box;border:1px solid #c8c8c8;background:#fff"></div><div style="position:absolute;left:2px;top:2px;width:158px;height:119px;background:radial-gradient(ellipse 62% 88% at 47% 49%, #62838f 0%, #58788a 18%, #475c74 45%, #363f61 75%, #2c3456 100%)"></div>
<svg style="position:absolute;left:2px;top:2px;" width="158" height="119" viewBox="0 0 158 119"><path d="M34 9.2h10.7v0.8h-10.7zM34.5 8.7h1v0.5h-1zM36.7 7.6h1v1.5h-1zM40 8.2h0.8v1h-0.8zM43.1 8.1h0.8v1.1h-0.8zM46 9.2h13.8v0.8h-13.8zM46.9 7.6h0.6v1.5h-0.6zM48.9 8.3h0.6v0.8h-0.6zM51.9 7.6h1.1v1.5h-1.1zM55.4 8.4h0.9v0.7h-0.9zM58.4 8.4h1.1v0.8h-1.1zM62.1 9.2h9.2v0.8h-9.2zM63.5 7.9h1v1.3h-1zM66.4 8.7h1.1v0.5h-1.1zM68.6 8h0.8v1.2h-0.8zM72.6 9.2h19.9v0.8h-19.9zM73.9 8.5h0.9v0.7h-0.9zM73.9 6.3h.9v.9h-.9zM77.2 8.1h0.7v1h-0.7zM80.5 7.8h0.6v1.4h-0.6zM83.1 7.4h1.1v1.8h-1.1zM86 7.5h0.8v1.6h-0.8zM89.6 8.6h1v0.6h-1zM91.6 7.6h1v1.6h-1zM94.6 9.2h16.7v0.8h-16.7zM95.3 8.5h0.7v0.6h-0.7zM98.7 8.3h1v0.9h-1zM98.7 6.3h.9v.9h-.9zM101.2 7.6h1v1.6h-1zM104.7 7.8h1v1.4h-1zM108 7.9h0.7v1.3h-0.7zM113.6 9.2h19.5v0.8h-19.5zM114.5 8.3h0.8v0.9h-0.8zM116.7 7.8h0.6v1.4h-0.6zM119.5 7.4h1v1.8h-1zM121.8 8h0.7v1.1h-0.7zM123.7 8.1h0.7v1.1h-0.7zM126.6 8.1h0.6v1.1h-0.6zM129 8.1h0.8v1.1h-0.8zM131.4 8.6h1.1v0.6h-1.1z" fill="#fff" opacity=".8"/></svg>
</div>
<div style="position:absolute;left:1178px;top:684px;width:162px;height:22px;overflow:hidden"><div style="position:absolute;left:0;top:0;width:162px;height:123px;box-sizing:border-box;border:1px solid #c8c8c8;background:#fff"></div><div style="position:absolute;left:2px;top:2px;width:158px;height:119px;background:radial-gradient(ellipse 62% 88% at 47% 49%, #62838f 0%, #58788a 18%, #475c74 45%, #363f61 75%, #2c3456 100%)"></div>
<svg style="position:absolute;left:2px;top:2px;" width="158" height="119" viewBox="0 0 158 119"><path d="M80 9.2h5.7v0.8h-5.7zM81 7.6h1.1v1.6h-1.1zM83.1 7.7h0.8v1.4h-0.8zM87.7 9.2h12v0.8h-12zM88 7.4h0.9v1.8h-0.9zM90.6 7.7h0.7v1.4h-0.7zM93.7 7.8h0.9v1.4h-0.9zM96.2 7.3h1.1v1.9h-1.1zM101 9.2h10.3v0.8h-10.3zM101.4 7.3h0.9v1.8h-0.9zM104.3 7.2h0.8v1.9h-0.8zM107.9 8.4h0.9v0.8h-0.9zM113.4 9.2h11.6v0.8h-11.6zM114.6 7.8h0.6v1.4h-0.6zM117.1 8.2h0.7v0.9h-0.7zM120.5 7.9h1v1.2h-1zM123 7.8h0.6v1.4h-0.6zM40 18.2h19v0.8h-19zM41.2 16.7h0.8v1.5h-0.8zM44.2 16.2h0.9v1.9h-0.9zM47.5 16.9h0.8v1.3h-0.8zM50.2 17.2h0.9v1h-0.9zM53.7 16.3h0.9v1.8h-0.9zM53.7 19.5h.9v.9h-.9zM57 17.7h1.1v0.4h-1.1zM60.6 18.2h16.5v0.8h-16.5zM61.9 16.4h0.7v1.8h-0.7zM64.4 16.9h0.9v1.2h-0.9zM64.4 15.3h.9v.9h-.9zM67.2 17.3h0.7v0.8h-0.7zM67.2 19.5h.9v.9h-.9zM70.1 17.7h1v0.5h-1zM73.3 17.3h1v0.9h-1zM76.3 17.4h0.8v0.8h-0.8zM78.7 18.2h10.3v0.8h-10.3zM79.4 16.5h0.7v1.7h-0.7zM81.5 17.5h0.8v0.6h-0.8zM83.9 16.5h0.6v1.7h-0.6zM83.9 19.5h.9v.9h-.9zM86 17.7h0.7v0.4h-0.7zM90.6 18.2h6.7v0.8h-6.7zM91.4 16.3h0.9v1.8h-0.9zM94.7 17.6h0.7v0.5h-0.7zM99.1 18.2h11.1v0.8h-11.1zM99.2 17h0.8v1.2h-0.8zM99.2 15.3h.9v.9h-.9zM102.4 17.4h0.7v0.8h-0.7zM105.2 17h1v1.2h-1zM107.9 17.1h0.6v1h-0.6zM112.4 18.2h16.4v0.8h-16.4zM113.7 16.7h1v1.5h-1zM116.7 17.5h1.1v0.6h-1.1zM119.3 16.9h0.7v1.3h-0.7zM122.3 17.7h0.6v0.5h-0.6zM124.3 17.1h1v1.1h-1zM126.7 16.6h0.8v1.6h-0.8zM126.7 15.3h.9v.9h-.9zM130.4 18.2h9v0.8h-9zM131.7 17.5h1v0.7h-1zM135.2 16.8h0.7v1.4h-0.7zM137.5 17.4h1v0.7h-1zM141.7 18.2h8.3v0.8h-8.3zM142.5 17.7h1.1v0.4h-1.1zM142.5 15.3h.9v.9h-.9zM145.7 17.1h0.7v1h-0.7zM149 16.6h0.6v1.6h-0.6z" fill="#fff" opacity=".8"/></svg>
</div>
<span id="t51" style="position:absolute;left:1073px;top:652.62px;font-size:19px;line-height:19px;color:rgba(120,120,120,0.38);white-space:nowrap;transform:scaleX(1.0437);transform-origin:0 0;">Activate Windows</span>
<span id="t52" style="position:absolute;left:1073px;top:676.60px;font-size:15px;line-height:15px;color:rgba(120,120,120,0.38);white-space:nowrap;transform:scaleX(0.9946);transform-origin:0 0;">Go to Settings to activate Windows.</span>
<div style="position:absolute;left:0px;top:706px;width:1366px;height:22px;background:#f1f1f1;border-top:1px solid #d0d0d0;box-sizing:border-box"></div>
<span id="t53" style="position:absolute;left:7px;top:710.74px;font-size:12px;line-height:12px;color:#555;white-space:nowrap;transform:scaleX(0.9402);transform-origin:0 0;">Slide 34 of 34</span>
<svg style="position:absolute;left:95px;top:710px;" width="16" height="14" viewBox="0 0 16 14"><path d="M1 1.5c2-1 4-1 6 0v11c-2-1-4-1-6 0z M7 1.5c2-1 4-1 6 0v4M7 12.5c1-.5 2-.7 3-.6" fill="none" stroke="#666" stroke-width="1"/><path d="M9.5 8l2 2.5 3.5-6" fill="none" stroke="#666" stroke-width="1.1"/></svg>
<span id="t54" style="position:absolute;left:127.5px;top:710.74px;font-size:12px;line-height:12px;color:#555;white-space:nowrap;transform:scaleX(0.9411);transform-origin:0 0;">English (United States)</span>
<div style="position:absolute;left:1055px;top:707px;width:38px;height:21px;background:#d5d5d5"></div>
<svg style="position:absolute;left:1028px;top:709px;" width="16" height="15" viewBox="0 0 16 15"><rect x="0.5" y="0.5" width="14" height="13" fill="none" stroke="#777"/><rect x="4.5" y="2.5" width="8" height="7" fill="none" stroke="#777"/><path d="M2.5 2.5v9h10" fill="none" stroke="#777"/></svg>
<svg style="position:absolute;left:1067px;top:710px;" width="15" height="14" viewBox="0 0 15 14"><rect x="0.5" y="0.5" width="5.5" height="4.5" fill="none" stroke="#777"/><rect x="8.5" y="0.5" width="5.5" height="4.5" fill="none" stroke="#777"/><rect x="0.5" y="8.5" width="5.5" height="4.5" fill="none" stroke="#777"/><rect x="8.5" y="8.5" width="5.5" height="4.5" fill="none" stroke="#777"/></svg>
<svg style="position:absolute;left:1104px;top:709px;" width="15" height="15" viewBox="0 0 15 15"><path d="M1 1.5c2.5-1 4.5-1 6.5.5 2-1.5 4-1.5 6.5-.5v11c-2.5-1-4.5-1-6.5.5-2-1.5-4-1.5-6.5-.5z" fill="none" stroke="#777"/><path d="M7.5 2v11M2.5 4h3M2.5 6.5h3M2.5 9h3M9.5 4h3M9.5 6.5h3M9.5 9h3" stroke="#777" stroke-width="0.9"/></svg>
<svg style="position:absolute;left:1142px;top:710px;" width="15" height="14" viewBox="0 0 15 14"><path d="M0.5 1h14" stroke="#777"/><rect x="2" y="1.5" width="11" height="6" fill="none" stroke="#777"/><path d="M7.5 7.5v5M4 13h7" stroke="#777"/></svg>
<div style="position:absolute;left:1174px;top:716px;width:7px;height:2px;background:#666"></div>
<div style="position:absolute;left:1184px;top:716px;width:100px;height:1px;background:#a8a8a8"></div>
<div style="position:absolute;left:1234px;top:713px;width:1px;height:7px;background:#a8a8a8"></div>
<div style="position:absolute;left:1212px;top:711px;width:4px;height:11px;background:#666"></div>
<svg style="position:absolute;left:1288px;top:712px;" width="9" height="9" viewBox="0 0 9 9"><path d="M4.5 0v9M0 4.5h9" stroke="#555" stroke-width="1.8"/></svg>
<span id="t55" style="position:absolute;left:1311px;top:711.34px;font-size:12px;line-height:12px;color:#555;white-space:nowrap;transform:scaleX(0.8739);transform-origin:0 0;">66%</span>
<svg style="position:absolute;left:1345px;top:709px;" width="15" height="15" viewBox="0 0 15 15"><rect x="0.5" y="0.5" width="14" height="14" fill="none" stroke="#777"/><path d="M7.5 2.5v3M6 4l1.5-1.5L9 4M7.5 12.5v-3M6 11l1.5 1.5L9 11M2.5 7.5h3M4 6L2.5 7.5 4 9M12.5 7.5h-3M11 6l1.5 1.5L11 9" fill="none" stroke="#777" stroke-width="0.9"/></svg>
<div style="position:absolute;left:0px;top:728px;width:1366px;height:40px;background:radial-gradient(ellipse 120px 30px at 930px 5px, rgba(60,50,44,0.35), rgba(0,0,0,0) 100%),radial-gradient(ellipse 90px 25px at 560px 40px, rgba(60,50,44,0.3), rgba(0,0,0,0) 100%),linear-gradient(90deg,#141010 0%,#1a1512 30%,#211a16 50%,#201a16 65%,#110d0b 76%,#1a1411 90%,#131010 100%)"></div>
<svg style="position:absolute;left:15px;top:739px;" width="18" height="18" viewBox="0 0 18 18"><path d="M0 2.5l7-1v7H0zM8 1.3l9.5-1.3v8.5H8zM0 9.5h7v7l-7-1zM8 9.5h9.5V18L8 16.7z" fill="#fff"/></svg>
<div style="position:absolute;left:48px;top:728px;width:344px;height:40px;background:#363636"></div>
<svg style="position:absolute;left:56px;top:736px;" width="24" height="24" viewBox="0 0 24 24"><circle cx="12" cy="12" r="9.2" fill="none" stroke="#fff" stroke-width="2.6"/></svg>
<span id="t56" style="position:absolute;left:84.5px;top:740.60px;font-size:15px;line-height:15px;color:#a8a8a8;white-space:nowrap;transform:scaleX(0.9579);transform-origin:0 0;">Type here to search</span>
<svg style="position:absolute;left:365px;top:738px;" width="13" height="21" viewBox="0 0 13 21"><rect x="3" y="1" width="7" height="13" rx="3.5" fill="none" stroke="#999" stroke-width="1.3"/><path d="M1 9.5a5.5 5.5 0 0 0 11 0M6.5 15v4M3.5 19.5h6" fill="none" stroke="#999" stroke-width="1.2"/></svg>
<svg style="position:absolute;left:404px;top:741px;" width="24" height="15" viewBox="0 0 24 15"><rect x="4.5" y="1" width="15" height="13" fill="none" stroke="#fff" stroke-width="1.4"/><path d="M1 3.5v8M23 3.5v8" stroke="#fff" stroke-width="1.4"/></svg>
<svg style="position:absolute;left:456px;top:737px;" width="22" height="23" viewBox="0 0 22 23"><path d="M2 12c0-7 5-11 10-11 6 0 9.5 4 9.5 9H7.5c.2 4 3 6 6.5 6 2.8 0 5-.8 7-2v5c-2 1.3-4.5 2-7.5 2C6 21 2 17 2 12z" fill="#1e88e5"/><path d="M8 8h8c-.3-2.2-2-3.5-4-3.5S8.3 5.8 8 8z" fill="#1a1512"/></svg>
<svg style="position:absolute;left:505px;top:737px;" width="20" height="23" viewBox="0 0 20 23"><ellipse cx="10" cy="11.5" rx="9" ry="11" fill="#0b3d91"/><path d="M6 7.5l8 7-4 3.5V5l4 3.5-8 7" fill="none" stroke="#fff" stroke-width="1.5"/></svg>
<svg style="position:absolute;left:554px;top:739px;" width="23" height="19" viewBox="0 0 23 19"><path d="M1 2h7l2 2h12v14H1z" fill="#f0c040"/><rect x="1" y="6" width="21" height="12" fill="#ffd95c"/><path d="M7 18v-5h9v5" fill="#3fa9f5"/><rect x="9" y="13" width="5" height="5" fill="#ffd95c"/></svg>
<svg style="position:absolute;left:602px;top:737px;" width="25" height="23" viewBox="0 0 25 23"><path d="M4 1l18 4v11L4 13z" fill="#4fc3f7"/><path d="M6 3.5l14 3v8L6 12z" fill="#29a8e0"/><path d="M1 20l8-3 12 3-8 3z" fill="#ddd"/><path d="M10 15v3" stroke="#ccc" stroke-width="2"/></svg>
<svg style="position:absolute;left:651px;top:736px;" width="28" height="27" viewBox="0 0 28 27"><path d="M12 12L1.6 6A12 12 0 0 1 22.4 6z" fill="#e04436"/><path d="M12 12L22.4 6A12 12 0 0 1 12 24z" fill="#f7c21a"/><path d="M12 12L12 24A12 12 0 0 1 1.6 6z" fill="#1ea652"/><circle cx="12" cy="12" r="5.4" fill="#fff"/><circle cx="12" cy="12" r="4.3" fill="#3a7be0"/><circle cx="18.3" cy="18" r="7.6" fill="#cfe6f6"/><path d="M10.8 17.5l3-3.5 2.5 2 2.5-3.5 3 3 3.8 1.8v1.5H10.8z" fill="#5f9a78"/><path d="M10.8 19h15v1a7.6 7.6 0 0 1-15 0z" fill="#9cc7e4"/></svg>
<svg style="position:absolute;left:699px;top:737px;" width="25" height="24" viewBox="0 0 25 24"><path d="M2 14c-2-6 3-11 10-11s11 4 9 8-5 2-6 5 2 5-3 6S3 19 2 14z" fill="#b8d4e8"/><circle cx="7" cy="11" r="2" fill="#e53935"/><circle cx="11" cy="7" r="2" fill="#43a047"/><circle cx="16" cy="7" r="2" fill="#fdd835"/><circle cx="11" cy="14" r="1.6" fill="#222"/><path d="M12 22L23 2" stroke="#d4a040" stroke-width="2.2"/></svg>
<svg style="position:absolute;left:748px;top:737px;" width="25" height="24" viewBox="0 0 25 24"><path d="M10 3h13v18H10z" fill="#fff"/><path d="M12 6h9M12 9h9M12 12h9M12 15h9M12 18h9" stroke="#2b579a" stroke-width="1.2"/><path d="M0 3.5L14 1v22L0 20.5z" fill="#2b579a"/><text x="2" y="16" font-size="10" fill="#fff" font-weight="bold" font-family="Liberation Sans">W</text></svg>
<div style="position:absolute;left:786px;top:728px;width:48px;height:40px;background:#3b3835"></div>
<svg style="position:absolute;left:797px;top:737px;" width="25" height="24" viewBox="0 0 25 24"><path d="M10 3h13v18H10z" fill="#fff"/><circle cx="16" cy="9" r="4" fill="none" stroke="#d24726" stroke-width="1.6"/><path d="M12 15h9M12 18h9" stroke="#d24726" stroke-width="1.2"/><path d="M0 3.5L14 1v22L0 20.5z" fill="#d24726"/><text x="3" y="16" font-size="10" fill="#fff" font-weight="bold" font-family="Liberation Sans">P</text></svg>
<div style="position:absolute;left:643px;top:766px;width:40px;height:2px;background:#e991c0"></div>
<div style="position:absolute;left:692px;top:766px;width:40px;height:2px;background:#e991c0"></div>
<div style="position:absolute;left:741px;top:766px;width:40px;height:2px;background:#e991c0"></div>
<div style="position:absolute;left:786px;top:766px;width:48px;height:2px;background:#e991c0"></div>
<svg style="position:absolute;left:1098px;top:743px;" width="14" height="9" viewBox="0 0 14 9"><path d="M1 8l6-6.5L13 8" fill="none" stroke="#fff" stroke-width="1.5"/></svg>
<svg style="position:absolute;left:1122px;top:740px;" width="13" height="16" viewBox="0 0 13 16"><ellipse cx="6.5" cy="8" rx="6" ry="7.8" fill="#173f7c"/><path d="M3.5 5l6 5-3 2.5V3.5l3 2.5-6 5" fill="none" stroke="#fff" stroke-width="1.1"/></svg>
<svg style="position:absolute;left:1144px;top:740px;" width="18" height="16" viewBox="0 0 18 16"><path d="M1 5.5h3l4-4v13l-4-4H1z" fill="none" stroke="#fff" stroke-width="1.2"/><path d="M10.5 5.5a3.5 3.5 0 0 1 0 5M12.5 3.5a6 6 0 0 1 0 9M14.5 1.5a9 9 0 0 1 0 13" fill="none" stroke="#fff" stroke-width="1.2"/></svg>
<svg style="position:absolute;left:1168px;top:742px;" width="19" height="11" viewBox="0 0 19 11"><path d="M2 0.5v3M5 0.5v3M0.5 3.5h6v2a3 3 0 0 1-6 0z" fill="none" stroke="#fff" stroke-width="1"/><path d="M3.5 8.5v2" stroke="#fff"/><rect x="6.5" y="2.5" width="10.5" height="7" fill="none" stroke="#fff" stroke-width="1.2"/><rect x="8" y="4" width="8" height="4" fill="#fff"/><path d="M18 4.5v3" stroke="#fff" stroke-width="1.2"/></svg>
<div style="position:absolute;left:1189px;top:728px;width:24px;height:40px;background:rgba(255,255,255,0.1)"></div>
<svg style="position:absolute;left:1195px;top:742px;" width="14" height="13" viewBox="0 0 14 13"><path d="M1 12a11 11 0 0 1 11-11M3.5 12a8.5 8.5 0 0 1 8.5-8.5M6 12a6 6 0 0 1 6-6M8.5 12A3.5 3.5 0 0 1 12 8.5" fill="none" stroke="#ddd" stroke-width="1.1"/><circle cx="12" cy="11.5" r="1.5" fill="#fff"/></svg>
<svg style="position:absolute;left:1200px;top:728px" width="60" height="20"><path transform="translate(26 7) scale(1.1724 1)" d="M5 1.50 5 2.25 5.75 2.25 5.75 1.50zM0 0 0 7.50 0.38 8.38 1.25 9 5 9 6.12 8.62 6.88 7.75 7.12 7 7.25 4.88 6.88 4.12 6 3.38 4.50 3.50 3.75 4.12 3.50 4.88 3.62 6 4.12 6.62 5.12 7 5.88 6.75 6.12 6.88 5.38 7.88 1.62 8 1.12 7.62 1 0zM5.25 4.38 5.62 4.38 6.25 5.12 6.12 5.75 5.62 6.12 5.12 6.12 4.50 5.38 4.62 4.88z" fill="#fff" fill-rule="evenodd"/></svg>
<span id="t57" style="position:absolute;left:1224.5px;top:750.44px;font-size:12px;line-height:12px;color:#fff;white-space:nowrap;transform:scaleX(0.8520);transform-origin:0 0;">FA</span>
<span id="t58" style="position:absolute;left:1260.5px;top:732.64px;font-size:12px;line-height:12px;color:#fff;white-space:nowrap;transform:scaleX(0.9172);transform-origin:0 0;">5:28 PM</span>
<span id="t59" style="position:absolute;left:1258px;top:750.44px;font-size:12px;line-height:12px;color:#fff;white-space:nowrap;transform:scaleX(0.9846);transform-origin:0 0;">4/4/2024</span>
<svg style="position:absolute;left:1324px;top:739px;" width="26" height="27" viewBox="0 0 26 27"><path d="M1 1h16v13H8.5l-3 3v-3H1z" fill="#fff"/><path d="M4 4.5h10M4 7.5h10M4 10.5h6.5" stroke="#111" stroke-width="1.3"/><circle cx="16.6" cy="16.6" r="7.8" fill="#232323" stroke="#9a9a9a" stroke-width="1"/><path d="M13.8 13.8c.5-1.3 1.5-1.9 2.7-1.9 1.6 0 2.6 1 2.6 2.3 0 1.5-1 2.6-5 6v.3h5.3" fill="none" stroke="#fff" stroke-width="1.7"/></svg>
<div style="position:absolute;left:1361px;top:728px;width:1px;height:40px;background:#555"></div>
</body></html>
